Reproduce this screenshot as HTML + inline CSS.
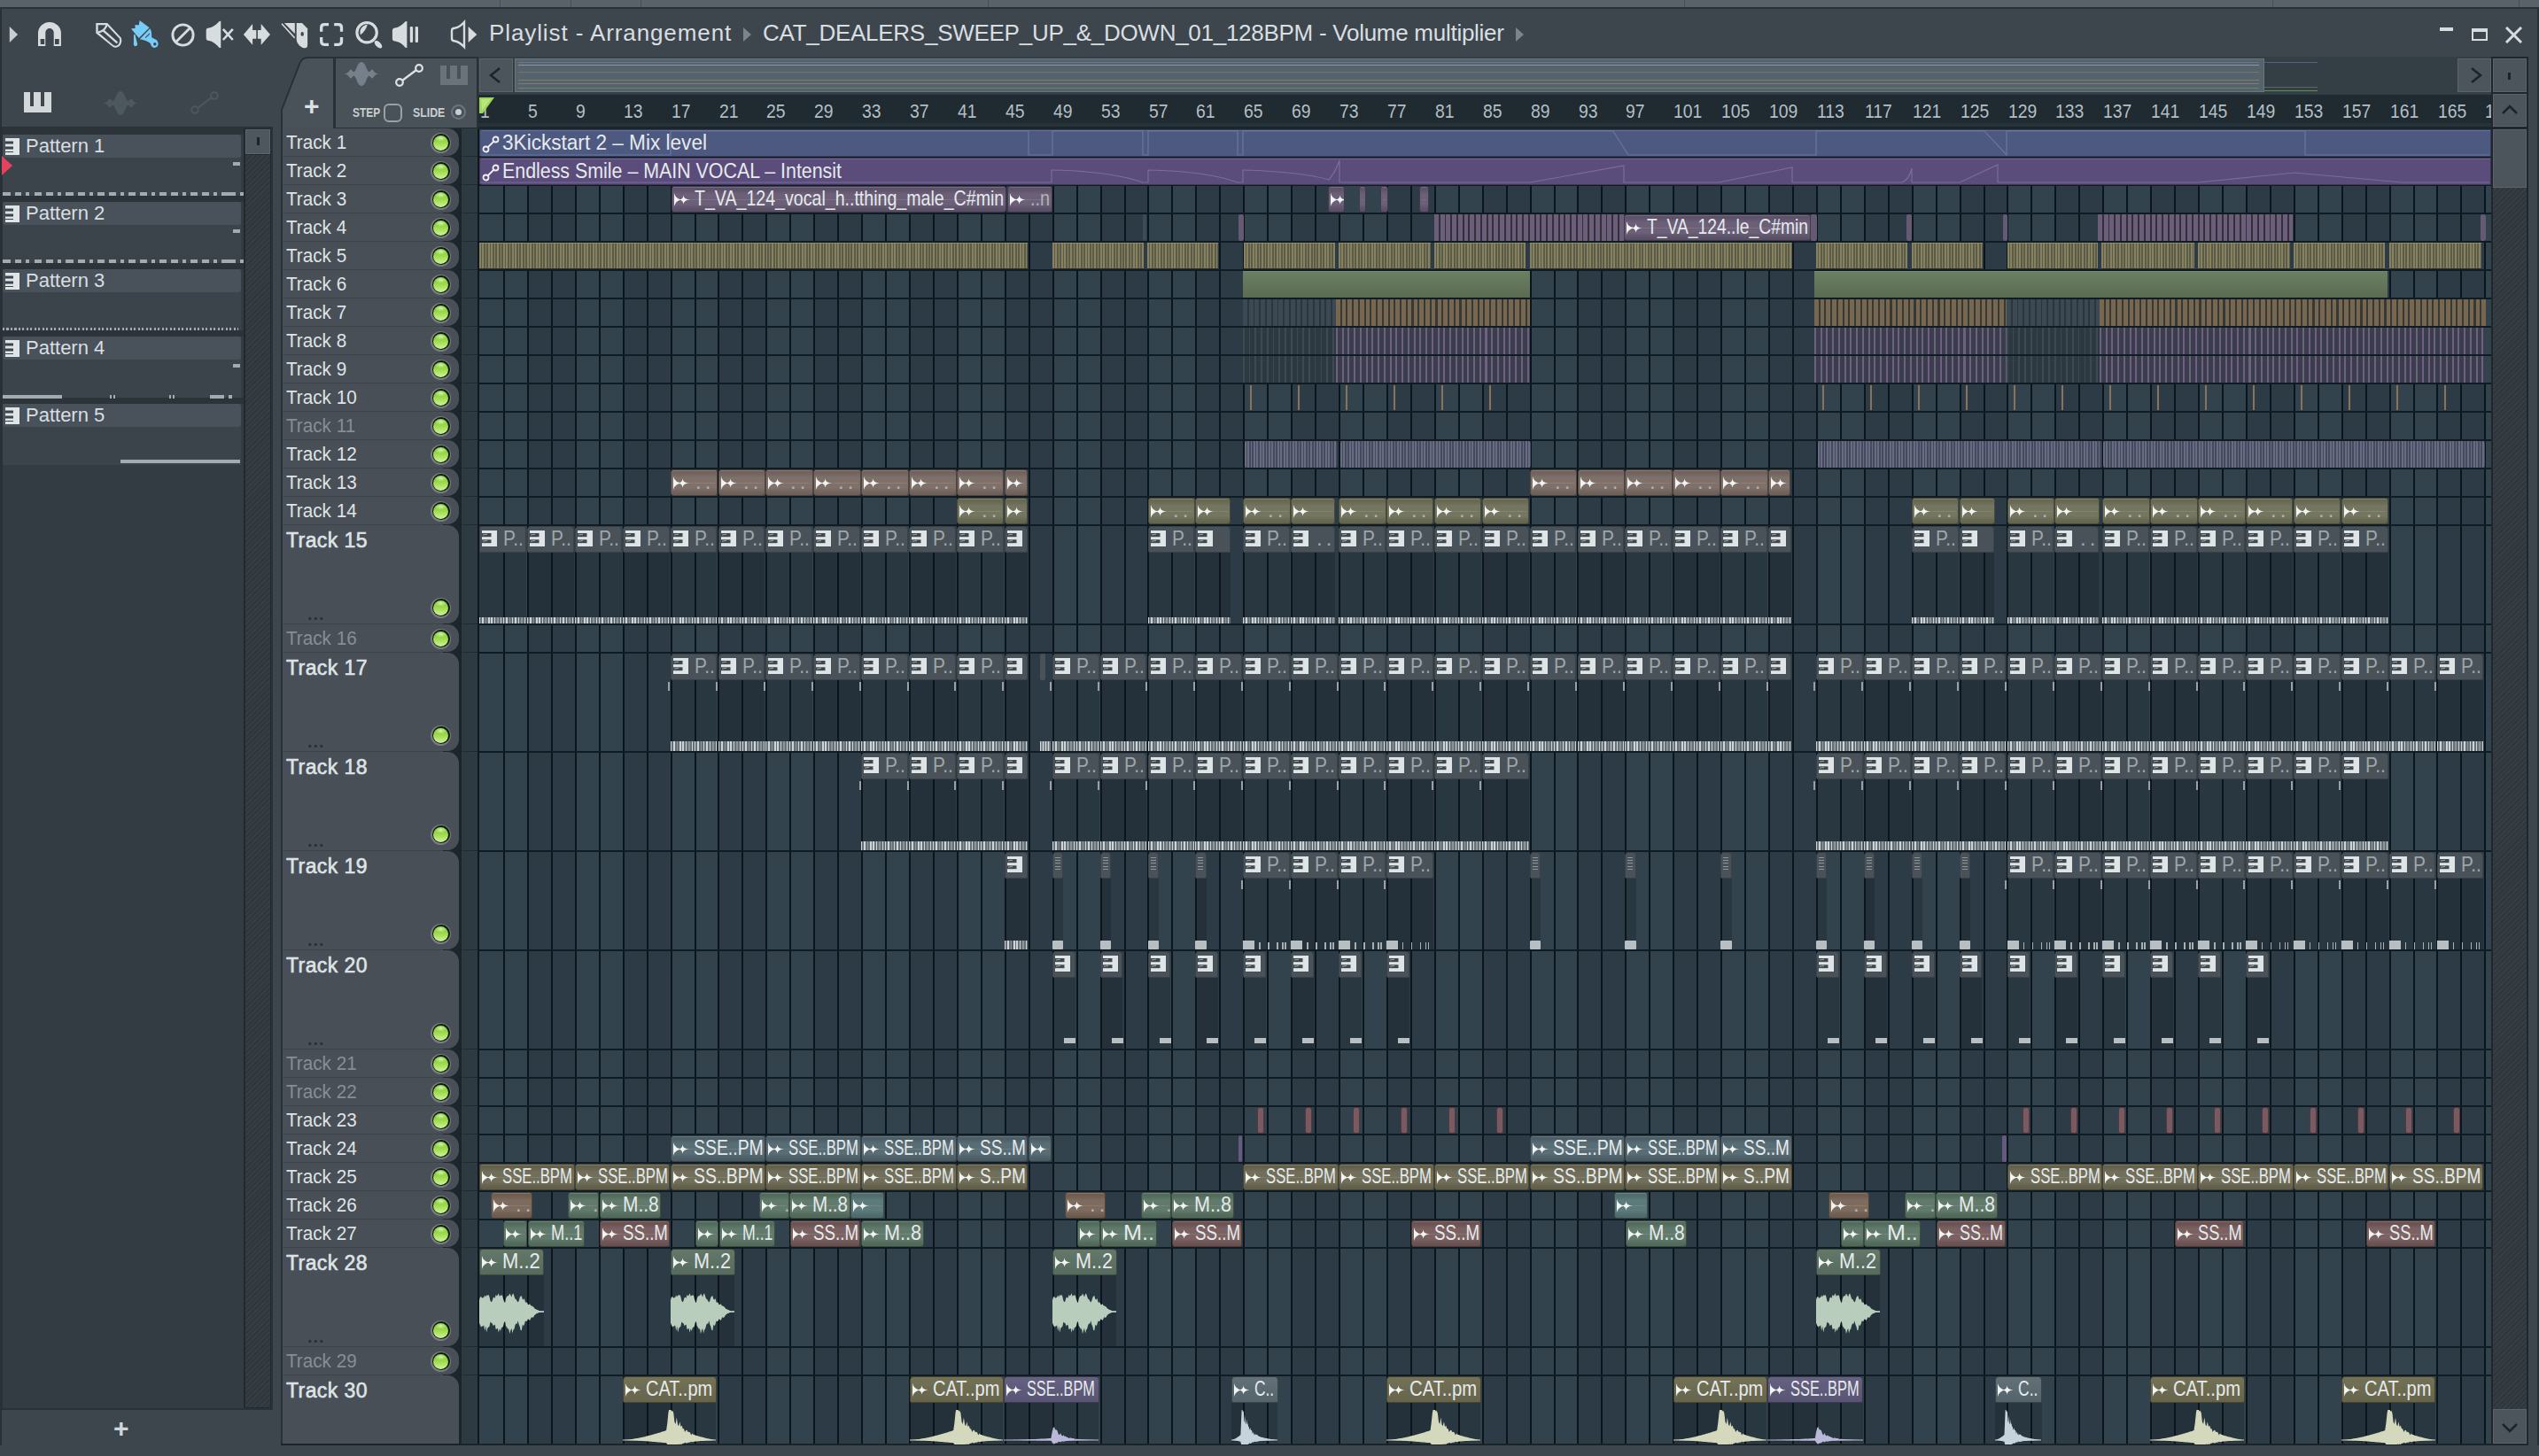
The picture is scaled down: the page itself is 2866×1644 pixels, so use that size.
<!DOCTYPE html><html><head><meta charset="utf-8"><style>
*{margin:0;padding:0;box-sizing:border-box}
html,body{width:2866px;height:1644px;overflow:hidden;background:#3e464d;font-family:"Liberation Sans",sans-serif}
div,span,svg{position:absolute}
.t{white-space:nowrap;color:#d8dde0;line-height:1}
.cl{border-radius:3px;overflow:hidden}
.lab{white-space:nowrap;color:#e6eaec;font-size:24px;line-height:1;transform-origin:0 0;transform:scaleX(0.70);letter-spacing:0.5px}
.lab i{font-style:normal;letter-spacing:1.5px}
</style></head><body><div style="left:0.0px;top:0.0px;width:2866.0px;height:8.0px;background:#59616a"></div>
<div style="left:564.0px;top:0.0px;width:1.0px;height:8.0px;background:#474e55"></div>
<div style="left:644.0px;top:0.0px;width:1.0px;height:8.0px;background:#474e55"></div>
<div style="left:723.0px;top:0.0px;width:1.0px;height:8.0px;background:#474e55"></div>
<div style="left:1115.0px;top:0.0px;width:1.0px;height:8.0px;background:#474e55"></div>
<div style="left:1901.0px;top:0.0px;width:1.0px;height:8.0px;background:#474e55"></div>
<div style="left:2565.0px;top:0.0px;width:1.0px;height:8.0px;background:#474e55"></div>
<div style="left:2843.0px;top:0.0px;width:1.0px;height:8.0px;background:#474e55"></div>
<div style="left:0.0px;top:8.0px;width:2866.0px;height:2.0px;background:#2b3237"></div>
<div style="left:0.0px;top:10.0px;width:2.0px;height:1634.0px;background:#2a3136"></div>
<div style="left:2864.0px;top:10.0px;width:2.0px;height:1634.0px;background:#2a3136"></div>
<svg style="left:0;top:0" width="560" height="60" viewBox="0 0 560 60"><path d="M10.8 29.9 L20.1 39 L10.8 48 Z" fill="#c9ced2"/><path d="M43 51.9 L43 36.5 A13 12.7 0 0 1 68.9 36.5 L68.9 51.9 L60.7 51.9 L60.7 36.7 A4.7 4.7 0 0 0 51.3 36.7 L51.3 51.9 Z" fill="#d7dcdf"/><path d="M45.5 43.9 H50.2 V49.9 H45.8 Z M62 43.9 H66.8 L66.6 49.9 H62 Z" fill="#3e464d"/><path d="M108.3 26 H121.2 L136.6 42.5 Q138.6 47.5 135 51.8 Q131 55.3 127 52.6 L108.3 37.6 Z" fill="#d7dcdf"/><path d="M110.7 28.2 H120.4 L134.8 43.4 Q136 47.6 133.3 50.4 Q130.5 52.8 127.6 50.7 L110.7 36.3 Z" fill="#3e464d"/><path d="M110.9 36.4 Q118 35.5 120.6 28.2" fill="none" stroke="#d7dcdf" stroke-width="2.2"/><path d="M116.2 34.2 L132.4 48.3" stroke="#d7dcdf" stroke-width="2.3"/><g transform="translate(148 23)" fill="#78cdf8"><path d="M0 9.5 L4.8 8.8 L4.2 5.3 L8.8 5.2 L9.6 0 L20.6 8.3 L8.8 20 Z"/><path d="M21.4 9.2 Q23.4 12 23.2 19.2 Q27 20.8 29.2 22.6 Q31.2 25.5 30.2 28.8 Q28.4 31.5 25 30.8 Q22.4 29.6 21.6 25.8 Q17.2 22.6 9.8 21.2 Z"/><path d="M3 16.2 L4.4 15.8 L7.2 27 Q6.8 29.2 4.6 29.2 Q3.2 28.8 2.9 27.2 Z"/><circle cx="26.8" cy="26.8" r="1.7" fill="#3e464d"/><path d="M16.2 19.6 L21 14.8" stroke="#3e464d" stroke-width="1.1"/></g><circle cx="206.5" cy="39.5" r="11.6" fill="none" stroke="#d7dcdf" stroke-width="2.9"/><path d="M198.5 47.5 L214.5 31.5" stroke="#d7dcdf" stroke-width="2.9"/><path d="M232.7 34.3 Q232.7 31.5 236 31.5 Q241.5 30.8 247.6 24 L249.3 23.8 V54.1 L247.6 54 Q241.5 47 236 46.1 Q232.7 46 232.7 43 Z" fill="#d7dcdf"/><path d="M251.8 32.8 L262.8 45 M262.8 32.8 L251.8 45" stroke="#d7dcdf" stroke-width="2.6"/><path d="M274.9 39 L285.1 27.1 V34 H289.3 V43.7 H285.1 V50.8 Z M305 39 L294.7 27.1 V34 H290.9 V43.7 H294.7 V50.8 Z" fill="#d7dcdf"/><path d="M318 26.8 L332.6 42.8" stroke="#d7dcdf" stroke-width="1.6"/><path d="M320.9 26 H332.8 V38.1 Z" fill="#d7dcdf"/><path d="M334.7 26 H341 L347.1 32.2 V51 Q347.1 54.2 344 54.2 Q341 54.2 338 51.5 Q334.7 48.5 334.7 45 Z" fill="#d7dcdf"/><ellipse cx="341.2" cy="38.4" rx="1.7" ry="2.4" fill="#3e464d"/><path d="M362.7 35.8 V31 Q362.7 27.6 366.2 27.6 H371 M377.2 27.6 H382 Q385.5 27.6 385.5 31 V35.8 M385.5 42 V46.8 Q385.5 50.3 382 50.3 H377.2 M371 50.3 H366.2 Q362.7 50.3 362.7 46.8 V42" fill="none" stroke="#d7dcdf" stroke-width="3.3"/><circle cx="414.1" cy="36.7" r="11.2" fill="none" stroke="#d7dcdf" stroke-width="3.2"/><path d="M406.8 39.6 Q405.2 33 410 29.5 Q412.6 28 414.9 27.4 Q413 34.5 406.8 39.6 Z" fill="#d7dcdf"/><ellipse cx="427" cy="50.2" rx="5.4" ry="2.8" transform="rotate(45 427 50.2)" fill="#d7dcdf"/><path d="M442.9 34.5 Q442.9 31.6 446 31.4 Q452 30.5 457.6 24.2 L459.4 24 V54 L457.6 53.8 Q452 47.2 446 46.6 Q442.9 46.4 442.9 43.5 Z" fill="#d7dcdf"/><rect x="462.8" y="30" width="3.3" height="18" rx="1.2" fill="#d7dcdf"/><rect x="468.7" y="30" width="3.3" height="18" rx="1.2" fill="#d7dcdf"/><path d="M510 34.6 Q510 32 513 31.8 Q518.5 31 524 25 V53 Q518.5 47 513 46.2 Q510 46 510 43.4 Z" fill="none" stroke="#d7dcdf" stroke-width="2.4"/><path d="M528.6 30 L538.3 39 L528.6 48 Z" fill="#d7dcdf"/></svg>
<span class="t" style="left:552px;top:24px;font-size:26px;letter-spacing:0.9px;color:#d9dee1">Playlist - Arrangement</span>
<svg style="left:839px;top:31px" width="10" height="16" viewBox="0 0 10 16"><path d="M0 0 L9 8 L0 16Z" fill="#7d858b"/></svg>
<span class="t" style="left:861px;top:24px;font-size:26px;letter-spacing:-0.27px;color:#d9dee1">CAT_DEALERS_SWEEP_UP_&amp;_DOWN_01_128BPM - Volume multiplier</span>
<svg style="left:1711px;top:31px" width="10" height="16" viewBox="0 0 10 16"><path d="M0 0 L9 8 L0 16Z" fill="#7d858b"/></svg>
<div style="left:2754.0px;top:31.0px;width:15.0px;height:4.0px;background:#d7dcdf"></div>
<div style="left:2790.0px;top:32.0px;width:18.0px;height:14.0px;border:2.5px solid #d7dcdf;border-top-width:4px"></div>
<svg style="left:2828px;top:30px" width="19" height="19" viewBox="0 0 19 19"><path d="M1 1 L18 18 M18 1 L1 18" stroke="#d7dcdf" stroke-width="3"/></svg>
<svg style="left:27px;top:104px" width="32" height="23" viewBox="0 0 32 23"><path d="M0 0 H31 V23 H0 Z" fill="#d2d7da"/><rect x="7" y="0" width="4" height="16" fill="#3e454c"/><rect x="19" y="0" width="4" height="16" fill="#3e454c"/></svg>
<svg style="left:116px;top:103px" width="41" height="27" viewBox="0 0 41 27"><path d="M0 13.5 Q4 13.5 6 10.5 Q8 6.5 10 10.5 Q12 13 14 8 Q16.5 0 20 0 Q23.5 0 26 8 Q28 13 30 10.5 Q32 6.5 34 10.5 Q36 13.5 40 13.5 Q36 13.5 34 16.5 Q32 20.5 30 16.5 Q28 14 26 19 Q23.5 27 20 27 Q16.5 27 14 19 Q12 14 10 16.5 Q8 20.5 6 16.5 Q4 13.5 0 13.5 Z" fill="#4d575e"/></svg>
<svg style="left:215px;top:103px" width="33" height="27" viewBox="0 0 33 27"><circle cx="5" cy="21" r="3.8" fill="none" stroke="#4d575e" stroke-width="2"/><circle cx="27" cy="5" r="3.8" fill="none" stroke="#4d575e" stroke-width="2"/><path d="M8 19 L24 7" stroke="#4d575e" stroke-width="2"/></svg>
<div style="left:2.0px;top:143.0px;width:306.0px;height:1449.0px;background:#2a3237"></div>
<div style="left:3.0px;top:145.0px;width:272.0px;height:1445.0px;background:#343c43"></div>
<div style="left:275.0px;top:145.0px;width:31.0px;height:1445.0px;background:#222a2f"></div>
<div style="left:277.0px;top:175.0px;width:28.0px;height:1414.0px;background:repeating-linear-gradient(135deg,#2f373d 0 2px,#363e44 2px 4px)"></div>
<div style="left:277.0px;top:146.0px;width:28.0px;height:28.0px;background:#4f575e;border:1px solid #5d656b"></div>
<div style="left:290.0px;top:155.0px;width:3.0px;height:9.0px;background:#1d2328"></div>
<div style="left:3.0px;top:145.0px;width:272.0px;height:7.0px;background:#2c343a"></div>
<div style="left:3.0px;top:152.0px;width:269.0px;height:26.0px;background:#49525a;border-radius:2px"></div>
<div style="left:3.0px;top:178.0px;width:269.0px;height:43.0px;background:#3b444b"></div>
<svg style="left:6px;top:156px" width="16" height="19" viewBox="0 0 16 19"><rect x="0" y="0" width="16" height="19" fill="#dfe4e6"/><rect x="0" y="3.5" width="9" height="3" fill="#3b444b"/><rect x="0" y="9.5" width="9" height="3" fill="#3b444b"/><rect x="0" y="15" width="9" height="1" fill="#3b444b"/></svg>
<span class="t" style="left:29px;top:154px;font-size:22px;color:#d9dee1">Pattern 1</span>
<div style="left:3.0px;top:221.0px;width:272.0px;height:7.0px;background:#2c343a"></div>
<div style="left:3.0px;top:228.0px;width:269.0px;height:26.0px;background:#49525a;border-radius:2px"></div>
<div style="left:3.0px;top:254.0px;width:269.0px;height:43.0px;background:#3b444b"></div>
<svg style="left:6px;top:232px" width="16" height="19" viewBox="0 0 16 19"><rect x="0" y="0" width="16" height="19" fill="#dfe4e6"/><rect x="0" y="3.5" width="9" height="3" fill="#3b444b"/><rect x="0" y="9.5" width="9" height="3" fill="#3b444b"/><rect x="0" y="15" width="9" height="1" fill="#3b444b"/></svg>
<span class="t" style="left:29px;top:230px;font-size:22px;color:#d9dee1">Pattern 2</span>
<div style="left:3.0px;top:297.0px;width:272.0px;height:7.0px;background:#2c343a"></div>
<div style="left:3.0px;top:304.0px;width:269.0px;height:26.0px;background:#49525a;border-radius:2px"></div>
<div style="left:3.0px;top:330.0px;width:269.0px;height:43.0px;background:#3b444b"></div>
<svg style="left:6px;top:308px" width="16" height="19" viewBox="0 0 16 19"><rect x="0" y="0" width="16" height="19" fill="#dfe4e6"/><rect x="0" y="3.5" width="9" height="3" fill="#3b444b"/><rect x="0" y="9.5" width="9" height="3" fill="#3b444b"/><rect x="0" y="15" width="9" height="1" fill="#3b444b"/></svg>
<span class="t" style="left:29px;top:306px;font-size:22px;color:#d9dee1">Pattern 3</span>
<div style="left:3.0px;top:373.0px;width:272.0px;height:7.0px;background:#2c343a"></div>
<div style="left:3.0px;top:380.0px;width:269.0px;height:26.0px;background:#49525a;border-radius:2px"></div>
<div style="left:3.0px;top:406.0px;width:269.0px;height:43.0px;background:#3b444b"></div>
<svg style="left:6px;top:384px" width="16" height="19" viewBox="0 0 16 19"><rect x="0" y="0" width="16" height="19" fill="#dfe4e6"/><rect x="0" y="3.5" width="9" height="3" fill="#3b444b"/><rect x="0" y="9.5" width="9" height="3" fill="#3b444b"/><rect x="0" y="15" width="9" height="1" fill="#3b444b"/></svg>
<span class="t" style="left:29px;top:382px;font-size:22px;color:#d9dee1">Pattern 4</span>
<div style="left:3.0px;top:449.0px;width:272.0px;height:7.0px;background:#2c343a"></div>
<div style="left:3.0px;top:456.0px;width:269.0px;height:26.0px;background:#49525a;border-radius:2px"></div>
<div style="left:3.0px;top:482.0px;width:269.0px;height:43.0px;background:#3b444b"></div>
<svg style="left:6px;top:460px" width="16" height="19" viewBox="0 0 16 19"><rect x="0" y="0" width="16" height="19" fill="#dfe4e6"/><rect x="0" y="3.5" width="9" height="3" fill="#3b444b"/><rect x="0" y="9.5" width="9" height="3" fill="#3b444b"/><rect x="0" y="15" width="9" height="1" fill="#3b444b"/></svg>
<span class="t" style="left:29px;top:458px;font-size:22px;color:#d9dee1">Pattern 5</span>
<div style="left:3.0px;top:217.0px;width:9.0px;height:4.0px;background:#a4abb0"></div>
<div style="left:17.0px;top:217.0px;width:7.0px;height:4.0px;background:#a4abb0"></div>
<div style="left:29.0px;top:217.0px;width:4.0px;height:4.0px;background:#a4abb0"></div>
<div style="left:39.0px;top:217.0px;width:8.0px;height:4.0px;background:#a4abb0"></div>
<div style="left:52.0px;top:217.0px;width:8.0px;height:4.0px;background:#a4abb0"></div>
<div style="left:65.0px;top:217.0px;width:4.0px;height:4.0px;background:#a4abb0"></div>
<div style="left:74.0px;top:217.0px;width:9.0px;height:4.0px;background:#a4abb0"></div>
<div style="left:88.0px;top:217.0px;width:8.0px;height:4.0px;background:#a4abb0"></div>
<div style="left:101.0px;top:217.0px;width:4.0px;height:4.0px;background:#a4abb0"></div>
<div style="left:110.0px;top:217.0px;width:8.0px;height:4.0px;background:#a4abb0"></div>
<div style="left:123.0px;top:217.0px;width:8.0px;height:4.0px;background:#a4abb0"></div>
<div style="left:136.0px;top:217.0px;width:4.0px;height:4.0px;background:#a4abb0"></div>
<div style="left:145.0px;top:217.0px;width:8.0px;height:4.0px;background:#a4abb0"></div>
<div style="left:158.0px;top:217.0px;width:8.0px;height:4.0px;background:#a4abb0"></div>
<div style="left:171.0px;top:217.0px;width:4.0px;height:4.0px;background:#a4abb0"></div>
<div style="left:180.0px;top:217.0px;width:8.0px;height:4.0px;background:#a4abb0"></div>
<div style="left:193.0px;top:217.0px;width:8.0px;height:4.0px;background:#a4abb0"></div>
<div style="left:206.0px;top:217.0px;width:4.0px;height:4.0px;background:#a4abb0"></div>
<div style="left:215.0px;top:217.0px;width:8.0px;height:4.0px;background:#a4abb0"></div>
<div style="left:228.0px;top:217.0px;width:8.0px;height:4.0px;background:#a4abb0"></div>
<div style="left:241.0px;top:217.0px;width:4.0px;height:4.0px;background:#a4abb0"></div>
<div style="left:250.0px;top:217.0px;width:16.0px;height:4.0px;background:#a4abb0"></div>
<div style="left:271.0px;top:217.0px;width:4.0px;height:4.0px;background:#a4abb0"></div>
<div style="left:3.0px;top:293.0px;width:9.0px;height:4.0px;background:#a4abb0"></div>
<div style="left:17.0px;top:293.0px;width:7.0px;height:4.0px;background:#a4abb0"></div>
<div style="left:29.0px;top:293.0px;width:4.0px;height:4.0px;background:#a4abb0"></div>
<div style="left:39.0px;top:293.0px;width:8.0px;height:4.0px;background:#a4abb0"></div>
<div style="left:52.0px;top:293.0px;width:8.0px;height:4.0px;background:#a4abb0"></div>
<div style="left:65.0px;top:293.0px;width:4.0px;height:4.0px;background:#a4abb0"></div>
<div style="left:74.0px;top:293.0px;width:9.0px;height:4.0px;background:#a4abb0"></div>
<div style="left:88.0px;top:293.0px;width:8.0px;height:4.0px;background:#a4abb0"></div>
<div style="left:101.0px;top:293.0px;width:4.0px;height:4.0px;background:#a4abb0"></div>
<div style="left:110.0px;top:293.0px;width:8.0px;height:4.0px;background:#a4abb0"></div>
<div style="left:123.0px;top:293.0px;width:8.0px;height:4.0px;background:#a4abb0"></div>
<div style="left:136.0px;top:293.0px;width:4.0px;height:4.0px;background:#a4abb0"></div>
<div style="left:145.0px;top:293.0px;width:8.0px;height:4.0px;background:#a4abb0"></div>
<div style="left:158.0px;top:293.0px;width:8.0px;height:4.0px;background:#a4abb0"></div>
<div style="left:171.0px;top:293.0px;width:4.0px;height:4.0px;background:#a4abb0"></div>
<div style="left:180.0px;top:293.0px;width:8.0px;height:4.0px;background:#a4abb0"></div>
<div style="left:193.0px;top:293.0px;width:8.0px;height:4.0px;background:#a4abb0"></div>
<div style="left:206.0px;top:293.0px;width:4.0px;height:4.0px;background:#a4abb0"></div>
<div style="left:215.0px;top:293.0px;width:8.0px;height:4.0px;background:#a4abb0"></div>
<div style="left:228.0px;top:293.0px;width:8.0px;height:4.0px;background:#a4abb0"></div>
<div style="left:241.0px;top:293.0px;width:4.0px;height:4.0px;background:#a4abb0"></div>
<div style="left:250.0px;top:293.0px;width:16.0px;height:4.0px;background:#a4abb0"></div>
<div style="left:271.0px;top:293.0px;width:4.0px;height:4.0px;background:#a4abb0"></div>
<div style="left:263.0px;top:183.0px;width:8.0px;height:4.0px;background:#a4abb0"></div>
<div style="left:263.0px;top:259.0px;width:8.0px;height:4.0px;background:#a4abb0"></div>
<div style="left:3.0px;top:370.0px;width:266.0px;height:3.0px;background:repeating-linear-gradient(90deg,#a4abb0 0 2px,transparent 2px 4.5px)"></div>
<div style="left:3.0px;top:446.0px;width:67.0px;height:4.0px;background:#a4abb0"></div>
<div style="left:124.0px;top:446.0px;width:2.0px;height:4.0px;background:#a4abb0"></div>
<div style="left:128.0px;top:446.0px;width:2.0px;height:4.0px;background:#a4abb0"></div>
<div style="left:191.0px;top:446.0px;width:2.0px;height:4.0px;background:#a4abb0"></div>
<div style="left:195.0px;top:446.0px;width:2.0px;height:4.0px;background:#a4abb0"></div>
<div style="left:237.0px;top:446.0px;width:16.0px;height:4.0px;background:#a4abb0"></div>
<div style="left:258.0px;top:446.0px;width:4.0px;height:4.0px;background:#a4abb0"></div>
<div style="left:263.0px;top:411.0px;width:8.0px;height:4.0px;background:#a4abb0"></div>
<div style="left:136.0px;top:519.0px;width:135.0px;height:4.0px;background:#a4abb0"></div>
<svg style="left:2px;top:176px" width="13" height="22" viewBox="0 0 13 22"><path d="M0 0 L12 11 L0 22Z" fill="#e4435f"/></svg>
<span class="t" style="left:128px;top:1598px;font-size:30px;font-weight:bold;color:#d0d5d8">+</span>
<svg style="left:317px;top:64px" width="223" height="82" viewBox="0 0 223 82"><path d="M1 82 V60 L22 6 Q25 1 31 1 H60 V82 Z" fill="#4a5259" stroke="#2a3136" stroke-width="2"/><rect x="61" y="1" width="161" height="80" fill="#4a5259" stroke="#2a3136" stroke-width="2"/></svg>
<span class="t" style="left:343px;top:105px;font-size:30px;font-weight:bold;color:#dde2e4">+</span>
<svg style="left:388px;top:70px" width="41" height="28" viewBox="0 0 41 28"><path d="M0 13.5 Q4 13.5 6 10.5 Q8 6.5 10 10.5 Q12 13 14 8 Q16.5 0 20 0 Q23.5 0 26 8 Q28 13 30 10.5 Q32 6.5 34 10.5 Q36 13.5 40 13.5 Q36 13.5 34 16.5 Q32 20.5 30 16.5 Q28 14 26 19 Q23.5 27 20 27 Q16.5 27 14 19 Q12 14 10 16.5 Q8 20.5 6 16.5 Q4 13.5 0 13.5 Z" fill="#76808a"/></svg>
<svg style="left:446px;top:72px" width="33" height="27" viewBox="0 0 33 27"><circle cx="5" cy="21" r="3.8" fill="none" stroke="#dfe3e6" stroke-width="2.2"/><circle cx="27" cy="5" r="3.8" fill="none" stroke="#dfe3e6" stroke-width="2.2"/><path d="M8 19 L24 7" stroke="#dfe3e6" stroke-width="2.2"/></svg>
<svg style="left:497px;top:74px" width="31" height="22" viewBox="0 0 31 22"><path d="M0 0 H31 V22 H0 Z" fill="#6a737a"/><rect x="7" y="0" width="4" height="15" fill="#4a5259"/><rect x="19" y="0" width="4" height="15" fill="#4a5259"/></svg>
<span class="t" style="left:398px;top:120px;font-size:14px;font-weight:bold;color:#c9ced2;transform:scaleX(0.85);transform-origin:0 0">STEP</span>
<div style="left:433.0px;top:117.0px;width:21.0px;height:21.0px;border:2px solid #9aa1a6;border-radius:6px"></div>
<span class="t" style="left:466px;top:120px;font-size:14px;font-weight:bold;color:#c9ced2;transform:scaleX(0.88);transform-origin:0 0">SLIDE</span>
<div style="left:509.0px;top:118.0px;width:17.0px;height:17.0px;border:2px solid #6d757b;border-radius:50%"></div>
<div style="left:514.0px;top:123.0px;width:7.0px;height:7.0px;background:#c9ced2;border-radius:50%"></div>
<div style="left:540.0px;top:64.0px;width:2272.0px;height:43.0px;background:#343e45"></div>
<div style="left:541.0px;top:66.0px;width:38.0px;height:38.0px;background:#4d555c;border:1px solid #5c646a"></div>
<svg style="left:552px;top:76px" width="14" height="18"><path d="M12 1 L2 9 L12 17" fill="none" stroke="#1d2328" stroke-width="2.5"/></svg>
<div style="left:581.0px;top:66.0px;width:1975.0px;height:38.0px;background:#56636b;border:1px solid #6a767d"></div>
<div style="left:585.0px;top:70.0px;width:1965.0px;height:1.0px;background:#6f78a8;opacity:0.8"></div>
<div style="left:585.0px;top:73.0px;width:1965.0px;height:1.0px;background:#9aa3a8;opacity:0.8"></div>
<div style="left:585.0px;top:81.0px;width:1965.0px;height:1.0px;background:#6f7a80;opacity:0.8"></div>
<div style="left:585.0px;top:90.0px;width:1965.0px;height:1.0px;background:#7b8a6a;opacity:0.8"></div>
<div style="left:585.0px;top:94.0px;width:1965.0px;height:1.0px;background:#8a7a90;opacity:0.8"></div>
<div style="left:585.0px;top:99.0px;width:1965.0px;height:1.0px;background:#6c8f68;opacity:0.8"></div>
<div style="left:2556.0px;top:70.0px;width:60.0px;height:1.0px;background:#5e5a8a"></div>
<div style="left:2556.0px;top:98.0px;width:60.0px;height:1.0px;background:#5a6a5a"></div>
<div style="left:2556.0px;top:102.0px;width:60.0px;height:1.0px;background:#5e9050"></div>
<div style="left:2774.0px;top:66.0px;width:38.0px;height:38.0px;background:#4d555c;border:1px solid #5c646a"></div>
<svg style="left:2788px;top:76px" width="14" height="18"><path d="M2 1 L12 9 L2 17" fill="none" stroke="#1d2328" stroke-width="2.5"/></svg>
<div style="left:540.0px;top:107.0px;width:2273.0px;height:38.0px;background:#1f2a31"></div>
<div style="left:540.0px;top:139.0px;width:2273.0px;height:5.0px;background:#27333a"></div>
<span class="t" style="left:542.1px;top:115px;font-size:22px;color:#b3bfc4;transform:scaleX(0.88);transform-origin:0 0">1</span>
<span class="t" style="left:595.9px;top:115px;font-size:22px;color:#b3bfc4;transform:scaleX(0.88);transform-origin:0 0">5</span>
<span class="t" style="left:649.8px;top:115px;font-size:22px;color:#b3bfc4;transform:scaleX(0.88);transform-origin:0 0">9</span>
<span class="t" style="left:703.7px;top:115px;font-size:22px;color:#b3bfc4;transform:scaleX(0.88);transform-origin:0 0">13</span>
<span class="t" style="left:757.6px;top:115px;font-size:22px;color:#b3bfc4;transform:scaleX(0.88);transform-origin:0 0">17</span>
<span class="t" style="left:811.5px;top:115px;font-size:22px;color:#b3bfc4;transform:scaleX(0.88);transform-origin:0 0">21</span>
<span class="t" style="left:865.4px;top:115px;font-size:22px;color:#b3bfc4;transform:scaleX(0.88);transform-origin:0 0">25</span>
<span class="t" style="left:919.3px;top:115px;font-size:22px;color:#b3bfc4;transform:scaleX(0.88);transform-origin:0 0">29</span>
<span class="t" style="left:973.2px;top:115px;font-size:22px;color:#b3bfc4;transform:scaleX(0.88);transform-origin:0 0">33</span>
<span class="t" style="left:1027.1px;top:115px;font-size:22px;color:#b3bfc4;transform:scaleX(0.88);transform-origin:0 0">37</span>
<span class="t" style="left:1080.9px;top:115px;font-size:22px;color:#b3bfc4;transform:scaleX(0.88);transform-origin:0 0">41</span>
<span class="t" style="left:1134.8px;top:115px;font-size:22px;color:#b3bfc4;transform:scaleX(0.88);transform-origin:0 0">45</span>
<span class="t" style="left:1188.7px;top:115px;font-size:22px;color:#b3bfc4;transform:scaleX(0.88);transform-origin:0 0">49</span>
<span class="t" style="left:1242.6px;top:115px;font-size:22px;color:#b3bfc4;transform:scaleX(0.88);transform-origin:0 0">53</span>
<span class="t" style="left:1296.5px;top:115px;font-size:22px;color:#b3bfc4;transform:scaleX(0.88);transform-origin:0 0">57</span>
<span class="t" style="left:1350.4px;top:115px;font-size:22px;color:#b3bfc4;transform:scaleX(0.88);transform-origin:0 0">61</span>
<span class="t" style="left:1404.3px;top:115px;font-size:22px;color:#b3bfc4;transform:scaleX(0.88);transform-origin:0 0">65</span>
<span class="t" style="left:1458.2px;top:115px;font-size:22px;color:#b3bfc4;transform:scaleX(0.88);transform-origin:0 0">69</span>
<span class="t" style="left:1512.0px;top:115px;font-size:22px;color:#b3bfc4;transform:scaleX(0.88);transform-origin:0 0">73</span>
<span class="t" style="left:1565.9px;top:115px;font-size:22px;color:#b3bfc4;transform:scaleX(0.88);transform-origin:0 0">77</span>
<span class="t" style="left:1619.8px;top:115px;font-size:22px;color:#b3bfc4;transform:scaleX(0.88);transform-origin:0 0">81</span>
<span class="t" style="left:1673.7px;top:115px;font-size:22px;color:#b3bfc4;transform:scaleX(0.88);transform-origin:0 0">85</span>
<span class="t" style="left:1727.6px;top:115px;font-size:22px;color:#b3bfc4;transform:scaleX(0.88);transform-origin:0 0">89</span>
<span class="t" style="left:1781.5px;top:115px;font-size:22px;color:#b3bfc4;transform:scaleX(0.88);transform-origin:0 0">93</span>
<span class="t" style="left:1835.4px;top:115px;font-size:22px;color:#b3bfc4;transform:scaleX(0.88);transform-origin:0 0">97</span>
<span class="t" style="left:1889.3px;top:115px;font-size:22px;color:#b3bfc4;transform:scaleX(0.88);transform-origin:0 0">101</span>
<span class="t" style="left:1943.1px;top:115px;font-size:22px;color:#b3bfc4;transform:scaleX(0.88);transform-origin:0 0">105</span>
<span class="t" style="left:1997.0px;top:115px;font-size:22px;color:#b3bfc4;transform:scaleX(0.88);transform-origin:0 0">109</span>
<span class="t" style="left:2050.9px;top:115px;font-size:22px;color:#b3bfc4;transform:scaleX(0.88);transform-origin:0 0">113</span>
<span class="t" style="left:2104.8px;top:115px;font-size:22px;color:#b3bfc4;transform:scaleX(0.88);transform-origin:0 0">117</span>
<span class="t" style="left:2158.7px;top:115px;font-size:22px;color:#b3bfc4;transform:scaleX(0.88);transform-origin:0 0">121</span>
<span class="t" style="left:2212.6px;top:115px;font-size:22px;color:#b3bfc4;transform:scaleX(0.88);transform-origin:0 0">125</span>
<span class="t" style="left:2266.5px;top:115px;font-size:22px;color:#b3bfc4;transform:scaleX(0.88);transform-origin:0 0">129</span>
<span class="t" style="left:2320.4px;top:115px;font-size:22px;color:#b3bfc4;transform:scaleX(0.88);transform-origin:0 0">133</span>
<span class="t" style="left:2374.3px;top:115px;font-size:22px;color:#b3bfc4;transform:scaleX(0.88);transform-origin:0 0">137</span>
<span class="t" style="left:2428.1px;top:115px;font-size:22px;color:#b3bfc4;transform:scaleX(0.88);transform-origin:0 0">141</span>
<span class="t" style="left:2482.0px;top:115px;font-size:22px;color:#b3bfc4;transform:scaleX(0.88);transform-origin:0 0">145</span>
<span class="t" style="left:2535.9px;top:115px;font-size:22px;color:#b3bfc4;transform:scaleX(0.88);transform-origin:0 0">149</span>
<span class="t" style="left:2589.8px;top:115px;font-size:22px;color:#b3bfc4;transform:scaleX(0.88);transform-origin:0 0">153</span>
<span class="t" style="left:2643.7px;top:115px;font-size:22px;color:#b3bfc4;transform:scaleX(0.88);transform-origin:0 0">157</span>
<span class="t" style="left:2697.6px;top:115px;font-size:22px;color:#b3bfc4;transform:scaleX(0.88);transform-origin:0 0">161</span>
<span class="t" style="left:2751.5px;top:115px;font-size:22px;color:#b3bfc4;transform:scaleX(0.88);transform-origin:0 0">165</span>
<span class="t" style="left:2805.4px;top:115px;font-size:22px;color:#b3bfc4;transform:scaleX(0.88);transform-origin:0 0">169</span>
<svg style="left:541px;top:110px" width="18" height="19" viewBox="0 0 18 19"><path d="M0 0 H17 L4 18 H0 Z" fill="#9fd45a"/><path d="M2 2 H13 L3 15Z" fill="#b8e67a"/></svg>
<div style="left:2812.0px;top:64.0px;width:42.0px;height:1568.0px;background:#1f272c"></div>
<div style="left:2814.0px;top:212.0px;width:38.0px;height:1418.0px;background:repeating-linear-gradient(135deg,#2f373d 0 2px,#363e44 2px 4px)"></div>
<div style="left:2814.0px;top:66.0px;width:38.0px;height:38.0px;background:#4d555c;border:1px solid #5c646a"></div>
<div style="left:2831.0px;top:82.0px;width:3.0px;height:8.0px;background:#1d2328"></div>
<div style="left:2814.0px;top:106.0px;width:38.0px;height:37.0px;background:#4d555c;border:1px solid #5c646a"></div>
<svg style="left:2824px;top:118px" width="18" height="12"><path d="M1 10 L9 2 L17 10" fill="none" stroke="#1d2328" stroke-width="2.5"/></svg>
<div style="left:2814.0px;top:146.0px;width:38.0px;height:66.0px;background:#4d555c;border:1px solid #5c646a"></div>
<div style="left:2814.0px;top:1591.0px;width:38.0px;height:39.0px;background:#4d555c;border:1px solid #5c646a"></div>
<svg style="left:2824px;top:1606px" width="18" height="12"><path d="M1 2 L9 10 L17 2" fill="none" stroke="#1d2328" stroke-width="2.5"/></svg>
<div style="left:317.0px;top:144.0px;width:2.0px;height:1488.0px;background:#2a3136"></div>
<div style="left:518.0px;top:145.0px;width:23.0px;height:1485.0px;background:#1b252c"></div>
<div style="left:521.0px;top:145.0px;width:18.0px;height:1485.0px;background:#2e3a42"></div>
<div style="left:539.0px;top:145.0px;width:2.0px;height:1485.0px;background:#0e181e"></div>
<div style="left:319.0px;top:145.0px;width:185.0px;height:1485.0px;background:#3c4349"></div>
<div style="left:500.0px;top:145.0px;width:18.0px;height:1485.0px;background:#1c262d"></div>
<div style="left:319.0px;top:145.0px;width:199.0px;height:31.0px;background:#484f57;border-radius:0 13px 13px 0"></div>
<div style="left:521.0px;top:144.0px;width:18.0px;height:1.0px;background:#1f2a31"></div>
<span class="t" style="left:323px;top:150px;font-size:22px;color:#dfe3e5;transform:scaleX(0.94);transform-origin:0 0">Track 1</span>
<div style="left:486px;top:149.5px;width:23px;height:23px;border-radius:50%;background:#767d82"></div>
<div style="left:487.5px;top:151px;width:20px;height:20px;border-radius:50%;background:#0e1b0b"></div>
<div style="left:489px;top:152.5px;width:17px;height:17px;border-radius:50%;background:radial-gradient(ellipse 40% 22% at 50% 18%,rgba(240,255,220,0.75),rgba(240,255,220,0) 100%),linear-gradient(#6fc520,#a5df55 55%,#d0f0a0)"></div>
<div style="left:319.0px;top:177.0px;width:199.0px;height:31.0px;background:#484f57;border-radius:0 13px 13px 0"></div>
<div style="left:521.0px;top:176.0px;width:18.0px;height:1.0px;background:#1f2a31"></div>
<span class="t" style="left:323px;top:182px;font-size:22px;color:#dfe3e5;transform:scaleX(0.94);transform-origin:0 0">Track 2</span>
<div style="left:486px;top:181.5px;width:23px;height:23px;border-radius:50%;background:#767d82"></div>
<div style="left:487.5px;top:183px;width:20px;height:20px;border-radius:50%;background:#0e1b0b"></div>
<div style="left:489px;top:184.5px;width:17px;height:17px;border-radius:50%;background:radial-gradient(ellipse 40% 22% at 50% 18%,rgba(240,255,220,0.75),rgba(240,255,220,0) 100%),linear-gradient(#6fc520,#a5df55 55%,#d0f0a0)"></div>
<div style="left:319.0px;top:209.0px;width:199.0px;height:31.0px;background:#484f57;border-radius:0 13px 13px 0"></div>
<div style="left:521.0px;top:208.0px;width:18.0px;height:1.0px;background:#1f2a31"></div>
<span class="t" style="left:323px;top:214px;font-size:22px;color:#dfe3e5;transform:scaleX(0.94);transform-origin:0 0">Track 3</span>
<div style="left:486px;top:213.5px;width:23px;height:23px;border-radius:50%;background:#767d82"></div>
<div style="left:487.5px;top:215px;width:20px;height:20px;border-radius:50%;background:#0e1b0b"></div>
<div style="left:489px;top:216.5px;width:17px;height:17px;border-radius:50%;background:radial-gradient(ellipse 40% 22% at 50% 18%,rgba(240,255,220,0.75),rgba(240,255,220,0) 100%),linear-gradient(#6fc520,#a5df55 55%,#d0f0a0)"></div>
<div style="left:319.0px;top:241.0px;width:199.0px;height:31.0px;background:#484f57;border-radius:0 13px 13px 0"></div>
<div style="left:521.0px;top:240.0px;width:18.0px;height:1.0px;background:#1f2a31"></div>
<span class="t" style="left:323px;top:246px;font-size:22px;color:#dfe3e5;transform:scaleX(0.94);transform-origin:0 0">Track 4</span>
<div style="left:486px;top:245.5px;width:23px;height:23px;border-radius:50%;background:#767d82"></div>
<div style="left:487.5px;top:247px;width:20px;height:20px;border-radius:50%;background:#0e1b0b"></div>
<div style="left:489px;top:248.5px;width:17px;height:17px;border-radius:50%;background:radial-gradient(ellipse 40% 22% at 50% 18%,rgba(240,255,220,0.75),rgba(240,255,220,0) 100%),linear-gradient(#6fc520,#a5df55 55%,#d0f0a0)"></div>
<div style="left:319.0px;top:273.0px;width:199.0px;height:31.0px;background:#484f57;border-radius:0 13px 13px 0"></div>
<div style="left:521.0px;top:272.0px;width:18.0px;height:1.0px;background:#1f2a31"></div>
<span class="t" style="left:323px;top:278px;font-size:22px;color:#dfe3e5;transform:scaleX(0.94);transform-origin:0 0">Track 5</span>
<div style="left:486px;top:277.5px;width:23px;height:23px;border-radius:50%;background:#767d82"></div>
<div style="left:487.5px;top:279px;width:20px;height:20px;border-radius:50%;background:#0e1b0b"></div>
<div style="left:489px;top:280.5px;width:17px;height:17px;border-radius:50%;background:radial-gradient(ellipse 40% 22% at 50% 18%,rgba(240,255,220,0.75),rgba(240,255,220,0) 100%),linear-gradient(#6fc520,#a5df55 55%,#d0f0a0)"></div>
<div style="left:319.0px;top:305.0px;width:199.0px;height:31.0px;background:#484f57;border-radius:0 13px 13px 0"></div>
<div style="left:521.0px;top:304.0px;width:18.0px;height:1.0px;background:#1f2a31"></div>
<span class="t" style="left:323px;top:310px;font-size:22px;color:#dfe3e5;transform:scaleX(0.94);transform-origin:0 0">Track 6</span>
<div style="left:486px;top:309.5px;width:23px;height:23px;border-radius:50%;background:#767d82"></div>
<div style="left:487.5px;top:311px;width:20px;height:20px;border-radius:50%;background:#0e1b0b"></div>
<div style="left:489px;top:312.5px;width:17px;height:17px;border-radius:50%;background:radial-gradient(ellipse 40% 22% at 50% 18%,rgba(240,255,220,0.75),rgba(240,255,220,0) 100%),linear-gradient(#6fc520,#a5df55 55%,#d0f0a0)"></div>
<div style="left:319.0px;top:337.0px;width:199.0px;height:31.0px;background:#484f57;border-radius:0 13px 13px 0"></div>
<div style="left:521.0px;top:336.0px;width:18.0px;height:1.0px;background:#1f2a31"></div>
<span class="t" style="left:323px;top:342px;font-size:22px;color:#dfe3e5;transform:scaleX(0.94);transform-origin:0 0">Track 7</span>
<div style="left:486px;top:341.5px;width:23px;height:23px;border-radius:50%;background:#767d82"></div>
<div style="left:487.5px;top:343px;width:20px;height:20px;border-radius:50%;background:#0e1b0b"></div>
<div style="left:489px;top:344.5px;width:17px;height:17px;border-radius:50%;background:radial-gradient(ellipse 40% 22% at 50% 18%,rgba(240,255,220,0.75),rgba(240,255,220,0) 100%),linear-gradient(#6fc520,#a5df55 55%,#d0f0a0)"></div>
<div style="left:319.0px;top:369.0px;width:199.0px;height:31.0px;background:#484f57;border-radius:0 13px 13px 0"></div>
<div style="left:521.0px;top:368.0px;width:18.0px;height:1.0px;background:#1f2a31"></div>
<span class="t" style="left:323px;top:374px;font-size:22px;color:#dfe3e5;transform:scaleX(0.94);transform-origin:0 0">Track 8</span>
<div style="left:486px;top:373.5px;width:23px;height:23px;border-radius:50%;background:#767d82"></div>
<div style="left:487.5px;top:375px;width:20px;height:20px;border-radius:50%;background:#0e1b0b"></div>
<div style="left:489px;top:376.5px;width:17px;height:17px;border-radius:50%;background:radial-gradient(ellipse 40% 22% at 50% 18%,rgba(240,255,220,0.75),rgba(240,255,220,0) 100%),linear-gradient(#6fc520,#a5df55 55%,#d0f0a0)"></div>
<div style="left:319.0px;top:401.0px;width:199.0px;height:31.0px;background:#484f57;border-radius:0 13px 13px 0"></div>
<div style="left:521.0px;top:400.0px;width:18.0px;height:1.0px;background:#1f2a31"></div>
<span class="t" style="left:323px;top:406px;font-size:22px;color:#dfe3e5;transform:scaleX(0.94);transform-origin:0 0">Track 9</span>
<div style="left:486px;top:405.5px;width:23px;height:23px;border-radius:50%;background:#767d82"></div>
<div style="left:487.5px;top:407px;width:20px;height:20px;border-radius:50%;background:#0e1b0b"></div>
<div style="left:489px;top:408.5px;width:17px;height:17px;border-radius:50%;background:radial-gradient(ellipse 40% 22% at 50% 18%,rgba(240,255,220,0.75),rgba(240,255,220,0) 100%),linear-gradient(#6fc520,#a5df55 55%,#d0f0a0)"></div>
<div style="left:319.0px;top:433.0px;width:199.0px;height:31.0px;background:#484f57;border-radius:0 13px 13px 0"></div>
<div style="left:521.0px;top:432.0px;width:18.0px;height:1.0px;background:#1f2a31"></div>
<span class="t" style="left:323px;top:438px;font-size:22px;color:#dfe3e5;transform:scaleX(0.94);transform-origin:0 0">Track 10</span>
<div style="left:486px;top:437.5px;width:23px;height:23px;border-radius:50%;background:#767d82"></div>
<div style="left:487.5px;top:439px;width:20px;height:20px;border-radius:50%;background:#0e1b0b"></div>
<div style="left:489px;top:440.5px;width:17px;height:17px;border-radius:50%;background:radial-gradient(ellipse 40% 22% at 50% 18%,rgba(240,255,220,0.75),rgba(240,255,220,0) 100%),linear-gradient(#6fc520,#a5df55 55%,#d0f0a0)"></div>
<div style="left:319.0px;top:465.0px;width:199.0px;height:31.0px;background:#484f57;border-radius:0 13px 13px 0"></div>
<div style="left:521.0px;top:464.0px;width:18.0px;height:1.0px;background:#1f2a31"></div>
<span class="t" style="left:323px;top:470px;font-size:22px;color:#878e93;transform:scaleX(0.94);transform-origin:0 0">Track 11</span>
<div style="left:486px;top:469.5px;width:23px;height:23px;border-radius:50%;background:#767d82"></div>
<div style="left:487.5px;top:471px;width:20px;height:20px;border-radius:50%;background:#0e1b0b"></div>
<div style="left:489px;top:472.5px;width:17px;height:17px;border-radius:50%;background:radial-gradient(ellipse 40% 22% at 50% 18%,rgba(240,255,220,0.75),rgba(240,255,220,0) 100%),linear-gradient(#6fc520,#a5df55 55%,#d0f0a0)"></div>
<div style="left:319.0px;top:497.0px;width:199.0px;height:31.0px;background:#484f57;border-radius:0 13px 13px 0"></div>
<div style="left:521.0px;top:496.0px;width:18.0px;height:1.0px;background:#1f2a31"></div>
<span class="t" style="left:323px;top:502px;font-size:22px;color:#dfe3e5;transform:scaleX(0.94);transform-origin:0 0">Track 12</span>
<div style="left:486px;top:501.5px;width:23px;height:23px;border-radius:50%;background:#767d82"></div>
<div style="left:487.5px;top:503px;width:20px;height:20px;border-radius:50%;background:#0e1b0b"></div>
<div style="left:489px;top:504.5px;width:17px;height:17px;border-radius:50%;background:radial-gradient(ellipse 40% 22% at 50% 18%,rgba(240,255,220,0.75),rgba(240,255,220,0) 100%),linear-gradient(#6fc520,#a5df55 55%,#d0f0a0)"></div>
<div style="left:319.0px;top:529.0px;width:199.0px;height:31.0px;background:#484f57;border-radius:0 13px 13px 0"></div>
<div style="left:521.0px;top:528.0px;width:18.0px;height:1.0px;background:#1f2a31"></div>
<span class="t" style="left:323px;top:534px;font-size:22px;color:#dfe3e5;transform:scaleX(0.94);transform-origin:0 0">Track 13</span>
<div style="left:486px;top:533.5px;width:23px;height:23px;border-radius:50%;background:#767d82"></div>
<div style="left:487.5px;top:535px;width:20px;height:20px;border-radius:50%;background:#0e1b0b"></div>
<div style="left:489px;top:536.5px;width:17px;height:17px;border-radius:50%;background:radial-gradient(ellipse 40% 22% at 50% 18%,rgba(240,255,220,0.75),rgba(240,255,220,0) 100%),linear-gradient(#6fc520,#a5df55 55%,#d0f0a0)"></div>
<div style="left:319.0px;top:561.0px;width:199.0px;height:31.0px;background:#484f57;border-radius:0 13px 13px 0"></div>
<div style="left:521.0px;top:560.0px;width:18.0px;height:1.0px;background:#1f2a31"></div>
<span class="t" style="left:323px;top:566px;font-size:22px;color:#dfe3e5;transform:scaleX(0.94);transform-origin:0 0">Track 14</span>
<div style="left:486px;top:565.5px;width:23px;height:23px;border-radius:50%;background:#767d82"></div>
<div style="left:487.5px;top:567px;width:20px;height:20px;border-radius:50%;background:#0e1b0b"></div>
<div style="left:489px;top:568.5px;width:17px;height:17px;border-radius:50%;background:radial-gradient(ellipse 40% 22% at 50% 18%,rgba(240,255,220,0.75),rgba(240,255,220,0) 100%),linear-gradient(#6fc520,#a5df55 55%,#d0f0a0)"></div>
<div style="left:319.0px;top:593.0px;width:199.0px;height:111.0px;background:#484f57;border-radius:0 13px 13px 0"></div>
<div style="left:521.0px;top:592.0px;width:18.0px;height:1.0px;background:#1f2a31"></div>
<span class="t" style="left:323px;top:599px;font-size:23px;color:#dfe3e5;-webkit-text-stroke:0.6px #dfe3e5;letter-spacing:0.4px">Track 15</span>
<div style="left:486px;top:674.5px;width:23px;height:23px;border-radius:50%;background:#767d82"></div>
<div style="left:487.5px;top:676px;width:20px;height:20px;border-radius:50%;background:#0e1b0b"></div>
<div style="left:489px;top:677.5px;width:17px;height:17px;border-radius:50%;background:radial-gradient(ellipse 40% 22% at 50% 18%,rgba(240,255,220,0.75),rgba(240,255,220,0) 100%),linear-gradient(#6fc520,#a5df55 55%,#d0f0a0)"></div>
<span class="t" style="left:347px;top:683px;font-size:20px;font-weight:bold;color:#2a3035;letter-spacing:1px">...</span>
<div style="left:319.0px;top:705.0px;width:199.0px;height:31.0px;background:#484f57;border-radius:0 13px 13px 0"></div>
<div style="left:521.0px;top:704.0px;width:18.0px;height:1.0px;background:#1f2a31"></div>
<span class="t" style="left:323px;top:710px;font-size:22px;color:#878e93;transform:scaleX(0.94);transform-origin:0 0">Track 16</span>
<div style="left:486px;top:709.5px;width:23px;height:23px;border-radius:50%;background:#767d82"></div>
<div style="left:487.5px;top:711px;width:20px;height:20px;border-radius:50%;background:#0e1b0b"></div>
<div style="left:489px;top:712.5px;width:17px;height:17px;border-radius:50%;background:radial-gradient(ellipse 40% 22% at 50% 18%,rgba(240,255,220,0.75),rgba(240,255,220,0) 100%),linear-gradient(#6fc520,#a5df55 55%,#d0f0a0)"></div>
<div style="left:319.0px;top:737.0px;width:199.0px;height:111.0px;background:#484f57;border-radius:0 13px 13px 0"></div>
<div style="left:521.0px;top:736.0px;width:18.0px;height:1.0px;background:#1f2a31"></div>
<span class="t" style="left:323px;top:743px;font-size:23px;color:#dfe3e5;-webkit-text-stroke:0.6px #dfe3e5;letter-spacing:0.4px">Track 17</span>
<div style="left:486px;top:818.5px;width:23px;height:23px;border-radius:50%;background:#767d82"></div>
<div style="left:487.5px;top:820px;width:20px;height:20px;border-radius:50%;background:#0e1b0b"></div>
<div style="left:489px;top:821.5px;width:17px;height:17px;border-radius:50%;background:radial-gradient(ellipse 40% 22% at 50% 18%,rgba(240,255,220,0.75),rgba(240,255,220,0) 100%),linear-gradient(#6fc520,#a5df55 55%,#d0f0a0)"></div>
<span class="t" style="left:347px;top:827px;font-size:20px;font-weight:bold;color:#2a3035;letter-spacing:1px">...</span>
<div style="left:319.0px;top:849.0px;width:199.0px;height:111.0px;background:#484f57;border-radius:0 13px 13px 0"></div>
<div style="left:521.0px;top:848.0px;width:18.0px;height:1.0px;background:#1f2a31"></div>
<span class="t" style="left:323px;top:855px;font-size:23px;color:#dfe3e5;-webkit-text-stroke:0.6px #dfe3e5;letter-spacing:0.4px">Track 18</span>
<div style="left:486px;top:930.5px;width:23px;height:23px;border-radius:50%;background:#767d82"></div>
<div style="left:487.5px;top:932px;width:20px;height:20px;border-radius:50%;background:#0e1b0b"></div>
<div style="left:489px;top:933.5px;width:17px;height:17px;border-radius:50%;background:radial-gradient(ellipse 40% 22% at 50% 18%,rgba(240,255,220,0.75),rgba(240,255,220,0) 100%),linear-gradient(#6fc520,#a5df55 55%,#d0f0a0)"></div>
<span class="t" style="left:347px;top:939px;font-size:20px;font-weight:bold;color:#2a3035;letter-spacing:1px">...</span>
<div style="left:319.0px;top:961.0px;width:199.0px;height:111.0px;background:#484f57;border-radius:0 13px 13px 0"></div>
<div style="left:521.0px;top:960.0px;width:18.0px;height:1.0px;background:#1f2a31"></div>
<span class="t" style="left:323px;top:967px;font-size:23px;color:#dfe3e5;-webkit-text-stroke:0.6px #dfe3e5;letter-spacing:0.4px">Track 19</span>
<div style="left:486px;top:1042.5px;width:23px;height:23px;border-radius:50%;background:#767d82"></div>
<div style="left:487.5px;top:1044px;width:20px;height:20px;border-radius:50%;background:#0e1b0b"></div>
<div style="left:489px;top:1045.5px;width:17px;height:17px;border-radius:50%;background:radial-gradient(ellipse 40% 22% at 50% 18%,rgba(240,255,220,0.75),rgba(240,255,220,0) 100%),linear-gradient(#6fc520,#a5df55 55%,#d0f0a0)"></div>
<span class="t" style="left:347px;top:1051px;font-size:20px;font-weight:bold;color:#2a3035;letter-spacing:1px">...</span>
<div style="left:319.0px;top:1073.0px;width:199.0px;height:111.0px;background:#484f57;border-radius:0 13px 13px 0"></div>
<div style="left:521.0px;top:1072.0px;width:18.0px;height:1.0px;background:#1f2a31"></div>
<span class="t" style="left:323px;top:1079px;font-size:23px;color:#dfe3e5;-webkit-text-stroke:0.6px #dfe3e5;letter-spacing:0.4px">Track 20</span>
<div style="left:486px;top:1154.5px;width:23px;height:23px;border-radius:50%;background:#767d82"></div>
<div style="left:487.5px;top:1156px;width:20px;height:20px;border-radius:50%;background:#0e1b0b"></div>
<div style="left:489px;top:1157.5px;width:17px;height:17px;border-radius:50%;background:radial-gradient(ellipse 40% 22% at 50% 18%,rgba(240,255,220,0.75),rgba(240,255,220,0) 100%),linear-gradient(#6fc520,#a5df55 55%,#d0f0a0)"></div>
<span class="t" style="left:347px;top:1163px;font-size:20px;font-weight:bold;color:#2a3035;letter-spacing:1px">...</span>
<div style="left:319.0px;top:1185.0px;width:199.0px;height:31.0px;background:#484f57;border-radius:0 13px 13px 0"></div>
<div style="left:521.0px;top:1184.0px;width:18.0px;height:1.0px;background:#1f2a31"></div>
<span class="t" style="left:323px;top:1190px;font-size:22px;color:#878e93;transform:scaleX(0.94);transform-origin:0 0">Track 21</span>
<div style="left:486px;top:1189.5px;width:23px;height:23px;border-radius:50%;background:#767d82"></div>
<div style="left:487.5px;top:1191px;width:20px;height:20px;border-radius:50%;background:#0e1b0b"></div>
<div style="left:489px;top:1192.5px;width:17px;height:17px;border-radius:50%;background:radial-gradient(ellipse 40% 22% at 50% 18%,rgba(240,255,220,0.75),rgba(240,255,220,0) 100%),linear-gradient(#6fc520,#a5df55 55%,#d0f0a0)"></div>
<div style="left:319.0px;top:1217.0px;width:199.0px;height:31.0px;background:#484f57;border-radius:0 13px 13px 0"></div>
<div style="left:521.0px;top:1216.0px;width:18.0px;height:1.0px;background:#1f2a31"></div>
<span class="t" style="left:323px;top:1222px;font-size:22px;color:#878e93;transform:scaleX(0.94);transform-origin:0 0">Track 22</span>
<div style="left:486px;top:1221.5px;width:23px;height:23px;border-radius:50%;background:#767d82"></div>
<div style="left:487.5px;top:1223px;width:20px;height:20px;border-radius:50%;background:#0e1b0b"></div>
<div style="left:489px;top:1224.5px;width:17px;height:17px;border-radius:50%;background:radial-gradient(ellipse 40% 22% at 50% 18%,rgba(240,255,220,0.75),rgba(240,255,220,0) 100%),linear-gradient(#6fc520,#a5df55 55%,#d0f0a0)"></div>
<div style="left:319.0px;top:1249.0px;width:199.0px;height:31.0px;background:#484f57;border-radius:0 13px 13px 0"></div>
<div style="left:521.0px;top:1248.0px;width:18.0px;height:1.0px;background:#1f2a31"></div>
<span class="t" style="left:323px;top:1254px;font-size:22px;color:#dfe3e5;transform:scaleX(0.94);transform-origin:0 0">Track 23</span>
<div style="left:486px;top:1253.5px;width:23px;height:23px;border-radius:50%;background:#767d82"></div>
<div style="left:487.5px;top:1255px;width:20px;height:20px;border-radius:50%;background:#0e1b0b"></div>
<div style="left:489px;top:1256.5px;width:17px;height:17px;border-radius:50%;background:radial-gradient(ellipse 40% 22% at 50% 18%,rgba(240,255,220,0.75),rgba(240,255,220,0) 100%),linear-gradient(#6fc520,#a5df55 55%,#d0f0a0)"></div>
<div style="left:319.0px;top:1281.0px;width:199.0px;height:31.0px;background:#484f57;border-radius:0 13px 13px 0"></div>
<div style="left:521.0px;top:1280.0px;width:18.0px;height:1.0px;background:#1f2a31"></div>
<span class="t" style="left:323px;top:1286px;font-size:22px;color:#dfe3e5;transform:scaleX(0.94);transform-origin:0 0">Track 24</span>
<div style="left:486px;top:1285.5px;width:23px;height:23px;border-radius:50%;background:#767d82"></div>
<div style="left:487.5px;top:1287px;width:20px;height:20px;border-radius:50%;background:#0e1b0b"></div>
<div style="left:489px;top:1288.5px;width:17px;height:17px;border-radius:50%;background:radial-gradient(ellipse 40% 22% at 50% 18%,rgba(240,255,220,0.75),rgba(240,255,220,0) 100%),linear-gradient(#6fc520,#a5df55 55%,#d0f0a0)"></div>
<div style="left:319.0px;top:1313.0px;width:199.0px;height:31.0px;background:#484f57;border-radius:0 13px 13px 0"></div>
<div style="left:521.0px;top:1312.0px;width:18.0px;height:1.0px;background:#1f2a31"></div>
<span class="t" style="left:323px;top:1318px;font-size:22px;color:#dfe3e5;transform:scaleX(0.94);transform-origin:0 0">Track 25</span>
<div style="left:486px;top:1317.5px;width:23px;height:23px;border-radius:50%;background:#767d82"></div>
<div style="left:487.5px;top:1319px;width:20px;height:20px;border-radius:50%;background:#0e1b0b"></div>
<div style="left:489px;top:1320.5px;width:17px;height:17px;border-radius:50%;background:radial-gradient(ellipse 40% 22% at 50% 18%,rgba(240,255,220,0.75),rgba(240,255,220,0) 100%),linear-gradient(#6fc520,#a5df55 55%,#d0f0a0)"></div>
<div style="left:319.0px;top:1345.0px;width:199.0px;height:31.0px;background:#484f57;border-radius:0 13px 13px 0"></div>
<div style="left:521.0px;top:1344.0px;width:18.0px;height:1.0px;background:#1f2a31"></div>
<span class="t" style="left:323px;top:1350px;font-size:22px;color:#dfe3e5;transform:scaleX(0.94);transform-origin:0 0">Track 26</span>
<div style="left:486px;top:1349.5px;width:23px;height:23px;border-radius:50%;background:#767d82"></div>
<div style="left:487.5px;top:1351px;width:20px;height:20px;border-radius:50%;background:#0e1b0b"></div>
<div style="left:489px;top:1352.5px;width:17px;height:17px;border-radius:50%;background:radial-gradient(ellipse 40% 22% at 50% 18%,rgba(240,255,220,0.75),rgba(240,255,220,0) 100%),linear-gradient(#6fc520,#a5df55 55%,#d0f0a0)"></div>
<div style="left:319.0px;top:1377.0px;width:199.0px;height:31.0px;background:#484f57;border-radius:0 13px 13px 0"></div>
<div style="left:521.0px;top:1376.0px;width:18.0px;height:1.0px;background:#1f2a31"></div>
<span class="t" style="left:323px;top:1382px;font-size:22px;color:#dfe3e5;transform:scaleX(0.94);transform-origin:0 0">Track 27</span>
<div style="left:486px;top:1381.5px;width:23px;height:23px;border-radius:50%;background:#767d82"></div>
<div style="left:487.5px;top:1383px;width:20px;height:20px;border-radius:50%;background:#0e1b0b"></div>
<div style="left:489px;top:1384.5px;width:17px;height:17px;border-radius:50%;background:radial-gradient(ellipse 40% 22% at 50% 18%,rgba(240,255,220,0.75),rgba(240,255,220,0) 100%),linear-gradient(#6fc520,#a5df55 55%,#d0f0a0)"></div>
<div style="left:319.0px;top:1409.0px;width:199.0px;height:111.0px;background:#484f57;border-radius:0 13px 13px 0"></div>
<div style="left:521.0px;top:1408.0px;width:18.0px;height:1.0px;background:#1f2a31"></div>
<span class="t" style="left:323px;top:1415px;font-size:23px;color:#dfe3e5;-webkit-text-stroke:0.6px #dfe3e5;letter-spacing:0.4px">Track 28</span>
<div style="left:486px;top:1490.5px;width:23px;height:23px;border-radius:50%;background:#767d82"></div>
<div style="left:487.5px;top:1492px;width:20px;height:20px;border-radius:50%;background:#0e1b0b"></div>
<div style="left:489px;top:1493.5px;width:17px;height:17px;border-radius:50%;background:radial-gradient(ellipse 40% 22% at 50% 18%,rgba(240,255,220,0.75),rgba(240,255,220,0) 100%),linear-gradient(#6fc520,#a5df55 55%,#d0f0a0)"></div>
<span class="t" style="left:347px;top:1499px;font-size:20px;font-weight:bold;color:#2a3035;letter-spacing:1px">...</span>
<div style="left:319.0px;top:1521.0px;width:199.0px;height:31.0px;background:#484f57;border-radius:0 13px 13px 0"></div>
<div style="left:521.0px;top:1520.0px;width:18.0px;height:1.0px;background:#1f2a31"></div>
<span class="t" style="left:323px;top:1526px;font-size:22px;color:#878e93;transform:scaleX(0.94);transform-origin:0 0">Track 29</span>
<div style="left:486px;top:1525.5px;width:23px;height:23px;border-radius:50%;background:#767d82"></div>
<div style="left:487.5px;top:1527px;width:20px;height:20px;border-radius:50%;background:#0e1b0b"></div>
<div style="left:489px;top:1528.5px;width:17px;height:17px;border-radius:50%;background:radial-gradient(ellipse 40% 22% at 50% 18%,rgba(240,255,220,0.75),rgba(240,255,220,0) 100%),linear-gradient(#6fc520,#a5df55 55%,#d0f0a0)"></div>
<div style="left:319.0px;top:1553.0px;width:199.0px;height:77.0px;background:#484f57;border-radius:0 13px 0 0"></div>
<div style="left:521.0px;top:1552.0px;width:18.0px;height:1.0px;background:#1f2a31"></div>
<span class="t" style="left:323px;top:1559px;font-size:23px;color:#dfe3e5;-webkit-text-stroke:0.6px #dfe3e5;letter-spacing:0.4px">Track 30</span>
<div style="left:541.0px;top:145.0px;width:2271.0px;height:1485.0px;background:#33434d"></div>
<div style="left:594.9px;top:145.0px;width:53.9px;height:1485.0px;background:#2c3b45"></div>
<div style="left:702.7px;top:145.0px;width:53.9px;height:1485.0px;background:#2c3b45"></div>
<div style="left:810.5px;top:145.0px;width:53.9px;height:1485.0px;background:#2c3b45"></div>
<div style="left:918.3px;top:145.0px;width:53.9px;height:1485.0px;background:#2c3b45"></div>
<div style="left:1026.1px;top:145.0px;width:53.9px;height:1485.0px;background:#2c3b45"></div>
<div style="left:1133.8px;top:145.0px;width:53.9px;height:1485.0px;background:#2c3b45"></div>
<div style="left:1241.6px;top:145.0px;width:53.9px;height:1485.0px;background:#2c3b45"></div>
<div style="left:1349.4px;top:145.0px;width:53.9px;height:1485.0px;background:#2c3b45"></div>
<div style="left:1457.2px;top:145.0px;width:53.9px;height:1485.0px;background:#2c3b45"></div>
<div style="left:1564.9px;top:145.0px;width:53.9px;height:1485.0px;background:#2c3b45"></div>
<div style="left:1672.7px;top:145.0px;width:53.9px;height:1485.0px;background:#2c3b45"></div>
<div style="left:1780.5px;top:145.0px;width:53.9px;height:1485.0px;background:#2c3b45"></div>
<div style="left:1888.3px;top:145.0px;width:53.9px;height:1485.0px;background:#2c3b45"></div>
<div style="left:1996.0px;top:145.0px;width:53.9px;height:1485.0px;background:#2c3b45"></div>
<div style="left:2103.8px;top:145.0px;width:53.9px;height:1485.0px;background:#2c3b45"></div>
<div style="left:2211.6px;top:145.0px;width:53.9px;height:1485.0px;background:#2c3b45"></div>
<div style="left:2319.4px;top:145.0px;width:53.9px;height:1485.0px;background:#2c3b45"></div>
<div style="left:2427.1px;top:145.0px;width:53.9px;height:1485.0px;background:#2c3b45"></div>
<div style="left:2534.9px;top:145.0px;width:53.9px;height:1485.0px;background:#2c3b45"></div>
<div style="left:2642.7px;top:145.0px;width:53.9px;height:1485.0px;background:#2c3b45"></div>
<div style="left:2750.5px;top:145.0px;width:53.9px;height:1485.0px;background:#2c3b45"></div>
<div style="left:568.0px;top:145.0px;width:2.0px;height:1485.0px;background:#0b161c"></div>
<div style="left:595.0px;top:145.0px;width:2.0px;height:1485.0px;background:#0b161c"></div>
<div style="left:622.0px;top:145.0px;width:2.0px;height:1485.0px;background:#0b161c"></div>
<div style="left:649.0px;top:145.0px;width:2.0px;height:1485.0px;background:#0b161c"></div>
<div style="left:676.0px;top:145.0px;width:2.0px;height:1485.0px;background:#0b161c"></div>
<div style="left:703.0px;top:145.0px;width:2.0px;height:1485.0px;background:#0b161c"></div>
<div style="left:730.0px;top:145.0px;width:2.0px;height:1485.0px;background:#0b161c"></div>
<div style="left:757.0px;top:145.0px;width:2.0px;height:1485.0px;background:#0b161c"></div>
<div style="left:784.0px;top:145.0px;width:2.0px;height:1485.0px;background:#0b161c"></div>
<div style="left:810.0px;top:145.0px;width:2.0px;height:1485.0px;background:#0b161c"></div>
<div style="left:837.0px;top:145.0px;width:2.0px;height:1485.0px;background:#0b161c"></div>
<div style="left:864.0px;top:145.0px;width:2.0px;height:1485.0px;background:#0b161c"></div>
<div style="left:891.0px;top:145.0px;width:2.0px;height:1485.0px;background:#0b161c"></div>
<div style="left:918.0px;top:145.0px;width:2.0px;height:1485.0px;background:#0b161c"></div>
<div style="left:945.0px;top:145.0px;width:2.0px;height:1485.0px;background:#0b161c"></div>
<div style="left:972.0px;top:145.0px;width:2.0px;height:1485.0px;background:#0b161c"></div>
<div style="left:999.0px;top:145.0px;width:2.0px;height:1485.0px;background:#0b161c"></div>
<div style="left:1026.0px;top:145.0px;width:2.0px;height:1485.0px;background:#0b161c"></div>
<div style="left:1053.0px;top:145.0px;width:2.0px;height:1485.0px;background:#0b161c"></div>
<div style="left:1080.0px;top:145.0px;width:2.0px;height:1485.0px;background:#0b161c"></div>
<div style="left:1107.0px;top:145.0px;width:2.0px;height:1485.0px;background:#0b161c"></div>
<div style="left:1134.0px;top:145.0px;width:2.0px;height:1485.0px;background:#0b161c"></div>
<div style="left:1161.0px;top:145.0px;width:2.0px;height:1485.0px;background:#0b161c"></div>
<div style="left:1188.0px;top:145.0px;width:2.0px;height:1485.0px;background:#0b161c"></div>
<div style="left:1215.0px;top:145.0px;width:2.0px;height:1485.0px;background:#0b161c"></div>
<div style="left:1242.0px;top:145.0px;width:2.0px;height:1485.0px;background:#0b161c"></div>
<div style="left:1269.0px;top:145.0px;width:2.0px;height:1485.0px;background:#0b161c"></div>
<div style="left:1295.0px;top:145.0px;width:2.0px;height:1485.0px;background:#0b161c"></div>
<div style="left:1322.0px;top:145.0px;width:2.0px;height:1485.0px;background:#0b161c"></div>
<div style="left:1349.0px;top:145.0px;width:2.0px;height:1485.0px;background:#0b161c"></div>
<div style="left:1376.0px;top:145.0px;width:2.0px;height:1485.0px;background:#0b161c"></div>
<div style="left:1403.0px;top:145.0px;width:2.0px;height:1485.0px;background:#0b161c"></div>
<div style="left:1430.0px;top:145.0px;width:2.0px;height:1485.0px;background:#0b161c"></div>
<div style="left:1457.0px;top:145.0px;width:2.0px;height:1485.0px;background:#0b161c"></div>
<div style="left:1484.0px;top:145.0px;width:2.0px;height:1485.0px;background:#0b161c"></div>
<div style="left:1511.0px;top:145.0px;width:2.0px;height:1485.0px;background:#0b161c"></div>
<div style="left:1538.0px;top:145.0px;width:2.0px;height:1485.0px;background:#0b161c"></div>
<div style="left:1565.0px;top:145.0px;width:2.0px;height:1485.0px;background:#0b161c"></div>
<div style="left:1592.0px;top:145.0px;width:2.0px;height:1485.0px;background:#0b161c"></div>
<div style="left:1619.0px;top:145.0px;width:2.0px;height:1485.0px;background:#0b161c"></div>
<div style="left:1646.0px;top:145.0px;width:2.0px;height:1485.0px;background:#0b161c"></div>
<div style="left:1673.0px;top:145.0px;width:2.0px;height:1485.0px;background:#0b161c"></div>
<div style="left:1700.0px;top:145.0px;width:2.0px;height:1485.0px;background:#0b161c"></div>
<div style="left:1727.0px;top:145.0px;width:2.0px;height:1485.0px;background:#0b161c"></div>
<div style="left:1754.0px;top:145.0px;width:2.0px;height:1485.0px;background:#0b161c"></div>
<div style="left:1780.0px;top:145.0px;width:2.0px;height:1485.0px;background:#0b161c"></div>
<div style="left:1807.0px;top:145.0px;width:2.0px;height:1485.0px;background:#0b161c"></div>
<div style="left:1834.0px;top:145.0px;width:2.0px;height:1485.0px;background:#0b161c"></div>
<div style="left:1861.0px;top:145.0px;width:2.0px;height:1485.0px;background:#0b161c"></div>
<div style="left:1888.0px;top:145.0px;width:2.0px;height:1485.0px;background:#0b161c"></div>
<div style="left:1915.0px;top:145.0px;width:2.0px;height:1485.0px;background:#0b161c"></div>
<div style="left:1942.0px;top:145.0px;width:2.0px;height:1485.0px;background:#0b161c"></div>
<div style="left:1969.0px;top:145.0px;width:2.0px;height:1485.0px;background:#0b161c"></div>
<div style="left:1996.0px;top:145.0px;width:2.0px;height:1485.0px;background:#0b161c"></div>
<div style="left:2023.0px;top:145.0px;width:2.0px;height:1485.0px;background:#0b161c"></div>
<div style="left:2050.0px;top:145.0px;width:2.0px;height:1485.0px;background:#0b161c"></div>
<div style="left:2077.0px;top:145.0px;width:2.0px;height:1485.0px;background:#0b161c"></div>
<div style="left:2104.0px;top:145.0px;width:2.0px;height:1485.0px;background:#0b161c"></div>
<div style="left:2131.0px;top:145.0px;width:2.0px;height:1485.0px;background:#0b161c"></div>
<div style="left:2158.0px;top:145.0px;width:2.0px;height:1485.0px;background:#0b161c"></div>
<div style="left:2185.0px;top:145.0px;width:2.0px;height:1485.0px;background:#0b161c"></div>
<div style="left:2212.0px;top:145.0px;width:2.0px;height:1485.0px;background:#0b161c"></div>
<div style="left:2239.0px;top:145.0px;width:2.0px;height:1485.0px;background:#0b161c"></div>
<div style="left:2265.0px;top:145.0px;width:2.0px;height:1485.0px;background:#0b161c"></div>
<div style="left:2292.0px;top:145.0px;width:2.0px;height:1485.0px;background:#0b161c"></div>
<div style="left:2319.0px;top:145.0px;width:2.0px;height:1485.0px;background:#0b161c"></div>
<div style="left:2346.0px;top:145.0px;width:2.0px;height:1485.0px;background:#0b161c"></div>
<div style="left:2373.0px;top:145.0px;width:2.0px;height:1485.0px;background:#0b161c"></div>
<div style="left:2400.0px;top:145.0px;width:2.0px;height:1485.0px;background:#0b161c"></div>
<div style="left:2427.0px;top:145.0px;width:2.0px;height:1485.0px;background:#0b161c"></div>
<div style="left:2454.0px;top:145.0px;width:2.0px;height:1485.0px;background:#0b161c"></div>
<div style="left:2481.0px;top:145.0px;width:2.0px;height:1485.0px;background:#0b161c"></div>
<div style="left:2508.0px;top:145.0px;width:2.0px;height:1485.0px;background:#0b161c"></div>
<div style="left:2535.0px;top:145.0px;width:2.0px;height:1485.0px;background:#0b161c"></div>
<div style="left:2562.0px;top:145.0px;width:2.0px;height:1485.0px;background:#0b161c"></div>
<div style="left:2589.0px;top:145.0px;width:2.0px;height:1485.0px;background:#0b161c"></div>
<div style="left:2616.0px;top:145.0px;width:2.0px;height:1485.0px;background:#0b161c"></div>
<div style="left:2643.0px;top:145.0px;width:2.0px;height:1485.0px;background:#0b161c"></div>
<div style="left:2670.0px;top:145.0px;width:2.0px;height:1485.0px;background:#0b161c"></div>
<div style="left:2697.0px;top:145.0px;width:2.0px;height:1485.0px;background:#0b161c"></div>
<div style="left:2724.0px;top:145.0px;width:2.0px;height:1485.0px;background:#0b161c"></div>
<div style="left:2750.0px;top:145.0px;width:2.0px;height:1485.0px;background:#0b161c"></div>
<div style="left:2777.0px;top:145.0px;width:2.0px;height:1485.0px;background:#0b161c"></div>
<div style="left:2804.0px;top:145.0px;width:2.0px;height:1485.0px;background:#0b161c"></div>
<div style="left:541.0px;top:176.0px;width:2271.0px;height:2.0px;background:#101c23"></div>
<div style="left:541.0px;top:208.0px;width:2271.0px;height:2.0px;background:#101c23"></div>
<div style="left:541.0px;top:240.0px;width:2271.0px;height:2.0px;background:#101c23"></div>
<div style="left:541.0px;top:272.0px;width:2271.0px;height:2.0px;background:#101c23"></div>
<div style="left:541.0px;top:304.0px;width:2271.0px;height:2.0px;background:#101c23"></div>
<div style="left:541.0px;top:336.0px;width:2271.0px;height:2.0px;background:#101c23"></div>
<div style="left:541.0px;top:368.0px;width:2271.0px;height:2.0px;background:#101c23"></div>
<div style="left:541.0px;top:400.0px;width:2271.0px;height:2.0px;background:#101c23"></div>
<div style="left:541.0px;top:432.0px;width:2271.0px;height:2.0px;background:#101c23"></div>
<div style="left:541.0px;top:464.0px;width:2271.0px;height:2.0px;background:#101c23"></div>
<div style="left:541.0px;top:496.0px;width:2271.0px;height:2.0px;background:#101c23"></div>
<div style="left:541.0px;top:528.0px;width:2271.0px;height:2.0px;background:#101c23"></div>
<div style="left:541.0px;top:560.0px;width:2271.0px;height:2.0px;background:#101c23"></div>
<div style="left:541.0px;top:592.0px;width:2271.0px;height:2.0px;background:#101c23"></div>
<div style="left:541.0px;top:704.0px;width:2271.0px;height:2.0px;background:#101c23"></div>
<div style="left:541.0px;top:736.0px;width:2271.0px;height:2.0px;background:#101c23"></div>
<div style="left:541.0px;top:848.0px;width:2271.0px;height:2.0px;background:#101c23"></div>
<div style="left:541.0px;top:960.0px;width:2271.0px;height:2.0px;background:#101c23"></div>
<div style="left:541.0px;top:1072.0px;width:2271.0px;height:2.0px;background:#101c23"></div>
<div style="left:541.0px;top:1184.0px;width:2271.0px;height:2.0px;background:#101c23"></div>
<div style="left:541.0px;top:1216.0px;width:2271.0px;height:2.0px;background:#101c23"></div>
<div style="left:541.0px;top:1248.0px;width:2271.0px;height:2.0px;background:#101c23"></div>
<div style="left:541.0px;top:1280.0px;width:2271.0px;height:2.0px;background:#101c23"></div>
<div style="left:541.0px;top:1312.0px;width:2271.0px;height:2.0px;background:#101c23"></div>
<div style="left:541.0px;top:1344.0px;width:2271.0px;height:2.0px;background:#101c23"></div>
<div style="left:541.0px;top:1376.0px;width:2271.0px;height:2.0px;background:#101c23"></div>
<div style="left:541.0px;top:1408.0px;width:2271.0px;height:2.0px;background:#101c23"></div>
<div style="left:541.0px;top:1520.0px;width:2271.0px;height:2.0px;background:#101c23"></div>
<div style="left:541.0px;top:1552.0px;width:2271.0px;height:2.0px;background:#101c23"></div>
<div style="left:317.0px;top:1630.0px;width:2495.0px;height:2.0px;background:#1a2328"></div>
<div style="left:0.0px;top:1632.0px;width:2866.0px;height:12.0px;background:#3e464d"></div>
<div style="left:540.0px;top:143.0px;width:2273.0px;height:3.0px;background:#1b262c"></div>
<div class="cl" style="left:541px;top:146px;width:2271px;height:31px;border-radius:3px 0 0 3px;background:#4d5981;border:1px solid #353e5a;box-shadow:inset 0 1px 0 #677193"><svg style="left:2px;top:6px" width="20" height="20" viewBox="0 0 20 20"><circle cx="4.5" cy="15.5" r="3" fill="none" stroke="#eef0f2" stroke-width="1.8"/><circle cx="15.5" cy="4.5" r="3" fill="none" stroke="#eef0f2" stroke-width="1.8"/><path d="M6.5 13.5 L13.5 6.5" stroke="#eef0f2" stroke-width="1.8"/></svg><svg style="left:25px;top:0px;overflow:visible" width="231.0" height="30"><text x="0" y="22" font-family="Liberation Sans" font-size="23" fill="#e6eaec" textLength="231.0" lengthAdjust="spacingAndGlyphs">3Kickstart 2 – Mix level</text></svg></div>
<div class="cl" style="left:541px;top:178px;width:2271px;height:31px;border-radius:3px 0 0 3px;background:#5a4c7b;border:1px solid #3e3556;box-shadow:inset 0 1px 0 #72668e"><svg style="left:2px;top:6px" width="20" height="20" viewBox="0 0 20 20"><circle cx="4.5" cy="15.5" r="3" fill="none" stroke="#eef0f2" stroke-width="1.8"/><circle cx="15.5" cy="4.5" r="3" fill="none" stroke="#eef0f2" stroke-width="1.8"/><path d="M6.5 13.5 L13.5 6.5" stroke="#eef0f2" stroke-width="1.8"/></svg><svg style="left:25px;top:0px;overflow:visible" width="383.0" height="30"><text x="0" y="22" font-family="Liberation Sans" font-size="23" fill="#e6eaec" textLength="383.0" lengthAdjust="spacingAndGlyphs">Endless Smile – MAIN VOCAL – Intensit</text></svg></div>
<svg style="left:541px;top:145px" width="2271" height="64" viewBox="0 0 2271 64" fill="none" stroke-width="1.2"><path d="M1 30 H216 V3 H620 V30 H647 V3 H749 V30 H755 V3 H856 V30 H862 V3 H1280 L1297 30 H1509 V3 H1699 L1724 30 V3 H2061 V30 H2269" stroke="#7c88b0" opacity="0.6"/><path d="M1 61 H646 V47 Q710 48 749 61 H755 V47 Q820 48 856 61 H862 V47 Q930 49 959 58 Q966 50 971 36 V61 H1186 L1292 42 V61 H1399 L1482 44 V61 H1606 Q1614 58 1617 45 V61 H1671 L1714 41 V61 H1939 L2049 50 L2171 61 H2269" stroke="#9182b8" opacity="0.6"/></svg>
<div class="cl" style="left:757.8px;top:210px;width:377.9px;height:30px;background:linear-gradient(#5a5167 0,#5e546c 14%,#6b6078 30%,#6b6078 70%,#5e546c 86%,#584f65 100%);border:1px solid #413a4a;box-shadow:inset 0 1px 0 #746a81"><div style="left:2px;right:2px;top:14px;height:1px;background:#837b8f;opacity:0.6"></div><svg style="left:2px;top:7px" width="18" height="15" viewBox="0 0 18 15"><path d="M0 0 Q1.5 6.5 9 7.5 Q1.5 8.5 0 15 Z" fill="#f0f4f2"/><path d="M10.5 2.5 Q11 7 17.5 7.5 Q11 8 10.5 12.5 Q10 8 5.5 7.5 Q10 7 10.5 2.5Z" fill="#f0f4f2"/></svg><svg style="left:25px;top:0px;overflow:visible" width="349.2" height="30"><text x="0" y="21" font-family="Liberation Sans" font-size="24" fill="#e6eaec" textLength="349.2" lengthAdjust="spacingAndGlyphs">T_VA_124_vocal_h..tthing_male_C#min</text></svg></div>
<div class="cl" style="left:1137.0px;top:210px;width:50.7px;height:30px;background:linear-gradient(#5a5167 0,#5e546c 14%,#6b6078 30%,#6b6078 70%,#5e546c 86%,#584f65 100%);border:1px solid #413a4a;box-shadow:inset 0 1px 0 #746a81"><div style="left:2px;right:2px;top:14px;height:1px;background:#837b8f;opacity:0.6"></div><svg style="left:2px;top:7px" width="18" height="15" viewBox="0 0 18 15"><path d="M0 0 Q1.5 6.5 9 7.5 Q1.5 8.5 0 15 Z" fill="#f0f4f2"/><path d="M10.5 2.5 Q11 7 17.5 7.5 Q11 8 10.5 12.5 Q10 8 5.5 7.5 Q10 7 10.5 2.5Z" fill="#f0f4f2"/></svg><svg style="left:25px;top:0px;overflow:visible" width="22.0" height="30"><text x="0" y="21" font-family="Liberation Sans" font-size="24" fill="#aeb3b5" textLength="22.0" lengthAdjust="spacingAndGlyphs">..n</text></svg></div>
<div class="cl" style="left:1498.7px;top:210px;width:19.0px;height:30px;background:linear-gradient(#5a5167 0,#5e546c 14%,#6b6078 30%,#6b6078 70%,#5e546c 86%,#584f65 100%);border:1px solid #413a4a;box-shadow:inset 0 1px 0 #746a81"><div style="left:2px;right:2px;top:14px;height:1px;background:#837b8f;opacity:0.6"></div><svg style="left:2px;top:7px" width="18" height="15" viewBox="0 0 18 15"><path d="M0 0 Q1.5 6.5 9 7.5 Q1.5 8.5 0 15 Z" fill="#f0f4f2"/><path d="M10.5 2.5 Q11 7 17.5 7.5 Q11 8 10.5 12.5 Q10 8 5.5 7.5 Q10 7 10.5 2.5Z" fill="#f0f4f2"/></svg></div>
<div class="cl" style="left:1533.8px;top:210px;width:8.4px;height:30px;background:linear-gradient(#5a5167 0,#5e546c 14%,#6b6078 30%,#6b6078 70%,#5e546c 86%,#584f65 100%);border:1px solid #413a4a;box-shadow:inset 0 1px 0 #746a81"><div style="left:2px;right:2px;top:14px;height:1px;background:#837b8f;opacity:0.6"></div></div>
<div class="cl" style="left:1558.0px;top:210px;width:8.7px;height:30px;background:linear-gradient(#5a5167 0,#5e546c 14%,#6b6078 30%,#6b6078 70%,#5e546c 86%,#584f65 100%);border:1px solid #413a4a;box-shadow:inset 0 1px 0 #746a81"><div style="left:2px;right:2px;top:14px;height:1px;background:#837b8f;opacity:0.6"></div></div>
<div class="cl" style="left:1602.0px;top:210px;width:10.7px;height:30px;background:linear-gradient(#5a5167 0,#5e546c 14%,#6b6078 30%,#6b6078 70%,#5e546c 86%,#584f65 100%);border:1px solid #413a4a;box-shadow:inset 0 1px 0 #746a81"><div style="left:2px;right:2px;top:14px;height:1px;background:#837b8f;opacity:0.6"></div></div>
<div style="left:1289.8px;top:242px;width:4.2px;height:30px;background:#3e4a55;border-radius:2px"></div>
<div style="left:1397.6px;top:242px;width:6.9px;height:30px;background:#655a73;border-radius:2px"></div>
<div style="left:1619.0px;top:242px;width:214.0px;height:30px;background:repeating-linear-gradient(90deg,#6b5e79 0 4.8px,#332f3d 4.8px 6.74px)"></div>
<div class="cl" style="left:1833.0px;top:242px;width:210.7px;height:30px;background:linear-gradient(#5a5167 0,#5e546c 14%,#6b6078 30%,#6b6078 70%,#5e546c 86%,#584f65 100%);border:1px solid #413a4a;box-shadow:inset 0 1px 0 #746a81"><div style="left:2px;right:2px;top:14px;height:1px;background:#837b8f;opacity:0.6"></div><svg style="left:2px;top:7px" width="18" height="15" viewBox="0 0 18 15"><path d="M0 0 Q1.5 6.5 9 7.5 Q1.5 8.5 0 15 Z" fill="#f0f4f2"/><path d="M10.5 2.5 Q11 7 17.5 7.5 Q11 8 10.5 12.5 Q10 8 5.5 7.5 Q10 7 10.5 2.5Z" fill="#f0f4f2"/></svg><svg style="left:25px;top:0px;overflow:visible" width="182.0" height="30"><text x="0" y="21" font-family="Liberation Sans" font-size="24" fill="#e6eaec" textLength="182.0" lengthAdjust="spacingAndGlyphs">T_VA_124..le_C#min</text></svg></div>
<div style="left:2044.0px;top:242px;width:7.0px;height:30px;background:#655a73;border-radius:2px"></div>
<div style="left:2152.0px;top:242px;width:6.0px;height:30px;background:#655a73;border-radius:2px"></div>
<div style="left:2260.6px;top:242px;width:5.9px;height:30px;background:#655a73;border-radius:2px"></div>
<div style="left:2368.0px;top:242px;width:220.0px;height:30px;background:repeating-linear-gradient(90deg,#6b5e79 0 4.8px,#332f3d 4.8px 6.74px)"></div>
<div style="left:2799.6px;top:242px;width:6.4px;height:30px;background:#655a73;border-radius:2px"></div>
<div style="left:541.0px;top:274px;width:619.0px;height:30px;background:repeating-linear-gradient(90deg,#86825f 0 1.6px,#5b5b48 1.6px 3.37px);border-top:1px solid #8c8a6a;border-bottom:1px solid #2a2e28"></div>
<div style="left:1188.0px;top:274px;width:103.0px;height:30px;background:repeating-linear-gradient(90deg,#86825f 0 1.6px,#5b5b48 1.6px 3.37px);border-top:1px solid #8c8a6a;border-bottom:1px solid #2a2e28"></div>
<div style="left:1295.0px;top:274px;width:80.0px;height:30px;background:repeating-linear-gradient(90deg,#86825f 0 1.6px,#5b5b48 1.6px 3.37px);border-top:1px solid #8c8a6a;border-bottom:1px solid #2a2e28"></div>
<div style="left:1403.6px;top:274px;width:103.4px;height:30px;background:repeating-linear-gradient(90deg,#86825f 0 1.6px,#5b5b48 1.6px 3.37px);border-top:1px solid #8c8a6a;border-bottom:1px solid #2a2e28"></div>
<div style="left:1511.0px;top:274px;width:103.6px;height:30px;background:repeating-linear-gradient(90deg,#86825f 0 1.6px,#5b5b48 1.6px 3.37px);border-top:1px solid #8c8a6a;border-bottom:1px solid #2a2e28"></div>
<div style="left:1619.0px;top:274px;width:103.0px;height:30px;background:repeating-linear-gradient(90deg,#86825f 0 1.6px,#5b5b48 1.6px 3.37px);border-top:1px solid #8c8a6a;border-bottom:1px solid #2a2e28"></div>
<div style="left:1726.5px;top:274px;width:296.0px;height:30px;background:repeating-linear-gradient(90deg,#86825f 0 1.6px,#5b5b48 1.6px 3.37px);border-top:1px solid #8c8a6a;border-bottom:1px solid #2a2e28"></div>
<div style="left:2050.0px;top:274px;width:103.0px;height:30px;background:repeating-linear-gradient(90deg,#86825f 0 1.6px,#5b5b48 1.6px 3.37px);border-top:1px solid #8c8a6a;border-bottom:1px solid #2a2e28"></div>
<div style="left:2158.0px;top:274px;width:80.0px;height:30px;background:repeating-linear-gradient(90deg,#86825f 0 1.6px,#5b5b48 1.6px 3.37px);border-top:1px solid #8c8a6a;border-bottom:1px solid #2a2e28"></div>
<div style="left:2265.8px;top:274px;width:102.2px;height:30px;background:repeating-linear-gradient(90deg,#86825f 0 1.6px,#5b5b48 1.6px 3.37px);border-top:1px solid #8c8a6a;border-bottom:1px solid #2a2e28"></div>
<div style="left:2372.0px;top:274px;width:104.6px;height:30px;background:repeating-linear-gradient(90deg,#86825f 0 1.6px,#5b5b48 1.6px 3.37px);border-top:1px solid #8c8a6a;border-bottom:1px solid #2a2e28"></div>
<div style="left:2481.0px;top:274px;width:103.7px;height:30px;background:repeating-linear-gradient(90deg,#86825f 0 1.6px,#5b5b48 1.6px 3.37px);border-top:1px solid #8c8a6a;border-bottom:1px solid #2a2e28"></div>
<div style="left:2589.0px;top:274px;width:103.0px;height:30px;background:repeating-linear-gradient(90deg,#86825f 0 1.6px,#5b5b48 1.6px 3.37px);border-top:1px solid #8c8a6a;border-bottom:1px solid #2a2e28"></div>
<div style="left:2697.0px;top:274px;width:104.0px;height:30px;background:repeating-linear-gradient(90deg,#86825f 0 1.6px,#5b5b48 1.6px 3.37px);border-top:1px solid #8c8a6a;border-bottom:1px solid #2a2e28"></div>
<div style="left:1403.0px;top:306px;width:324.4px;height:30px;background:linear-gradient(#6a7f62,#5b6b51);border-top:1px solid #768a6d"></div>
<div style="left:2048.0px;top:306px;width:647.0px;height:30px;background:linear-gradient(#6a7f62,#5b6b51);border-top:1px solid #768a6d"></div>
<div style="left:1403.0px;top:338px;width:105.0px;height:30px;background:repeating-linear-gradient(90deg,#3c4952 0 4.8px,#2a363e 4.8px 6.74px)"></div>
<div style="left:1508.0px;top:338px;width:219.0px;height:30px;background:repeating-linear-gradient(90deg,#776750 0 4.6px,#373934 4.6px 6.74px)"></div>
<div style="left:2048.0px;top:338px;width:217.0px;height:30px;background:repeating-linear-gradient(90deg,#776750 0 4.6px,#373934 4.6px 6.74px)"></div>
<div style="left:2265.0px;top:338px;width:105.0px;height:30px;background:repeating-linear-gradient(90deg,#3c4952 0 4.8px,#2a363e 4.8px 6.74px)"></div>
<div style="left:2370.0px;top:338px;width:436.0px;height:30px;background:repeating-linear-gradient(90deg,#776750 0 4.6px,#373934 4.6px 6.74px)"></div>
<div style="left:1403.0px;top:370px;width:105.0px;height:30px;background:repeating-linear-gradient(90deg,#3d4a53 0 1.6px,#2c3941 1.6px 6.74px)"></div>
<div style="left:1508.0px;top:370px;width:219.0px;height:30px;background:repeating-linear-gradient(90deg,#6e6080 0 2px,#3a3d4c 2px 6.74px)"></div>
<div style="left:2048.0px;top:370px;width:217.0px;height:30px;background:repeating-linear-gradient(90deg,#6e6080 0 2px,#3a3d4c 2px 6.74px)"></div>
<div style="left:2265.0px;top:370px;width:105.0px;height:30px;background:repeating-linear-gradient(90deg,#3d4a53 0 1.6px,#2c3941 1.6px 6.74px)"></div>
<div style="left:2370.0px;top:370px;width:436.0px;height:30px;background:repeating-linear-gradient(90deg,#6e6080 0 2px,#3a3d4c 2px 6.74px)"></div>
<div style="left:1403.0px;top:402px;width:105.0px;height:30px;background:repeating-linear-gradient(90deg,#3d4a53 0 1.6px,#2c3941 1.6px 6.74px)"></div>
<div style="left:1508.0px;top:402px;width:219.0px;height:30px;background:repeating-linear-gradient(90deg,#6e6080 0 2px,#3a3d4c 2px 6.74px)"></div>
<div style="left:2048.0px;top:402px;width:217.0px;height:30px;background:repeating-linear-gradient(90deg,#6e6080 0 2px,#3a3d4c 2px 6.74px)"></div>
<div style="left:2265.0px;top:402px;width:105.0px;height:30px;background:repeating-linear-gradient(90deg,#3d4a53 0 1.6px,#2c3941 1.6px 6.74px)"></div>
<div style="left:2370.0px;top:402px;width:436.0px;height:30px;background:repeating-linear-gradient(90deg,#6e6080 0 2px,#3a3d4c 2px 6.74px)"></div>
<div style="left:1411.0px;top:435px;width:2.0px;height:28px;background:#8a7358"></div>
<div style="left:1465.0px;top:435px;width:2.0px;height:28px;background:#8a7358"></div>
<div style="left:1519.0px;top:435px;width:2.0px;height:28px;background:#8a7358"></div>
<div style="left:1573.0px;top:435px;width:2.0px;height:28px;background:#8a7358"></div>
<div style="left:1627.0px;top:435px;width:2.0px;height:28px;background:#8a7358"></div>
<div style="left:1681.0px;top:435px;width:2.0px;height:28px;background:#8a7358"></div>
<div style="left:2057.0px;top:435px;width:2.0px;height:28px;background:#8a7358"></div>
<div style="left:2111.0px;top:435px;width:2.0px;height:28px;background:#8a7358"></div>
<div style="left:2165.0px;top:435px;width:2.0px;height:28px;background:#8a7358"></div>
<div style="left:2219.0px;top:435px;width:2.0px;height:28px;background:#8a7358"></div>
<div style="left:2273.0px;top:435px;width:2.0px;height:28px;background:#8a7358"></div>
<div style="left:2327.0px;top:435px;width:2.0px;height:28px;background:#8a7358"></div>
<div style="left:2381.0px;top:435px;width:2.0px;height:28px;background:#8a7358"></div>
<div style="left:2435.0px;top:435px;width:2.0px;height:28px;background:#8a7358"></div>
<div style="left:2489.0px;top:435px;width:2.0px;height:28px;background:#8a7358"></div>
<div style="left:2543.0px;top:435px;width:2.0px;height:28px;background:#8a7358"></div>
<div style="left:2597.0px;top:435px;width:2.0px;height:28px;background:#8a7358"></div>
<div style="left:2651.0px;top:435px;width:2.0px;height:28px;background:#8a7358"></div>
<div style="left:2705.0px;top:435px;width:2.0px;height:28px;background:#8a7358"></div>
<div style="left:2759.0px;top:435px;width:2.0px;height:28px;background:#8a7358"></div>
<div style="left:1404.5px;top:498px;width:104.5px;height:30px;background:repeating-linear-gradient(90deg,#676c84 0 1.7px,#464b5c 1.7px 3.37px);border-radius:2px"></div>
<div style="left:1513.0px;top:498px;width:214.7px;height:30px;background:repeating-linear-gradient(90deg,#676c84 0 1.7px,#464b5c 1.7px 3.37px);border-radius:2px"></div>
<div style="left:2051.5px;top:498px;width:320.5px;height:30px;background:repeating-linear-gradient(90deg,#676c84 0 1.7px,#464b5c 1.7px 3.37px);border-radius:2px"></div>
<div style="left:2374.0px;top:498px;width:431.4px;height:30px;background:repeating-linear-gradient(90deg,#676c84 0 1.7px,#464b5c 1.7px 3.37px);border-radius:2px"></div>
<div class="cl" style="left:756.6px;top:530px;width:53.6px;height:30px;background:linear-gradient(#6d605a 0,#72645e 14%,#7f706a 30%,#7f706a 70%,#72645e 86%,#6b5e58 100%);border:1px solid #4f4541;box-shadow:inset 0 1px 0 #877973"><div style="left:2px;right:2px;top:14px;height:1px;background:#948883;opacity:0.6"></div><svg style="left:2px;top:7px" width="18" height="15" viewBox="0 0 18 15"><path d="M0 0 Q1.5 6.5 9 7.5 Q1.5 8.5 0 15 Z" fill="#f0f4f2"/><path d="M10.5 2.5 Q11 7 17.5 7.5 Q11 8 10.5 12.5 Q10 8 5.5 7.5 Q10 7 10.5 2.5Z" fill="#f0f4f2"/></svg><svg style="left:27px;top:0px;overflow:visible" width="30" height="30"><text x="0" y="21" font-family="Liberation Sans" font-size="24" fill="#aeb3b5" letter-spacing="4">..</text></svg></div>
<div class="cl" style="left:810.5px;top:530px;width:53.6px;height:30px;background:linear-gradient(#6d605a 0,#72645e 14%,#7f706a 30%,#7f706a 70%,#72645e 86%,#6b5e58 100%);border:1px solid #4f4541;box-shadow:inset 0 1px 0 #877973"><div style="left:2px;right:2px;top:14px;height:1px;background:#948883;opacity:0.6"></div><svg style="left:2px;top:7px" width="18" height="15" viewBox="0 0 18 15"><path d="M0 0 Q1.5 6.5 9 7.5 Q1.5 8.5 0 15 Z" fill="#f0f4f2"/><path d="M10.5 2.5 Q11 7 17.5 7.5 Q11 8 10.5 12.5 Q10 8 5.5 7.5 Q10 7 10.5 2.5Z" fill="#f0f4f2"/></svg><svg style="left:27px;top:0px;overflow:visible" width="30" height="30"><text x="0" y="21" font-family="Liberation Sans" font-size="24" fill="#aeb3b5" letter-spacing="4">..</text></svg></div>
<div class="cl" style="left:864.4px;top:530px;width:53.6px;height:30px;background:linear-gradient(#6d605a 0,#72645e 14%,#7f706a 30%,#7f706a 70%,#72645e 86%,#6b5e58 100%);border:1px solid #4f4541;box-shadow:inset 0 1px 0 #877973"><div style="left:2px;right:2px;top:14px;height:1px;background:#948883;opacity:0.6"></div><svg style="left:2px;top:7px" width="18" height="15" viewBox="0 0 18 15"><path d="M0 0 Q1.5 6.5 9 7.5 Q1.5 8.5 0 15 Z" fill="#f0f4f2"/><path d="M10.5 2.5 Q11 7 17.5 7.5 Q11 8 10.5 12.5 Q10 8 5.5 7.5 Q10 7 10.5 2.5Z" fill="#f0f4f2"/></svg><svg style="left:27px;top:0px;overflow:visible" width="30" height="30"><text x="0" y="21" font-family="Liberation Sans" font-size="24" fill="#aeb3b5" letter-spacing="4">..</text></svg></div>
<div class="cl" style="left:918.3px;top:530px;width:53.6px;height:30px;background:linear-gradient(#6d605a 0,#72645e 14%,#7f706a 30%,#7f706a 70%,#72645e 86%,#6b5e58 100%);border:1px solid #4f4541;box-shadow:inset 0 1px 0 #877973"><div style="left:2px;right:2px;top:14px;height:1px;background:#948883;opacity:0.6"></div><svg style="left:2px;top:7px" width="18" height="15" viewBox="0 0 18 15"><path d="M0 0 Q1.5 6.5 9 7.5 Q1.5 8.5 0 15 Z" fill="#f0f4f2"/><path d="M10.5 2.5 Q11 7 17.5 7.5 Q11 8 10.5 12.5 Q10 8 5.5 7.5 Q10 7 10.5 2.5Z" fill="#f0f4f2"/></svg><svg style="left:27px;top:0px;overflow:visible" width="30" height="30"><text x="0" y="21" font-family="Liberation Sans" font-size="24" fill="#aeb3b5" letter-spacing="4">..</text></svg></div>
<div class="cl" style="left:972.2px;top:530px;width:53.6px;height:30px;background:linear-gradient(#6d605a 0,#72645e 14%,#7f706a 30%,#7f706a 70%,#72645e 86%,#6b5e58 100%);border:1px solid #4f4541;box-shadow:inset 0 1px 0 #877973"><div style="left:2px;right:2px;top:14px;height:1px;background:#948883;opacity:0.6"></div><svg style="left:2px;top:7px" width="18" height="15" viewBox="0 0 18 15"><path d="M0 0 Q1.5 6.5 9 7.5 Q1.5 8.5 0 15 Z" fill="#f0f4f2"/><path d="M10.5 2.5 Q11 7 17.5 7.5 Q11 8 10.5 12.5 Q10 8 5.5 7.5 Q10 7 10.5 2.5Z" fill="#f0f4f2"/></svg><svg style="left:27px;top:0px;overflow:visible" width="30" height="30"><text x="0" y="21" font-family="Liberation Sans" font-size="24" fill="#aeb3b5" letter-spacing="4">..</text></svg></div>
<div class="cl" style="left:1026.1px;top:530px;width:53.6px;height:30px;background:linear-gradient(#6d605a 0,#72645e 14%,#7f706a 30%,#7f706a 70%,#72645e 86%,#6b5e58 100%);border:1px solid #4f4541;box-shadow:inset 0 1px 0 #877973"><div style="left:2px;right:2px;top:14px;height:1px;background:#948883;opacity:0.6"></div><svg style="left:2px;top:7px" width="18" height="15" viewBox="0 0 18 15"><path d="M0 0 Q1.5 6.5 9 7.5 Q1.5 8.5 0 15 Z" fill="#f0f4f2"/><path d="M10.5 2.5 Q11 7 17.5 7.5 Q11 8 10.5 12.5 Q10 8 5.5 7.5 Q10 7 10.5 2.5Z" fill="#f0f4f2"/></svg><svg style="left:27px;top:0px;overflow:visible" width="30" height="30"><text x="0" y="21" font-family="Liberation Sans" font-size="24" fill="#aeb3b5" letter-spacing="4">..</text></svg></div>
<div class="cl" style="left:1079.9px;top:530px;width:53.6px;height:30px;background:linear-gradient(#6d605a 0,#72645e 14%,#7f706a 30%,#7f706a 70%,#72645e 86%,#6b5e58 100%);border:1px solid #4f4541;box-shadow:inset 0 1px 0 #877973"><div style="left:2px;right:2px;top:14px;height:1px;background:#948883;opacity:0.6"></div><svg style="left:2px;top:7px" width="18" height="15" viewBox="0 0 18 15"><path d="M0 0 Q1.5 6.5 9 7.5 Q1.5 8.5 0 15 Z" fill="#f0f4f2"/><path d="M10.5 2.5 Q11 7 17.5 7.5 Q11 8 10.5 12.5 Q10 8 5.5 7.5 Q10 7 10.5 2.5Z" fill="#f0f4f2"/></svg><svg style="left:27px;top:0px;overflow:visible" width="30" height="30"><text x="0" y="21" font-family="Liberation Sans" font-size="24" fill="#aeb3b5" letter-spacing="4">..</text></svg></div>
<div class="cl" style="left:1133.8px;top:530px;width:26.6px;height:30px;background:linear-gradient(#6d605a 0,#72645e 14%,#7f706a 30%,#7f706a 70%,#72645e 86%,#6b5e58 100%);border:1px solid #4f4541;box-shadow:inset 0 1px 0 #877973"><div style="left:2px;right:2px;top:14px;height:1px;background:#948883;opacity:0.6"></div><svg style="left:2px;top:7px" width="18" height="15" viewBox="0 0 18 15"><path d="M0 0 Q1.5 6.5 9 7.5 Q1.5 8.5 0 15 Z" fill="#f0f4f2"/><path d="M10.5 2.5 Q11 7 17.5 7.5 Q11 8 10.5 12.5 Q10 8 5.5 7.5 Q10 7 10.5 2.5Z" fill="#f0f4f2"/></svg></div>
<div class="cl" style="left:1726.6px;top:530px;width:53.6px;height:30px;background:linear-gradient(#6d605a 0,#72645e 14%,#7f706a 30%,#7f706a 70%,#72645e 86%,#6b5e58 100%);border:1px solid #4f4541;box-shadow:inset 0 1px 0 #877973"><div style="left:2px;right:2px;top:14px;height:1px;background:#948883;opacity:0.6"></div><svg style="left:2px;top:7px" width="18" height="15" viewBox="0 0 18 15"><path d="M0 0 Q1.5 6.5 9 7.5 Q1.5 8.5 0 15 Z" fill="#f0f4f2"/><path d="M10.5 2.5 Q11 7 17.5 7.5 Q11 8 10.5 12.5 Q10 8 5.5 7.5 Q10 7 10.5 2.5Z" fill="#f0f4f2"/></svg><svg style="left:27px;top:0px;overflow:visible" width="30" height="30"><text x="0" y="21" font-family="Liberation Sans" font-size="24" fill="#aeb3b5" letter-spacing="4">..</text></svg></div>
<div class="cl" style="left:1780.5px;top:530px;width:53.6px;height:30px;background:linear-gradient(#6d605a 0,#72645e 14%,#7f706a 30%,#7f706a 70%,#72645e 86%,#6b5e58 100%);border:1px solid #4f4541;box-shadow:inset 0 1px 0 #877973"><div style="left:2px;right:2px;top:14px;height:1px;background:#948883;opacity:0.6"></div><svg style="left:2px;top:7px" width="18" height="15" viewBox="0 0 18 15"><path d="M0 0 Q1.5 6.5 9 7.5 Q1.5 8.5 0 15 Z" fill="#f0f4f2"/><path d="M10.5 2.5 Q11 7 17.5 7.5 Q11 8 10.5 12.5 Q10 8 5.5 7.5 Q10 7 10.5 2.5Z" fill="#f0f4f2"/></svg><svg style="left:27px;top:0px;overflow:visible" width="30" height="30"><text x="0" y="21" font-family="Liberation Sans" font-size="24" fill="#aeb3b5" letter-spacing="4">..</text></svg></div>
<div class="cl" style="left:1834.4px;top:530px;width:53.6px;height:30px;background:linear-gradient(#6d605a 0,#72645e 14%,#7f706a 30%,#7f706a 70%,#72645e 86%,#6b5e58 100%);border:1px solid #4f4541;box-shadow:inset 0 1px 0 #877973"><div style="left:2px;right:2px;top:14px;height:1px;background:#948883;opacity:0.6"></div><svg style="left:2px;top:7px" width="18" height="15" viewBox="0 0 18 15"><path d="M0 0 Q1.5 6.5 9 7.5 Q1.5 8.5 0 15 Z" fill="#f0f4f2"/><path d="M10.5 2.5 Q11 7 17.5 7.5 Q11 8 10.5 12.5 Q10 8 5.5 7.5 Q10 7 10.5 2.5Z" fill="#f0f4f2"/></svg><svg style="left:27px;top:0px;overflow:visible" width="30" height="30"><text x="0" y="21" font-family="Liberation Sans" font-size="24" fill="#aeb3b5" letter-spacing="4">..</text></svg></div>
<div class="cl" style="left:1888.3px;top:530px;width:53.6px;height:30px;background:linear-gradient(#6d605a 0,#72645e 14%,#7f706a 30%,#7f706a 70%,#72645e 86%,#6b5e58 100%);border:1px solid #4f4541;box-shadow:inset 0 1px 0 #877973"><div style="left:2px;right:2px;top:14px;height:1px;background:#948883;opacity:0.6"></div><svg style="left:2px;top:7px" width="18" height="15" viewBox="0 0 18 15"><path d="M0 0 Q1.5 6.5 9 7.5 Q1.5 8.5 0 15 Z" fill="#f0f4f2"/><path d="M10.5 2.5 Q11 7 17.5 7.5 Q11 8 10.5 12.5 Q10 8 5.5 7.5 Q10 7 10.5 2.5Z" fill="#f0f4f2"/></svg><svg style="left:27px;top:0px;overflow:visible" width="30" height="30"><text x="0" y="21" font-family="Liberation Sans" font-size="24" fill="#aeb3b5" letter-spacing="4">..</text></svg></div>
<div class="cl" style="left:1942.1px;top:530px;width:53.6px;height:30px;background:linear-gradient(#6d605a 0,#72645e 14%,#7f706a 30%,#7f706a 70%,#72645e 86%,#6b5e58 100%);border:1px solid #4f4541;box-shadow:inset 0 1px 0 #877973"><div style="left:2px;right:2px;top:14px;height:1px;background:#948883;opacity:0.6"></div><svg style="left:2px;top:7px" width="18" height="15" viewBox="0 0 18 15"><path d="M0 0 Q1.5 6.5 9 7.5 Q1.5 8.5 0 15 Z" fill="#f0f4f2"/><path d="M10.5 2.5 Q11 7 17.5 7.5 Q11 8 10.5 12.5 Q10 8 5.5 7.5 Q10 7 10.5 2.5Z" fill="#f0f4f2"/></svg><svg style="left:27px;top:0px;overflow:visible" width="30" height="30"><text x="0" y="21" font-family="Liberation Sans" font-size="24" fill="#aeb3b5" letter-spacing="4">..</text></svg></div>
<div class="cl" style="left:1996.0px;top:530px;width:24.6px;height:30px;background:linear-gradient(#6d605a 0,#72645e 14%,#7f706a 30%,#7f706a 70%,#72645e 86%,#6b5e58 100%);border:1px solid #4f4541;box-shadow:inset 0 1px 0 #877973"><div style="left:2px;right:2px;top:14px;height:1px;background:#948883;opacity:0.6"></div><svg style="left:2px;top:7px" width="18" height="15" viewBox="0 0 18 15"><path d="M0 0 Q1.5 6.5 9 7.5 Q1.5 8.5 0 15 Z" fill="#f0f4f2"/><path d="M10.5 2.5 Q11 7 17.5 7.5 Q11 8 10.5 12.5 Q10 8 5.5 7.5 Q10 7 10.5 2.5Z" fill="#f0f4f2"/></svg></div>
<div class="cl" style="left:1079.9px;top:562px;width:53.6px;height:30px;background:linear-gradient(#636550 0,#686a53 14%,#74765f 30%,#74765f 70%,#686a53 86%,#61634e 100%);border:1px solid #484939;box-shadow:inset 0 1px 0 #7d7f69"><div style="left:2px;right:2px;top:14px;height:1px;background:#8b8d7a;opacity:0.6"></div><svg style="left:2px;top:7px" width="18" height="15" viewBox="0 0 18 15"><path d="M0 0 Q1.5 6.5 9 7.5 Q1.5 8.5 0 15 Z" fill="#f0f4f2"/><path d="M10.5 2.5 Q11 7 17.5 7.5 Q11 8 10.5 12.5 Q10 8 5.5 7.5 Q10 7 10.5 2.5Z" fill="#f0f4f2"/></svg><svg style="left:27px;top:0px;overflow:visible" width="30" height="30"><text x="0" y="21" font-family="Liberation Sans" font-size="24" fill="#aeb3b5" letter-spacing="4">..</text></svg></div>
<div class="cl" style="left:1133.8px;top:562px;width:26.6px;height:30px;background:linear-gradient(#636550 0,#686a53 14%,#74765f 30%,#74765f 70%,#686a53 86%,#61634e 100%);border:1px solid #484939;box-shadow:inset 0 1px 0 #7d7f69"><div style="left:2px;right:2px;top:14px;height:1px;background:#8b8d7a;opacity:0.6"></div><svg style="left:2px;top:7px" width="18" height="15" viewBox="0 0 18 15"><path d="M0 0 Q1.5 6.5 9 7.5 Q1.5 8.5 0 15 Z" fill="#f0f4f2"/><path d="M10.5 2.5 Q11 7 17.5 7.5 Q11 8 10.5 12.5 Q10 8 5.5 7.5 Q10 7 10.5 2.5Z" fill="#f0f4f2"/></svg></div>
<div class="cl" style="left:1295.5px;top:562px;width:53.6px;height:30px;background:linear-gradient(#636550 0,#686a53 14%,#74765f 30%,#74765f 70%,#686a53 86%,#61634e 100%);border:1px solid #484939;box-shadow:inset 0 1px 0 #7d7f69"><div style="left:2px;right:2px;top:14px;height:1px;background:#8b8d7a;opacity:0.6"></div><svg style="left:2px;top:7px" width="18" height="15" viewBox="0 0 18 15"><path d="M0 0 Q1.5 6.5 9 7.5 Q1.5 8.5 0 15 Z" fill="#f0f4f2"/><path d="M10.5 2.5 Q11 7 17.5 7.5 Q11 8 10.5 12.5 Q10 8 5.5 7.5 Q10 7 10.5 2.5Z" fill="#f0f4f2"/></svg><svg style="left:27px;top:0px;overflow:visible" width="30" height="30"><text x="0" y="21" font-family="Liberation Sans" font-size="24" fill="#aeb3b5" letter-spacing="4">..</text></svg></div>
<div class="cl" style="left:1349.4px;top:562px;width:40.1px;height:30px;background:linear-gradient(#636550 0,#686a53 14%,#74765f 30%,#74765f 70%,#686a53 86%,#61634e 100%);border:1px solid #484939;box-shadow:inset 0 1px 0 #7d7f69"><div style="left:2px;right:2px;top:14px;height:1px;background:#8b8d7a;opacity:0.6"></div><svg style="left:2px;top:7px" width="18" height="15" viewBox="0 0 18 15"><path d="M0 0 Q1.5 6.5 9 7.5 Q1.5 8.5 0 15 Z" fill="#f0f4f2"/><path d="M10.5 2.5 Q11 7 17.5 7.5 Q11 8 10.5 12.5 Q10 8 5.5 7.5 Q10 7 10.5 2.5Z" fill="#f0f4f2"/></svg></div>
<div class="cl" style="left:1403.3px;top:562px;width:53.6px;height:30px;background:linear-gradient(#636550 0,#686a53 14%,#74765f 30%,#74765f 70%,#686a53 86%,#61634e 100%);border:1px solid #484939;box-shadow:inset 0 1px 0 #7d7f69"><div style="left:2px;right:2px;top:14px;height:1px;background:#8b8d7a;opacity:0.6"></div><svg style="left:2px;top:7px" width="18" height="15" viewBox="0 0 18 15"><path d="M0 0 Q1.5 6.5 9 7.5 Q1.5 8.5 0 15 Z" fill="#f0f4f2"/><path d="M10.5 2.5 Q11 7 17.5 7.5 Q11 8 10.5 12.5 Q10 8 5.5 7.5 Q10 7 10.5 2.5Z" fill="#f0f4f2"/></svg><svg style="left:27px;top:0px;overflow:visible" width="30" height="30"><text x="0" y="21" font-family="Liberation Sans" font-size="24" fill="#aeb3b5" letter-spacing="4">..</text></svg></div>
<div class="cl" style="left:1457.2px;top:562px;width:50.2px;height:30px;background:linear-gradient(#636550 0,#686a53 14%,#74765f 30%,#74765f 70%,#686a53 86%,#61634e 100%);border:1px solid #484939;box-shadow:inset 0 1px 0 #7d7f69"><div style="left:2px;right:2px;top:14px;height:1px;background:#8b8d7a;opacity:0.6"></div><svg style="left:2px;top:7px" width="18" height="15" viewBox="0 0 18 15"><path d="M0 0 Q1.5 6.5 9 7.5 Q1.5 8.5 0 15 Z" fill="#f0f4f2"/><path d="M10.5 2.5 Q11 7 17.5 7.5 Q11 8 10.5 12.5 Q10 8 5.5 7.5 Q10 7 10.5 2.5Z" fill="#f0f4f2"/></svg></div>
<div class="cl" style="left:1511.0px;top:562px;width:53.6px;height:30px;background:linear-gradient(#636550 0,#686a53 14%,#74765f 30%,#74765f 70%,#686a53 86%,#61634e 100%);border:1px solid #484939;box-shadow:inset 0 1px 0 #7d7f69"><div style="left:2px;right:2px;top:14px;height:1px;background:#8b8d7a;opacity:0.6"></div><svg style="left:2px;top:7px" width="18" height="15" viewBox="0 0 18 15"><path d="M0 0 Q1.5 6.5 9 7.5 Q1.5 8.5 0 15 Z" fill="#f0f4f2"/><path d="M10.5 2.5 Q11 7 17.5 7.5 Q11 8 10.5 12.5 Q10 8 5.5 7.5 Q10 7 10.5 2.5Z" fill="#f0f4f2"/></svg><svg style="left:27px;top:0px;overflow:visible" width="30" height="30"><text x="0" y="21" font-family="Liberation Sans" font-size="24" fill="#aeb3b5" letter-spacing="4">..</text></svg></div>
<div class="cl" style="left:1564.9px;top:562px;width:53.6px;height:30px;background:linear-gradient(#636550 0,#686a53 14%,#74765f 30%,#74765f 70%,#686a53 86%,#61634e 100%);border:1px solid #484939;box-shadow:inset 0 1px 0 #7d7f69"><div style="left:2px;right:2px;top:14px;height:1px;background:#8b8d7a;opacity:0.6"></div><svg style="left:2px;top:7px" width="18" height="15" viewBox="0 0 18 15"><path d="M0 0 Q1.5 6.5 9 7.5 Q1.5 8.5 0 15 Z" fill="#f0f4f2"/><path d="M10.5 2.5 Q11 7 17.5 7.5 Q11 8 10.5 12.5 Q10 8 5.5 7.5 Q10 7 10.5 2.5Z" fill="#f0f4f2"/></svg><svg style="left:27px;top:0px;overflow:visible" width="30" height="30"><text x="0" y="21" font-family="Liberation Sans" font-size="24" fill="#aeb3b5" letter-spacing="4">..</text></svg></div>
<div class="cl" style="left:1618.8px;top:562px;width:53.6px;height:30px;background:linear-gradient(#636550 0,#686a53 14%,#74765f 30%,#74765f 70%,#686a53 86%,#61634e 100%);border:1px solid #484939;box-shadow:inset 0 1px 0 #7d7f69"><div style="left:2px;right:2px;top:14px;height:1px;background:#8b8d7a;opacity:0.6"></div><svg style="left:2px;top:7px" width="18" height="15" viewBox="0 0 18 15"><path d="M0 0 Q1.5 6.5 9 7.5 Q1.5 8.5 0 15 Z" fill="#f0f4f2"/><path d="M10.5 2.5 Q11 7 17.5 7.5 Q11 8 10.5 12.5 Q10 8 5.5 7.5 Q10 7 10.5 2.5Z" fill="#f0f4f2"/></svg><svg style="left:27px;top:0px;overflow:visible" width="30" height="30"><text x="0" y="21" font-family="Liberation Sans" font-size="24" fill="#aeb3b5" letter-spacing="4">..</text></svg></div>
<div class="cl" style="left:1672.7px;top:562px;width:53.6px;height:30px;background:linear-gradient(#636550 0,#686a53 14%,#74765f 30%,#74765f 70%,#686a53 86%,#61634e 100%);border:1px solid #484939;box-shadow:inset 0 1px 0 #7d7f69"><div style="left:2px;right:2px;top:14px;height:1px;background:#8b8d7a;opacity:0.6"></div><svg style="left:2px;top:7px" width="18" height="15" viewBox="0 0 18 15"><path d="M0 0 Q1.5 6.5 9 7.5 Q1.5 8.5 0 15 Z" fill="#f0f4f2"/><path d="M10.5 2.5 Q11 7 17.5 7.5 Q11 8 10.5 12.5 Q10 8 5.5 7.5 Q10 7 10.5 2.5Z" fill="#f0f4f2"/></svg><svg style="left:27px;top:0px;overflow:visible" width="30" height="30"><text x="0" y="21" font-family="Liberation Sans" font-size="24" fill="#aeb3b5" letter-spacing="4">..</text></svg></div>
<div class="cl" style="left:2157.7px;top:562px;width:53.6px;height:30px;background:linear-gradient(#636550 0,#686a53 14%,#74765f 30%,#74765f 70%,#686a53 86%,#61634e 100%);border:1px solid #484939;box-shadow:inset 0 1px 0 #7d7f69"><div style="left:2px;right:2px;top:14px;height:1px;background:#8b8d7a;opacity:0.6"></div><svg style="left:2px;top:7px" width="18" height="15" viewBox="0 0 18 15"><path d="M0 0 Q1.5 6.5 9 7.5 Q1.5 8.5 0 15 Z" fill="#f0f4f2"/><path d="M10.5 2.5 Q11 7 17.5 7.5 Q11 8 10.5 12.5 Q10 8 5.5 7.5 Q10 7 10.5 2.5Z" fill="#f0f4f2"/></svg><svg style="left:27px;top:0px;overflow:visible" width="30" height="30"><text x="0" y="21" font-family="Liberation Sans" font-size="24" fill="#aeb3b5" letter-spacing="4">..</text></svg></div>
<div class="cl" style="left:2211.6px;top:562px;width:40.1px;height:30px;background:linear-gradient(#636550 0,#686a53 14%,#74765f 30%,#74765f 70%,#686a53 86%,#61634e 100%);border:1px solid #484939;box-shadow:inset 0 1px 0 #7d7f69"><div style="left:2px;right:2px;top:14px;height:1px;background:#8b8d7a;opacity:0.6"></div><svg style="left:2px;top:7px" width="18" height="15" viewBox="0 0 18 15"><path d="M0 0 Q1.5 6.5 9 7.5 Q1.5 8.5 0 15 Z" fill="#f0f4f2"/><path d="M10.5 2.5 Q11 7 17.5 7.5 Q11 8 10.5 12.5 Q10 8 5.5 7.5 Q10 7 10.5 2.5Z" fill="#f0f4f2"/></svg></div>
<div class="cl" style="left:2265.5px;top:562px;width:53.6px;height:30px;background:linear-gradient(#636550 0,#686a53 14%,#74765f 30%,#74765f 70%,#686a53 86%,#61634e 100%);border:1px solid #484939;box-shadow:inset 0 1px 0 #7d7f69"><div style="left:2px;right:2px;top:14px;height:1px;background:#8b8d7a;opacity:0.6"></div><svg style="left:2px;top:7px" width="18" height="15" viewBox="0 0 18 15"><path d="M0 0 Q1.5 6.5 9 7.5 Q1.5 8.5 0 15 Z" fill="#f0f4f2"/><path d="M10.5 2.5 Q11 7 17.5 7.5 Q11 8 10.5 12.5 Q10 8 5.5 7.5 Q10 7 10.5 2.5Z" fill="#f0f4f2"/></svg><svg style="left:27px;top:0px;overflow:visible" width="30" height="30"><text x="0" y="21" font-family="Liberation Sans" font-size="24" fill="#aeb3b5" letter-spacing="4">..</text></svg></div>
<div class="cl" style="left:2319.4px;top:562px;width:50.2px;height:30px;background:linear-gradient(#636550 0,#686a53 14%,#74765f 30%,#74765f 70%,#686a53 86%,#61634e 100%);border:1px solid #484939;box-shadow:inset 0 1px 0 #7d7f69"><div style="left:2px;right:2px;top:14px;height:1px;background:#8b8d7a;opacity:0.6"></div><svg style="left:2px;top:7px" width="18" height="15" viewBox="0 0 18 15"><path d="M0 0 Q1.5 6.5 9 7.5 Q1.5 8.5 0 15 Z" fill="#f0f4f2"/><path d="M10.5 2.5 Q11 7 17.5 7.5 Q11 8 10.5 12.5 Q10 8 5.5 7.5 Q10 7 10.5 2.5Z" fill="#f0f4f2"/></svg></div>
<div class="cl" style="left:2373.3px;top:562px;width:53.6px;height:30px;background:linear-gradient(#636550 0,#686a53 14%,#74765f 30%,#74765f 70%,#686a53 86%,#61634e 100%);border:1px solid #484939;box-shadow:inset 0 1px 0 #7d7f69"><div style="left:2px;right:2px;top:14px;height:1px;background:#8b8d7a;opacity:0.6"></div><svg style="left:2px;top:7px" width="18" height="15" viewBox="0 0 18 15"><path d="M0 0 Q1.5 6.5 9 7.5 Q1.5 8.5 0 15 Z" fill="#f0f4f2"/><path d="M10.5 2.5 Q11 7 17.5 7.5 Q11 8 10.5 12.5 Q10 8 5.5 7.5 Q10 7 10.5 2.5Z" fill="#f0f4f2"/></svg><svg style="left:27px;top:0px;overflow:visible" width="30" height="30"><text x="0" y="21" font-family="Liberation Sans" font-size="24" fill="#aeb3b5" letter-spacing="4">..</text></svg></div>
<div class="cl" style="left:2427.1px;top:562px;width:53.6px;height:30px;background:linear-gradient(#636550 0,#686a53 14%,#74765f 30%,#74765f 70%,#686a53 86%,#61634e 100%);border:1px solid #484939;box-shadow:inset 0 1px 0 #7d7f69"><div style="left:2px;right:2px;top:14px;height:1px;background:#8b8d7a;opacity:0.6"></div><svg style="left:2px;top:7px" width="18" height="15" viewBox="0 0 18 15"><path d="M0 0 Q1.5 6.5 9 7.5 Q1.5 8.5 0 15 Z" fill="#f0f4f2"/><path d="M10.5 2.5 Q11 7 17.5 7.5 Q11 8 10.5 12.5 Q10 8 5.5 7.5 Q10 7 10.5 2.5Z" fill="#f0f4f2"/></svg><svg style="left:27px;top:0px;overflow:visible" width="30" height="30"><text x="0" y="21" font-family="Liberation Sans" font-size="24" fill="#aeb3b5" letter-spacing="4">..</text></svg></div>
<div class="cl" style="left:2481.0px;top:562px;width:53.6px;height:30px;background:linear-gradient(#636550 0,#686a53 14%,#74765f 30%,#74765f 70%,#686a53 86%,#61634e 100%);border:1px solid #484939;box-shadow:inset 0 1px 0 #7d7f69"><div style="left:2px;right:2px;top:14px;height:1px;background:#8b8d7a;opacity:0.6"></div><svg style="left:2px;top:7px" width="18" height="15" viewBox="0 0 18 15"><path d="M0 0 Q1.5 6.5 9 7.5 Q1.5 8.5 0 15 Z" fill="#f0f4f2"/><path d="M10.5 2.5 Q11 7 17.5 7.5 Q11 8 10.5 12.5 Q10 8 5.5 7.5 Q10 7 10.5 2.5Z" fill="#f0f4f2"/></svg><svg style="left:27px;top:0px;overflow:visible" width="30" height="30"><text x="0" y="21" font-family="Liberation Sans" font-size="24" fill="#aeb3b5" letter-spacing="4">..</text></svg></div>
<div class="cl" style="left:2534.9px;top:562px;width:53.6px;height:30px;background:linear-gradient(#636550 0,#686a53 14%,#74765f 30%,#74765f 70%,#686a53 86%,#61634e 100%);border:1px solid #484939;box-shadow:inset 0 1px 0 #7d7f69"><div style="left:2px;right:2px;top:14px;height:1px;background:#8b8d7a;opacity:0.6"></div><svg style="left:2px;top:7px" width="18" height="15" viewBox="0 0 18 15"><path d="M0 0 Q1.5 6.5 9 7.5 Q1.5 8.5 0 15 Z" fill="#f0f4f2"/><path d="M10.5 2.5 Q11 7 17.5 7.5 Q11 8 10.5 12.5 Q10 8 5.5 7.5 Q10 7 10.5 2.5Z" fill="#f0f4f2"/></svg><svg style="left:27px;top:0px;overflow:visible" width="30" height="30"><text x="0" y="21" font-family="Liberation Sans" font-size="24" fill="#aeb3b5" letter-spacing="4">..</text></svg></div>
<div class="cl" style="left:2588.8px;top:562px;width:53.6px;height:30px;background:linear-gradient(#636550 0,#686a53 14%,#74765f 30%,#74765f 70%,#686a53 86%,#61634e 100%);border:1px solid #484939;box-shadow:inset 0 1px 0 #7d7f69"><div style="left:2px;right:2px;top:14px;height:1px;background:#8b8d7a;opacity:0.6"></div><svg style="left:2px;top:7px" width="18" height="15" viewBox="0 0 18 15"><path d="M0 0 Q1.5 6.5 9 7.5 Q1.5 8.5 0 15 Z" fill="#f0f4f2"/><path d="M10.5 2.5 Q11 7 17.5 7.5 Q11 8 10.5 12.5 Q10 8 5.5 7.5 Q10 7 10.5 2.5Z" fill="#f0f4f2"/></svg><svg style="left:27px;top:0px;overflow:visible" width="30" height="30"><text x="0" y="21" font-family="Liberation Sans" font-size="24" fill="#aeb3b5" letter-spacing="4">..</text></svg></div>
<div class="cl" style="left:2642.7px;top:562px;width:53.6px;height:30px;background:linear-gradient(#636550 0,#686a53 14%,#74765f 30%,#74765f 70%,#686a53 86%,#61634e 100%);border:1px solid #484939;box-shadow:inset 0 1px 0 #7d7f69"><div style="left:2px;right:2px;top:14px;height:1px;background:#8b8d7a;opacity:0.6"></div><svg style="left:2px;top:7px" width="18" height="15" viewBox="0 0 18 15"><path d="M0 0 Q1.5 6.5 9 7.5 Q1.5 8.5 0 15 Z" fill="#f0f4f2"/><path d="M10.5 2.5 Q11 7 17.5 7.5 Q11 8 10.5 12.5 Q10 8 5.5 7.5 Q10 7 10.5 2.5Z" fill="#f0f4f2"/></svg><svg style="left:27px;top:0px;overflow:visible" width="30" height="30"><text x="0" y="21" font-family="Liberation Sans" font-size="24" fill="#aeb3b5" letter-spacing="4">..</text></svg></div>
<div style="left:541.1px;top:624px;width:52.9px;height:80px;background:rgba(12,20,25,0.24)"></div>
<div class="cl" style="left:541.1px;top:594px;width:52.9px;height:30px;background:#4a5259;border:1px solid #3a4248;border-radius:4px 4px 2px 2px"><svg style="left:2px;top:4px" width="17" height="18" viewBox="0 0 17 18"><rect x="0" y="0" width="17" height="18" fill="#dfe4e6"/><rect x="0" y="3" width="10.5" height="4.2" fill="#3f484f"/><rect x="0" y="10.3" width="10.5" height="3.9" fill="#3f484f"/><path d="M1 5 L6 4.2 M1 12.2 L6 11.4" stroke="#b9bcb0" stroke-width="0.8"/></svg><svg style="left:26px;top:0px;overflow:visible" width="22.9" height="30"><text x="0" y="21" font-family="Liberation Sans" font-size="24" fill="#9ea6aa" textLength="22.9" lengthAdjust="spacingAndGlyphs">P..</text></svg></div>
<div style="left:541.1px;top:697px;width:52.9px;height:7px;background:repeating-linear-gradient(90deg,transparent 0 6.74px,rgba(20,30,35,0.35) 6.74px 8.5px,transparent 8.5px 13.48px),repeating-linear-gradient(90deg,#cdd3d6 0 1.4px,#647076 1.4px 3.37px)"></div>
<div style="left:594.9px;top:624px;width:52.9px;height:80px;background:rgba(12,20,25,0.24)"></div>
<div class="cl" style="left:594.9px;top:594px;width:52.9px;height:30px;background:#4a5259;border:1px solid #3a4248;border-radius:4px 4px 2px 2px"><svg style="left:2px;top:4px" width="17" height="18" viewBox="0 0 17 18"><rect x="0" y="0" width="17" height="18" fill="#dfe4e6"/><rect x="0" y="3" width="10.5" height="4.2" fill="#3f484f"/><rect x="0" y="10.3" width="10.5" height="3.9" fill="#3f484f"/><path d="M1 5 L6 4.2 M1 12.2 L6 11.4" stroke="#b9bcb0" stroke-width="0.8"/></svg><svg style="left:26px;top:0px;overflow:visible" width="22.9" height="30"><text x="0" y="21" font-family="Liberation Sans" font-size="24" fill="#9ea6aa" textLength="22.9" lengthAdjust="spacingAndGlyphs">P..</text></svg></div>
<div style="left:594.9px;top:697px;width:52.9px;height:7px;background:repeating-linear-gradient(90deg,transparent 0 6.74px,rgba(20,30,35,0.35) 6.74px 8.5px,transparent 8.5px 13.48px),repeating-linear-gradient(90deg,#cdd3d6 0 1.4px,#647076 1.4px 3.37px)"></div>
<div style="left:648.8px;top:624px;width:52.9px;height:80px;background:rgba(12,20,25,0.24)"></div>
<div class="cl" style="left:648.8px;top:594px;width:52.9px;height:30px;background:#4a5259;border:1px solid #3a4248;border-radius:4px 4px 2px 2px"><svg style="left:2px;top:4px" width="17" height="18" viewBox="0 0 17 18"><rect x="0" y="0" width="17" height="18" fill="#dfe4e6"/><rect x="0" y="3" width="10.5" height="4.2" fill="#3f484f"/><rect x="0" y="10.3" width="10.5" height="3.9" fill="#3f484f"/><path d="M1 5 L6 4.2 M1 12.2 L6 11.4" stroke="#b9bcb0" stroke-width="0.8"/></svg><svg style="left:26px;top:0px;overflow:visible" width="22.9" height="30"><text x="0" y="21" font-family="Liberation Sans" font-size="24" fill="#9ea6aa" textLength="22.9" lengthAdjust="spacingAndGlyphs">P..</text></svg></div>
<div style="left:648.8px;top:697px;width:52.9px;height:7px;background:repeating-linear-gradient(90deg,transparent 0 6.74px,rgba(20,30,35,0.35) 6.74px 8.5px,transparent 8.5px 13.48px),repeating-linear-gradient(90deg,#cdd3d6 0 1.4px,#647076 1.4px 3.37px)"></div>
<div style="left:702.7px;top:624px;width:52.9px;height:80px;background:rgba(12,20,25,0.24)"></div>
<div class="cl" style="left:702.7px;top:594px;width:52.9px;height:30px;background:#4a5259;border:1px solid #3a4248;border-radius:4px 4px 2px 2px"><svg style="left:2px;top:4px" width="17" height="18" viewBox="0 0 17 18"><rect x="0" y="0" width="17" height="18" fill="#dfe4e6"/><rect x="0" y="3" width="10.5" height="4.2" fill="#3f484f"/><rect x="0" y="10.3" width="10.5" height="3.9" fill="#3f484f"/><path d="M1 5 L6 4.2 M1 12.2 L6 11.4" stroke="#b9bcb0" stroke-width="0.8"/></svg><svg style="left:26px;top:0px;overflow:visible" width="22.9" height="30"><text x="0" y="21" font-family="Liberation Sans" font-size="24" fill="#9ea6aa" textLength="22.9" lengthAdjust="spacingAndGlyphs">P..</text></svg></div>
<div style="left:702.7px;top:697px;width:52.9px;height:7px;background:repeating-linear-gradient(90deg,transparent 0 6.74px,rgba(20,30,35,0.35) 6.74px 8.5px,transparent 8.5px 13.48px),repeating-linear-gradient(90deg,#cdd3d6 0 1.4px,#647076 1.4px 3.37px)"></div>
<div style="left:756.6px;top:624px;width:52.9px;height:80px;background:rgba(12,20,25,0.24)"></div>
<div class="cl" style="left:756.6px;top:594px;width:52.9px;height:30px;background:#4a5259;border:1px solid #3a4248;border-radius:4px 4px 2px 2px"><svg style="left:2px;top:4px" width="17" height="18" viewBox="0 0 17 18"><rect x="0" y="0" width="17" height="18" fill="#dfe4e6"/><rect x="0" y="3" width="10.5" height="4.2" fill="#3f484f"/><rect x="0" y="10.3" width="10.5" height="3.9" fill="#3f484f"/><path d="M1 5 L6 4.2 M1 12.2 L6 11.4" stroke="#b9bcb0" stroke-width="0.8"/></svg><svg style="left:26px;top:0px;overflow:visible" width="22.9" height="30"><text x="0" y="21" font-family="Liberation Sans" font-size="24" fill="#9ea6aa" textLength="22.9" lengthAdjust="spacingAndGlyphs">P..</text></svg></div>
<div style="left:756.6px;top:697px;width:52.9px;height:7px;background:repeating-linear-gradient(90deg,transparent 0 6.74px,rgba(20,30,35,0.35) 6.74px 8.5px,transparent 8.5px 13.48px),repeating-linear-gradient(90deg,#cdd3d6 0 1.4px,#647076 1.4px 3.37px)"></div>
<div style="left:810.5px;top:624px;width:52.9px;height:80px;background:rgba(12,20,25,0.24)"></div>
<div class="cl" style="left:810.5px;top:594px;width:52.9px;height:30px;background:#4a5259;border:1px solid #3a4248;border-radius:4px 4px 2px 2px"><svg style="left:2px;top:4px" width="17" height="18" viewBox="0 0 17 18"><rect x="0" y="0" width="17" height="18" fill="#dfe4e6"/><rect x="0" y="3" width="10.5" height="4.2" fill="#3f484f"/><rect x="0" y="10.3" width="10.5" height="3.9" fill="#3f484f"/><path d="M1 5 L6 4.2 M1 12.2 L6 11.4" stroke="#b9bcb0" stroke-width="0.8"/></svg><svg style="left:26px;top:0px;overflow:visible" width="22.9" height="30"><text x="0" y="21" font-family="Liberation Sans" font-size="24" fill="#9ea6aa" textLength="22.9" lengthAdjust="spacingAndGlyphs">P..</text></svg></div>
<div style="left:810.5px;top:697px;width:52.9px;height:7px;background:repeating-linear-gradient(90deg,transparent 0 6.74px,rgba(20,30,35,0.35) 6.74px 8.5px,transparent 8.5px 13.48px),repeating-linear-gradient(90deg,#cdd3d6 0 1.4px,#647076 1.4px 3.37px)"></div>
<div style="left:864.4px;top:624px;width:52.9px;height:80px;background:rgba(12,20,25,0.24)"></div>
<div class="cl" style="left:864.4px;top:594px;width:52.9px;height:30px;background:#4a5259;border:1px solid #3a4248;border-radius:4px 4px 2px 2px"><svg style="left:2px;top:4px" width="17" height="18" viewBox="0 0 17 18"><rect x="0" y="0" width="17" height="18" fill="#dfe4e6"/><rect x="0" y="3" width="10.5" height="4.2" fill="#3f484f"/><rect x="0" y="10.3" width="10.5" height="3.9" fill="#3f484f"/><path d="M1 5 L6 4.2 M1 12.2 L6 11.4" stroke="#b9bcb0" stroke-width="0.8"/></svg><svg style="left:26px;top:0px;overflow:visible" width="22.9" height="30"><text x="0" y="21" font-family="Liberation Sans" font-size="24" fill="#9ea6aa" textLength="22.9" lengthAdjust="spacingAndGlyphs">P..</text></svg></div>
<div style="left:864.4px;top:697px;width:52.9px;height:7px;background:repeating-linear-gradient(90deg,transparent 0 6.74px,rgba(20,30,35,0.35) 6.74px 8.5px,transparent 8.5px 13.48px),repeating-linear-gradient(90deg,#cdd3d6 0 1.4px,#647076 1.4px 3.37px)"></div>
<div style="left:918.3px;top:624px;width:52.9px;height:80px;background:rgba(12,20,25,0.24)"></div>
<div class="cl" style="left:918.3px;top:594px;width:52.9px;height:30px;background:#4a5259;border:1px solid #3a4248;border-radius:4px 4px 2px 2px"><svg style="left:2px;top:4px" width="17" height="18" viewBox="0 0 17 18"><rect x="0" y="0" width="17" height="18" fill="#dfe4e6"/><rect x="0" y="3" width="10.5" height="4.2" fill="#3f484f"/><rect x="0" y="10.3" width="10.5" height="3.9" fill="#3f484f"/><path d="M1 5 L6 4.2 M1 12.2 L6 11.4" stroke="#b9bcb0" stroke-width="0.8"/></svg><svg style="left:26px;top:0px;overflow:visible" width="22.9" height="30"><text x="0" y="21" font-family="Liberation Sans" font-size="24" fill="#9ea6aa" textLength="22.9" lengthAdjust="spacingAndGlyphs">P..</text></svg></div>
<div style="left:918.3px;top:697px;width:52.9px;height:7px;background:repeating-linear-gradient(90deg,transparent 0 6.74px,rgba(20,30,35,0.35) 6.74px 8.5px,transparent 8.5px 13.48px),repeating-linear-gradient(90deg,#cdd3d6 0 1.4px,#647076 1.4px 3.37px)"></div>
<div style="left:972.2px;top:624px;width:52.9px;height:80px;background:rgba(12,20,25,0.24)"></div>
<div class="cl" style="left:972.2px;top:594px;width:52.9px;height:30px;background:#4a5259;border:1px solid #3a4248;border-radius:4px 4px 2px 2px"><svg style="left:2px;top:4px" width="17" height="18" viewBox="0 0 17 18"><rect x="0" y="0" width="17" height="18" fill="#dfe4e6"/><rect x="0" y="3" width="10.5" height="4.2" fill="#3f484f"/><rect x="0" y="10.3" width="10.5" height="3.9" fill="#3f484f"/><path d="M1 5 L6 4.2 M1 12.2 L6 11.4" stroke="#b9bcb0" stroke-width="0.8"/></svg><svg style="left:26px;top:0px;overflow:visible" width="22.9" height="30"><text x="0" y="21" font-family="Liberation Sans" font-size="24" fill="#9ea6aa" textLength="22.9" lengthAdjust="spacingAndGlyphs">P..</text></svg></div>
<div style="left:972.2px;top:697px;width:52.9px;height:7px;background:repeating-linear-gradient(90deg,transparent 0 6.74px,rgba(20,30,35,0.35) 6.74px 8.5px,transparent 8.5px 13.48px),repeating-linear-gradient(90deg,#cdd3d6 0 1.4px,#647076 1.4px 3.37px)"></div>
<div style="left:1026.1px;top:624px;width:52.9px;height:80px;background:rgba(12,20,25,0.24)"></div>
<div class="cl" style="left:1026.1px;top:594px;width:52.9px;height:30px;background:#4a5259;border:1px solid #3a4248;border-radius:4px 4px 2px 2px"><svg style="left:2px;top:4px" width="17" height="18" viewBox="0 0 17 18"><rect x="0" y="0" width="17" height="18" fill="#dfe4e6"/><rect x="0" y="3" width="10.5" height="4.2" fill="#3f484f"/><rect x="0" y="10.3" width="10.5" height="3.9" fill="#3f484f"/><path d="M1 5 L6 4.2 M1 12.2 L6 11.4" stroke="#b9bcb0" stroke-width="0.8"/></svg><svg style="left:26px;top:0px;overflow:visible" width="22.9" height="30"><text x="0" y="21" font-family="Liberation Sans" font-size="24" fill="#9ea6aa" textLength="22.9" lengthAdjust="spacingAndGlyphs">P..</text></svg></div>
<div style="left:1026.1px;top:697px;width:52.9px;height:7px;background:repeating-linear-gradient(90deg,transparent 0 6.74px,rgba(20,30,35,0.35) 6.74px 8.5px,transparent 8.5px 13.48px),repeating-linear-gradient(90deg,#cdd3d6 0 1.4px,#647076 1.4px 3.37px)"></div>
<div style="left:1079.9px;top:624px;width:52.9px;height:80px;background:rgba(12,20,25,0.24)"></div>
<div class="cl" style="left:1079.9px;top:594px;width:52.9px;height:30px;background:#4a5259;border:1px solid #3a4248;border-radius:4px 4px 2px 2px"><svg style="left:2px;top:4px" width="17" height="18" viewBox="0 0 17 18"><rect x="0" y="0" width="17" height="18" fill="#dfe4e6"/><rect x="0" y="3" width="10.5" height="4.2" fill="#3f484f"/><rect x="0" y="10.3" width="10.5" height="3.9" fill="#3f484f"/><path d="M1 5 L6 4.2 M1 12.2 L6 11.4" stroke="#b9bcb0" stroke-width="0.8"/></svg><svg style="left:26px;top:0px;overflow:visible" width="22.9" height="30"><text x="0" y="21" font-family="Liberation Sans" font-size="24" fill="#9ea6aa" textLength="22.9" lengthAdjust="spacingAndGlyphs">P..</text></svg></div>
<div style="left:1079.9px;top:697px;width:52.9px;height:7px;background:repeating-linear-gradient(90deg,transparent 0 6.74px,rgba(20,30,35,0.35) 6.74px 8.5px,transparent 8.5px 13.48px),repeating-linear-gradient(90deg,#cdd3d6 0 1.4px,#647076 1.4px 3.37px)"></div>
<div style="left:1133.8px;top:624px;width:25.9px;height:80px;background:rgba(12,20,25,0.24)"></div>
<div class="cl" style="left:1133.8px;top:594px;width:25.9px;height:30px;background:#4a5259;border:1px solid #3a4248;border-radius:4px 4px 2px 2px"><svg style="left:2px;top:4px" width="17" height="18" viewBox="0 0 17 18"><rect x="0" y="0" width="17" height="18" fill="#dfe4e6"/><rect x="0" y="3" width="10.5" height="4.2" fill="#3f484f"/><rect x="0" y="10.3" width="10.5" height="3.9" fill="#3f484f"/><path d="M1 5 L6 4.2 M1 12.2 L6 11.4" stroke="#b9bcb0" stroke-width="0.8"/></svg></div>
<div style="left:1133.8px;top:697px;width:25.9px;height:7px;background:repeating-linear-gradient(90deg,transparent 0 6.74px,rgba(20,30,35,0.35) 6.74px 8.5px,transparent 8.5px 13.48px),repeating-linear-gradient(90deg,#cdd3d6 0 1.4px,#647076 1.4px 3.37px)"></div>
<div style="left:1295.5px;top:624px;width:52.9px;height:80px;background:rgba(12,20,25,0.24)"></div>
<div class="cl" style="left:1295.5px;top:594px;width:52.9px;height:30px;background:#4a5259;border:1px solid #3a4248;border-radius:4px 4px 2px 2px"><svg style="left:2px;top:4px" width="17" height="18" viewBox="0 0 17 18"><rect x="0" y="0" width="17" height="18" fill="#dfe4e6"/><rect x="0" y="3" width="10.5" height="4.2" fill="#3f484f"/><rect x="0" y="10.3" width="10.5" height="3.9" fill="#3f484f"/><path d="M1 5 L6 4.2 M1 12.2 L6 11.4" stroke="#b9bcb0" stroke-width="0.8"/></svg><svg style="left:26px;top:0px;overflow:visible" width="22.9" height="30"><text x="0" y="21" font-family="Liberation Sans" font-size="24" fill="#9ea6aa" textLength="22.9" lengthAdjust="spacingAndGlyphs">P..</text></svg></div>
<div style="left:1295.5px;top:697px;width:52.9px;height:7px;background:repeating-linear-gradient(90deg,transparent 0 6.74px,rgba(20,30,35,0.35) 6.74px 8.5px,transparent 8.5px 13.48px),repeating-linear-gradient(90deg,#cdd3d6 0 1.4px,#647076 1.4px 3.37px)"></div>
<div style="left:1349.4px;top:624px;width:39.4px;height:80px;background:rgba(12,20,25,0.24)"></div>
<div class="cl" style="left:1349.4px;top:594px;width:39.4px;height:30px;background:#4a5259;border:1px solid #3a4248;border-radius:4px 4px 2px 2px"><svg style="left:2px;top:4px" width="17" height="18" viewBox="0 0 17 18"><rect x="0" y="0" width="17" height="18" fill="#dfe4e6"/><rect x="0" y="3" width="10.5" height="4.2" fill="#3f484f"/><rect x="0" y="10.3" width="10.5" height="3.9" fill="#3f484f"/><path d="M1 5 L6 4.2 M1 12.2 L6 11.4" stroke="#b9bcb0" stroke-width="0.8"/></svg></div>
<div style="left:1349.4px;top:697px;width:39.4px;height:7px;background:repeating-linear-gradient(90deg,transparent 0 6.74px,rgba(20,30,35,0.35) 6.74px 8.5px,transparent 8.5px 13.48px),repeating-linear-gradient(90deg,#cdd3d6 0 1.4px,#647076 1.4px 3.37px)"></div>
<div style="left:1403.3px;top:624px;width:52.9px;height:80px;background:rgba(12,20,25,0.24)"></div>
<div class="cl" style="left:1403.3px;top:594px;width:52.9px;height:30px;background:#4a5259;border:1px solid #3a4248;border-radius:4px 4px 2px 2px"><svg style="left:2px;top:4px" width="17" height="18" viewBox="0 0 17 18"><rect x="0" y="0" width="17" height="18" fill="#dfe4e6"/><rect x="0" y="3" width="10.5" height="4.2" fill="#3f484f"/><rect x="0" y="10.3" width="10.5" height="3.9" fill="#3f484f"/><path d="M1 5 L6 4.2 M1 12.2 L6 11.4" stroke="#b9bcb0" stroke-width="0.8"/></svg><svg style="left:26px;top:0px;overflow:visible" width="22.9" height="30"><text x="0" y="21" font-family="Liberation Sans" font-size="24" fill="#9ea6aa" textLength="22.9" lengthAdjust="spacingAndGlyphs">P..</text></svg></div>
<div style="left:1403.3px;top:697px;width:52.9px;height:7px;background:repeating-linear-gradient(90deg,transparent 0 6.74px,rgba(20,30,35,0.35) 6.74px 8.5px,transparent 8.5px 13.48px),repeating-linear-gradient(90deg,#cdd3d6 0 1.4px,#647076 1.4px 3.37px)"></div>
<div style="left:1457.2px;top:624px;width:49.5px;height:80px;background:rgba(12,20,25,0.24)"></div>
<div class="cl" style="left:1457.2px;top:594px;width:49.5px;height:30px;background:#4a5259;border:1px solid #3a4248;border-radius:4px 4px 2px 2px"><svg style="left:2px;top:4px" width="17" height="18" viewBox="0 0 17 18"><rect x="0" y="0" width="17" height="18" fill="#dfe4e6"/><rect x="0" y="3" width="10.5" height="4.2" fill="#3f484f"/><rect x="0" y="10.3" width="10.5" height="3.9" fill="#3f484f"/><path d="M1 5 L6 4.2 M1 12.2 L6 11.4" stroke="#b9bcb0" stroke-width="0.8"/></svg><svg style="left:28px;top:0px;overflow:visible" width="30" height="30"><text x="0" y="21" font-family="Liberation Sans" font-size="24" fill="#9ea6aa" letter-spacing="4">..</text></svg></div>
<div style="left:1457.2px;top:697px;width:49.5px;height:7px;background:repeating-linear-gradient(90deg,transparent 0 6.74px,rgba(20,30,35,0.35) 6.74px 8.5px,transparent 8.5px 13.48px),repeating-linear-gradient(90deg,#cdd3d6 0 1.4px,#647076 1.4px 3.37px)"></div>
<div style="left:1511.0px;top:624px;width:52.9px;height:80px;background:rgba(12,20,25,0.24)"></div>
<div class="cl" style="left:1511.0px;top:594px;width:52.9px;height:30px;background:#4a5259;border:1px solid #3a4248;border-radius:4px 4px 2px 2px"><svg style="left:2px;top:4px" width="17" height="18" viewBox="0 0 17 18"><rect x="0" y="0" width="17" height="18" fill="#dfe4e6"/><rect x="0" y="3" width="10.5" height="4.2" fill="#3f484f"/><rect x="0" y="10.3" width="10.5" height="3.9" fill="#3f484f"/><path d="M1 5 L6 4.2 M1 12.2 L6 11.4" stroke="#b9bcb0" stroke-width="0.8"/></svg><svg style="left:26px;top:0px;overflow:visible" width="22.9" height="30"><text x="0" y="21" font-family="Liberation Sans" font-size="24" fill="#9ea6aa" textLength="22.9" lengthAdjust="spacingAndGlyphs">P..</text></svg></div>
<div style="left:1511.0px;top:697px;width:52.9px;height:7px;background:repeating-linear-gradient(90deg,transparent 0 6.74px,rgba(20,30,35,0.35) 6.74px 8.5px,transparent 8.5px 13.48px),repeating-linear-gradient(90deg,#cdd3d6 0 1.4px,#647076 1.4px 3.37px)"></div>
<div style="left:1564.9px;top:624px;width:52.9px;height:80px;background:rgba(12,20,25,0.24)"></div>
<div class="cl" style="left:1564.9px;top:594px;width:52.9px;height:30px;background:#4a5259;border:1px solid #3a4248;border-radius:4px 4px 2px 2px"><svg style="left:2px;top:4px" width="17" height="18" viewBox="0 0 17 18"><rect x="0" y="0" width="17" height="18" fill="#dfe4e6"/><rect x="0" y="3" width="10.5" height="4.2" fill="#3f484f"/><rect x="0" y="10.3" width="10.5" height="3.9" fill="#3f484f"/><path d="M1 5 L6 4.2 M1 12.2 L6 11.4" stroke="#b9bcb0" stroke-width="0.8"/></svg><svg style="left:26px;top:0px;overflow:visible" width="22.9" height="30"><text x="0" y="21" font-family="Liberation Sans" font-size="24" fill="#9ea6aa" textLength="22.9" lengthAdjust="spacingAndGlyphs">P..</text></svg></div>
<div style="left:1564.9px;top:697px;width:52.9px;height:7px;background:repeating-linear-gradient(90deg,transparent 0 6.74px,rgba(20,30,35,0.35) 6.74px 8.5px,transparent 8.5px 13.48px),repeating-linear-gradient(90deg,#cdd3d6 0 1.4px,#647076 1.4px 3.37px)"></div>
<div style="left:1618.8px;top:624px;width:52.9px;height:80px;background:rgba(12,20,25,0.24)"></div>
<div class="cl" style="left:1618.8px;top:594px;width:52.9px;height:30px;background:#4a5259;border:1px solid #3a4248;border-radius:4px 4px 2px 2px"><svg style="left:2px;top:4px" width="17" height="18" viewBox="0 0 17 18"><rect x="0" y="0" width="17" height="18" fill="#dfe4e6"/><rect x="0" y="3" width="10.5" height="4.2" fill="#3f484f"/><rect x="0" y="10.3" width="10.5" height="3.9" fill="#3f484f"/><path d="M1 5 L6 4.2 M1 12.2 L6 11.4" stroke="#b9bcb0" stroke-width="0.8"/></svg><svg style="left:26px;top:0px;overflow:visible" width="22.9" height="30"><text x="0" y="21" font-family="Liberation Sans" font-size="24" fill="#9ea6aa" textLength="22.9" lengthAdjust="spacingAndGlyphs">P..</text></svg></div>
<div style="left:1618.8px;top:697px;width:52.9px;height:7px;background:repeating-linear-gradient(90deg,transparent 0 6.74px,rgba(20,30,35,0.35) 6.74px 8.5px,transparent 8.5px 13.48px),repeating-linear-gradient(90deg,#cdd3d6 0 1.4px,#647076 1.4px 3.37px)"></div>
<div style="left:1672.7px;top:624px;width:52.9px;height:80px;background:rgba(12,20,25,0.24)"></div>
<div class="cl" style="left:1672.7px;top:594px;width:52.9px;height:30px;background:#4a5259;border:1px solid #3a4248;border-radius:4px 4px 2px 2px"><svg style="left:2px;top:4px" width="17" height="18" viewBox="0 0 17 18"><rect x="0" y="0" width="17" height="18" fill="#dfe4e6"/><rect x="0" y="3" width="10.5" height="4.2" fill="#3f484f"/><rect x="0" y="10.3" width="10.5" height="3.9" fill="#3f484f"/><path d="M1 5 L6 4.2 M1 12.2 L6 11.4" stroke="#b9bcb0" stroke-width="0.8"/></svg><svg style="left:26px;top:0px;overflow:visible" width="22.9" height="30"><text x="0" y="21" font-family="Liberation Sans" font-size="24" fill="#9ea6aa" textLength="22.9" lengthAdjust="spacingAndGlyphs">P..</text></svg></div>
<div style="left:1672.7px;top:697px;width:52.9px;height:7px;background:repeating-linear-gradient(90deg,transparent 0 6.74px,rgba(20,30,35,0.35) 6.74px 8.5px,transparent 8.5px 13.48px),repeating-linear-gradient(90deg,#cdd3d6 0 1.4px,#647076 1.4px 3.37px)"></div>
<div style="left:1726.6px;top:624px;width:52.9px;height:80px;background:rgba(12,20,25,0.24)"></div>
<div class="cl" style="left:1726.6px;top:594px;width:52.9px;height:30px;background:#4a5259;border:1px solid #3a4248;border-radius:4px 4px 2px 2px"><svg style="left:2px;top:4px" width="17" height="18" viewBox="0 0 17 18"><rect x="0" y="0" width="17" height="18" fill="#dfe4e6"/><rect x="0" y="3" width="10.5" height="4.2" fill="#3f484f"/><rect x="0" y="10.3" width="10.5" height="3.9" fill="#3f484f"/><path d="M1 5 L6 4.2 M1 12.2 L6 11.4" stroke="#b9bcb0" stroke-width="0.8"/></svg><svg style="left:26px;top:0px;overflow:visible" width="22.9" height="30"><text x="0" y="21" font-family="Liberation Sans" font-size="24" fill="#9ea6aa" textLength="22.9" lengthAdjust="spacingAndGlyphs">P..</text></svg></div>
<div style="left:1726.6px;top:697px;width:52.9px;height:7px;background:repeating-linear-gradient(90deg,transparent 0 6.74px,rgba(20,30,35,0.35) 6.74px 8.5px,transparent 8.5px 13.48px),repeating-linear-gradient(90deg,#cdd3d6 0 1.4px,#647076 1.4px 3.37px)"></div>
<div style="left:1780.5px;top:624px;width:52.9px;height:80px;background:rgba(12,20,25,0.24)"></div>
<div class="cl" style="left:1780.5px;top:594px;width:52.9px;height:30px;background:#4a5259;border:1px solid #3a4248;border-radius:4px 4px 2px 2px"><svg style="left:2px;top:4px" width="17" height="18" viewBox="0 0 17 18"><rect x="0" y="0" width="17" height="18" fill="#dfe4e6"/><rect x="0" y="3" width="10.5" height="4.2" fill="#3f484f"/><rect x="0" y="10.3" width="10.5" height="3.9" fill="#3f484f"/><path d="M1 5 L6 4.2 M1 12.2 L6 11.4" stroke="#b9bcb0" stroke-width="0.8"/></svg><svg style="left:26px;top:0px;overflow:visible" width="22.9" height="30"><text x="0" y="21" font-family="Liberation Sans" font-size="24" fill="#9ea6aa" textLength="22.9" lengthAdjust="spacingAndGlyphs">P..</text></svg></div>
<div style="left:1780.5px;top:697px;width:52.9px;height:7px;background:repeating-linear-gradient(90deg,transparent 0 6.74px,rgba(20,30,35,0.35) 6.74px 8.5px,transparent 8.5px 13.48px),repeating-linear-gradient(90deg,#cdd3d6 0 1.4px,#647076 1.4px 3.37px)"></div>
<div style="left:1834.4px;top:624px;width:52.9px;height:80px;background:rgba(12,20,25,0.24)"></div>
<div class="cl" style="left:1834.4px;top:594px;width:52.9px;height:30px;background:#4a5259;border:1px solid #3a4248;border-radius:4px 4px 2px 2px"><svg style="left:2px;top:4px" width="17" height="18" viewBox="0 0 17 18"><rect x="0" y="0" width="17" height="18" fill="#dfe4e6"/><rect x="0" y="3" width="10.5" height="4.2" fill="#3f484f"/><rect x="0" y="10.3" width="10.5" height="3.9" fill="#3f484f"/><path d="M1 5 L6 4.2 M1 12.2 L6 11.4" stroke="#b9bcb0" stroke-width="0.8"/></svg><svg style="left:26px;top:0px;overflow:visible" width="22.9" height="30"><text x="0" y="21" font-family="Liberation Sans" font-size="24" fill="#9ea6aa" textLength="22.9" lengthAdjust="spacingAndGlyphs">P..</text></svg></div>
<div style="left:1834.4px;top:697px;width:52.9px;height:7px;background:repeating-linear-gradient(90deg,transparent 0 6.74px,rgba(20,30,35,0.35) 6.74px 8.5px,transparent 8.5px 13.48px),repeating-linear-gradient(90deg,#cdd3d6 0 1.4px,#647076 1.4px 3.37px)"></div>
<div style="left:1888.3px;top:624px;width:52.9px;height:80px;background:rgba(12,20,25,0.24)"></div>
<div class="cl" style="left:1888.3px;top:594px;width:52.9px;height:30px;background:#4a5259;border:1px solid #3a4248;border-radius:4px 4px 2px 2px"><svg style="left:2px;top:4px" width="17" height="18" viewBox="0 0 17 18"><rect x="0" y="0" width="17" height="18" fill="#dfe4e6"/><rect x="0" y="3" width="10.5" height="4.2" fill="#3f484f"/><rect x="0" y="10.3" width="10.5" height="3.9" fill="#3f484f"/><path d="M1 5 L6 4.2 M1 12.2 L6 11.4" stroke="#b9bcb0" stroke-width="0.8"/></svg><svg style="left:26px;top:0px;overflow:visible" width="22.9" height="30"><text x="0" y="21" font-family="Liberation Sans" font-size="24" fill="#9ea6aa" textLength="22.9" lengthAdjust="spacingAndGlyphs">P..</text></svg></div>
<div style="left:1888.3px;top:697px;width:52.9px;height:7px;background:repeating-linear-gradient(90deg,transparent 0 6.74px,rgba(20,30,35,0.35) 6.74px 8.5px,transparent 8.5px 13.48px),repeating-linear-gradient(90deg,#cdd3d6 0 1.4px,#647076 1.4px 3.37px)"></div>
<div style="left:1942.1px;top:624px;width:52.9px;height:80px;background:rgba(12,20,25,0.24)"></div>
<div class="cl" style="left:1942.1px;top:594px;width:52.9px;height:30px;background:#4a5259;border:1px solid #3a4248;border-radius:4px 4px 2px 2px"><svg style="left:2px;top:4px" width="17" height="18" viewBox="0 0 17 18"><rect x="0" y="0" width="17" height="18" fill="#dfe4e6"/><rect x="0" y="3" width="10.5" height="4.2" fill="#3f484f"/><rect x="0" y="10.3" width="10.5" height="3.9" fill="#3f484f"/><path d="M1 5 L6 4.2 M1 12.2 L6 11.4" stroke="#b9bcb0" stroke-width="0.8"/></svg><svg style="left:26px;top:0px;overflow:visible" width="22.9" height="30"><text x="0" y="21" font-family="Liberation Sans" font-size="24" fill="#9ea6aa" textLength="22.9" lengthAdjust="spacingAndGlyphs">P..</text></svg></div>
<div style="left:1942.1px;top:697px;width:52.9px;height:7px;background:repeating-linear-gradient(90deg,transparent 0 6.74px,rgba(20,30,35,0.35) 6.74px 8.5px,transparent 8.5px 13.48px),repeating-linear-gradient(90deg,#cdd3d6 0 1.4px,#647076 1.4px 3.37px)"></div>
<div style="left:1996.0px;top:624px;width:25.9px;height:80px;background:rgba(12,20,25,0.24)"></div>
<div class="cl" style="left:1996.0px;top:594px;width:25.9px;height:30px;background:#4a5259;border:1px solid #3a4248;border-radius:4px 4px 2px 2px"><svg style="left:2px;top:4px" width="17" height="18" viewBox="0 0 17 18"><rect x="0" y="0" width="17" height="18" fill="#dfe4e6"/><rect x="0" y="3" width="10.5" height="4.2" fill="#3f484f"/><rect x="0" y="10.3" width="10.5" height="3.9" fill="#3f484f"/><path d="M1 5 L6 4.2 M1 12.2 L6 11.4" stroke="#b9bcb0" stroke-width="0.8"/></svg></div>
<div style="left:1996.0px;top:697px;width:25.9px;height:7px;background:repeating-linear-gradient(90deg,transparent 0 6.74px,rgba(20,30,35,0.35) 6.74px 8.5px,transparent 8.5px 13.48px),repeating-linear-gradient(90deg,#cdd3d6 0 1.4px,#647076 1.4px 3.37px)"></div>
<div style="left:2157.7px;top:624px;width:52.9px;height:80px;background:rgba(12,20,25,0.24)"></div>
<div class="cl" style="left:2157.7px;top:594px;width:52.9px;height:30px;background:#4a5259;border:1px solid #3a4248;border-radius:4px 4px 2px 2px"><svg style="left:2px;top:4px" width="17" height="18" viewBox="0 0 17 18"><rect x="0" y="0" width="17" height="18" fill="#dfe4e6"/><rect x="0" y="3" width="10.5" height="4.2" fill="#3f484f"/><rect x="0" y="10.3" width="10.5" height="3.9" fill="#3f484f"/><path d="M1 5 L6 4.2 M1 12.2 L6 11.4" stroke="#b9bcb0" stroke-width="0.8"/></svg><svg style="left:26px;top:0px;overflow:visible" width="22.9" height="30"><text x="0" y="21" font-family="Liberation Sans" font-size="24" fill="#9ea6aa" textLength="22.9" lengthAdjust="spacingAndGlyphs">P..</text></svg></div>
<div style="left:2157.7px;top:697px;width:52.9px;height:7px;background:repeating-linear-gradient(90deg,transparent 0 6.74px,rgba(20,30,35,0.35) 6.74px 8.5px,transparent 8.5px 13.48px),repeating-linear-gradient(90deg,#cdd3d6 0 1.4px,#647076 1.4px 3.37px)"></div>
<div style="left:2211.6px;top:624px;width:39.4px;height:80px;background:rgba(12,20,25,0.24)"></div>
<div class="cl" style="left:2211.6px;top:594px;width:39.4px;height:30px;background:#4a5259;border:1px solid #3a4248;border-radius:4px 4px 2px 2px"><svg style="left:2px;top:4px" width="17" height="18" viewBox="0 0 17 18"><rect x="0" y="0" width="17" height="18" fill="#dfe4e6"/><rect x="0" y="3" width="10.5" height="4.2" fill="#3f484f"/><rect x="0" y="10.3" width="10.5" height="3.9" fill="#3f484f"/><path d="M1 5 L6 4.2 M1 12.2 L6 11.4" stroke="#b9bcb0" stroke-width="0.8"/></svg></div>
<div style="left:2211.6px;top:697px;width:39.4px;height:7px;background:repeating-linear-gradient(90deg,transparent 0 6.74px,rgba(20,30,35,0.35) 6.74px 8.5px,transparent 8.5px 13.48px),repeating-linear-gradient(90deg,#cdd3d6 0 1.4px,#647076 1.4px 3.37px)"></div>
<div style="left:2265.5px;top:624px;width:52.9px;height:80px;background:rgba(12,20,25,0.24)"></div>
<div class="cl" style="left:2265.5px;top:594px;width:52.9px;height:30px;background:#4a5259;border:1px solid #3a4248;border-radius:4px 4px 2px 2px"><svg style="left:2px;top:4px" width="17" height="18" viewBox="0 0 17 18"><rect x="0" y="0" width="17" height="18" fill="#dfe4e6"/><rect x="0" y="3" width="10.5" height="4.2" fill="#3f484f"/><rect x="0" y="10.3" width="10.5" height="3.9" fill="#3f484f"/><path d="M1 5 L6 4.2 M1 12.2 L6 11.4" stroke="#b9bcb0" stroke-width="0.8"/></svg><svg style="left:26px;top:0px;overflow:visible" width="22.9" height="30"><text x="0" y="21" font-family="Liberation Sans" font-size="24" fill="#9ea6aa" textLength="22.9" lengthAdjust="spacingAndGlyphs">P..</text></svg></div>
<div style="left:2265.5px;top:697px;width:52.9px;height:7px;background:repeating-linear-gradient(90deg,transparent 0 6.74px,rgba(20,30,35,0.35) 6.74px 8.5px,transparent 8.5px 13.48px),repeating-linear-gradient(90deg,#cdd3d6 0 1.4px,#647076 1.4px 3.37px)"></div>
<div style="left:2319.4px;top:624px;width:49.5px;height:80px;background:rgba(12,20,25,0.24)"></div>
<div class="cl" style="left:2319.4px;top:594px;width:49.5px;height:30px;background:#4a5259;border:1px solid #3a4248;border-radius:4px 4px 2px 2px"><svg style="left:2px;top:4px" width="17" height="18" viewBox="0 0 17 18"><rect x="0" y="0" width="17" height="18" fill="#dfe4e6"/><rect x="0" y="3" width="10.5" height="4.2" fill="#3f484f"/><rect x="0" y="10.3" width="10.5" height="3.9" fill="#3f484f"/><path d="M1 5 L6 4.2 M1 12.2 L6 11.4" stroke="#b9bcb0" stroke-width="0.8"/></svg><svg style="left:28px;top:0px;overflow:visible" width="30" height="30"><text x="0" y="21" font-family="Liberation Sans" font-size="24" fill="#9ea6aa" letter-spacing="4">..</text></svg></div>
<div style="left:2319.4px;top:697px;width:49.5px;height:7px;background:repeating-linear-gradient(90deg,transparent 0 6.74px,rgba(20,30,35,0.35) 6.74px 8.5px,transparent 8.5px 13.48px),repeating-linear-gradient(90deg,#cdd3d6 0 1.4px,#647076 1.4px 3.37px)"></div>
<div style="left:2373.3px;top:624px;width:52.9px;height:80px;background:rgba(12,20,25,0.24)"></div>
<div class="cl" style="left:2373.3px;top:594px;width:52.9px;height:30px;background:#4a5259;border:1px solid #3a4248;border-radius:4px 4px 2px 2px"><svg style="left:2px;top:4px" width="17" height="18" viewBox="0 0 17 18"><rect x="0" y="0" width="17" height="18" fill="#dfe4e6"/><rect x="0" y="3" width="10.5" height="4.2" fill="#3f484f"/><rect x="0" y="10.3" width="10.5" height="3.9" fill="#3f484f"/><path d="M1 5 L6 4.2 M1 12.2 L6 11.4" stroke="#b9bcb0" stroke-width="0.8"/></svg><svg style="left:26px;top:0px;overflow:visible" width="22.9" height="30"><text x="0" y="21" font-family="Liberation Sans" font-size="24" fill="#9ea6aa" textLength="22.9" lengthAdjust="spacingAndGlyphs">P..</text></svg></div>
<div style="left:2373.3px;top:697px;width:52.9px;height:7px;background:repeating-linear-gradient(90deg,transparent 0 6.74px,rgba(20,30,35,0.35) 6.74px 8.5px,transparent 8.5px 13.48px),repeating-linear-gradient(90deg,#cdd3d6 0 1.4px,#647076 1.4px 3.37px)"></div>
<div style="left:2427.1px;top:624px;width:52.9px;height:80px;background:rgba(12,20,25,0.24)"></div>
<div class="cl" style="left:2427.1px;top:594px;width:52.9px;height:30px;background:#4a5259;border:1px solid #3a4248;border-radius:4px 4px 2px 2px"><svg style="left:2px;top:4px" width="17" height="18" viewBox="0 0 17 18"><rect x="0" y="0" width="17" height="18" fill="#dfe4e6"/><rect x="0" y="3" width="10.5" height="4.2" fill="#3f484f"/><rect x="0" y="10.3" width="10.5" height="3.9" fill="#3f484f"/><path d="M1 5 L6 4.2 M1 12.2 L6 11.4" stroke="#b9bcb0" stroke-width="0.8"/></svg><svg style="left:26px;top:0px;overflow:visible" width="22.9" height="30"><text x="0" y="21" font-family="Liberation Sans" font-size="24" fill="#9ea6aa" textLength="22.9" lengthAdjust="spacingAndGlyphs">P..</text></svg></div>
<div style="left:2427.1px;top:697px;width:52.9px;height:7px;background:repeating-linear-gradient(90deg,transparent 0 6.74px,rgba(20,30,35,0.35) 6.74px 8.5px,transparent 8.5px 13.48px),repeating-linear-gradient(90deg,#cdd3d6 0 1.4px,#647076 1.4px 3.37px)"></div>
<div style="left:2481.0px;top:624px;width:52.9px;height:80px;background:rgba(12,20,25,0.24)"></div>
<div class="cl" style="left:2481.0px;top:594px;width:52.9px;height:30px;background:#4a5259;border:1px solid #3a4248;border-radius:4px 4px 2px 2px"><svg style="left:2px;top:4px" width="17" height="18" viewBox="0 0 17 18"><rect x="0" y="0" width="17" height="18" fill="#dfe4e6"/><rect x="0" y="3" width="10.5" height="4.2" fill="#3f484f"/><rect x="0" y="10.3" width="10.5" height="3.9" fill="#3f484f"/><path d="M1 5 L6 4.2 M1 12.2 L6 11.4" stroke="#b9bcb0" stroke-width="0.8"/></svg><svg style="left:26px;top:0px;overflow:visible" width="22.9" height="30"><text x="0" y="21" font-family="Liberation Sans" font-size="24" fill="#9ea6aa" textLength="22.9" lengthAdjust="spacingAndGlyphs">P..</text></svg></div>
<div style="left:2481.0px;top:697px;width:52.9px;height:7px;background:repeating-linear-gradient(90deg,transparent 0 6.74px,rgba(20,30,35,0.35) 6.74px 8.5px,transparent 8.5px 13.48px),repeating-linear-gradient(90deg,#cdd3d6 0 1.4px,#647076 1.4px 3.37px)"></div>
<div style="left:2534.9px;top:624px;width:52.9px;height:80px;background:rgba(12,20,25,0.24)"></div>
<div class="cl" style="left:2534.9px;top:594px;width:52.9px;height:30px;background:#4a5259;border:1px solid #3a4248;border-radius:4px 4px 2px 2px"><svg style="left:2px;top:4px" width="17" height="18" viewBox="0 0 17 18"><rect x="0" y="0" width="17" height="18" fill="#dfe4e6"/><rect x="0" y="3" width="10.5" height="4.2" fill="#3f484f"/><rect x="0" y="10.3" width="10.5" height="3.9" fill="#3f484f"/><path d="M1 5 L6 4.2 M1 12.2 L6 11.4" stroke="#b9bcb0" stroke-width="0.8"/></svg><svg style="left:26px;top:0px;overflow:visible" width="22.9" height="30"><text x="0" y="21" font-family="Liberation Sans" font-size="24" fill="#9ea6aa" textLength="22.9" lengthAdjust="spacingAndGlyphs">P..</text></svg></div>
<div style="left:2534.9px;top:697px;width:52.9px;height:7px;background:repeating-linear-gradient(90deg,transparent 0 6.74px,rgba(20,30,35,0.35) 6.74px 8.5px,transparent 8.5px 13.48px),repeating-linear-gradient(90deg,#cdd3d6 0 1.4px,#647076 1.4px 3.37px)"></div>
<div style="left:2588.8px;top:624px;width:52.9px;height:80px;background:rgba(12,20,25,0.24)"></div>
<div class="cl" style="left:2588.8px;top:594px;width:52.9px;height:30px;background:#4a5259;border:1px solid #3a4248;border-radius:4px 4px 2px 2px"><svg style="left:2px;top:4px" width="17" height="18" viewBox="0 0 17 18"><rect x="0" y="0" width="17" height="18" fill="#dfe4e6"/><rect x="0" y="3" width="10.5" height="4.2" fill="#3f484f"/><rect x="0" y="10.3" width="10.5" height="3.9" fill="#3f484f"/><path d="M1 5 L6 4.2 M1 12.2 L6 11.4" stroke="#b9bcb0" stroke-width="0.8"/></svg><svg style="left:26px;top:0px;overflow:visible" width="22.9" height="30"><text x="0" y="21" font-family="Liberation Sans" font-size="24" fill="#9ea6aa" textLength="22.9" lengthAdjust="spacingAndGlyphs">P..</text></svg></div>
<div style="left:2588.8px;top:697px;width:52.9px;height:7px;background:repeating-linear-gradient(90deg,transparent 0 6.74px,rgba(20,30,35,0.35) 6.74px 8.5px,transparent 8.5px 13.48px),repeating-linear-gradient(90deg,#cdd3d6 0 1.4px,#647076 1.4px 3.37px)"></div>
<div style="left:2642.7px;top:624px;width:52.9px;height:80px;background:rgba(12,20,25,0.24)"></div>
<div class="cl" style="left:2642.7px;top:594px;width:52.9px;height:30px;background:#4a5259;border:1px solid #3a4248;border-radius:4px 4px 2px 2px"><svg style="left:2px;top:4px" width="17" height="18" viewBox="0 0 17 18"><rect x="0" y="0" width="17" height="18" fill="#dfe4e6"/><rect x="0" y="3" width="10.5" height="4.2" fill="#3f484f"/><rect x="0" y="10.3" width="10.5" height="3.9" fill="#3f484f"/><path d="M1 5 L6 4.2 M1 12.2 L6 11.4" stroke="#b9bcb0" stroke-width="0.8"/></svg><svg style="left:26px;top:0px;overflow:visible" width="22.9" height="30"><text x="0" y="21" font-family="Liberation Sans" font-size="24" fill="#9ea6aa" textLength="22.9" lengthAdjust="spacingAndGlyphs">P..</text></svg></div>
<div style="left:2642.7px;top:697px;width:52.9px;height:7px;background:repeating-linear-gradient(90deg,transparent 0 6.74px,rgba(20,30,35,0.35) 6.74px 8.5px,transparent 8.5px 13.48px),repeating-linear-gradient(90deg,#cdd3d6 0 1.4px,#647076 1.4px 3.37px)"></div>
<div style="left:756.6px;top:768px;width:52.9px;height:80px;background:rgba(12,20,25,0.24)"></div>
<div class="cl" style="left:756.6px;top:738px;width:52.9px;height:30px;background:#4a5259;border:1px solid #3a4248;border-radius:4px 4px 2px 2px"><svg style="left:2px;top:4px" width="17" height="18" viewBox="0 0 17 18"><rect x="0" y="0" width="17" height="18" fill="#dfe4e6"/><rect x="0" y="3" width="10.5" height="4.2" fill="#3f484f"/><rect x="0" y="10.3" width="10.5" height="3.9" fill="#3f484f"/><path d="M1 5 L6 4.2 M1 12.2 L6 11.4" stroke="#b9bcb0" stroke-width="0.8"/></svg><svg style="left:26px;top:0px;overflow:visible" width="22.9" height="30"><text x="0" y="21" font-family="Liberation Sans" font-size="24" fill="#9ea6aa" textLength="22.9" lengthAdjust="spacingAndGlyphs">P..</text></svg></div>
<div style="left:756.6px;top:837px;width:52.9px;height:11px;background:repeating-linear-gradient(90deg,transparent 0 6.74px,rgba(20,30,35,0.35) 6.74px 8.5px,transparent 8.5px 13.48px),repeating-linear-gradient(90deg,#cdd3d6 0 1.4px,#647076 1.4px 3.37px)"></div>
<div style="left:754.1px;top:770px;width:2px;height:10px;background:#9aa1a6"></div>
<div style="left:810.5px;top:768px;width:52.9px;height:80px;background:rgba(12,20,25,0.24)"></div>
<div class="cl" style="left:810.5px;top:738px;width:52.9px;height:30px;background:#4a5259;border:1px solid #3a4248;border-radius:4px 4px 2px 2px"><svg style="left:2px;top:4px" width="17" height="18" viewBox="0 0 17 18"><rect x="0" y="0" width="17" height="18" fill="#dfe4e6"/><rect x="0" y="3" width="10.5" height="4.2" fill="#3f484f"/><rect x="0" y="10.3" width="10.5" height="3.9" fill="#3f484f"/><path d="M1 5 L6 4.2 M1 12.2 L6 11.4" stroke="#b9bcb0" stroke-width="0.8"/></svg><svg style="left:26px;top:0px;overflow:visible" width="22.9" height="30"><text x="0" y="21" font-family="Liberation Sans" font-size="24" fill="#9ea6aa" textLength="22.9" lengthAdjust="spacingAndGlyphs">P..</text></svg></div>
<div style="left:810.5px;top:837px;width:52.9px;height:11px;background:repeating-linear-gradient(90deg,transparent 0 6.74px,rgba(20,30,35,0.35) 6.74px 8.5px,transparent 8.5px 13.48px),repeating-linear-gradient(90deg,#cdd3d6 0 1.4px,#647076 1.4px 3.37px)"></div>
<div style="left:808.0px;top:770px;width:2px;height:10px;background:#9aa1a6"></div>
<div style="left:864.4px;top:768px;width:52.9px;height:80px;background:rgba(12,20,25,0.24)"></div>
<div class="cl" style="left:864.4px;top:738px;width:52.9px;height:30px;background:#4a5259;border:1px solid #3a4248;border-radius:4px 4px 2px 2px"><svg style="left:2px;top:4px" width="17" height="18" viewBox="0 0 17 18"><rect x="0" y="0" width="17" height="18" fill="#dfe4e6"/><rect x="0" y="3" width="10.5" height="4.2" fill="#3f484f"/><rect x="0" y="10.3" width="10.5" height="3.9" fill="#3f484f"/><path d="M1 5 L6 4.2 M1 12.2 L6 11.4" stroke="#b9bcb0" stroke-width="0.8"/></svg><svg style="left:26px;top:0px;overflow:visible" width="22.9" height="30"><text x="0" y="21" font-family="Liberation Sans" font-size="24" fill="#9ea6aa" textLength="22.9" lengthAdjust="spacingAndGlyphs">P..</text></svg></div>
<div style="left:864.4px;top:837px;width:52.9px;height:11px;background:repeating-linear-gradient(90deg,transparent 0 6.74px,rgba(20,30,35,0.35) 6.74px 8.5px,transparent 8.5px 13.48px),repeating-linear-gradient(90deg,#cdd3d6 0 1.4px,#647076 1.4px 3.37px)"></div>
<div style="left:861.9px;top:770px;width:2px;height:10px;background:#9aa1a6"></div>
<div style="left:918.3px;top:768px;width:52.9px;height:80px;background:rgba(12,20,25,0.24)"></div>
<div class="cl" style="left:918.3px;top:738px;width:52.9px;height:30px;background:#4a5259;border:1px solid #3a4248;border-radius:4px 4px 2px 2px"><svg style="left:2px;top:4px" width="17" height="18" viewBox="0 0 17 18"><rect x="0" y="0" width="17" height="18" fill="#dfe4e6"/><rect x="0" y="3" width="10.5" height="4.2" fill="#3f484f"/><rect x="0" y="10.3" width="10.5" height="3.9" fill="#3f484f"/><path d="M1 5 L6 4.2 M1 12.2 L6 11.4" stroke="#b9bcb0" stroke-width="0.8"/></svg><svg style="left:26px;top:0px;overflow:visible" width="22.9" height="30"><text x="0" y="21" font-family="Liberation Sans" font-size="24" fill="#9ea6aa" textLength="22.9" lengthAdjust="spacingAndGlyphs">P..</text></svg></div>
<div style="left:918.3px;top:837px;width:52.9px;height:11px;background:repeating-linear-gradient(90deg,transparent 0 6.74px,rgba(20,30,35,0.35) 6.74px 8.5px,transparent 8.5px 13.48px),repeating-linear-gradient(90deg,#cdd3d6 0 1.4px,#647076 1.4px 3.37px)"></div>
<div style="left:915.8px;top:770px;width:2px;height:10px;background:#9aa1a6"></div>
<div style="left:972.2px;top:768px;width:52.9px;height:80px;background:rgba(12,20,25,0.24)"></div>
<div class="cl" style="left:972.2px;top:738px;width:52.9px;height:30px;background:#4a5259;border:1px solid #3a4248;border-radius:4px 4px 2px 2px"><svg style="left:2px;top:4px" width="17" height="18" viewBox="0 0 17 18"><rect x="0" y="0" width="17" height="18" fill="#dfe4e6"/><rect x="0" y="3" width="10.5" height="4.2" fill="#3f484f"/><rect x="0" y="10.3" width="10.5" height="3.9" fill="#3f484f"/><path d="M1 5 L6 4.2 M1 12.2 L6 11.4" stroke="#b9bcb0" stroke-width="0.8"/></svg><svg style="left:26px;top:0px;overflow:visible" width="22.9" height="30"><text x="0" y="21" font-family="Liberation Sans" font-size="24" fill="#9ea6aa" textLength="22.9" lengthAdjust="spacingAndGlyphs">P..</text></svg></div>
<div style="left:972.2px;top:837px;width:52.9px;height:11px;background:repeating-linear-gradient(90deg,transparent 0 6.74px,rgba(20,30,35,0.35) 6.74px 8.5px,transparent 8.5px 13.48px),repeating-linear-gradient(90deg,#cdd3d6 0 1.4px,#647076 1.4px 3.37px)"></div>
<div style="left:969.7px;top:770px;width:2px;height:10px;background:#9aa1a6"></div>
<div style="left:1026.1px;top:768px;width:52.9px;height:80px;background:rgba(12,20,25,0.24)"></div>
<div class="cl" style="left:1026.1px;top:738px;width:52.9px;height:30px;background:#4a5259;border:1px solid #3a4248;border-radius:4px 4px 2px 2px"><svg style="left:2px;top:4px" width="17" height="18" viewBox="0 0 17 18"><rect x="0" y="0" width="17" height="18" fill="#dfe4e6"/><rect x="0" y="3" width="10.5" height="4.2" fill="#3f484f"/><rect x="0" y="10.3" width="10.5" height="3.9" fill="#3f484f"/><path d="M1 5 L6 4.2 M1 12.2 L6 11.4" stroke="#b9bcb0" stroke-width="0.8"/></svg><svg style="left:26px;top:0px;overflow:visible" width="22.9" height="30"><text x="0" y="21" font-family="Liberation Sans" font-size="24" fill="#9ea6aa" textLength="22.9" lengthAdjust="spacingAndGlyphs">P..</text></svg></div>
<div style="left:1026.1px;top:837px;width:52.9px;height:11px;background:repeating-linear-gradient(90deg,transparent 0 6.74px,rgba(20,30,35,0.35) 6.74px 8.5px,transparent 8.5px 13.48px),repeating-linear-gradient(90deg,#cdd3d6 0 1.4px,#647076 1.4px 3.37px)"></div>
<div style="left:1023.6px;top:770px;width:2px;height:10px;background:#9aa1a6"></div>
<div style="left:1079.9px;top:768px;width:52.9px;height:80px;background:rgba(12,20,25,0.24)"></div>
<div class="cl" style="left:1079.9px;top:738px;width:52.9px;height:30px;background:#4a5259;border:1px solid #3a4248;border-radius:4px 4px 2px 2px"><svg style="left:2px;top:4px" width="17" height="18" viewBox="0 0 17 18"><rect x="0" y="0" width="17" height="18" fill="#dfe4e6"/><rect x="0" y="3" width="10.5" height="4.2" fill="#3f484f"/><rect x="0" y="10.3" width="10.5" height="3.9" fill="#3f484f"/><path d="M1 5 L6 4.2 M1 12.2 L6 11.4" stroke="#b9bcb0" stroke-width="0.8"/></svg><svg style="left:26px;top:0px;overflow:visible" width="22.9" height="30"><text x="0" y="21" font-family="Liberation Sans" font-size="24" fill="#9ea6aa" textLength="22.9" lengthAdjust="spacingAndGlyphs">P..</text></svg></div>
<div style="left:1079.9px;top:837px;width:52.9px;height:11px;background:repeating-linear-gradient(90deg,transparent 0 6.74px,rgba(20,30,35,0.35) 6.74px 8.5px,transparent 8.5px 13.48px),repeating-linear-gradient(90deg,#cdd3d6 0 1.4px,#647076 1.4px 3.37px)"></div>
<div style="left:1077.4px;top:770px;width:2px;height:10px;background:#9aa1a6"></div>
<div style="left:1133.8px;top:768px;width:25.9px;height:80px;background:rgba(12,20,25,0.24)"></div>
<div class="cl" style="left:1133.8px;top:738px;width:25.9px;height:30px;background:#4a5259;border:1px solid #3a4248;border-radius:4px 4px 2px 2px"><svg style="left:2px;top:4px" width="17" height="18" viewBox="0 0 17 18"><rect x="0" y="0" width="17" height="18" fill="#dfe4e6"/><rect x="0" y="3" width="10.5" height="4.2" fill="#3f484f"/><rect x="0" y="10.3" width="10.5" height="3.9" fill="#3f484f"/><path d="M1 5 L6 4.2 M1 12.2 L6 11.4" stroke="#b9bcb0" stroke-width="0.8"/></svg></div>
<div style="left:1133.8px;top:837px;width:25.9px;height:11px;background:repeating-linear-gradient(90deg,transparent 0 6.74px,rgba(20,30,35,0.35) 6.74px 8.5px,transparent 8.5px 13.48px),repeating-linear-gradient(90deg,#cdd3d6 0 1.4px,#647076 1.4px 3.37px)"></div>
<div style="left:1131.3px;top:770px;width:2px;height:10px;background:#9aa1a6"></div>
<div style="left:1187.7px;top:768px;width:52.9px;height:80px;background:rgba(12,20,25,0.24)"></div>
<div class="cl" style="left:1187.7px;top:738px;width:52.9px;height:30px;background:#4a5259;border:1px solid #3a4248;border-radius:4px 4px 2px 2px"><svg style="left:2px;top:4px" width="17" height="18" viewBox="0 0 17 18"><rect x="0" y="0" width="17" height="18" fill="#dfe4e6"/><rect x="0" y="3" width="10.5" height="4.2" fill="#3f484f"/><rect x="0" y="10.3" width="10.5" height="3.9" fill="#3f484f"/><path d="M1 5 L6 4.2 M1 12.2 L6 11.4" stroke="#b9bcb0" stroke-width="0.8"/></svg><svg style="left:26px;top:0px;overflow:visible" width="22.9" height="30"><text x="0" y="21" font-family="Liberation Sans" font-size="24" fill="#9ea6aa" textLength="22.9" lengthAdjust="spacingAndGlyphs">P..</text></svg></div>
<div style="left:1187.7px;top:837px;width:52.9px;height:11px;background:repeating-linear-gradient(90deg,transparent 0 6.74px,rgba(20,30,35,0.35) 6.74px 8.5px,transparent 8.5px 13.48px),repeating-linear-gradient(90deg,#cdd3d6 0 1.4px,#647076 1.4px 3.37px)"></div>
<div style="left:1185.2px;top:770px;width:2px;height:10px;background:#9aa1a6"></div>
<div style="left:1241.6px;top:768px;width:52.9px;height:80px;background:rgba(12,20,25,0.24)"></div>
<div class="cl" style="left:1241.6px;top:738px;width:52.9px;height:30px;background:#4a5259;border:1px solid #3a4248;border-radius:4px 4px 2px 2px"><svg style="left:2px;top:4px" width="17" height="18" viewBox="0 0 17 18"><rect x="0" y="0" width="17" height="18" fill="#dfe4e6"/><rect x="0" y="3" width="10.5" height="4.2" fill="#3f484f"/><rect x="0" y="10.3" width="10.5" height="3.9" fill="#3f484f"/><path d="M1 5 L6 4.2 M1 12.2 L6 11.4" stroke="#b9bcb0" stroke-width="0.8"/></svg><svg style="left:26px;top:0px;overflow:visible" width="22.9" height="30"><text x="0" y="21" font-family="Liberation Sans" font-size="24" fill="#9ea6aa" textLength="22.9" lengthAdjust="spacingAndGlyphs">P..</text></svg></div>
<div style="left:1241.6px;top:837px;width:52.9px;height:11px;background:repeating-linear-gradient(90deg,transparent 0 6.74px,rgba(20,30,35,0.35) 6.74px 8.5px,transparent 8.5px 13.48px),repeating-linear-gradient(90deg,#cdd3d6 0 1.4px,#647076 1.4px 3.37px)"></div>
<div style="left:1239.1px;top:770px;width:2px;height:10px;background:#9aa1a6"></div>
<div style="left:1295.5px;top:768px;width:52.9px;height:80px;background:rgba(12,20,25,0.24)"></div>
<div class="cl" style="left:1295.5px;top:738px;width:52.9px;height:30px;background:#4a5259;border:1px solid #3a4248;border-radius:4px 4px 2px 2px"><svg style="left:2px;top:4px" width="17" height="18" viewBox="0 0 17 18"><rect x="0" y="0" width="17" height="18" fill="#dfe4e6"/><rect x="0" y="3" width="10.5" height="4.2" fill="#3f484f"/><rect x="0" y="10.3" width="10.5" height="3.9" fill="#3f484f"/><path d="M1 5 L6 4.2 M1 12.2 L6 11.4" stroke="#b9bcb0" stroke-width="0.8"/></svg><svg style="left:26px;top:0px;overflow:visible" width="22.9" height="30"><text x="0" y="21" font-family="Liberation Sans" font-size="24" fill="#9ea6aa" textLength="22.9" lengthAdjust="spacingAndGlyphs">P..</text></svg></div>
<div style="left:1295.5px;top:837px;width:52.9px;height:11px;background:repeating-linear-gradient(90deg,transparent 0 6.74px,rgba(20,30,35,0.35) 6.74px 8.5px,transparent 8.5px 13.48px),repeating-linear-gradient(90deg,#cdd3d6 0 1.4px,#647076 1.4px 3.37px)"></div>
<div style="left:1293.0px;top:770px;width:2px;height:10px;background:#9aa1a6"></div>
<div style="left:1349.4px;top:768px;width:52.9px;height:80px;background:rgba(12,20,25,0.24)"></div>
<div class="cl" style="left:1349.4px;top:738px;width:52.9px;height:30px;background:#4a5259;border:1px solid #3a4248;border-radius:4px 4px 2px 2px"><svg style="left:2px;top:4px" width="17" height="18" viewBox="0 0 17 18"><rect x="0" y="0" width="17" height="18" fill="#dfe4e6"/><rect x="0" y="3" width="10.5" height="4.2" fill="#3f484f"/><rect x="0" y="10.3" width="10.5" height="3.9" fill="#3f484f"/><path d="M1 5 L6 4.2 M1 12.2 L6 11.4" stroke="#b9bcb0" stroke-width="0.8"/></svg><svg style="left:26px;top:0px;overflow:visible" width="22.9" height="30"><text x="0" y="21" font-family="Liberation Sans" font-size="24" fill="#9ea6aa" textLength="22.9" lengthAdjust="spacingAndGlyphs">P..</text></svg></div>
<div style="left:1349.4px;top:837px;width:52.9px;height:11px;background:repeating-linear-gradient(90deg,transparent 0 6.74px,rgba(20,30,35,0.35) 6.74px 8.5px,transparent 8.5px 13.48px),repeating-linear-gradient(90deg,#cdd3d6 0 1.4px,#647076 1.4px 3.37px)"></div>
<div style="left:1346.9px;top:770px;width:2px;height:10px;background:#9aa1a6"></div>
<div style="left:1403.3px;top:768px;width:52.9px;height:80px;background:rgba(12,20,25,0.24)"></div>
<div class="cl" style="left:1403.3px;top:738px;width:52.9px;height:30px;background:#4a5259;border:1px solid #3a4248;border-radius:4px 4px 2px 2px"><svg style="left:2px;top:4px" width="17" height="18" viewBox="0 0 17 18"><rect x="0" y="0" width="17" height="18" fill="#dfe4e6"/><rect x="0" y="3" width="10.5" height="4.2" fill="#3f484f"/><rect x="0" y="10.3" width="10.5" height="3.9" fill="#3f484f"/><path d="M1 5 L6 4.2 M1 12.2 L6 11.4" stroke="#b9bcb0" stroke-width="0.8"/></svg><svg style="left:26px;top:0px;overflow:visible" width="22.9" height="30"><text x="0" y="21" font-family="Liberation Sans" font-size="24" fill="#9ea6aa" textLength="22.9" lengthAdjust="spacingAndGlyphs">P..</text></svg></div>
<div style="left:1403.3px;top:837px;width:52.9px;height:11px;background:repeating-linear-gradient(90deg,transparent 0 6.74px,rgba(20,30,35,0.35) 6.74px 8.5px,transparent 8.5px 13.48px),repeating-linear-gradient(90deg,#cdd3d6 0 1.4px,#647076 1.4px 3.37px)"></div>
<div style="left:1400.8px;top:770px;width:2px;height:10px;background:#9aa1a6"></div>
<div style="left:1457.2px;top:768px;width:52.9px;height:80px;background:rgba(12,20,25,0.24)"></div>
<div class="cl" style="left:1457.2px;top:738px;width:52.9px;height:30px;background:#4a5259;border:1px solid #3a4248;border-radius:4px 4px 2px 2px"><svg style="left:2px;top:4px" width="17" height="18" viewBox="0 0 17 18"><rect x="0" y="0" width="17" height="18" fill="#dfe4e6"/><rect x="0" y="3" width="10.5" height="4.2" fill="#3f484f"/><rect x="0" y="10.3" width="10.5" height="3.9" fill="#3f484f"/><path d="M1 5 L6 4.2 M1 12.2 L6 11.4" stroke="#b9bcb0" stroke-width="0.8"/></svg><svg style="left:26px;top:0px;overflow:visible" width="22.9" height="30"><text x="0" y="21" font-family="Liberation Sans" font-size="24" fill="#9ea6aa" textLength="22.9" lengthAdjust="spacingAndGlyphs">P..</text></svg></div>
<div style="left:1457.2px;top:837px;width:52.9px;height:11px;background:repeating-linear-gradient(90deg,transparent 0 6.74px,rgba(20,30,35,0.35) 6.74px 8.5px,transparent 8.5px 13.48px),repeating-linear-gradient(90deg,#cdd3d6 0 1.4px,#647076 1.4px 3.37px)"></div>
<div style="left:1454.7px;top:770px;width:2px;height:10px;background:#9aa1a6"></div>
<div style="left:1511.0px;top:768px;width:52.9px;height:80px;background:rgba(12,20,25,0.24)"></div>
<div class="cl" style="left:1511.0px;top:738px;width:52.9px;height:30px;background:#4a5259;border:1px solid #3a4248;border-radius:4px 4px 2px 2px"><svg style="left:2px;top:4px" width="17" height="18" viewBox="0 0 17 18"><rect x="0" y="0" width="17" height="18" fill="#dfe4e6"/><rect x="0" y="3" width="10.5" height="4.2" fill="#3f484f"/><rect x="0" y="10.3" width="10.5" height="3.9" fill="#3f484f"/><path d="M1 5 L6 4.2 M1 12.2 L6 11.4" stroke="#b9bcb0" stroke-width="0.8"/></svg><svg style="left:26px;top:0px;overflow:visible" width="22.9" height="30"><text x="0" y="21" font-family="Liberation Sans" font-size="24" fill="#9ea6aa" textLength="22.9" lengthAdjust="spacingAndGlyphs">P..</text></svg></div>
<div style="left:1511.0px;top:837px;width:52.9px;height:11px;background:repeating-linear-gradient(90deg,transparent 0 6.74px,rgba(20,30,35,0.35) 6.74px 8.5px,transparent 8.5px 13.48px),repeating-linear-gradient(90deg,#cdd3d6 0 1.4px,#647076 1.4px 3.37px)"></div>
<div style="left:1508.5px;top:770px;width:2px;height:10px;background:#9aa1a6"></div>
<div style="left:1564.9px;top:768px;width:52.9px;height:80px;background:rgba(12,20,25,0.24)"></div>
<div class="cl" style="left:1564.9px;top:738px;width:52.9px;height:30px;background:#4a5259;border:1px solid #3a4248;border-radius:4px 4px 2px 2px"><svg style="left:2px;top:4px" width="17" height="18" viewBox="0 0 17 18"><rect x="0" y="0" width="17" height="18" fill="#dfe4e6"/><rect x="0" y="3" width="10.5" height="4.2" fill="#3f484f"/><rect x="0" y="10.3" width="10.5" height="3.9" fill="#3f484f"/><path d="M1 5 L6 4.2 M1 12.2 L6 11.4" stroke="#b9bcb0" stroke-width="0.8"/></svg><svg style="left:26px;top:0px;overflow:visible" width="22.9" height="30"><text x="0" y="21" font-family="Liberation Sans" font-size="24" fill="#9ea6aa" textLength="22.9" lengthAdjust="spacingAndGlyphs">P..</text></svg></div>
<div style="left:1564.9px;top:837px;width:52.9px;height:11px;background:repeating-linear-gradient(90deg,transparent 0 6.74px,rgba(20,30,35,0.35) 6.74px 8.5px,transparent 8.5px 13.48px),repeating-linear-gradient(90deg,#cdd3d6 0 1.4px,#647076 1.4px 3.37px)"></div>
<div style="left:1562.4px;top:770px;width:2px;height:10px;background:#9aa1a6"></div>
<div style="left:1618.8px;top:768px;width:52.9px;height:80px;background:rgba(12,20,25,0.24)"></div>
<div class="cl" style="left:1618.8px;top:738px;width:52.9px;height:30px;background:#4a5259;border:1px solid #3a4248;border-radius:4px 4px 2px 2px"><svg style="left:2px;top:4px" width="17" height="18" viewBox="0 0 17 18"><rect x="0" y="0" width="17" height="18" fill="#dfe4e6"/><rect x="0" y="3" width="10.5" height="4.2" fill="#3f484f"/><rect x="0" y="10.3" width="10.5" height="3.9" fill="#3f484f"/><path d="M1 5 L6 4.2 M1 12.2 L6 11.4" stroke="#b9bcb0" stroke-width="0.8"/></svg><svg style="left:26px;top:0px;overflow:visible" width="22.9" height="30"><text x="0" y="21" font-family="Liberation Sans" font-size="24" fill="#9ea6aa" textLength="22.9" lengthAdjust="spacingAndGlyphs">P..</text></svg></div>
<div style="left:1618.8px;top:837px;width:52.9px;height:11px;background:repeating-linear-gradient(90deg,transparent 0 6.74px,rgba(20,30,35,0.35) 6.74px 8.5px,transparent 8.5px 13.48px),repeating-linear-gradient(90deg,#cdd3d6 0 1.4px,#647076 1.4px 3.37px)"></div>
<div style="left:1616.3px;top:770px;width:2px;height:10px;background:#9aa1a6"></div>
<div style="left:1672.7px;top:768px;width:52.9px;height:80px;background:rgba(12,20,25,0.24)"></div>
<div class="cl" style="left:1672.7px;top:738px;width:52.9px;height:30px;background:#4a5259;border:1px solid #3a4248;border-radius:4px 4px 2px 2px"><svg style="left:2px;top:4px" width="17" height="18" viewBox="0 0 17 18"><rect x="0" y="0" width="17" height="18" fill="#dfe4e6"/><rect x="0" y="3" width="10.5" height="4.2" fill="#3f484f"/><rect x="0" y="10.3" width="10.5" height="3.9" fill="#3f484f"/><path d="M1 5 L6 4.2 M1 12.2 L6 11.4" stroke="#b9bcb0" stroke-width="0.8"/></svg><svg style="left:26px;top:0px;overflow:visible" width="22.9" height="30"><text x="0" y="21" font-family="Liberation Sans" font-size="24" fill="#9ea6aa" textLength="22.9" lengthAdjust="spacingAndGlyphs">P..</text></svg></div>
<div style="left:1672.7px;top:837px;width:52.9px;height:11px;background:repeating-linear-gradient(90deg,transparent 0 6.74px,rgba(20,30,35,0.35) 6.74px 8.5px,transparent 8.5px 13.48px),repeating-linear-gradient(90deg,#cdd3d6 0 1.4px,#647076 1.4px 3.37px)"></div>
<div style="left:1670.2px;top:770px;width:2px;height:10px;background:#9aa1a6"></div>
<div style="left:1726.6px;top:768px;width:52.9px;height:80px;background:rgba(12,20,25,0.24)"></div>
<div class="cl" style="left:1726.6px;top:738px;width:52.9px;height:30px;background:#4a5259;border:1px solid #3a4248;border-radius:4px 4px 2px 2px"><svg style="left:2px;top:4px" width="17" height="18" viewBox="0 0 17 18"><rect x="0" y="0" width="17" height="18" fill="#dfe4e6"/><rect x="0" y="3" width="10.5" height="4.2" fill="#3f484f"/><rect x="0" y="10.3" width="10.5" height="3.9" fill="#3f484f"/><path d="M1 5 L6 4.2 M1 12.2 L6 11.4" stroke="#b9bcb0" stroke-width="0.8"/></svg><svg style="left:26px;top:0px;overflow:visible" width="22.9" height="30"><text x="0" y="21" font-family="Liberation Sans" font-size="24" fill="#9ea6aa" textLength="22.9" lengthAdjust="spacingAndGlyphs">P..</text></svg></div>
<div style="left:1726.6px;top:837px;width:52.9px;height:11px;background:repeating-linear-gradient(90deg,transparent 0 6.74px,rgba(20,30,35,0.35) 6.74px 8.5px,transparent 8.5px 13.48px),repeating-linear-gradient(90deg,#cdd3d6 0 1.4px,#647076 1.4px 3.37px)"></div>
<div style="left:1724.1px;top:770px;width:2px;height:10px;background:#9aa1a6"></div>
<div style="left:1780.5px;top:768px;width:52.9px;height:80px;background:rgba(12,20,25,0.24)"></div>
<div class="cl" style="left:1780.5px;top:738px;width:52.9px;height:30px;background:#4a5259;border:1px solid #3a4248;border-radius:4px 4px 2px 2px"><svg style="left:2px;top:4px" width="17" height="18" viewBox="0 0 17 18"><rect x="0" y="0" width="17" height="18" fill="#dfe4e6"/><rect x="0" y="3" width="10.5" height="4.2" fill="#3f484f"/><rect x="0" y="10.3" width="10.5" height="3.9" fill="#3f484f"/><path d="M1 5 L6 4.2 M1 12.2 L6 11.4" stroke="#b9bcb0" stroke-width="0.8"/></svg><svg style="left:26px;top:0px;overflow:visible" width="22.9" height="30"><text x="0" y="21" font-family="Liberation Sans" font-size="24" fill="#9ea6aa" textLength="22.9" lengthAdjust="spacingAndGlyphs">P..</text></svg></div>
<div style="left:1780.5px;top:837px;width:52.9px;height:11px;background:repeating-linear-gradient(90deg,transparent 0 6.74px,rgba(20,30,35,0.35) 6.74px 8.5px,transparent 8.5px 13.48px),repeating-linear-gradient(90deg,#cdd3d6 0 1.4px,#647076 1.4px 3.37px)"></div>
<div style="left:1778.0px;top:770px;width:2px;height:10px;background:#9aa1a6"></div>
<div style="left:1834.4px;top:768px;width:52.9px;height:80px;background:rgba(12,20,25,0.24)"></div>
<div class="cl" style="left:1834.4px;top:738px;width:52.9px;height:30px;background:#4a5259;border:1px solid #3a4248;border-radius:4px 4px 2px 2px"><svg style="left:2px;top:4px" width="17" height="18" viewBox="0 0 17 18"><rect x="0" y="0" width="17" height="18" fill="#dfe4e6"/><rect x="0" y="3" width="10.5" height="4.2" fill="#3f484f"/><rect x="0" y="10.3" width="10.5" height="3.9" fill="#3f484f"/><path d="M1 5 L6 4.2 M1 12.2 L6 11.4" stroke="#b9bcb0" stroke-width="0.8"/></svg><svg style="left:26px;top:0px;overflow:visible" width="22.9" height="30"><text x="0" y="21" font-family="Liberation Sans" font-size="24" fill="#9ea6aa" textLength="22.9" lengthAdjust="spacingAndGlyphs">P..</text></svg></div>
<div style="left:1834.4px;top:837px;width:52.9px;height:11px;background:repeating-linear-gradient(90deg,transparent 0 6.74px,rgba(20,30,35,0.35) 6.74px 8.5px,transparent 8.5px 13.48px),repeating-linear-gradient(90deg,#cdd3d6 0 1.4px,#647076 1.4px 3.37px)"></div>
<div style="left:1831.9px;top:770px;width:2px;height:10px;background:#9aa1a6"></div>
<div style="left:1888.3px;top:768px;width:52.9px;height:80px;background:rgba(12,20,25,0.24)"></div>
<div class="cl" style="left:1888.3px;top:738px;width:52.9px;height:30px;background:#4a5259;border:1px solid #3a4248;border-radius:4px 4px 2px 2px"><svg style="left:2px;top:4px" width="17" height="18" viewBox="0 0 17 18"><rect x="0" y="0" width="17" height="18" fill="#dfe4e6"/><rect x="0" y="3" width="10.5" height="4.2" fill="#3f484f"/><rect x="0" y="10.3" width="10.5" height="3.9" fill="#3f484f"/><path d="M1 5 L6 4.2 M1 12.2 L6 11.4" stroke="#b9bcb0" stroke-width="0.8"/></svg><svg style="left:26px;top:0px;overflow:visible" width="22.9" height="30"><text x="0" y="21" font-family="Liberation Sans" font-size="24" fill="#9ea6aa" textLength="22.9" lengthAdjust="spacingAndGlyphs">P..</text></svg></div>
<div style="left:1888.3px;top:837px;width:52.9px;height:11px;background:repeating-linear-gradient(90deg,transparent 0 6.74px,rgba(20,30,35,0.35) 6.74px 8.5px,transparent 8.5px 13.48px),repeating-linear-gradient(90deg,#cdd3d6 0 1.4px,#647076 1.4px 3.37px)"></div>
<div style="left:1885.8px;top:770px;width:2px;height:10px;background:#9aa1a6"></div>
<div style="left:1942.1px;top:768px;width:52.9px;height:80px;background:rgba(12,20,25,0.24)"></div>
<div class="cl" style="left:1942.1px;top:738px;width:52.9px;height:30px;background:#4a5259;border:1px solid #3a4248;border-radius:4px 4px 2px 2px"><svg style="left:2px;top:4px" width="17" height="18" viewBox="0 0 17 18"><rect x="0" y="0" width="17" height="18" fill="#dfe4e6"/><rect x="0" y="3" width="10.5" height="4.2" fill="#3f484f"/><rect x="0" y="10.3" width="10.5" height="3.9" fill="#3f484f"/><path d="M1 5 L6 4.2 M1 12.2 L6 11.4" stroke="#b9bcb0" stroke-width="0.8"/></svg><svg style="left:26px;top:0px;overflow:visible" width="22.9" height="30"><text x="0" y="21" font-family="Liberation Sans" font-size="24" fill="#9ea6aa" textLength="22.9" lengthAdjust="spacingAndGlyphs">P..</text></svg></div>
<div style="left:1942.1px;top:837px;width:52.9px;height:11px;background:repeating-linear-gradient(90deg,transparent 0 6.74px,rgba(20,30,35,0.35) 6.74px 8.5px,transparent 8.5px 13.48px),repeating-linear-gradient(90deg,#cdd3d6 0 1.4px,#647076 1.4px 3.37px)"></div>
<div style="left:1939.6px;top:770px;width:2px;height:10px;background:#9aa1a6"></div>
<div style="left:1996.0px;top:768px;width:25.9px;height:80px;background:rgba(12,20,25,0.24)"></div>
<div class="cl" style="left:1996.0px;top:738px;width:25.9px;height:30px;background:#4a5259;border:1px solid #3a4248;border-radius:4px 4px 2px 2px"><svg style="left:2px;top:4px" width="17" height="18" viewBox="0 0 17 18"><rect x="0" y="0" width="17" height="18" fill="#dfe4e6"/><rect x="0" y="3" width="10.5" height="4.2" fill="#3f484f"/><rect x="0" y="10.3" width="10.5" height="3.9" fill="#3f484f"/><path d="M1 5 L6 4.2 M1 12.2 L6 11.4" stroke="#b9bcb0" stroke-width="0.8"/></svg></div>
<div style="left:1996.0px;top:837px;width:25.9px;height:11px;background:repeating-linear-gradient(90deg,transparent 0 6.74px,rgba(20,30,35,0.35) 6.74px 8.5px,transparent 8.5px 13.48px),repeating-linear-gradient(90deg,#cdd3d6 0 1.4px,#647076 1.4px 3.37px)"></div>
<div style="left:1993.5px;top:770px;width:2px;height:10px;background:#9aa1a6"></div>
<div style="left:2049.9px;top:768px;width:52.9px;height:80px;background:rgba(12,20,25,0.24)"></div>
<div class="cl" style="left:2049.9px;top:738px;width:52.9px;height:30px;background:#4a5259;border:1px solid #3a4248;border-radius:4px 4px 2px 2px"><svg style="left:2px;top:4px" width="17" height="18" viewBox="0 0 17 18"><rect x="0" y="0" width="17" height="18" fill="#dfe4e6"/><rect x="0" y="3" width="10.5" height="4.2" fill="#3f484f"/><rect x="0" y="10.3" width="10.5" height="3.9" fill="#3f484f"/><path d="M1 5 L6 4.2 M1 12.2 L6 11.4" stroke="#b9bcb0" stroke-width="0.8"/></svg><svg style="left:26px;top:0px;overflow:visible" width="22.9" height="30"><text x="0" y="21" font-family="Liberation Sans" font-size="24" fill="#9ea6aa" textLength="22.9" lengthAdjust="spacingAndGlyphs">P..</text></svg></div>
<div style="left:2049.9px;top:837px;width:52.9px;height:11px;background:repeating-linear-gradient(90deg,transparent 0 6.74px,rgba(20,30,35,0.35) 6.74px 8.5px,transparent 8.5px 13.48px),repeating-linear-gradient(90deg,#cdd3d6 0 1.4px,#647076 1.4px 3.37px)"></div>
<div style="left:2047.4px;top:770px;width:2px;height:10px;background:#9aa1a6"></div>
<div style="left:2103.8px;top:768px;width:52.9px;height:80px;background:rgba(12,20,25,0.24)"></div>
<div class="cl" style="left:2103.8px;top:738px;width:52.9px;height:30px;background:#4a5259;border:1px solid #3a4248;border-radius:4px 4px 2px 2px"><svg style="left:2px;top:4px" width="17" height="18" viewBox="0 0 17 18"><rect x="0" y="0" width="17" height="18" fill="#dfe4e6"/><rect x="0" y="3" width="10.5" height="4.2" fill="#3f484f"/><rect x="0" y="10.3" width="10.5" height="3.9" fill="#3f484f"/><path d="M1 5 L6 4.2 M1 12.2 L6 11.4" stroke="#b9bcb0" stroke-width="0.8"/></svg><svg style="left:26px;top:0px;overflow:visible" width="22.9" height="30"><text x="0" y="21" font-family="Liberation Sans" font-size="24" fill="#9ea6aa" textLength="22.9" lengthAdjust="spacingAndGlyphs">P..</text></svg></div>
<div style="left:2103.8px;top:837px;width:52.9px;height:11px;background:repeating-linear-gradient(90deg,transparent 0 6.74px,rgba(20,30,35,0.35) 6.74px 8.5px,transparent 8.5px 13.48px),repeating-linear-gradient(90deg,#cdd3d6 0 1.4px,#647076 1.4px 3.37px)"></div>
<div style="left:2101.3px;top:770px;width:2px;height:10px;background:#9aa1a6"></div>
<div style="left:2157.7px;top:768px;width:52.9px;height:80px;background:rgba(12,20,25,0.24)"></div>
<div class="cl" style="left:2157.7px;top:738px;width:52.9px;height:30px;background:#4a5259;border:1px solid #3a4248;border-radius:4px 4px 2px 2px"><svg style="left:2px;top:4px" width="17" height="18" viewBox="0 0 17 18"><rect x="0" y="0" width="17" height="18" fill="#dfe4e6"/><rect x="0" y="3" width="10.5" height="4.2" fill="#3f484f"/><rect x="0" y="10.3" width="10.5" height="3.9" fill="#3f484f"/><path d="M1 5 L6 4.2 M1 12.2 L6 11.4" stroke="#b9bcb0" stroke-width="0.8"/></svg><svg style="left:26px;top:0px;overflow:visible" width="22.9" height="30"><text x="0" y="21" font-family="Liberation Sans" font-size="24" fill="#9ea6aa" textLength="22.9" lengthAdjust="spacingAndGlyphs">P..</text></svg></div>
<div style="left:2157.7px;top:837px;width:52.9px;height:11px;background:repeating-linear-gradient(90deg,transparent 0 6.74px,rgba(20,30,35,0.35) 6.74px 8.5px,transparent 8.5px 13.48px),repeating-linear-gradient(90deg,#cdd3d6 0 1.4px,#647076 1.4px 3.37px)"></div>
<div style="left:2155.2px;top:770px;width:2px;height:10px;background:#9aa1a6"></div>
<div style="left:2211.6px;top:768px;width:52.9px;height:80px;background:rgba(12,20,25,0.24)"></div>
<div class="cl" style="left:2211.6px;top:738px;width:52.9px;height:30px;background:#4a5259;border:1px solid #3a4248;border-radius:4px 4px 2px 2px"><svg style="left:2px;top:4px" width="17" height="18" viewBox="0 0 17 18"><rect x="0" y="0" width="17" height="18" fill="#dfe4e6"/><rect x="0" y="3" width="10.5" height="4.2" fill="#3f484f"/><rect x="0" y="10.3" width="10.5" height="3.9" fill="#3f484f"/><path d="M1 5 L6 4.2 M1 12.2 L6 11.4" stroke="#b9bcb0" stroke-width="0.8"/></svg><svg style="left:26px;top:0px;overflow:visible" width="22.9" height="30"><text x="0" y="21" font-family="Liberation Sans" font-size="24" fill="#9ea6aa" textLength="22.9" lengthAdjust="spacingAndGlyphs">P..</text></svg></div>
<div style="left:2211.6px;top:837px;width:52.9px;height:11px;background:repeating-linear-gradient(90deg,transparent 0 6.74px,rgba(20,30,35,0.35) 6.74px 8.5px,transparent 8.5px 13.48px),repeating-linear-gradient(90deg,#cdd3d6 0 1.4px,#647076 1.4px 3.37px)"></div>
<div style="left:2209.1px;top:770px;width:2px;height:10px;background:#9aa1a6"></div>
<div style="left:2265.5px;top:768px;width:52.9px;height:80px;background:rgba(12,20,25,0.24)"></div>
<div class="cl" style="left:2265.5px;top:738px;width:52.9px;height:30px;background:#4a5259;border:1px solid #3a4248;border-radius:4px 4px 2px 2px"><svg style="left:2px;top:4px" width="17" height="18" viewBox="0 0 17 18"><rect x="0" y="0" width="17" height="18" fill="#dfe4e6"/><rect x="0" y="3" width="10.5" height="4.2" fill="#3f484f"/><rect x="0" y="10.3" width="10.5" height="3.9" fill="#3f484f"/><path d="M1 5 L6 4.2 M1 12.2 L6 11.4" stroke="#b9bcb0" stroke-width="0.8"/></svg><svg style="left:26px;top:0px;overflow:visible" width="22.9" height="30"><text x="0" y="21" font-family="Liberation Sans" font-size="24" fill="#9ea6aa" textLength="22.9" lengthAdjust="spacingAndGlyphs">P..</text></svg></div>
<div style="left:2265.5px;top:837px;width:52.9px;height:11px;background:repeating-linear-gradient(90deg,transparent 0 6.74px,rgba(20,30,35,0.35) 6.74px 8.5px,transparent 8.5px 13.48px),repeating-linear-gradient(90deg,#cdd3d6 0 1.4px,#647076 1.4px 3.37px)"></div>
<div style="left:2263.0px;top:770px;width:2px;height:10px;background:#9aa1a6"></div>
<div style="left:2319.4px;top:768px;width:52.9px;height:80px;background:rgba(12,20,25,0.24)"></div>
<div class="cl" style="left:2319.4px;top:738px;width:52.9px;height:30px;background:#4a5259;border:1px solid #3a4248;border-radius:4px 4px 2px 2px"><svg style="left:2px;top:4px" width="17" height="18" viewBox="0 0 17 18"><rect x="0" y="0" width="17" height="18" fill="#dfe4e6"/><rect x="0" y="3" width="10.5" height="4.2" fill="#3f484f"/><rect x="0" y="10.3" width="10.5" height="3.9" fill="#3f484f"/><path d="M1 5 L6 4.2 M1 12.2 L6 11.4" stroke="#b9bcb0" stroke-width="0.8"/></svg><svg style="left:26px;top:0px;overflow:visible" width="22.9" height="30"><text x="0" y="21" font-family="Liberation Sans" font-size="24" fill="#9ea6aa" textLength="22.9" lengthAdjust="spacingAndGlyphs">P..</text></svg></div>
<div style="left:2319.4px;top:837px;width:52.9px;height:11px;background:repeating-linear-gradient(90deg,transparent 0 6.74px,rgba(20,30,35,0.35) 6.74px 8.5px,transparent 8.5px 13.48px),repeating-linear-gradient(90deg,#cdd3d6 0 1.4px,#647076 1.4px 3.37px)"></div>
<div style="left:2316.9px;top:770px;width:2px;height:10px;background:#9aa1a6"></div>
<div style="left:2373.3px;top:768px;width:52.9px;height:80px;background:rgba(12,20,25,0.24)"></div>
<div class="cl" style="left:2373.3px;top:738px;width:52.9px;height:30px;background:#4a5259;border:1px solid #3a4248;border-radius:4px 4px 2px 2px"><svg style="left:2px;top:4px" width="17" height="18" viewBox="0 0 17 18"><rect x="0" y="0" width="17" height="18" fill="#dfe4e6"/><rect x="0" y="3" width="10.5" height="4.2" fill="#3f484f"/><rect x="0" y="10.3" width="10.5" height="3.9" fill="#3f484f"/><path d="M1 5 L6 4.2 M1 12.2 L6 11.4" stroke="#b9bcb0" stroke-width="0.8"/></svg><svg style="left:26px;top:0px;overflow:visible" width="22.9" height="30"><text x="0" y="21" font-family="Liberation Sans" font-size="24" fill="#9ea6aa" textLength="22.9" lengthAdjust="spacingAndGlyphs">P..</text></svg></div>
<div style="left:2373.3px;top:837px;width:52.9px;height:11px;background:repeating-linear-gradient(90deg,transparent 0 6.74px,rgba(20,30,35,0.35) 6.74px 8.5px,transparent 8.5px 13.48px),repeating-linear-gradient(90deg,#cdd3d6 0 1.4px,#647076 1.4px 3.37px)"></div>
<div style="left:2370.8px;top:770px;width:2px;height:10px;background:#9aa1a6"></div>
<div style="left:2427.1px;top:768px;width:52.9px;height:80px;background:rgba(12,20,25,0.24)"></div>
<div class="cl" style="left:2427.1px;top:738px;width:52.9px;height:30px;background:#4a5259;border:1px solid #3a4248;border-radius:4px 4px 2px 2px"><svg style="left:2px;top:4px" width="17" height="18" viewBox="0 0 17 18"><rect x="0" y="0" width="17" height="18" fill="#dfe4e6"/><rect x="0" y="3" width="10.5" height="4.2" fill="#3f484f"/><rect x="0" y="10.3" width="10.5" height="3.9" fill="#3f484f"/><path d="M1 5 L6 4.2 M1 12.2 L6 11.4" stroke="#b9bcb0" stroke-width="0.8"/></svg><svg style="left:26px;top:0px;overflow:visible" width="22.9" height="30"><text x="0" y="21" font-family="Liberation Sans" font-size="24" fill="#9ea6aa" textLength="22.9" lengthAdjust="spacingAndGlyphs">P..</text></svg></div>
<div style="left:2427.1px;top:837px;width:52.9px;height:11px;background:repeating-linear-gradient(90deg,transparent 0 6.74px,rgba(20,30,35,0.35) 6.74px 8.5px,transparent 8.5px 13.48px),repeating-linear-gradient(90deg,#cdd3d6 0 1.4px,#647076 1.4px 3.37px)"></div>
<div style="left:2424.6px;top:770px;width:2px;height:10px;background:#9aa1a6"></div>
<div style="left:2481.0px;top:768px;width:52.9px;height:80px;background:rgba(12,20,25,0.24)"></div>
<div class="cl" style="left:2481.0px;top:738px;width:52.9px;height:30px;background:#4a5259;border:1px solid #3a4248;border-radius:4px 4px 2px 2px"><svg style="left:2px;top:4px" width="17" height="18" viewBox="0 0 17 18"><rect x="0" y="0" width="17" height="18" fill="#dfe4e6"/><rect x="0" y="3" width="10.5" height="4.2" fill="#3f484f"/><rect x="0" y="10.3" width="10.5" height="3.9" fill="#3f484f"/><path d="M1 5 L6 4.2 M1 12.2 L6 11.4" stroke="#b9bcb0" stroke-width="0.8"/></svg><svg style="left:26px;top:0px;overflow:visible" width="22.9" height="30"><text x="0" y="21" font-family="Liberation Sans" font-size="24" fill="#9ea6aa" textLength="22.9" lengthAdjust="spacingAndGlyphs">P..</text></svg></div>
<div style="left:2481.0px;top:837px;width:52.9px;height:11px;background:repeating-linear-gradient(90deg,transparent 0 6.74px,rgba(20,30,35,0.35) 6.74px 8.5px,transparent 8.5px 13.48px),repeating-linear-gradient(90deg,#cdd3d6 0 1.4px,#647076 1.4px 3.37px)"></div>
<div style="left:2478.5px;top:770px;width:2px;height:10px;background:#9aa1a6"></div>
<div style="left:2534.9px;top:768px;width:52.9px;height:80px;background:rgba(12,20,25,0.24)"></div>
<div class="cl" style="left:2534.9px;top:738px;width:52.9px;height:30px;background:#4a5259;border:1px solid #3a4248;border-radius:4px 4px 2px 2px"><svg style="left:2px;top:4px" width="17" height="18" viewBox="0 0 17 18"><rect x="0" y="0" width="17" height="18" fill="#dfe4e6"/><rect x="0" y="3" width="10.5" height="4.2" fill="#3f484f"/><rect x="0" y="10.3" width="10.5" height="3.9" fill="#3f484f"/><path d="M1 5 L6 4.2 M1 12.2 L6 11.4" stroke="#b9bcb0" stroke-width="0.8"/></svg><svg style="left:26px;top:0px;overflow:visible" width="22.9" height="30"><text x="0" y="21" font-family="Liberation Sans" font-size="24" fill="#9ea6aa" textLength="22.9" lengthAdjust="spacingAndGlyphs">P..</text></svg></div>
<div style="left:2534.9px;top:837px;width:52.9px;height:11px;background:repeating-linear-gradient(90deg,transparent 0 6.74px,rgba(20,30,35,0.35) 6.74px 8.5px,transparent 8.5px 13.48px),repeating-linear-gradient(90deg,#cdd3d6 0 1.4px,#647076 1.4px 3.37px)"></div>
<div style="left:2532.4px;top:770px;width:2px;height:10px;background:#9aa1a6"></div>
<div style="left:2588.8px;top:768px;width:52.9px;height:80px;background:rgba(12,20,25,0.24)"></div>
<div class="cl" style="left:2588.8px;top:738px;width:52.9px;height:30px;background:#4a5259;border:1px solid #3a4248;border-radius:4px 4px 2px 2px"><svg style="left:2px;top:4px" width="17" height="18" viewBox="0 0 17 18"><rect x="0" y="0" width="17" height="18" fill="#dfe4e6"/><rect x="0" y="3" width="10.5" height="4.2" fill="#3f484f"/><rect x="0" y="10.3" width="10.5" height="3.9" fill="#3f484f"/><path d="M1 5 L6 4.2 M1 12.2 L6 11.4" stroke="#b9bcb0" stroke-width="0.8"/></svg><svg style="left:26px;top:0px;overflow:visible" width="22.9" height="30"><text x="0" y="21" font-family="Liberation Sans" font-size="24" fill="#9ea6aa" textLength="22.9" lengthAdjust="spacingAndGlyphs">P..</text></svg></div>
<div style="left:2588.8px;top:837px;width:52.9px;height:11px;background:repeating-linear-gradient(90deg,transparent 0 6.74px,rgba(20,30,35,0.35) 6.74px 8.5px,transparent 8.5px 13.48px),repeating-linear-gradient(90deg,#cdd3d6 0 1.4px,#647076 1.4px 3.37px)"></div>
<div style="left:2586.3px;top:770px;width:2px;height:10px;background:#9aa1a6"></div>
<div style="left:2642.7px;top:768px;width:52.9px;height:80px;background:rgba(12,20,25,0.24)"></div>
<div class="cl" style="left:2642.7px;top:738px;width:52.9px;height:30px;background:#4a5259;border:1px solid #3a4248;border-radius:4px 4px 2px 2px"><svg style="left:2px;top:4px" width="17" height="18" viewBox="0 0 17 18"><rect x="0" y="0" width="17" height="18" fill="#dfe4e6"/><rect x="0" y="3" width="10.5" height="4.2" fill="#3f484f"/><rect x="0" y="10.3" width="10.5" height="3.9" fill="#3f484f"/><path d="M1 5 L6 4.2 M1 12.2 L6 11.4" stroke="#b9bcb0" stroke-width="0.8"/></svg><svg style="left:26px;top:0px;overflow:visible" width="22.9" height="30"><text x="0" y="21" font-family="Liberation Sans" font-size="24" fill="#9ea6aa" textLength="22.9" lengthAdjust="spacingAndGlyphs">P..</text></svg></div>
<div style="left:2642.7px;top:837px;width:52.9px;height:11px;background:repeating-linear-gradient(90deg,transparent 0 6.74px,rgba(20,30,35,0.35) 6.74px 8.5px,transparent 8.5px 13.48px),repeating-linear-gradient(90deg,#cdd3d6 0 1.4px,#647076 1.4px 3.37px)"></div>
<div style="left:2640.2px;top:770px;width:2px;height:10px;background:#9aa1a6"></div>
<div style="left:2696.6px;top:768px;width:52.9px;height:80px;background:rgba(12,20,25,0.24)"></div>
<div class="cl" style="left:2696.6px;top:738px;width:52.9px;height:30px;background:#4a5259;border:1px solid #3a4248;border-radius:4px 4px 2px 2px"><svg style="left:2px;top:4px" width="17" height="18" viewBox="0 0 17 18"><rect x="0" y="0" width="17" height="18" fill="#dfe4e6"/><rect x="0" y="3" width="10.5" height="4.2" fill="#3f484f"/><rect x="0" y="10.3" width="10.5" height="3.9" fill="#3f484f"/><path d="M1 5 L6 4.2 M1 12.2 L6 11.4" stroke="#b9bcb0" stroke-width="0.8"/></svg><svg style="left:26px;top:0px;overflow:visible" width="22.9" height="30"><text x="0" y="21" font-family="Liberation Sans" font-size="24" fill="#9ea6aa" textLength="22.9" lengthAdjust="spacingAndGlyphs">P..</text></svg></div>
<div style="left:2696.6px;top:837px;width:52.9px;height:11px;background:repeating-linear-gradient(90deg,transparent 0 6.74px,rgba(20,30,35,0.35) 6.74px 8.5px,transparent 8.5px 13.48px),repeating-linear-gradient(90deg,#cdd3d6 0 1.4px,#647076 1.4px 3.37px)"></div>
<div style="left:2694.1px;top:770px;width:2px;height:10px;background:#9aa1a6"></div>
<div style="left:2750.5px;top:768px;width:52.9px;height:80px;background:rgba(12,20,25,0.24)"></div>
<div class="cl" style="left:2750.5px;top:738px;width:52.9px;height:30px;background:#4a5259;border:1px solid #3a4248;border-radius:4px 4px 2px 2px"><svg style="left:2px;top:4px" width="17" height="18" viewBox="0 0 17 18"><rect x="0" y="0" width="17" height="18" fill="#dfe4e6"/><rect x="0" y="3" width="10.5" height="4.2" fill="#3f484f"/><rect x="0" y="10.3" width="10.5" height="3.9" fill="#3f484f"/><path d="M1 5 L6 4.2 M1 12.2 L6 11.4" stroke="#b9bcb0" stroke-width="0.8"/></svg><svg style="left:26px;top:0px;overflow:visible" width="22.9" height="30"><text x="0" y="21" font-family="Liberation Sans" font-size="24" fill="#9ea6aa" textLength="22.9" lengthAdjust="spacingAndGlyphs">P..</text></svg></div>
<div style="left:2750.5px;top:837px;width:52.9px;height:11px;background:repeating-linear-gradient(90deg,transparent 0 6.74px,rgba(20,30,35,0.35) 6.74px 8.5px,transparent 8.5px 13.48px),repeating-linear-gradient(90deg,#cdd3d6 0 1.4px,#647076 1.4px 3.37px)"></div>
<div style="left:2748.0px;top:770px;width:2px;height:10px;background:#9aa1a6"></div>
<div style="left:1174.0px;top:738px;width:6.0px;height:30px;background:#4a5259;border-radius:2px"></div>
<div style="left:1174.0px;top:837px;width:12.0px;height:11px;background:repeating-linear-gradient(90deg,#d5dadd 0 1.2px,#7d878d 1.2px 3px)"></div>
<div style="left:972.2px;top:880px;width:52.9px;height:80px;background:rgba(12,20,25,0.24)"></div>
<div class="cl" style="left:972.2px;top:850px;width:52.9px;height:30px;background:#4a5259;border:1px solid #3a4248;border-radius:4px 4px 2px 2px"><svg style="left:2px;top:4px" width="17" height="18" viewBox="0 0 17 18"><rect x="0" y="0" width="17" height="18" fill="#dfe4e6"/><rect x="0" y="3" width="10.5" height="4.2" fill="#3f484f"/><rect x="0" y="10.3" width="10.5" height="3.9" fill="#3f484f"/><path d="M1 5 L6 4.2 M1 12.2 L6 11.4" stroke="#b9bcb0" stroke-width="0.8"/></svg><svg style="left:26px;top:0px;overflow:visible" width="22.9" height="30"><text x="0" y="21" font-family="Liberation Sans" font-size="24" fill="#9ea6aa" textLength="22.9" lengthAdjust="spacingAndGlyphs">P..</text></svg></div>
<div style="left:972.2px;top:950px;width:52.9px;height:10px;background:repeating-linear-gradient(90deg,transparent 0 6.74px,rgba(20,30,35,0.35) 6.74px 8.5px,transparent 8.5px 13.48px),repeating-linear-gradient(90deg,#cdd3d6 0 1.4px,#647076 1.4px 3.37px)"></div>
<div style="left:969.7px;top:882px;width:2px;height:10px;background:#9aa1a6"></div>
<div style="left:1026.1px;top:880px;width:52.9px;height:80px;background:rgba(12,20,25,0.24)"></div>
<div class="cl" style="left:1026.1px;top:850px;width:52.9px;height:30px;background:#4a5259;border:1px solid #3a4248;border-radius:4px 4px 2px 2px"><svg style="left:2px;top:4px" width="17" height="18" viewBox="0 0 17 18"><rect x="0" y="0" width="17" height="18" fill="#dfe4e6"/><rect x="0" y="3" width="10.5" height="4.2" fill="#3f484f"/><rect x="0" y="10.3" width="10.5" height="3.9" fill="#3f484f"/><path d="M1 5 L6 4.2 M1 12.2 L6 11.4" stroke="#b9bcb0" stroke-width="0.8"/></svg><svg style="left:26px;top:0px;overflow:visible" width="22.9" height="30"><text x="0" y="21" font-family="Liberation Sans" font-size="24" fill="#9ea6aa" textLength="22.9" lengthAdjust="spacingAndGlyphs">P..</text></svg></div>
<div style="left:1026.1px;top:950px;width:52.9px;height:10px;background:repeating-linear-gradient(90deg,transparent 0 6.74px,rgba(20,30,35,0.35) 6.74px 8.5px,transparent 8.5px 13.48px),repeating-linear-gradient(90deg,#cdd3d6 0 1.4px,#647076 1.4px 3.37px)"></div>
<div style="left:1023.6px;top:882px;width:2px;height:10px;background:#9aa1a6"></div>
<div style="left:1079.9px;top:880px;width:52.9px;height:80px;background:rgba(12,20,25,0.24)"></div>
<div class="cl" style="left:1079.9px;top:850px;width:52.9px;height:30px;background:#4a5259;border:1px solid #3a4248;border-radius:4px 4px 2px 2px"><svg style="left:2px;top:4px" width="17" height="18" viewBox="0 0 17 18"><rect x="0" y="0" width="17" height="18" fill="#dfe4e6"/><rect x="0" y="3" width="10.5" height="4.2" fill="#3f484f"/><rect x="0" y="10.3" width="10.5" height="3.9" fill="#3f484f"/><path d="M1 5 L6 4.2 M1 12.2 L6 11.4" stroke="#b9bcb0" stroke-width="0.8"/></svg><svg style="left:26px;top:0px;overflow:visible" width="22.9" height="30"><text x="0" y="21" font-family="Liberation Sans" font-size="24" fill="#9ea6aa" textLength="22.9" lengthAdjust="spacingAndGlyphs">P..</text></svg></div>
<div style="left:1079.9px;top:950px;width:52.9px;height:10px;background:repeating-linear-gradient(90deg,transparent 0 6.74px,rgba(20,30,35,0.35) 6.74px 8.5px,transparent 8.5px 13.48px),repeating-linear-gradient(90deg,#cdd3d6 0 1.4px,#647076 1.4px 3.37px)"></div>
<div style="left:1077.4px;top:882px;width:2px;height:10px;background:#9aa1a6"></div>
<div style="left:1133.8px;top:880px;width:25.9px;height:80px;background:rgba(12,20,25,0.24)"></div>
<div class="cl" style="left:1133.8px;top:850px;width:25.9px;height:30px;background:#4a5259;border:1px solid #3a4248;border-radius:4px 4px 2px 2px"><svg style="left:2px;top:4px" width="17" height="18" viewBox="0 0 17 18"><rect x="0" y="0" width="17" height="18" fill="#dfe4e6"/><rect x="0" y="3" width="10.5" height="4.2" fill="#3f484f"/><rect x="0" y="10.3" width="10.5" height="3.9" fill="#3f484f"/><path d="M1 5 L6 4.2 M1 12.2 L6 11.4" stroke="#b9bcb0" stroke-width="0.8"/></svg></div>
<div style="left:1133.8px;top:950px;width:25.9px;height:10px;background:repeating-linear-gradient(90deg,transparent 0 6.74px,rgba(20,30,35,0.35) 6.74px 8.5px,transparent 8.5px 13.48px),repeating-linear-gradient(90deg,#cdd3d6 0 1.4px,#647076 1.4px 3.37px)"></div>
<div style="left:1131.3px;top:882px;width:2px;height:10px;background:#9aa1a6"></div>
<div style="left:1187.7px;top:880px;width:52.9px;height:80px;background:rgba(12,20,25,0.24)"></div>
<div class="cl" style="left:1187.7px;top:850px;width:52.9px;height:30px;background:#4a5259;border:1px solid #3a4248;border-radius:4px 4px 2px 2px"><svg style="left:2px;top:4px" width="17" height="18" viewBox="0 0 17 18"><rect x="0" y="0" width="17" height="18" fill="#dfe4e6"/><rect x="0" y="3" width="10.5" height="4.2" fill="#3f484f"/><rect x="0" y="10.3" width="10.5" height="3.9" fill="#3f484f"/><path d="M1 5 L6 4.2 M1 12.2 L6 11.4" stroke="#b9bcb0" stroke-width="0.8"/></svg><svg style="left:26px;top:0px;overflow:visible" width="22.9" height="30"><text x="0" y="21" font-family="Liberation Sans" font-size="24" fill="#9ea6aa" textLength="22.9" lengthAdjust="spacingAndGlyphs">P..</text></svg></div>
<div style="left:1187.7px;top:950px;width:52.9px;height:10px;background:repeating-linear-gradient(90deg,transparent 0 6.74px,rgba(20,30,35,0.35) 6.74px 8.5px,transparent 8.5px 13.48px),repeating-linear-gradient(90deg,#cdd3d6 0 1.4px,#647076 1.4px 3.37px)"></div>
<div style="left:1185.2px;top:882px;width:2px;height:10px;background:#9aa1a6"></div>
<div style="left:1241.6px;top:880px;width:52.9px;height:80px;background:rgba(12,20,25,0.24)"></div>
<div class="cl" style="left:1241.6px;top:850px;width:52.9px;height:30px;background:#4a5259;border:1px solid #3a4248;border-radius:4px 4px 2px 2px"><svg style="left:2px;top:4px" width="17" height="18" viewBox="0 0 17 18"><rect x="0" y="0" width="17" height="18" fill="#dfe4e6"/><rect x="0" y="3" width="10.5" height="4.2" fill="#3f484f"/><rect x="0" y="10.3" width="10.5" height="3.9" fill="#3f484f"/><path d="M1 5 L6 4.2 M1 12.2 L6 11.4" stroke="#b9bcb0" stroke-width="0.8"/></svg><svg style="left:26px;top:0px;overflow:visible" width="22.9" height="30"><text x="0" y="21" font-family="Liberation Sans" font-size="24" fill="#9ea6aa" textLength="22.9" lengthAdjust="spacingAndGlyphs">P..</text></svg></div>
<div style="left:1241.6px;top:950px;width:52.9px;height:10px;background:repeating-linear-gradient(90deg,transparent 0 6.74px,rgba(20,30,35,0.35) 6.74px 8.5px,transparent 8.5px 13.48px),repeating-linear-gradient(90deg,#cdd3d6 0 1.4px,#647076 1.4px 3.37px)"></div>
<div style="left:1239.1px;top:882px;width:2px;height:10px;background:#9aa1a6"></div>
<div style="left:1295.5px;top:880px;width:52.9px;height:80px;background:rgba(12,20,25,0.24)"></div>
<div class="cl" style="left:1295.5px;top:850px;width:52.9px;height:30px;background:#4a5259;border:1px solid #3a4248;border-radius:4px 4px 2px 2px"><svg style="left:2px;top:4px" width="17" height="18" viewBox="0 0 17 18"><rect x="0" y="0" width="17" height="18" fill="#dfe4e6"/><rect x="0" y="3" width="10.5" height="4.2" fill="#3f484f"/><rect x="0" y="10.3" width="10.5" height="3.9" fill="#3f484f"/><path d="M1 5 L6 4.2 M1 12.2 L6 11.4" stroke="#b9bcb0" stroke-width="0.8"/></svg><svg style="left:26px;top:0px;overflow:visible" width="22.9" height="30"><text x="0" y="21" font-family="Liberation Sans" font-size="24" fill="#9ea6aa" textLength="22.9" lengthAdjust="spacingAndGlyphs">P..</text></svg></div>
<div style="left:1295.5px;top:950px;width:52.9px;height:10px;background:repeating-linear-gradient(90deg,transparent 0 6.74px,rgba(20,30,35,0.35) 6.74px 8.5px,transparent 8.5px 13.48px),repeating-linear-gradient(90deg,#cdd3d6 0 1.4px,#647076 1.4px 3.37px)"></div>
<div style="left:1293.0px;top:882px;width:2px;height:10px;background:#9aa1a6"></div>
<div style="left:1349.4px;top:880px;width:52.9px;height:80px;background:rgba(12,20,25,0.24)"></div>
<div class="cl" style="left:1349.4px;top:850px;width:52.9px;height:30px;background:#4a5259;border:1px solid #3a4248;border-radius:4px 4px 2px 2px"><svg style="left:2px;top:4px" width="17" height="18" viewBox="0 0 17 18"><rect x="0" y="0" width="17" height="18" fill="#dfe4e6"/><rect x="0" y="3" width="10.5" height="4.2" fill="#3f484f"/><rect x="0" y="10.3" width="10.5" height="3.9" fill="#3f484f"/><path d="M1 5 L6 4.2 M1 12.2 L6 11.4" stroke="#b9bcb0" stroke-width="0.8"/></svg><svg style="left:26px;top:0px;overflow:visible" width="22.9" height="30"><text x="0" y="21" font-family="Liberation Sans" font-size="24" fill="#9ea6aa" textLength="22.9" lengthAdjust="spacingAndGlyphs">P..</text></svg></div>
<div style="left:1349.4px;top:950px;width:52.9px;height:10px;background:repeating-linear-gradient(90deg,transparent 0 6.74px,rgba(20,30,35,0.35) 6.74px 8.5px,transparent 8.5px 13.48px),repeating-linear-gradient(90deg,#cdd3d6 0 1.4px,#647076 1.4px 3.37px)"></div>
<div style="left:1346.9px;top:882px;width:2px;height:10px;background:#9aa1a6"></div>
<div style="left:1403.3px;top:880px;width:52.9px;height:80px;background:rgba(12,20,25,0.24)"></div>
<div class="cl" style="left:1403.3px;top:850px;width:52.9px;height:30px;background:#4a5259;border:1px solid #3a4248;border-radius:4px 4px 2px 2px"><svg style="left:2px;top:4px" width="17" height="18" viewBox="0 0 17 18"><rect x="0" y="0" width="17" height="18" fill="#dfe4e6"/><rect x="0" y="3" width="10.5" height="4.2" fill="#3f484f"/><rect x="0" y="10.3" width="10.5" height="3.9" fill="#3f484f"/><path d="M1 5 L6 4.2 M1 12.2 L6 11.4" stroke="#b9bcb0" stroke-width="0.8"/></svg><svg style="left:26px;top:0px;overflow:visible" width="22.9" height="30"><text x="0" y="21" font-family="Liberation Sans" font-size="24" fill="#9ea6aa" textLength="22.9" lengthAdjust="spacingAndGlyphs">P..</text></svg></div>
<div style="left:1403.3px;top:950px;width:52.9px;height:10px;background:repeating-linear-gradient(90deg,transparent 0 6.74px,rgba(20,30,35,0.35) 6.74px 8.5px,transparent 8.5px 13.48px),repeating-linear-gradient(90deg,#cdd3d6 0 1.4px,#647076 1.4px 3.37px)"></div>
<div style="left:1400.8px;top:882px;width:2px;height:10px;background:#9aa1a6"></div>
<div style="left:1457.2px;top:880px;width:52.9px;height:80px;background:rgba(12,20,25,0.24)"></div>
<div class="cl" style="left:1457.2px;top:850px;width:52.9px;height:30px;background:#4a5259;border:1px solid #3a4248;border-radius:4px 4px 2px 2px"><svg style="left:2px;top:4px" width="17" height="18" viewBox="0 0 17 18"><rect x="0" y="0" width="17" height="18" fill="#dfe4e6"/><rect x="0" y="3" width="10.5" height="4.2" fill="#3f484f"/><rect x="0" y="10.3" width="10.5" height="3.9" fill="#3f484f"/><path d="M1 5 L6 4.2 M1 12.2 L6 11.4" stroke="#b9bcb0" stroke-width="0.8"/></svg><svg style="left:26px;top:0px;overflow:visible" width="22.9" height="30"><text x="0" y="21" font-family="Liberation Sans" font-size="24" fill="#9ea6aa" textLength="22.9" lengthAdjust="spacingAndGlyphs">P..</text></svg></div>
<div style="left:1457.2px;top:950px;width:52.9px;height:10px;background:repeating-linear-gradient(90deg,transparent 0 6.74px,rgba(20,30,35,0.35) 6.74px 8.5px,transparent 8.5px 13.48px),repeating-linear-gradient(90deg,#cdd3d6 0 1.4px,#647076 1.4px 3.37px)"></div>
<div style="left:1454.7px;top:882px;width:2px;height:10px;background:#9aa1a6"></div>
<div style="left:1511.0px;top:880px;width:52.9px;height:80px;background:rgba(12,20,25,0.24)"></div>
<div class="cl" style="left:1511.0px;top:850px;width:52.9px;height:30px;background:#4a5259;border:1px solid #3a4248;border-radius:4px 4px 2px 2px"><svg style="left:2px;top:4px" width="17" height="18" viewBox="0 0 17 18"><rect x="0" y="0" width="17" height="18" fill="#dfe4e6"/><rect x="0" y="3" width="10.5" height="4.2" fill="#3f484f"/><rect x="0" y="10.3" width="10.5" height="3.9" fill="#3f484f"/><path d="M1 5 L6 4.2 M1 12.2 L6 11.4" stroke="#b9bcb0" stroke-width="0.8"/></svg><svg style="left:26px;top:0px;overflow:visible" width="22.9" height="30"><text x="0" y="21" font-family="Liberation Sans" font-size="24" fill="#9ea6aa" textLength="22.9" lengthAdjust="spacingAndGlyphs">P..</text></svg></div>
<div style="left:1511.0px;top:950px;width:52.9px;height:10px;background:repeating-linear-gradient(90deg,transparent 0 6.74px,rgba(20,30,35,0.35) 6.74px 8.5px,transparent 8.5px 13.48px),repeating-linear-gradient(90deg,#cdd3d6 0 1.4px,#647076 1.4px 3.37px)"></div>
<div style="left:1508.5px;top:882px;width:2px;height:10px;background:#9aa1a6"></div>
<div style="left:1564.9px;top:880px;width:52.9px;height:80px;background:rgba(12,20,25,0.24)"></div>
<div class="cl" style="left:1564.9px;top:850px;width:52.9px;height:30px;background:#4a5259;border:1px solid #3a4248;border-radius:4px 4px 2px 2px"><svg style="left:2px;top:4px" width="17" height="18" viewBox="0 0 17 18"><rect x="0" y="0" width="17" height="18" fill="#dfe4e6"/><rect x="0" y="3" width="10.5" height="4.2" fill="#3f484f"/><rect x="0" y="10.3" width="10.5" height="3.9" fill="#3f484f"/><path d="M1 5 L6 4.2 M1 12.2 L6 11.4" stroke="#b9bcb0" stroke-width="0.8"/></svg><svg style="left:26px;top:0px;overflow:visible" width="22.9" height="30"><text x="0" y="21" font-family="Liberation Sans" font-size="24" fill="#9ea6aa" textLength="22.9" lengthAdjust="spacingAndGlyphs">P..</text></svg></div>
<div style="left:1564.9px;top:950px;width:52.9px;height:10px;background:repeating-linear-gradient(90deg,transparent 0 6.74px,rgba(20,30,35,0.35) 6.74px 8.5px,transparent 8.5px 13.48px),repeating-linear-gradient(90deg,#cdd3d6 0 1.4px,#647076 1.4px 3.37px)"></div>
<div style="left:1562.4px;top:882px;width:2px;height:10px;background:#9aa1a6"></div>
<div style="left:1618.8px;top:880px;width:52.9px;height:80px;background:rgba(12,20,25,0.24)"></div>
<div class="cl" style="left:1618.8px;top:850px;width:52.9px;height:30px;background:#4a5259;border:1px solid #3a4248;border-radius:4px 4px 2px 2px"><svg style="left:2px;top:4px" width="17" height="18" viewBox="0 0 17 18"><rect x="0" y="0" width="17" height="18" fill="#dfe4e6"/><rect x="0" y="3" width="10.5" height="4.2" fill="#3f484f"/><rect x="0" y="10.3" width="10.5" height="3.9" fill="#3f484f"/><path d="M1 5 L6 4.2 M1 12.2 L6 11.4" stroke="#b9bcb0" stroke-width="0.8"/></svg><svg style="left:26px;top:0px;overflow:visible" width="22.9" height="30"><text x="0" y="21" font-family="Liberation Sans" font-size="24" fill="#9ea6aa" textLength="22.9" lengthAdjust="spacingAndGlyphs">P..</text></svg></div>
<div style="left:1618.8px;top:950px;width:52.9px;height:10px;background:repeating-linear-gradient(90deg,transparent 0 6.74px,rgba(20,30,35,0.35) 6.74px 8.5px,transparent 8.5px 13.48px),repeating-linear-gradient(90deg,#cdd3d6 0 1.4px,#647076 1.4px 3.37px)"></div>
<div style="left:1616.3px;top:882px;width:2px;height:10px;background:#9aa1a6"></div>
<div style="left:1672.7px;top:880px;width:52.9px;height:80px;background:rgba(12,20,25,0.24)"></div>
<div class="cl" style="left:1672.7px;top:850px;width:52.9px;height:30px;background:#4a5259;border:1px solid #3a4248;border-radius:4px 4px 2px 2px"><svg style="left:2px;top:4px" width="17" height="18" viewBox="0 0 17 18"><rect x="0" y="0" width="17" height="18" fill="#dfe4e6"/><rect x="0" y="3" width="10.5" height="4.2" fill="#3f484f"/><rect x="0" y="10.3" width="10.5" height="3.9" fill="#3f484f"/><path d="M1 5 L6 4.2 M1 12.2 L6 11.4" stroke="#b9bcb0" stroke-width="0.8"/></svg><svg style="left:26px;top:0px;overflow:visible" width="22.9" height="30"><text x="0" y="21" font-family="Liberation Sans" font-size="24" fill="#9ea6aa" textLength="22.9" lengthAdjust="spacingAndGlyphs">P..</text></svg></div>
<div style="left:1672.7px;top:950px;width:52.9px;height:10px;background:repeating-linear-gradient(90deg,transparent 0 6.74px,rgba(20,30,35,0.35) 6.74px 8.5px,transparent 8.5px 13.48px),repeating-linear-gradient(90deg,#cdd3d6 0 1.4px,#647076 1.4px 3.37px)"></div>
<div style="left:1670.2px;top:882px;width:2px;height:10px;background:#9aa1a6"></div>
<div style="left:2049.9px;top:880px;width:52.9px;height:80px;background:rgba(12,20,25,0.24)"></div>
<div class="cl" style="left:2049.9px;top:850px;width:52.9px;height:30px;background:#4a5259;border:1px solid #3a4248;border-radius:4px 4px 2px 2px"><svg style="left:2px;top:4px" width="17" height="18" viewBox="0 0 17 18"><rect x="0" y="0" width="17" height="18" fill="#dfe4e6"/><rect x="0" y="3" width="10.5" height="4.2" fill="#3f484f"/><rect x="0" y="10.3" width="10.5" height="3.9" fill="#3f484f"/><path d="M1 5 L6 4.2 M1 12.2 L6 11.4" stroke="#b9bcb0" stroke-width="0.8"/></svg><svg style="left:26px;top:0px;overflow:visible" width="22.9" height="30"><text x="0" y="21" font-family="Liberation Sans" font-size="24" fill="#9ea6aa" textLength="22.9" lengthAdjust="spacingAndGlyphs">P..</text></svg></div>
<div style="left:2049.9px;top:950px;width:52.9px;height:10px;background:repeating-linear-gradient(90deg,transparent 0 6.74px,rgba(20,30,35,0.35) 6.74px 8.5px,transparent 8.5px 13.48px),repeating-linear-gradient(90deg,#cdd3d6 0 1.4px,#647076 1.4px 3.37px)"></div>
<div style="left:2047.4px;top:882px;width:2px;height:10px;background:#9aa1a6"></div>
<div style="left:2103.8px;top:880px;width:52.9px;height:80px;background:rgba(12,20,25,0.24)"></div>
<div class="cl" style="left:2103.8px;top:850px;width:52.9px;height:30px;background:#4a5259;border:1px solid #3a4248;border-radius:4px 4px 2px 2px"><svg style="left:2px;top:4px" width="17" height="18" viewBox="0 0 17 18"><rect x="0" y="0" width="17" height="18" fill="#dfe4e6"/><rect x="0" y="3" width="10.5" height="4.2" fill="#3f484f"/><rect x="0" y="10.3" width="10.5" height="3.9" fill="#3f484f"/><path d="M1 5 L6 4.2 M1 12.2 L6 11.4" stroke="#b9bcb0" stroke-width="0.8"/></svg><svg style="left:26px;top:0px;overflow:visible" width="22.9" height="30"><text x="0" y="21" font-family="Liberation Sans" font-size="24" fill="#9ea6aa" textLength="22.9" lengthAdjust="spacingAndGlyphs">P..</text></svg></div>
<div style="left:2103.8px;top:950px;width:52.9px;height:10px;background:repeating-linear-gradient(90deg,transparent 0 6.74px,rgba(20,30,35,0.35) 6.74px 8.5px,transparent 8.5px 13.48px),repeating-linear-gradient(90deg,#cdd3d6 0 1.4px,#647076 1.4px 3.37px)"></div>
<div style="left:2101.3px;top:882px;width:2px;height:10px;background:#9aa1a6"></div>
<div style="left:2157.7px;top:880px;width:52.9px;height:80px;background:rgba(12,20,25,0.24)"></div>
<div class="cl" style="left:2157.7px;top:850px;width:52.9px;height:30px;background:#4a5259;border:1px solid #3a4248;border-radius:4px 4px 2px 2px"><svg style="left:2px;top:4px" width="17" height="18" viewBox="0 0 17 18"><rect x="0" y="0" width="17" height="18" fill="#dfe4e6"/><rect x="0" y="3" width="10.5" height="4.2" fill="#3f484f"/><rect x="0" y="10.3" width="10.5" height="3.9" fill="#3f484f"/><path d="M1 5 L6 4.2 M1 12.2 L6 11.4" stroke="#b9bcb0" stroke-width="0.8"/></svg><svg style="left:26px;top:0px;overflow:visible" width="22.9" height="30"><text x="0" y="21" font-family="Liberation Sans" font-size="24" fill="#9ea6aa" textLength="22.9" lengthAdjust="spacingAndGlyphs">P..</text></svg></div>
<div style="left:2157.7px;top:950px;width:52.9px;height:10px;background:repeating-linear-gradient(90deg,transparent 0 6.74px,rgba(20,30,35,0.35) 6.74px 8.5px,transparent 8.5px 13.48px),repeating-linear-gradient(90deg,#cdd3d6 0 1.4px,#647076 1.4px 3.37px)"></div>
<div style="left:2155.2px;top:882px;width:2px;height:10px;background:#9aa1a6"></div>
<div style="left:2211.6px;top:880px;width:52.9px;height:80px;background:rgba(12,20,25,0.24)"></div>
<div class="cl" style="left:2211.6px;top:850px;width:52.9px;height:30px;background:#4a5259;border:1px solid #3a4248;border-radius:4px 4px 2px 2px"><svg style="left:2px;top:4px" width="17" height="18" viewBox="0 0 17 18"><rect x="0" y="0" width="17" height="18" fill="#dfe4e6"/><rect x="0" y="3" width="10.5" height="4.2" fill="#3f484f"/><rect x="0" y="10.3" width="10.5" height="3.9" fill="#3f484f"/><path d="M1 5 L6 4.2 M1 12.2 L6 11.4" stroke="#b9bcb0" stroke-width="0.8"/></svg><svg style="left:26px;top:0px;overflow:visible" width="22.9" height="30"><text x="0" y="21" font-family="Liberation Sans" font-size="24" fill="#9ea6aa" textLength="22.9" lengthAdjust="spacingAndGlyphs">P..</text></svg></div>
<div style="left:2211.6px;top:950px;width:52.9px;height:10px;background:repeating-linear-gradient(90deg,transparent 0 6.74px,rgba(20,30,35,0.35) 6.74px 8.5px,transparent 8.5px 13.48px),repeating-linear-gradient(90deg,#cdd3d6 0 1.4px,#647076 1.4px 3.37px)"></div>
<div style="left:2209.1px;top:882px;width:2px;height:10px;background:#9aa1a6"></div>
<div style="left:2265.5px;top:880px;width:52.9px;height:80px;background:rgba(12,20,25,0.24)"></div>
<div class="cl" style="left:2265.5px;top:850px;width:52.9px;height:30px;background:#4a5259;border:1px solid #3a4248;border-radius:4px 4px 2px 2px"><svg style="left:2px;top:4px" width="17" height="18" viewBox="0 0 17 18"><rect x="0" y="0" width="17" height="18" fill="#dfe4e6"/><rect x="0" y="3" width="10.5" height="4.2" fill="#3f484f"/><rect x="0" y="10.3" width="10.5" height="3.9" fill="#3f484f"/><path d="M1 5 L6 4.2 M1 12.2 L6 11.4" stroke="#b9bcb0" stroke-width="0.8"/></svg><svg style="left:26px;top:0px;overflow:visible" width="22.9" height="30"><text x="0" y="21" font-family="Liberation Sans" font-size="24" fill="#9ea6aa" textLength="22.9" lengthAdjust="spacingAndGlyphs">P..</text></svg></div>
<div style="left:2265.5px;top:950px;width:52.9px;height:10px;background:repeating-linear-gradient(90deg,transparent 0 6.74px,rgba(20,30,35,0.35) 6.74px 8.5px,transparent 8.5px 13.48px),repeating-linear-gradient(90deg,#cdd3d6 0 1.4px,#647076 1.4px 3.37px)"></div>
<div style="left:2263.0px;top:882px;width:2px;height:10px;background:#9aa1a6"></div>
<div style="left:2319.4px;top:880px;width:52.9px;height:80px;background:rgba(12,20,25,0.24)"></div>
<div class="cl" style="left:2319.4px;top:850px;width:52.9px;height:30px;background:#4a5259;border:1px solid #3a4248;border-radius:4px 4px 2px 2px"><svg style="left:2px;top:4px" width="17" height="18" viewBox="0 0 17 18"><rect x="0" y="0" width="17" height="18" fill="#dfe4e6"/><rect x="0" y="3" width="10.5" height="4.2" fill="#3f484f"/><rect x="0" y="10.3" width="10.5" height="3.9" fill="#3f484f"/><path d="M1 5 L6 4.2 M1 12.2 L6 11.4" stroke="#b9bcb0" stroke-width="0.8"/></svg><svg style="left:26px;top:0px;overflow:visible" width="22.9" height="30"><text x="0" y="21" font-family="Liberation Sans" font-size="24" fill="#9ea6aa" textLength="22.9" lengthAdjust="spacingAndGlyphs">P..</text></svg></div>
<div style="left:2319.4px;top:950px;width:52.9px;height:10px;background:repeating-linear-gradient(90deg,transparent 0 6.74px,rgba(20,30,35,0.35) 6.74px 8.5px,transparent 8.5px 13.48px),repeating-linear-gradient(90deg,#cdd3d6 0 1.4px,#647076 1.4px 3.37px)"></div>
<div style="left:2316.9px;top:882px;width:2px;height:10px;background:#9aa1a6"></div>
<div style="left:2373.3px;top:880px;width:52.9px;height:80px;background:rgba(12,20,25,0.24)"></div>
<div class="cl" style="left:2373.3px;top:850px;width:52.9px;height:30px;background:#4a5259;border:1px solid #3a4248;border-radius:4px 4px 2px 2px"><svg style="left:2px;top:4px" width="17" height="18" viewBox="0 0 17 18"><rect x="0" y="0" width="17" height="18" fill="#dfe4e6"/><rect x="0" y="3" width="10.5" height="4.2" fill="#3f484f"/><rect x="0" y="10.3" width="10.5" height="3.9" fill="#3f484f"/><path d="M1 5 L6 4.2 M1 12.2 L6 11.4" stroke="#b9bcb0" stroke-width="0.8"/></svg><svg style="left:26px;top:0px;overflow:visible" width="22.9" height="30"><text x="0" y="21" font-family="Liberation Sans" font-size="24" fill="#9ea6aa" textLength="22.9" lengthAdjust="spacingAndGlyphs">P..</text></svg></div>
<div style="left:2373.3px;top:950px;width:52.9px;height:10px;background:repeating-linear-gradient(90deg,transparent 0 6.74px,rgba(20,30,35,0.35) 6.74px 8.5px,transparent 8.5px 13.48px),repeating-linear-gradient(90deg,#cdd3d6 0 1.4px,#647076 1.4px 3.37px)"></div>
<div style="left:2370.8px;top:882px;width:2px;height:10px;background:#9aa1a6"></div>
<div style="left:2427.1px;top:880px;width:52.9px;height:80px;background:rgba(12,20,25,0.24)"></div>
<div class="cl" style="left:2427.1px;top:850px;width:52.9px;height:30px;background:#4a5259;border:1px solid #3a4248;border-radius:4px 4px 2px 2px"><svg style="left:2px;top:4px" width="17" height="18" viewBox="0 0 17 18"><rect x="0" y="0" width="17" height="18" fill="#dfe4e6"/><rect x="0" y="3" width="10.5" height="4.2" fill="#3f484f"/><rect x="0" y="10.3" width="10.5" height="3.9" fill="#3f484f"/><path d="M1 5 L6 4.2 M1 12.2 L6 11.4" stroke="#b9bcb0" stroke-width="0.8"/></svg><svg style="left:26px;top:0px;overflow:visible" width="22.9" height="30"><text x="0" y="21" font-family="Liberation Sans" font-size="24" fill="#9ea6aa" textLength="22.9" lengthAdjust="spacingAndGlyphs">P..</text></svg></div>
<div style="left:2427.1px;top:950px;width:52.9px;height:10px;background:repeating-linear-gradient(90deg,transparent 0 6.74px,rgba(20,30,35,0.35) 6.74px 8.5px,transparent 8.5px 13.48px),repeating-linear-gradient(90deg,#cdd3d6 0 1.4px,#647076 1.4px 3.37px)"></div>
<div style="left:2424.6px;top:882px;width:2px;height:10px;background:#9aa1a6"></div>
<div style="left:2481.0px;top:880px;width:52.9px;height:80px;background:rgba(12,20,25,0.24)"></div>
<div class="cl" style="left:2481.0px;top:850px;width:52.9px;height:30px;background:#4a5259;border:1px solid #3a4248;border-radius:4px 4px 2px 2px"><svg style="left:2px;top:4px" width="17" height="18" viewBox="0 0 17 18"><rect x="0" y="0" width="17" height="18" fill="#dfe4e6"/><rect x="0" y="3" width="10.5" height="4.2" fill="#3f484f"/><rect x="0" y="10.3" width="10.5" height="3.9" fill="#3f484f"/><path d="M1 5 L6 4.2 M1 12.2 L6 11.4" stroke="#b9bcb0" stroke-width="0.8"/></svg><svg style="left:26px;top:0px;overflow:visible" width="22.9" height="30"><text x="0" y="21" font-family="Liberation Sans" font-size="24" fill="#9ea6aa" textLength="22.9" lengthAdjust="spacingAndGlyphs">P..</text></svg></div>
<div style="left:2481.0px;top:950px;width:52.9px;height:10px;background:repeating-linear-gradient(90deg,transparent 0 6.74px,rgba(20,30,35,0.35) 6.74px 8.5px,transparent 8.5px 13.48px),repeating-linear-gradient(90deg,#cdd3d6 0 1.4px,#647076 1.4px 3.37px)"></div>
<div style="left:2478.5px;top:882px;width:2px;height:10px;background:#9aa1a6"></div>
<div style="left:2534.9px;top:880px;width:52.9px;height:80px;background:rgba(12,20,25,0.24)"></div>
<div class="cl" style="left:2534.9px;top:850px;width:52.9px;height:30px;background:#4a5259;border:1px solid #3a4248;border-radius:4px 4px 2px 2px"><svg style="left:2px;top:4px" width="17" height="18" viewBox="0 0 17 18"><rect x="0" y="0" width="17" height="18" fill="#dfe4e6"/><rect x="0" y="3" width="10.5" height="4.2" fill="#3f484f"/><rect x="0" y="10.3" width="10.5" height="3.9" fill="#3f484f"/><path d="M1 5 L6 4.2 M1 12.2 L6 11.4" stroke="#b9bcb0" stroke-width="0.8"/></svg><svg style="left:26px;top:0px;overflow:visible" width="22.9" height="30"><text x="0" y="21" font-family="Liberation Sans" font-size="24" fill="#9ea6aa" textLength="22.9" lengthAdjust="spacingAndGlyphs">P..</text></svg></div>
<div style="left:2534.9px;top:950px;width:52.9px;height:10px;background:repeating-linear-gradient(90deg,transparent 0 6.74px,rgba(20,30,35,0.35) 6.74px 8.5px,transparent 8.5px 13.48px),repeating-linear-gradient(90deg,#cdd3d6 0 1.4px,#647076 1.4px 3.37px)"></div>
<div style="left:2532.4px;top:882px;width:2px;height:10px;background:#9aa1a6"></div>
<div style="left:2588.8px;top:880px;width:52.9px;height:80px;background:rgba(12,20,25,0.24)"></div>
<div class="cl" style="left:2588.8px;top:850px;width:52.9px;height:30px;background:#4a5259;border:1px solid #3a4248;border-radius:4px 4px 2px 2px"><svg style="left:2px;top:4px" width="17" height="18" viewBox="0 0 17 18"><rect x="0" y="0" width="17" height="18" fill="#dfe4e6"/><rect x="0" y="3" width="10.5" height="4.2" fill="#3f484f"/><rect x="0" y="10.3" width="10.5" height="3.9" fill="#3f484f"/><path d="M1 5 L6 4.2 M1 12.2 L6 11.4" stroke="#b9bcb0" stroke-width="0.8"/></svg><svg style="left:26px;top:0px;overflow:visible" width="22.9" height="30"><text x="0" y="21" font-family="Liberation Sans" font-size="24" fill="#9ea6aa" textLength="22.9" lengthAdjust="spacingAndGlyphs">P..</text></svg></div>
<div style="left:2588.8px;top:950px;width:52.9px;height:10px;background:repeating-linear-gradient(90deg,transparent 0 6.74px,rgba(20,30,35,0.35) 6.74px 8.5px,transparent 8.5px 13.48px),repeating-linear-gradient(90deg,#cdd3d6 0 1.4px,#647076 1.4px 3.37px)"></div>
<div style="left:2586.3px;top:882px;width:2px;height:10px;background:#9aa1a6"></div>
<div style="left:2642.7px;top:880px;width:52.9px;height:80px;background:rgba(12,20,25,0.24)"></div>
<div class="cl" style="left:2642.7px;top:850px;width:52.9px;height:30px;background:#4a5259;border:1px solid #3a4248;border-radius:4px 4px 2px 2px"><svg style="left:2px;top:4px" width="17" height="18" viewBox="0 0 17 18"><rect x="0" y="0" width="17" height="18" fill="#dfe4e6"/><rect x="0" y="3" width="10.5" height="4.2" fill="#3f484f"/><rect x="0" y="10.3" width="10.5" height="3.9" fill="#3f484f"/><path d="M1 5 L6 4.2 M1 12.2 L6 11.4" stroke="#b9bcb0" stroke-width="0.8"/></svg><svg style="left:26px;top:0px;overflow:visible" width="22.9" height="30"><text x="0" y="21" font-family="Liberation Sans" font-size="24" fill="#9ea6aa" textLength="22.9" lengthAdjust="spacingAndGlyphs">P..</text></svg></div>
<div style="left:2642.7px;top:950px;width:52.9px;height:10px;background:repeating-linear-gradient(90deg,transparent 0 6.74px,rgba(20,30,35,0.35) 6.74px 8.5px,transparent 8.5px 13.48px),repeating-linear-gradient(90deg,#cdd3d6 0 1.4px,#647076 1.4px 3.37px)"></div>
<div style="left:2640.2px;top:882px;width:2px;height:10px;background:#9aa1a6"></div>
<div style="left:1133.8px;top:992px;width:25.9px;height:80px;background:rgba(12,20,25,0.24)"></div>
<div class="cl" style="left:1133.8px;top:962px;width:25.9px;height:30px;background:#4a5259;border:1px solid #3a4248;border-radius:4px 4px 2px 2px"><svg style="left:2px;top:4px" width="17" height="18" viewBox="0 0 17 18"><rect x="0" y="0" width="17" height="18" fill="#dfe4e6"/><rect x="0" y="3" width="10.5" height="4.2" fill="#3f484f"/><rect x="0" y="10.3" width="10.5" height="3.9" fill="#3f484f"/><path d="M1 5 L6 4.2 M1 12.2 L6 11.4" stroke="#b9bcb0" stroke-width="0.8"/></svg></div>
<div style="left:1133.8px;top:1062px;width:25.9px;height:10px;background:repeating-linear-gradient(90deg,transparent 0 6.74px,rgba(20,30,35,0.35) 6.74px 8.5px,transparent 8.5px 13.48px),repeating-linear-gradient(90deg,#cdd3d6 0 1.4px,#647076 1.4px 3.37px)"></div>
<div style="left:1187.7px;top:992px;width:12.5px;height:80px;background:rgba(12,20,25,0.24)"></div>
<div class="cl" style="left:1187.7px;top:962px;width:12.5px;height:30px;background:#4a5259;border:1px solid #3a4248;border-radius:4px 4px 2px 2px"><div style="left:2px;top:5px;width:6px;height:16px;background:repeating-linear-gradient(#8e969b 0 1px,transparent 1px 3.2px)"></div></div>
<div style="left:1187.7px;top:1062px;width:12.5px;height:10px;background:#b8bfc3;border-radius:1px"></div>
<div style="left:1241.6px;top:992px;width:12.5px;height:80px;background:rgba(12,20,25,0.24)"></div>
<div class="cl" style="left:1241.6px;top:962px;width:12.5px;height:30px;background:#4a5259;border:1px solid #3a4248;border-radius:4px 4px 2px 2px"><div style="left:2px;top:5px;width:6px;height:16px;background:repeating-linear-gradient(#8e969b 0 1px,transparent 1px 3.2px)"></div></div>
<div style="left:1241.6px;top:1062px;width:12.5px;height:10px;background:#b8bfc3;border-radius:1px"></div>
<div style="left:1295.5px;top:992px;width:12.5px;height:80px;background:rgba(12,20,25,0.24)"></div>
<div class="cl" style="left:1295.5px;top:962px;width:12.5px;height:30px;background:#4a5259;border:1px solid #3a4248;border-radius:4px 4px 2px 2px"><div style="left:2px;top:5px;width:6px;height:16px;background:repeating-linear-gradient(#8e969b 0 1px,transparent 1px 3.2px)"></div></div>
<div style="left:1295.5px;top:1062px;width:12.5px;height:10px;background:#b8bfc3;border-radius:1px"></div>
<div style="left:1349.4px;top:992px;width:12.5px;height:80px;background:rgba(12,20,25,0.24)"></div>
<div class="cl" style="left:1349.4px;top:962px;width:12.5px;height:30px;background:#4a5259;border:1px solid #3a4248;border-radius:4px 4px 2px 2px"><div style="left:2px;top:5px;width:6px;height:16px;background:repeating-linear-gradient(#8e969b 0 1px,transparent 1px 3.2px)"></div></div>
<div style="left:1349.4px;top:1062px;width:12.5px;height:10px;background:#b8bfc3;border-radius:1px"></div>
<div style="left:1726.6px;top:992px;width:12.5px;height:80px;background:rgba(12,20,25,0.24)"></div>
<div class="cl" style="left:1726.6px;top:962px;width:12.5px;height:30px;background:#4a5259;border:1px solid #3a4248;border-radius:4px 4px 2px 2px"><div style="left:2px;top:5px;width:6px;height:16px;background:repeating-linear-gradient(#8e969b 0 1px,transparent 1px 3.2px)"></div></div>
<div style="left:1726.6px;top:1062px;width:12.5px;height:10px;background:#b8bfc3;border-radius:1px"></div>
<div style="left:1834.4px;top:992px;width:12.5px;height:80px;background:rgba(12,20,25,0.24)"></div>
<div class="cl" style="left:1834.4px;top:962px;width:12.5px;height:30px;background:#4a5259;border:1px solid #3a4248;border-radius:4px 4px 2px 2px"><div style="left:2px;top:5px;width:6px;height:16px;background:repeating-linear-gradient(#8e969b 0 1px,transparent 1px 3.2px)"></div></div>
<div style="left:1834.4px;top:1062px;width:12.5px;height:10px;background:#b8bfc3;border-radius:1px"></div>
<div style="left:1942.1px;top:992px;width:12.5px;height:80px;background:rgba(12,20,25,0.24)"></div>
<div class="cl" style="left:1942.1px;top:962px;width:12.5px;height:30px;background:#4a5259;border:1px solid #3a4248;border-radius:4px 4px 2px 2px"><div style="left:2px;top:5px;width:6px;height:16px;background:repeating-linear-gradient(#8e969b 0 1px,transparent 1px 3.2px)"></div></div>
<div style="left:1942.1px;top:1062px;width:12.5px;height:10px;background:#b8bfc3;border-radius:1px"></div>
<div style="left:2049.9px;top:992px;width:12.5px;height:80px;background:rgba(12,20,25,0.24)"></div>
<div class="cl" style="left:2049.9px;top:962px;width:12.5px;height:30px;background:#4a5259;border:1px solid #3a4248;border-radius:4px 4px 2px 2px"><div style="left:2px;top:5px;width:6px;height:16px;background:repeating-linear-gradient(#8e969b 0 1px,transparent 1px 3.2px)"></div></div>
<div style="left:2049.9px;top:1062px;width:12.5px;height:10px;background:#b8bfc3;border-radius:1px"></div>
<div style="left:2103.8px;top:992px;width:12.5px;height:80px;background:rgba(12,20,25,0.24)"></div>
<div class="cl" style="left:2103.8px;top:962px;width:12.5px;height:30px;background:#4a5259;border:1px solid #3a4248;border-radius:4px 4px 2px 2px"><div style="left:2px;top:5px;width:6px;height:16px;background:repeating-linear-gradient(#8e969b 0 1px,transparent 1px 3.2px)"></div></div>
<div style="left:2103.8px;top:1062px;width:12.5px;height:10px;background:#b8bfc3;border-radius:1px"></div>
<div style="left:2157.7px;top:992px;width:12.5px;height:80px;background:rgba(12,20,25,0.24)"></div>
<div class="cl" style="left:2157.7px;top:962px;width:12.5px;height:30px;background:#4a5259;border:1px solid #3a4248;border-radius:4px 4px 2px 2px"><div style="left:2px;top:5px;width:6px;height:16px;background:repeating-linear-gradient(#8e969b 0 1px,transparent 1px 3.2px)"></div></div>
<div style="left:2157.7px;top:1062px;width:12.5px;height:10px;background:#b8bfc3;border-radius:1px"></div>
<div style="left:2211.6px;top:992px;width:12.5px;height:80px;background:rgba(12,20,25,0.24)"></div>
<div class="cl" style="left:2211.6px;top:962px;width:12.5px;height:30px;background:#4a5259;border:1px solid #3a4248;border-radius:4px 4px 2px 2px"><div style="left:2px;top:5px;width:6px;height:16px;background:repeating-linear-gradient(#8e969b 0 1px,transparent 1px 3.2px)"></div></div>
<div style="left:2211.6px;top:1062px;width:12.5px;height:10px;background:#b8bfc3;border-radius:1px"></div>
<div style="left:1403.3px;top:992px;width:52.9px;height:80px;background:rgba(12,20,25,0.24)"></div>
<div class="cl" style="left:1403.3px;top:962px;width:52.9px;height:30px;background:#4a5259;border:1px solid #3a4248;border-radius:4px 4px 2px 2px"><svg style="left:2px;top:4px" width="17" height="18" viewBox="0 0 17 18"><rect x="0" y="0" width="17" height="18" fill="#dfe4e6"/><rect x="0" y="3" width="10.5" height="4.2" fill="#3f484f"/><rect x="0" y="10.3" width="10.5" height="3.9" fill="#3f484f"/><path d="M1 5 L6 4.2 M1 12.2 L6 11.4" stroke="#b9bcb0" stroke-width="0.8"/></svg><svg style="left:26px;top:0px;overflow:visible" width="22.9" height="30"><text x="0" y="21" font-family="Liberation Sans" font-size="24" fill="#9ea6aa" textLength="22.9" lengthAdjust="spacingAndGlyphs">P..</text></svg></div>
<div style="left:1400.8px;top:994px;width:2px;height:10px;background:#9aa1a6"></div>
<div style="left:1403.3px;top:1062px;width:13px;height:10px;background:#b8bfc3"></div>
<div style="left:1421.3px;top:1064px;width:1.5px;height:8px;background:#a8afb3"></div>
<div style="left:1431.3px;top:1064px;width:1.5px;height:8px;background:#a8afb3"></div>
<div style="left:1441.3px;top:1064px;width:1.5px;height:8px;background:#a8afb3"></div>
<div style="left:1447.3px;top:1064px;width:1.5px;height:8px;background:#a8afb3"></div>
<div style="left:1450.3px;top:1064px;width:1.5px;height:8px;background:#a8afb3"></div>
<div style="left:1457.2px;top:992px;width:52.9px;height:80px;background:rgba(12,20,25,0.24)"></div>
<div class="cl" style="left:1457.2px;top:962px;width:52.9px;height:30px;background:#4a5259;border:1px solid #3a4248;border-radius:4px 4px 2px 2px"><svg style="left:2px;top:4px" width="17" height="18" viewBox="0 0 17 18"><rect x="0" y="0" width="17" height="18" fill="#dfe4e6"/><rect x="0" y="3" width="10.5" height="4.2" fill="#3f484f"/><rect x="0" y="10.3" width="10.5" height="3.9" fill="#3f484f"/><path d="M1 5 L6 4.2 M1 12.2 L6 11.4" stroke="#b9bcb0" stroke-width="0.8"/></svg><svg style="left:26px;top:0px;overflow:visible" width="22.9" height="30"><text x="0" y="21" font-family="Liberation Sans" font-size="24" fill="#9ea6aa" textLength="22.9" lengthAdjust="spacingAndGlyphs">P..</text></svg></div>
<div style="left:1454.7px;top:994px;width:2px;height:10px;background:#9aa1a6"></div>
<div style="left:1457.2px;top:1062px;width:13px;height:10px;background:#b8bfc3"></div>
<div style="left:1475.2px;top:1064px;width:1.5px;height:8px;background:#a8afb3"></div>
<div style="left:1485.2px;top:1064px;width:1.5px;height:8px;background:#a8afb3"></div>
<div style="left:1495.2px;top:1064px;width:1.5px;height:8px;background:#a8afb3"></div>
<div style="left:1501.2px;top:1064px;width:1.5px;height:8px;background:#a8afb3"></div>
<div style="left:1504.2px;top:1064px;width:1.5px;height:8px;background:#a8afb3"></div>
<div style="left:1511.0px;top:992px;width:52.9px;height:80px;background:rgba(12,20,25,0.24)"></div>
<div class="cl" style="left:1511.0px;top:962px;width:52.9px;height:30px;background:#4a5259;border:1px solid #3a4248;border-radius:4px 4px 2px 2px"><svg style="left:2px;top:4px" width="17" height="18" viewBox="0 0 17 18"><rect x="0" y="0" width="17" height="18" fill="#dfe4e6"/><rect x="0" y="3" width="10.5" height="4.2" fill="#3f484f"/><rect x="0" y="10.3" width="10.5" height="3.9" fill="#3f484f"/><path d="M1 5 L6 4.2 M1 12.2 L6 11.4" stroke="#b9bcb0" stroke-width="0.8"/></svg><svg style="left:26px;top:0px;overflow:visible" width="22.9" height="30"><text x="0" y="21" font-family="Liberation Sans" font-size="24" fill="#9ea6aa" textLength="22.9" lengthAdjust="spacingAndGlyphs">P..</text></svg></div>
<div style="left:1508.5px;top:994px;width:2px;height:10px;background:#9aa1a6"></div>
<div style="left:1511.0px;top:1062px;width:13px;height:10px;background:#b8bfc3"></div>
<div style="left:1529.0px;top:1064px;width:1.5px;height:8px;background:#a8afb3"></div>
<div style="left:1539.0px;top:1064px;width:1.5px;height:8px;background:#a8afb3"></div>
<div style="left:1549.0px;top:1064px;width:1.5px;height:8px;background:#a8afb3"></div>
<div style="left:1555.0px;top:1064px;width:1.5px;height:8px;background:#a8afb3"></div>
<div style="left:1558.0px;top:1064px;width:1.5px;height:8px;background:#a8afb3"></div>
<div style="left:1564.9px;top:992px;width:52.9px;height:80px;background:rgba(12,20,25,0.24)"></div>
<div class="cl" style="left:1564.9px;top:962px;width:52.9px;height:30px;background:#4a5259;border:1px solid #3a4248;border-radius:4px 4px 2px 2px"><svg style="left:2px;top:4px" width="17" height="18" viewBox="0 0 17 18"><rect x="0" y="0" width="17" height="18" fill="#dfe4e6"/><rect x="0" y="3" width="10.5" height="4.2" fill="#3f484f"/><rect x="0" y="10.3" width="10.5" height="3.9" fill="#3f484f"/><path d="M1 5 L6 4.2 M1 12.2 L6 11.4" stroke="#b9bcb0" stroke-width="0.8"/></svg><svg style="left:26px;top:0px;overflow:visible" width="22.9" height="30"><text x="0" y="21" font-family="Liberation Sans" font-size="24" fill="#9ea6aa" textLength="22.9" lengthAdjust="spacingAndGlyphs">P..</text></svg></div>
<div style="left:1562.4px;top:994px;width:2px;height:10px;background:#9aa1a6"></div>
<div style="left:1564.9px;top:1062px;width:13px;height:10px;background:#b8bfc3"></div>
<div style="left:1582.9px;top:1064px;width:1.5px;height:8px;background:#a8afb3"></div>
<div style="left:1592.9px;top:1064px;width:1.5px;height:8px;background:#a8afb3"></div>
<div style="left:1602.9px;top:1064px;width:1.5px;height:8px;background:#a8afb3"></div>
<div style="left:1608.9px;top:1064px;width:1.5px;height:8px;background:#a8afb3"></div>
<div style="left:1611.9px;top:1064px;width:1.5px;height:8px;background:#a8afb3"></div>
<div style="left:2265.5px;top:992px;width:52.9px;height:80px;background:rgba(12,20,25,0.24)"></div>
<div class="cl" style="left:2265.5px;top:962px;width:52.9px;height:30px;background:#4a5259;border:1px solid #3a4248;border-radius:4px 4px 2px 2px"><svg style="left:2px;top:4px" width="17" height="18" viewBox="0 0 17 18"><rect x="0" y="0" width="17" height="18" fill="#dfe4e6"/><rect x="0" y="3" width="10.5" height="4.2" fill="#3f484f"/><rect x="0" y="10.3" width="10.5" height="3.9" fill="#3f484f"/><path d="M1 5 L6 4.2 M1 12.2 L6 11.4" stroke="#b9bcb0" stroke-width="0.8"/></svg><svg style="left:26px;top:0px;overflow:visible" width="22.9" height="30"><text x="0" y="21" font-family="Liberation Sans" font-size="24" fill="#9ea6aa" textLength="22.9" lengthAdjust="spacingAndGlyphs">P..</text></svg></div>
<div style="left:2263.0px;top:994px;width:2px;height:10px;background:#9aa1a6"></div>
<div style="left:2265.5px;top:1062px;width:13px;height:10px;background:#b8bfc3"></div>
<div style="left:2283.5px;top:1064px;width:1.5px;height:8px;background:#a8afb3"></div>
<div style="left:2293.5px;top:1064px;width:1.5px;height:8px;background:#a8afb3"></div>
<div style="left:2303.5px;top:1064px;width:1.5px;height:8px;background:#a8afb3"></div>
<div style="left:2309.5px;top:1064px;width:1.5px;height:8px;background:#a8afb3"></div>
<div style="left:2312.5px;top:1064px;width:1.5px;height:8px;background:#a8afb3"></div>
<div style="left:2319.4px;top:992px;width:52.9px;height:80px;background:rgba(12,20,25,0.24)"></div>
<div class="cl" style="left:2319.4px;top:962px;width:52.9px;height:30px;background:#4a5259;border:1px solid #3a4248;border-radius:4px 4px 2px 2px"><svg style="left:2px;top:4px" width="17" height="18" viewBox="0 0 17 18"><rect x="0" y="0" width="17" height="18" fill="#dfe4e6"/><rect x="0" y="3" width="10.5" height="4.2" fill="#3f484f"/><rect x="0" y="10.3" width="10.5" height="3.9" fill="#3f484f"/><path d="M1 5 L6 4.2 M1 12.2 L6 11.4" stroke="#b9bcb0" stroke-width="0.8"/></svg><svg style="left:26px;top:0px;overflow:visible" width="22.9" height="30"><text x="0" y="21" font-family="Liberation Sans" font-size="24" fill="#9ea6aa" textLength="22.9" lengthAdjust="spacingAndGlyphs">P..</text></svg></div>
<div style="left:2316.9px;top:994px;width:2px;height:10px;background:#9aa1a6"></div>
<div style="left:2319.4px;top:1062px;width:13px;height:10px;background:#b8bfc3"></div>
<div style="left:2337.4px;top:1064px;width:1.5px;height:8px;background:#a8afb3"></div>
<div style="left:2347.4px;top:1064px;width:1.5px;height:8px;background:#a8afb3"></div>
<div style="left:2357.4px;top:1064px;width:1.5px;height:8px;background:#a8afb3"></div>
<div style="left:2363.4px;top:1064px;width:1.5px;height:8px;background:#a8afb3"></div>
<div style="left:2366.4px;top:1064px;width:1.5px;height:8px;background:#a8afb3"></div>
<div style="left:2373.3px;top:992px;width:52.9px;height:80px;background:rgba(12,20,25,0.24)"></div>
<div class="cl" style="left:2373.3px;top:962px;width:52.9px;height:30px;background:#4a5259;border:1px solid #3a4248;border-radius:4px 4px 2px 2px"><svg style="left:2px;top:4px" width="17" height="18" viewBox="0 0 17 18"><rect x="0" y="0" width="17" height="18" fill="#dfe4e6"/><rect x="0" y="3" width="10.5" height="4.2" fill="#3f484f"/><rect x="0" y="10.3" width="10.5" height="3.9" fill="#3f484f"/><path d="M1 5 L6 4.2 M1 12.2 L6 11.4" stroke="#b9bcb0" stroke-width="0.8"/></svg><svg style="left:26px;top:0px;overflow:visible" width="22.9" height="30"><text x="0" y="21" font-family="Liberation Sans" font-size="24" fill="#9ea6aa" textLength="22.9" lengthAdjust="spacingAndGlyphs">P..</text></svg></div>
<div style="left:2370.8px;top:994px;width:2px;height:10px;background:#9aa1a6"></div>
<div style="left:2373.3px;top:1062px;width:13px;height:10px;background:#b8bfc3"></div>
<div style="left:2391.3px;top:1064px;width:1.5px;height:8px;background:#a8afb3"></div>
<div style="left:2401.3px;top:1064px;width:1.5px;height:8px;background:#a8afb3"></div>
<div style="left:2411.3px;top:1064px;width:1.5px;height:8px;background:#a8afb3"></div>
<div style="left:2417.3px;top:1064px;width:1.5px;height:8px;background:#a8afb3"></div>
<div style="left:2420.3px;top:1064px;width:1.5px;height:8px;background:#a8afb3"></div>
<div style="left:2427.1px;top:992px;width:52.9px;height:80px;background:rgba(12,20,25,0.24)"></div>
<div class="cl" style="left:2427.1px;top:962px;width:52.9px;height:30px;background:#4a5259;border:1px solid #3a4248;border-radius:4px 4px 2px 2px"><svg style="left:2px;top:4px" width="17" height="18" viewBox="0 0 17 18"><rect x="0" y="0" width="17" height="18" fill="#dfe4e6"/><rect x="0" y="3" width="10.5" height="4.2" fill="#3f484f"/><rect x="0" y="10.3" width="10.5" height="3.9" fill="#3f484f"/><path d="M1 5 L6 4.2 M1 12.2 L6 11.4" stroke="#b9bcb0" stroke-width="0.8"/></svg><svg style="left:26px;top:0px;overflow:visible" width="22.9" height="30"><text x="0" y="21" font-family="Liberation Sans" font-size="24" fill="#9ea6aa" textLength="22.9" lengthAdjust="spacingAndGlyphs">P..</text></svg></div>
<div style="left:2424.6px;top:994px;width:2px;height:10px;background:#9aa1a6"></div>
<div style="left:2427.1px;top:1062px;width:13px;height:10px;background:#b8bfc3"></div>
<div style="left:2445.1px;top:1064px;width:1.5px;height:8px;background:#a8afb3"></div>
<div style="left:2455.1px;top:1064px;width:1.5px;height:8px;background:#a8afb3"></div>
<div style="left:2465.1px;top:1064px;width:1.5px;height:8px;background:#a8afb3"></div>
<div style="left:2471.1px;top:1064px;width:1.5px;height:8px;background:#a8afb3"></div>
<div style="left:2474.1px;top:1064px;width:1.5px;height:8px;background:#a8afb3"></div>
<div style="left:2481.0px;top:992px;width:52.9px;height:80px;background:rgba(12,20,25,0.24)"></div>
<div class="cl" style="left:2481.0px;top:962px;width:52.9px;height:30px;background:#4a5259;border:1px solid #3a4248;border-radius:4px 4px 2px 2px"><svg style="left:2px;top:4px" width="17" height="18" viewBox="0 0 17 18"><rect x="0" y="0" width="17" height="18" fill="#dfe4e6"/><rect x="0" y="3" width="10.5" height="4.2" fill="#3f484f"/><rect x="0" y="10.3" width="10.5" height="3.9" fill="#3f484f"/><path d="M1 5 L6 4.2 M1 12.2 L6 11.4" stroke="#b9bcb0" stroke-width="0.8"/></svg><svg style="left:26px;top:0px;overflow:visible" width="22.9" height="30"><text x="0" y="21" font-family="Liberation Sans" font-size="24" fill="#9ea6aa" textLength="22.9" lengthAdjust="spacingAndGlyphs">P..</text></svg></div>
<div style="left:2478.5px;top:994px;width:2px;height:10px;background:#9aa1a6"></div>
<div style="left:2481.0px;top:1062px;width:13px;height:10px;background:#b8bfc3"></div>
<div style="left:2499.0px;top:1064px;width:1.5px;height:8px;background:#a8afb3"></div>
<div style="left:2509.0px;top:1064px;width:1.5px;height:8px;background:#a8afb3"></div>
<div style="left:2519.0px;top:1064px;width:1.5px;height:8px;background:#a8afb3"></div>
<div style="left:2525.0px;top:1064px;width:1.5px;height:8px;background:#a8afb3"></div>
<div style="left:2528.0px;top:1064px;width:1.5px;height:8px;background:#a8afb3"></div>
<div style="left:2534.9px;top:992px;width:52.9px;height:80px;background:rgba(12,20,25,0.24)"></div>
<div class="cl" style="left:2534.9px;top:962px;width:52.9px;height:30px;background:#4a5259;border:1px solid #3a4248;border-radius:4px 4px 2px 2px"><svg style="left:2px;top:4px" width="17" height="18" viewBox="0 0 17 18"><rect x="0" y="0" width="17" height="18" fill="#dfe4e6"/><rect x="0" y="3" width="10.5" height="4.2" fill="#3f484f"/><rect x="0" y="10.3" width="10.5" height="3.9" fill="#3f484f"/><path d="M1 5 L6 4.2 M1 12.2 L6 11.4" stroke="#b9bcb0" stroke-width="0.8"/></svg><svg style="left:26px;top:0px;overflow:visible" width="22.9" height="30"><text x="0" y="21" font-family="Liberation Sans" font-size="24" fill="#9ea6aa" textLength="22.9" lengthAdjust="spacingAndGlyphs">P..</text></svg></div>
<div style="left:2532.4px;top:994px;width:2px;height:10px;background:#9aa1a6"></div>
<div style="left:2534.9px;top:1062px;width:13px;height:10px;background:#b8bfc3"></div>
<div style="left:2552.9px;top:1064px;width:1.5px;height:8px;background:#a8afb3"></div>
<div style="left:2562.9px;top:1064px;width:1.5px;height:8px;background:#a8afb3"></div>
<div style="left:2572.9px;top:1064px;width:1.5px;height:8px;background:#a8afb3"></div>
<div style="left:2578.9px;top:1064px;width:1.5px;height:8px;background:#a8afb3"></div>
<div style="left:2581.9px;top:1064px;width:1.5px;height:8px;background:#a8afb3"></div>
<div style="left:2588.8px;top:992px;width:52.9px;height:80px;background:rgba(12,20,25,0.24)"></div>
<div class="cl" style="left:2588.8px;top:962px;width:52.9px;height:30px;background:#4a5259;border:1px solid #3a4248;border-radius:4px 4px 2px 2px"><svg style="left:2px;top:4px" width="17" height="18" viewBox="0 0 17 18"><rect x="0" y="0" width="17" height="18" fill="#dfe4e6"/><rect x="0" y="3" width="10.5" height="4.2" fill="#3f484f"/><rect x="0" y="10.3" width="10.5" height="3.9" fill="#3f484f"/><path d="M1 5 L6 4.2 M1 12.2 L6 11.4" stroke="#b9bcb0" stroke-width="0.8"/></svg><svg style="left:26px;top:0px;overflow:visible" width="22.9" height="30"><text x="0" y="21" font-family="Liberation Sans" font-size="24" fill="#9ea6aa" textLength="22.9" lengthAdjust="spacingAndGlyphs">P..</text></svg></div>
<div style="left:2586.3px;top:994px;width:2px;height:10px;background:#9aa1a6"></div>
<div style="left:2588.8px;top:1062px;width:13px;height:10px;background:#b8bfc3"></div>
<div style="left:2606.8px;top:1064px;width:1.5px;height:8px;background:#a8afb3"></div>
<div style="left:2616.8px;top:1064px;width:1.5px;height:8px;background:#a8afb3"></div>
<div style="left:2626.8px;top:1064px;width:1.5px;height:8px;background:#a8afb3"></div>
<div style="left:2632.8px;top:1064px;width:1.5px;height:8px;background:#a8afb3"></div>
<div style="left:2635.8px;top:1064px;width:1.5px;height:8px;background:#a8afb3"></div>
<div style="left:2642.7px;top:992px;width:52.9px;height:80px;background:rgba(12,20,25,0.24)"></div>
<div class="cl" style="left:2642.7px;top:962px;width:52.9px;height:30px;background:#4a5259;border:1px solid #3a4248;border-radius:4px 4px 2px 2px"><svg style="left:2px;top:4px" width="17" height="18" viewBox="0 0 17 18"><rect x="0" y="0" width="17" height="18" fill="#dfe4e6"/><rect x="0" y="3" width="10.5" height="4.2" fill="#3f484f"/><rect x="0" y="10.3" width="10.5" height="3.9" fill="#3f484f"/><path d="M1 5 L6 4.2 M1 12.2 L6 11.4" stroke="#b9bcb0" stroke-width="0.8"/></svg><svg style="left:26px;top:0px;overflow:visible" width="22.9" height="30"><text x="0" y="21" font-family="Liberation Sans" font-size="24" fill="#9ea6aa" textLength="22.9" lengthAdjust="spacingAndGlyphs">P..</text></svg></div>
<div style="left:2640.2px;top:994px;width:2px;height:10px;background:#9aa1a6"></div>
<div style="left:2642.7px;top:1062px;width:13px;height:10px;background:#b8bfc3"></div>
<div style="left:2660.7px;top:1064px;width:1.5px;height:8px;background:#a8afb3"></div>
<div style="left:2670.7px;top:1064px;width:1.5px;height:8px;background:#a8afb3"></div>
<div style="left:2680.7px;top:1064px;width:1.5px;height:8px;background:#a8afb3"></div>
<div style="left:2686.7px;top:1064px;width:1.5px;height:8px;background:#a8afb3"></div>
<div style="left:2689.7px;top:1064px;width:1.5px;height:8px;background:#a8afb3"></div>
<div style="left:2696.6px;top:992px;width:52.9px;height:80px;background:rgba(12,20,25,0.24)"></div>
<div class="cl" style="left:2696.6px;top:962px;width:52.9px;height:30px;background:#4a5259;border:1px solid #3a4248;border-radius:4px 4px 2px 2px"><svg style="left:2px;top:4px" width="17" height="18" viewBox="0 0 17 18"><rect x="0" y="0" width="17" height="18" fill="#dfe4e6"/><rect x="0" y="3" width="10.5" height="4.2" fill="#3f484f"/><rect x="0" y="10.3" width="10.5" height="3.9" fill="#3f484f"/><path d="M1 5 L6 4.2 M1 12.2 L6 11.4" stroke="#b9bcb0" stroke-width="0.8"/></svg><svg style="left:26px;top:0px;overflow:visible" width="22.9" height="30"><text x="0" y="21" font-family="Liberation Sans" font-size="24" fill="#9ea6aa" textLength="22.9" lengthAdjust="spacingAndGlyphs">P..</text></svg></div>
<div style="left:2694.1px;top:994px;width:2px;height:10px;background:#9aa1a6"></div>
<div style="left:2696.6px;top:1062px;width:13px;height:10px;background:#b8bfc3"></div>
<div style="left:2714.6px;top:1064px;width:1.5px;height:8px;background:#a8afb3"></div>
<div style="left:2724.6px;top:1064px;width:1.5px;height:8px;background:#a8afb3"></div>
<div style="left:2734.6px;top:1064px;width:1.5px;height:8px;background:#a8afb3"></div>
<div style="left:2740.6px;top:1064px;width:1.5px;height:8px;background:#a8afb3"></div>
<div style="left:2743.6px;top:1064px;width:1.5px;height:8px;background:#a8afb3"></div>
<div style="left:2750.5px;top:992px;width:52.9px;height:80px;background:rgba(12,20,25,0.24)"></div>
<div class="cl" style="left:2750.5px;top:962px;width:52.9px;height:30px;background:#4a5259;border:1px solid #3a4248;border-radius:4px 4px 2px 2px"><svg style="left:2px;top:4px" width="17" height="18" viewBox="0 0 17 18"><rect x="0" y="0" width="17" height="18" fill="#dfe4e6"/><rect x="0" y="3" width="10.5" height="4.2" fill="#3f484f"/><rect x="0" y="10.3" width="10.5" height="3.9" fill="#3f484f"/><path d="M1 5 L6 4.2 M1 12.2 L6 11.4" stroke="#b9bcb0" stroke-width="0.8"/></svg><svg style="left:26px;top:0px;overflow:visible" width="22.9" height="30"><text x="0" y="21" font-family="Liberation Sans" font-size="24" fill="#9ea6aa" textLength="22.9" lengthAdjust="spacingAndGlyphs">P..</text></svg></div>
<div style="left:2748.0px;top:994px;width:2px;height:10px;background:#9aa1a6"></div>
<div style="left:2750.5px;top:1062px;width:13px;height:10px;background:#b8bfc3"></div>
<div style="left:2768.5px;top:1064px;width:1.5px;height:8px;background:#a8afb3"></div>
<div style="left:2778.5px;top:1064px;width:1.5px;height:8px;background:#a8afb3"></div>
<div style="left:2788.5px;top:1064px;width:1.5px;height:8px;background:#a8afb3"></div>
<div style="left:2794.5px;top:1064px;width:1.5px;height:8px;background:#a8afb3"></div>
<div style="left:2797.5px;top:1064px;width:1.5px;height:8px;background:#a8afb3"></div>
<div style="left:1187.7px;top:1104px;width:25.9px;height:80px;background:rgba(12,20,25,0.24)"></div>
<div class="cl" style="left:1187.7px;top:1074px;width:25.9px;height:30px;background:#4a5259;border:1px solid #3a4248;border-radius:4px 4px 2px 2px"><svg style="left:2px;top:4px" width="17" height="18" viewBox="0 0 17 18"><rect x="0" y="0" width="17" height="18" fill="#dfe4e6"/><rect x="0" y="3" width="10.5" height="4.2" fill="#3f484f"/><rect x="0" y="10.3" width="10.5" height="3.9" fill="#3f484f"/><path d="M1 5 L6 4.2 M1 12.2 L6 11.4" stroke="#b9bcb0" stroke-width="0.8"/></svg></div>
<div style="left:1200.7px;top:1172px;width:13px;height:6px;background:#b8bfc3"></div>
<div style="left:1241.6px;top:1104px;width:25.9px;height:80px;background:rgba(12,20,25,0.24)"></div>
<div class="cl" style="left:1241.6px;top:1074px;width:25.9px;height:30px;background:#4a5259;border:1px solid #3a4248;border-radius:4px 4px 2px 2px"><svg style="left:2px;top:4px" width="17" height="18" viewBox="0 0 17 18"><rect x="0" y="0" width="17" height="18" fill="#dfe4e6"/><rect x="0" y="3" width="10.5" height="4.2" fill="#3f484f"/><rect x="0" y="10.3" width="10.5" height="3.9" fill="#3f484f"/><path d="M1 5 L6 4.2 M1 12.2 L6 11.4" stroke="#b9bcb0" stroke-width="0.8"/></svg></div>
<div style="left:1254.6px;top:1172px;width:13px;height:6px;background:#b8bfc3"></div>
<div style="left:1295.5px;top:1104px;width:25.9px;height:80px;background:rgba(12,20,25,0.24)"></div>
<div class="cl" style="left:1295.5px;top:1074px;width:25.9px;height:30px;background:#4a5259;border:1px solid #3a4248;border-radius:4px 4px 2px 2px"><svg style="left:2px;top:4px" width="17" height="18" viewBox="0 0 17 18"><rect x="0" y="0" width="17" height="18" fill="#dfe4e6"/><rect x="0" y="3" width="10.5" height="4.2" fill="#3f484f"/><rect x="0" y="10.3" width="10.5" height="3.9" fill="#3f484f"/><path d="M1 5 L6 4.2 M1 12.2 L6 11.4" stroke="#b9bcb0" stroke-width="0.8"/></svg></div>
<div style="left:1308.5px;top:1172px;width:13px;height:6px;background:#b8bfc3"></div>
<div style="left:1349.4px;top:1104px;width:25.9px;height:80px;background:rgba(12,20,25,0.24)"></div>
<div class="cl" style="left:1349.4px;top:1074px;width:25.9px;height:30px;background:#4a5259;border:1px solid #3a4248;border-radius:4px 4px 2px 2px"><svg style="left:2px;top:4px" width="17" height="18" viewBox="0 0 17 18"><rect x="0" y="0" width="17" height="18" fill="#dfe4e6"/><rect x="0" y="3" width="10.5" height="4.2" fill="#3f484f"/><rect x="0" y="10.3" width="10.5" height="3.9" fill="#3f484f"/><path d="M1 5 L6 4.2 M1 12.2 L6 11.4" stroke="#b9bcb0" stroke-width="0.8"/></svg></div>
<div style="left:1362.4px;top:1172px;width:13px;height:6px;background:#b8bfc3"></div>
<div style="left:1403.3px;top:1104px;width:25.9px;height:80px;background:rgba(12,20,25,0.24)"></div>
<div class="cl" style="left:1403.3px;top:1074px;width:25.9px;height:30px;background:#4a5259;border:1px solid #3a4248;border-radius:4px 4px 2px 2px"><svg style="left:2px;top:4px" width="17" height="18" viewBox="0 0 17 18"><rect x="0" y="0" width="17" height="18" fill="#dfe4e6"/><rect x="0" y="3" width="10.5" height="4.2" fill="#3f484f"/><rect x="0" y="10.3" width="10.5" height="3.9" fill="#3f484f"/><path d="M1 5 L6 4.2 M1 12.2 L6 11.4" stroke="#b9bcb0" stroke-width="0.8"/></svg></div>
<div style="left:1416.3px;top:1172px;width:13px;height:6px;background:#b8bfc3"></div>
<div style="left:1457.2px;top:1104px;width:25.9px;height:80px;background:rgba(12,20,25,0.24)"></div>
<div class="cl" style="left:1457.2px;top:1074px;width:25.9px;height:30px;background:#4a5259;border:1px solid #3a4248;border-radius:4px 4px 2px 2px"><svg style="left:2px;top:4px" width="17" height="18" viewBox="0 0 17 18"><rect x="0" y="0" width="17" height="18" fill="#dfe4e6"/><rect x="0" y="3" width="10.5" height="4.2" fill="#3f484f"/><rect x="0" y="10.3" width="10.5" height="3.9" fill="#3f484f"/><path d="M1 5 L6 4.2 M1 12.2 L6 11.4" stroke="#b9bcb0" stroke-width="0.8"/></svg></div>
<div style="left:1470.2px;top:1172px;width:13px;height:6px;background:#b8bfc3"></div>
<div style="left:1511.0px;top:1104px;width:25.9px;height:80px;background:rgba(12,20,25,0.24)"></div>
<div class="cl" style="left:1511.0px;top:1074px;width:25.9px;height:30px;background:#4a5259;border:1px solid #3a4248;border-radius:4px 4px 2px 2px"><svg style="left:2px;top:4px" width="17" height="18" viewBox="0 0 17 18"><rect x="0" y="0" width="17" height="18" fill="#dfe4e6"/><rect x="0" y="3" width="10.5" height="4.2" fill="#3f484f"/><rect x="0" y="10.3" width="10.5" height="3.9" fill="#3f484f"/><path d="M1 5 L6 4.2 M1 12.2 L6 11.4" stroke="#b9bcb0" stroke-width="0.8"/></svg></div>
<div style="left:1524.0px;top:1172px;width:13px;height:6px;background:#b8bfc3"></div>
<div style="left:1564.9px;top:1104px;width:25.9px;height:80px;background:rgba(12,20,25,0.24)"></div>
<div class="cl" style="left:1564.9px;top:1074px;width:25.9px;height:30px;background:#4a5259;border:1px solid #3a4248;border-radius:4px 4px 2px 2px"><svg style="left:2px;top:4px" width="17" height="18" viewBox="0 0 17 18"><rect x="0" y="0" width="17" height="18" fill="#dfe4e6"/><rect x="0" y="3" width="10.5" height="4.2" fill="#3f484f"/><rect x="0" y="10.3" width="10.5" height="3.9" fill="#3f484f"/><path d="M1 5 L6 4.2 M1 12.2 L6 11.4" stroke="#b9bcb0" stroke-width="0.8"/></svg></div>
<div style="left:1577.9px;top:1172px;width:13px;height:6px;background:#b8bfc3"></div>
<div style="left:2049.9px;top:1104px;width:25.9px;height:80px;background:rgba(12,20,25,0.24)"></div>
<div class="cl" style="left:2049.9px;top:1074px;width:25.9px;height:30px;background:#4a5259;border:1px solid #3a4248;border-radius:4px 4px 2px 2px"><svg style="left:2px;top:4px" width="17" height="18" viewBox="0 0 17 18"><rect x="0" y="0" width="17" height="18" fill="#dfe4e6"/><rect x="0" y="3" width="10.5" height="4.2" fill="#3f484f"/><rect x="0" y="10.3" width="10.5" height="3.9" fill="#3f484f"/><path d="M1 5 L6 4.2 M1 12.2 L6 11.4" stroke="#b9bcb0" stroke-width="0.8"/></svg></div>
<div style="left:2062.9px;top:1172px;width:13px;height:6px;background:#b8bfc3"></div>
<div style="left:2103.8px;top:1104px;width:25.9px;height:80px;background:rgba(12,20,25,0.24)"></div>
<div class="cl" style="left:2103.8px;top:1074px;width:25.9px;height:30px;background:#4a5259;border:1px solid #3a4248;border-radius:4px 4px 2px 2px"><svg style="left:2px;top:4px" width="17" height="18" viewBox="0 0 17 18"><rect x="0" y="0" width="17" height="18" fill="#dfe4e6"/><rect x="0" y="3" width="10.5" height="4.2" fill="#3f484f"/><rect x="0" y="10.3" width="10.5" height="3.9" fill="#3f484f"/><path d="M1 5 L6 4.2 M1 12.2 L6 11.4" stroke="#b9bcb0" stroke-width="0.8"/></svg></div>
<div style="left:2116.8px;top:1172px;width:13px;height:6px;background:#b8bfc3"></div>
<div style="left:2157.7px;top:1104px;width:25.9px;height:80px;background:rgba(12,20,25,0.24)"></div>
<div class="cl" style="left:2157.7px;top:1074px;width:25.9px;height:30px;background:#4a5259;border:1px solid #3a4248;border-radius:4px 4px 2px 2px"><svg style="left:2px;top:4px" width="17" height="18" viewBox="0 0 17 18"><rect x="0" y="0" width="17" height="18" fill="#dfe4e6"/><rect x="0" y="3" width="10.5" height="4.2" fill="#3f484f"/><rect x="0" y="10.3" width="10.5" height="3.9" fill="#3f484f"/><path d="M1 5 L6 4.2 M1 12.2 L6 11.4" stroke="#b9bcb0" stroke-width="0.8"/></svg></div>
<div style="left:2170.7px;top:1172px;width:13px;height:6px;background:#b8bfc3"></div>
<div style="left:2211.6px;top:1104px;width:25.9px;height:80px;background:rgba(12,20,25,0.24)"></div>
<div class="cl" style="left:2211.6px;top:1074px;width:25.9px;height:30px;background:#4a5259;border:1px solid #3a4248;border-radius:4px 4px 2px 2px"><svg style="left:2px;top:4px" width="17" height="18" viewBox="0 0 17 18"><rect x="0" y="0" width="17" height="18" fill="#dfe4e6"/><rect x="0" y="3" width="10.5" height="4.2" fill="#3f484f"/><rect x="0" y="10.3" width="10.5" height="3.9" fill="#3f484f"/><path d="M1 5 L6 4.2 M1 12.2 L6 11.4" stroke="#b9bcb0" stroke-width="0.8"/></svg></div>
<div style="left:2224.6px;top:1172px;width:13px;height:6px;background:#b8bfc3"></div>
<div style="left:2265.5px;top:1104px;width:25.9px;height:80px;background:rgba(12,20,25,0.24)"></div>
<div class="cl" style="left:2265.5px;top:1074px;width:25.9px;height:30px;background:#4a5259;border:1px solid #3a4248;border-radius:4px 4px 2px 2px"><svg style="left:2px;top:4px" width="17" height="18" viewBox="0 0 17 18"><rect x="0" y="0" width="17" height="18" fill="#dfe4e6"/><rect x="0" y="3" width="10.5" height="4.2" fill="#3f484f"/><rect x="0" y="10.3" width="10.5" height="3.9" fill="#3f484f"/><path d="M1 5 L6 4.2 M1 12.2 L6 11.4" stroke="#b9bcb0" stroke-width="0.8"/></svg></div>
<div style="left:2278.5px;top:1172px;width:13px;height:6px;background:#b8bfc3"></div>
<div style="left:2319.4px;top:1104px;width:25.9px;height:80px;background:rgba(12,20,25,0.24)"></div>
<div class="cl" style="left:2319.4px;top:1074px;width:25.9px;height:30px;background:#4a5259;border:1px solid #3a4248;border-radius:4px 4px 2px 2px"><svg style="left:2px;top:4px" width="17" height="18" viewBox="0 0 17 18"><rect x="0" y="0" width="17" height="18" fill="#dfe4e6"/><rect x="0" y="3" width="10.5" height="4.2" fill="#3f484f"/><rect x="0" y="10.3" width="10.5" height="3.9" fill="#3f484f"/><path d="M1 5 L6 4.2 M1 12.2 L6 11.4" stroke="#b9bcb0" stroke-width="0.8"/></svg></div>
<div style="left:2332.4px;top:1172px;width:13px;height:6px;background:#b8bfc3"></div>
<div style="left:2373.3px;top:1104px;width:25.9px;height:80px;background:rgba(12,20,25,0.24)"></div>
<div class="cl" style="left:2373.3px;top:1074px;width:25.9px;height:30px;background:#4a5259;border:1px solid #3a4248;border-radius:4px 4px 2px 2px"><svg style="left:2px;top:4px" width="17" height="18" viewBox="0 0 17 18"><rect x="0" y="0" width="17" height="18" fill="#dfe4e6"/><rect x="0" y="3" width="10.5" height="4.2" fill="#3f484f"/><rect x="0" y="10.3" width="10.5" height="3.9" fill="#3f484f"/><path d="M1 5 L6 4.2 M1 12.2 L6 11.4" stroke="#b9bcb0" stroke-width="0.8"/></svg></div>
<div style="left:2386.3px;top:1172px;width:13px;height:6px;background:#b8bfc3"></div>
<div style="left:2427.1px;top:1104px;width:25.9px;height:80px;background:rgba(12,20,25,0.24)"></div>
<div class="cl" style="left:2427.1px;top:1074px;width:25.9px;height:30px;background:#4a5259;border:1px solid #3a4248;border-radius:4px 4px 2px 2px"><svg style="left:2px;top:4px" width="17" height="18" viewBox="0 0 17 18"><rect x="0" y="0" width="17" height="18" fill="#dfe4e6"/><rect x="0" y="3" width="10.5" height="4.2" fill="#3f484f"/><rect x="0" y="10.3" width="10.5" height="3.9" fill="#3f484f"/><path d="M1 5 L6 4.2 M1 12.2 L6 11.4" stroke="#b9bcb0" stroke-width="0.8"/></svg></div>
<div style="left:2440.1px;top:1172px;width:13px;height:6px;background:#b8bfc3"></div>
<div style="left:2481.0px;top:1104px;width:25.9px;height:80px;background:rgba(12,20,25,0.24)"></div>
<div class="cl" style="left:2481.0px;top:1074px;width:25.9px;height:30px;background:#4a5259;border:1px solid #3a4248;border-radius:4px 4px 2px 2px"><svg style="left:2px;top:4px" width="17" height="18" viewBox="0 0 17 18"><rect x="0" y="0" width="17" height="18" fill="#dfe4e6"/><rect x="0" y="3" width="10.5" height="4.2" fill="#3f484f"/><rect x="0" y="10.3" width="10.5" height="3.9" fill="#3f484f"/><path d="M1 5 L6 4.2 M1 12.2 L6 11.4" stroke="#b9bcb0" stroke-width="0.8"/></svg></div>
<div style="left:2494.0px;top:1172px;width:13px;height:6px;background:#b8bfc3"></div>
<div style="left:2534.9px;top:1104px;width:25.9px;height:80px;background:rgba(12,20,25,0.24)"></div>
<div class="cl" style="left:2534.9px;top:1074px;width:25.9px;height:30px;background:#4a5259;border:1px solid #3a4248;border-radius:4px 4px 2px 2px"><svg style="left:2px;top:4px" width="17" height="18" viewBox="0 0 17 18"><rect x="0" y="0" width="17" height="18" fill="#dfe4e6"/><rect x="0" y="3" width="10.5" height="4.2" fill="#3f484f"/><rect x="0" y="10.3" width="10.5" height="3.9" fill="#3f484f"/><path d="M1 5 L6 4.2 M1 12.2 L6 11.4" stroke="#b9bcb0" stroke-width="0.8"/></svg></div>
<div style="left:2547.9px;top:1172px;width:13px;height:6px;background:#b8bfc3"></div>
<div style="left:1419.4px;top:1250px;width:8.0px;height:30px;background:#7a5a60;border:1px solid #503a40;border-radius:3px"></div>
<div style="left:1473.4px;top:1250px;width:8.1px;height:30px;background:#7a5a60;border:1px solid #503a40;border-radius:3px"></div>
<div style="left:1527.3px;top:1250px;width:8.1px;height:30px;background:#7a5a60;border:1px solid #503a40;border-radius:3px"></div>
<div style="left:1581.3px;top:1250px;width:8.2px;height:30px;background:#7a5a60;border:1px solid #503a40;border-radius:3px"></div>
<div style="left:1635.2px;top:1250px;width:8.2px;height:30px;background:#7a5a60;border:1px solid #503a40;border-radius:3px"></div>
<div style="left:1689.2px;top:1250px;width:8.3px;height:30px;background:#7a5a60;border:1px solid #503a40;border-radius:3px"></div>
<div style="left:2282.8px;top:1250px;width:8.0px;height:30px;background:#7a5a60;border:1px solid #503a40;border-radius:3px"></div>
<div style="left:2336.8px;top:1250px;width:8.0px;height:30px;background:#7a5a60;border:1px solid #503a40;border-radius:3px"></div>
<div style="left:2390.8px;top:1250px;width:8.0px;height:30px;background:#7a5a60;border:1px solid #503a40;border-radius:3px"></div>
<div style="left:2444.8px;top:1250px;width:8.0px;height:30px;background:#7a5a60;border:1px solid #503a40;border-radius:3px"></div>
<div style="left:2498.8px;top:1250px;width:8.0px;height:30px;background:#7a5a60;border:1px solid #503a40;border-radius:3px"></div>
<div style="left:2552.8px;top:1250px;width:8.0px;height:30px;background:#7a5a60;border:1px solid #503a40;border-radius:3px"></div>
<div style="left:2606.8px;top:1250px;width:8.0px;height:30px;background:#7a5a60;border:1px solid #503a40;border-radius:3px"></div>
<div style="left:2660.8px;top:1250px;width:8.0px;height:30px;background:#7a5a60;border:1px solid #503a40;border-radius:3px"></div>
<div style="left:2714.8px;top:1250px;width:8.0px;height:30px;background:#7a5a60;border:1px solid #503a40;border-radius:3px"></div>
<div style="left:2768.8px;top:1250px;width:8.0px;height:30px;background:#7a5a60;border:1px solid #503a40;border-radius:3px"></div>
<div class="cl" style="left:756.6px;top:1282px;width:107.5px;height:30px;background:linear-gradient(#4a5c64 0,#4e6069 14%,#596d75 30%,#596d75 70%,#4e6069 86%,#495a62 100%);border:1px solid #354248;box-shadow:inset 0 1px 0 #64767e"><div style="left:2px;right:2px;top:14px;height:1px;background:#75858c;opacity:0.6"></div><svg style="left:2px;top:7px" width="18" height="15" viewBox="0 0 18 15"><path d="M0 0 Q1.5 6.5 9 7.5 Q1.5 8.5 0 15 Z" fill="#f0f4f2"/><path d="M10.5 2.5 Q11 7 17.5 7.5 Q11 8 10.5 12.5 Q10 8 5.5 7.5 Q10 7 10.5 2.5Z" fill="#f0f4f2"/></svg><svg style="left:25px;top:0px;overflow:visible" width="78.8" height="30"><text x="0" y="21" font-family="Liberation Sans" font-size="24" fill="#e6eaec" textLength="78.8" lengthAdjust="spacingAndGlyphs">SSE..PM</text></svg></div>
<div class="cl" style="left:864.4px;top:1282px;width:107.5px;height:30px;background:linear-gradient(#4a5c64 0,#4e6069 14%,#596d75 30%,#596d75 70%,#4e6069 86%,#495a62 100%);border:1px solid #354248;box-shadow:inset 0 1px 0 #64767e"><div style="left:2px;right:2px;top:14px;height:1px;background:#75858c;opacity:0.6"></div><svg style="left:2px;top:7px" width="18" height="15" viewBox="0 0 18 15"><path d="M0 0 Q1.5 6.5 9 7.5 Q1.5 8.5 0 15 Z" fill="#f0f4f2"/><path d="M10.5 2.5 Q11 7 17.5 7.5 Q11 8 10.5 12.5 Q10 8 5.5 7.5 Q10 7 10.5 2.5Z" fill="#f0f4f2"/></svg><svg style="left:25px;top:0px;overflow:visible" width="78.8" height="30"><text x="0" y="21" font-family="Liberation Sans" font-size="24" fill="#e6eaec" textLength="78.8" lengthAdjust="spacingAndGlyphs">SSE..BPM</text></svg></div>
<div class="cl" style="left:972.2px;top:1282px;width:107.5px;height:30px;background:linear-gradient(#4a5c64 0,#4e6069 14%,#596d75 30%,#596d75 70%,#4e6069 86%,#495a62 100%);border:1px solid #354248;box-shadow:inset 0 1px 0 #64767e"><div style="left:2px;right:2px;top:14px;height:1px;background:#75858c;opacity:0.6"></div><svg style="left:2px;top:7px" width="18" height="15" viewBox="0 0 18 15"><path d="M0 0 Q1.5 6.5 9 7.5 Q1.5 8.5 0 15 Z" fill="#f0f4f2"/><path d="M10.5 2.5 Q11 7 17.5 7.5 Q11 8 10.5 12.5 Q10 8 5.5 7.5 Q10 7 10.5 2.5Z" fill="#f0f4f2"/></svg><svg style="left:25px;top:0px;overflow:visible" width="78.8" height="30"><text x="0" y="21" font-family="Liberation Sans" font-size="24" fill="#e6eaec" textLength="78.8" lengthAdjust="spacingAndGlyphs">SSE..BPM</text></svg></div>
<div class="cl" style="left:1079.9px;top:1282px;width:80.5px;height:30px;background:linear-gradient(#4a5c64 0,#4e6069 14%,#596d75 30%,#596d75 70%,#4e6069 86%,#495a62 100%);border:1px solid #354248;box-shadow:inset 0 1px 0 #64767e"><div style="left:2px;right:2px;top:14px;height:1px;background:#75858c;opacity:0.6"></div><svg style="left:2px;top:7px" width="18" height="15" viewBox="0 0 18 15"><path d="M0 0 Q1.5 6.5 9 7.5 Q1.5 8.5 0 15 Z" fill="#f0f4f2"/><path d="M10.5 2.5 Q11 7 17.5 7.5 Q11 8 10.5 12.5 Q10 8 5.5 7.5 Q10 7 10.5 2.5Z" fill="#f0f4f2"/></svg><svg style="left:25px;top:0px;overflow:visible" width="51.8" height="30"><text x="0" y="21" font-family="Liberation Sans" font-size="24" fill="#e6eaec" textLength="51.8" lengthAdjust="spacingAndGlyphs">SS..M</text></svg></div>
<div class="cl" style="left:1160.8px;top:1282px;width:26.6px;height:30px;background:linear-gradient(#4a5c64 0,#4e6069 14%,#596d75 30%,#596d75 70%,#4e6069 86%,#495a62 100%);border:1px solid #354248;box-shadow:inset 0 1px 0 #64767e"><div style="left:2px;right:2px;top:14px;height:1px;background:#75858c;opacity:0.6"></div><svg style="left:2px;top:7px" width="18" height="15" viewBox="0 0 18 15"><path d="M0 0 Q1.5 6.5 9 7.5 Q1.5 8.5 0 15 Z" fill="#f0f4f2"/><path d="M10.5 2.5 Q11 7 17.5 7.5 Q11 8 10.5 12.5 Q10 8 5.5 7.5 Q10 7 10.5 2.5Z" fill="#f0f4f2"/></svg></div>
<div class="cl" style="left:1726.6px;top:1282px;width:107.5px;height:30px;background:linear-gradient(#4a5c64 0,#4e6069 14%,#596d75 30%,#596d75 70%,#4e6069 86%,#495a62 100%);border:1px solid #354248;box-shadow:inset 0 1px 0 #64767e"><div style="left:2px;right:2px;top:14px;height:1px;background:#75858c;opacity:0.6"></div><svg style="left:2px;top:7px" width="18" height="15" viewBox="0 0 18 15"><path d="M0 0 Q1.5 6.5 9 7.5 Q1.5 8.5 0 15 Z" fill="#f0f4f2"/><path d="M10.5 2.5 Q11 7 17.5 7.5 Q11 8 10.5 12.5 Q10 8 5.5 7.5 Q10 7 10.5 2.5Z" fill="#f0f4f2"/></svg><svg style="left:25px;top:0px;overflow:visible" width="78.8" height="30"><text x="0" y="21" font-family="Liberation Sans" font-size="24" fill="#e6eaec" textLength="78.8" lengthAdjust="spacingAndGlyphs">SSE..PM</text></svg></div>
<div class="cl" style="left:1834.4px;top:1282px;width:107.5px;height:30px;background:linear-gradient(#4a5c64 0,#4e6069 14%,#596d75 30%,#596d75 70%,#4e6069 86%,#495a62 100%);border:1px solid #354248;box-shadow:inset 0 1px 0 #64767e"><div style="left:2px;right:2px;top:14px;height:1px;background:#75858c;opacity:0.6"></div><svg style="left:2px;top:7px" width="18" height="15" viewBox="0 0 18 15"><path d="M0 0 Q1.5 6.5 9 7.5 Q1.5 8.5 0 15 Z" fill="#f0f4f2"/><path d="M10.5 2.5 Q11 7 17.5 7.5 Q11 8 10.5 12.5 Q10 8 5.5 7.5 Q10 7 10.5 2.5Z" fill="#f0f4f2"/></svg><svg style="left:25px;top:0px;overflow:visible" width="78.8" height="30"><text x="0" y="21" font-family="Liberation Sans" font-size="24" fill="#e6eaec" textLength="78.8" lengthAdjust="spacingAndGlyphs">SSE..BPM</text></svg></div>
<div class="cl" style="left:1942.1px;top:1282px;width:80.5px;height:30px;background:linear-gradient(#4a5c64 0,#4e6069 14%,#596d75 30%,#596d75 70%,#4e6069 86%,#495a62 100%);border:1px solid #354248;box-shadow:inset 0 1px 0 #64767e"><div style="left:2px;right:2px;top:14px;height:1px;background:#75858c;opacity:0.6"></div><svg style="left:2px;top:7px" width="18" height="15" viewBox="0 0 18 15"><path d="M0 0 Q1.5 6.5 9 7.5 Q1.5 8.5 0 15 Z" fill="#f0f4f2"/><path d="M10.5 2.5 Q11 7 17.5 7.5 Q11 8 10.5 12.5 Q10 8 5.5 7.5 Q10 7 10.5 2.5Z" fill="#f0f4f2"/></svg><svg style="left:25px;top:0px;overflow:visible" width="51.8" height="30"><text x="0" y="21" font-family="Liberation Sans" font-size="24" fill="#e6eaec" textLength="51.8" lengthAdjust="spacingAndGlyphs">SS..M</text></svg></div>
<div style="left:1397.8px;top:1282px;width:4.7px;height:30px;background:#675a80;border-radius:2px"></div>
<div style="left:2260.0px;top:1282px;width:5.0px;height:30px;background:#675a80;border-radius:2px"></div>
<div class="cl" style="left:541.1px;top:1314px;width:107.5px;height:30px;background:linear-gradient(#615f4a 0,#65634e 14%,#716f59 30%,#716f59 70%,#65634e 86%,#5f5d49 100%);border:1px solid #464435;box-shadow:inset 0 1px 0 #7a7864"><div style="left:2px;right:2px;top:14px;height:1px;background:#898775;opacity:0.6"></div><svg style="left:2px;top:7px" width="18" height="15" viewBox="0 0 18 15"><path d="M0 0 Q1.5 6.5 9 7.5 Q1.5 8.5 0 15 Z" fill="#f0f4f2"/><path d="M10.5 2.5 Q11 7 17.5 7.5 Q11 8 10.5 12.5 Q10 8 5.5 7.5 Q10 7 10.5 2.5Z" fill="#f0f4f2"/></svg><svg style="left:25px;top:0px;overflow:visible" width="78.8" height="30"><text x="0" y="21" font-family="Liberation Sans" font-size="24" fill="#e6eaec" textLength="78.8" lengthAdjust="spacingAndGlyphs">SSE..BPM</text></svg></div>
<div class="cl" style="left:648.8px;top:1314px;width:107.5px;height:30px;background:linear-gradient(#615f4a 0,#65634e 14%,#716f59 30%,#716f59 70%,#65634e 86%,#5f5d49 100%);border:1px solid #464435;box-shadow:inset 0 1px 0 #7a7864"><div style="left:2px;right:2px;top:14px;height:1px;background:#898775;opacity:0.6"></div><svg style="left:2px;top:7px" width="18" height="15" viewBox="0 0 18 15"><path d="M0 0 Q1.5 6.5 9 7.5 Q1.5 8.5 0 15 Z" fill="#f0f4f2"/><path d="M10.5 2.5 Q11 7 17.5 7.5 Q11 8 10.5 12.5 Q10 8 5.5 7.5 Q10 7 10.5 2.5Z" fill="#f0f4f2"/></svg><svg style="left:25px;top:0px;overflow:visible" width="78.8" height="30"><text x="0" y="21" font-family="Liberation Sans" font-size="24" fill="#e6eaec" textLength="78.8" lengthAdjust="spacingAndGlyphs">SSE..BPM</text></svg></div>
<div class="cl" style="left:756.6px;top:1314px;width:107.5px;height:30px;background:linear-gradient(#615f4a 0,#65634e 14%,#716f59 30%,#716f59 70%,#65634e 86%,#5f5d49 100%);border:1px solid #464435;box-shadow:inset 0 1px 0 #7a7864"><div style="left:2px;right:2px;top:14px;height:1px;background:#898775;opacity:0.6"></div><svg style="left:2px;top:7px" width="18" height="15" viewBox="0 0 18 15"><path d="M0 0 Q1.5 6.5 9 7.5 Q1.5 8.5 0 15 Z" fill="#f0f4f2"/><path d="M10.5 2.5 Q11 7 17.5 7.5 Q11 8 10.5 12.5 Q10 8 5.5 7.5 Q10 7 10.5 2.5Z" fill="#f0f4f2"/></svg><svg style="left:25px;top:0px;overflow:visible" width="78.8" height="30"><text x="0" y="21" font-family="Liberation Sans" font-size="24" fill="#e6eaec" textLength="78.8" lengthAdjust="spacingAndGlyphs">SS..BPM</text></svg></div>
<div class="cl" style="left:864.4px;top:1314px;width:107.5px;height:30px;background:linear-gradient(#615f4a 0,#65634e 14%,#716f59 30%,#716f59 70%,#65634e 86%,#5f5d49 100%);border:1px solid #464435;box-shadow:inset 0 1px 0 #7a7864"><div style="left:2px;right:2px;top:14px;height:1px;background:#898775;opacity:0.6"></div><svg style="left:2px;top:7px" width="18" height="15" viewBox="0 0 18 15"><path d="M0 0 Q1.5 6.5 9 7.5 Q1.5 8.5 0 15 Z" fill="#f0f4f2"/><path d="M10.5 2.5 Q11 7 17.5 7.5 Q11 8 10.5 12.5 Q10 8 5.5 7.5 Q10 7 10.5 2.5Z" fill="#f0f4f2"/></svg><svg style="left:25px;top:0px;overflow:visible" width="78.8" height="30"><text x="0" y="21" font-family="Liberation Sans" font-size="24" fill="#e6eaec" textLength="78.8" lengthAdjust="spacingAndGlyphs">SSE..BPM</text></svg></div>
<div class="cl" style="left:972.2px;top:1314px;width:107.5px;height:30px;background:linear-gradient(#615f4a 0,#65634e 14%,#716f59 30%,#716f59 70%,#65634e 86%,#5f5d49 100%);border:1px solid #464435;box-shadow:inset 0 1px 0 #7a7864"><div style="left:2px;right:2px;top:14px;height:1px;background:#898775;opacity:0.6"></div><svg style="left:2px;top:7px" width="18" height="15" viewBox="0 0 18 15"><path d="M0 0 Q1.5 6.5 9 7.5 Q1.5 8.5 0 15 Z" fill="#f0f4f2"/><path d="M10.5 2.5 Q11 7 17.5 7.5 Q11 8 10.5 12.5 Q10 8 5.5 7.5 Q10 7 10.5 2.5Z" fill="#f0f4f2"/></svg><svg style="left:25px;top:0px;overflow:visible" width="78.8" height="30"><text x="0" y="21" font-family="Liberation Sans" font-size="24" fill="#e6eaec" textLength="78.8" lengthAdjust="spacingAndGlyphs">SSE..BPM</text></svg></div>
<div class="cl" style="left:1079.9px;top:1314px;width:80.5px;height:30px;background:linear-gradient(#615f4a 0,#65634e 14%,#716f59 30%,#716f59 70%,#65634e 86%,#5f5d49 100%);border:1px solid #464435;box-shadow:inset 0 1px 0 #7a7864"><div style="left:2px;right:2px;top:14px;height:1px;background:#898775;opacity:0.6"></div><svg style="left:2px;top:7px" width="18" height="15" viewBox="0 0 18 15"><path d="M0 0 Q1.5 6.5 9 7.5 Q1.5 8.5 0 15 Z" fill="#f0f4f2"/><path d="M10.5 2.5 Q11 7 17.5 7.5 Q11 8 10.5 12.5 Q10 8 5.5 7.5 Q10 7 10.5 2.5Z" fill="#f0f4f2"/></svg><svg style="left:25px;top:0px;overflow:visible" width="51.8" height="30"><text x="0" y="21" font-family="Liberation Sans" font-size="24" fill="#e6eaec" textLength="51.8" lengthAdjust="spacingAndGlyphs">S..PM</text></svg></div>
<div class="cl" style="left:1403.3px;top:1314px;width:107.5px;height:30px;background:linear-gradient(#615f4a 0,#65634e 14%,#716f59 30%,#716f59 70%,#65634e 86%,#5f5d49 100%);border:1px solid #464435;box-shadow:inset 0 1px 0 #7a7864"><div style="left:2px;right:2px;top:14px;height:1px;background:#898775;opacity:0.6"></div><svg style="left:2px;top:7px" width="18" height="15" viewBox="0 0 18 15"><path d="M0 0 Q1.5 6.5 9 7.5 Q1.5 8.5 0 15 Z" fill="#f0f4f2"/><path d="M10.5 2.5 Q11 7 17.5 7.5 Q11 8 10.5 12.5 Q10 8 5.5 7.5 Q10 7 10.5 2.5Z" fill="#f0f4f2"/></svg><svg style="left:25px;top:0px;overflow:visible" width="78.8" height="30"><text x="0" y="21" font-family="Liberation Sans" font-size="24" fill="#e6eaec" textLength="78.8" lengthAdjust="spacingAndGlyphs">SSE..BPM</text></svg></div>
<div class="cl" style="left:1511.0px;top:1314px;width:107.5px;height:30px;background:linear-gradient(#615f4a 0,#65634e 14%,#716f59 30%,#716f59 70%,#65634e 86%,#5f5d49 100%);border:1px solid #464435;box-shadow:inset 0 1px 0 #7a7864"><div style="left:2px;right:2px;top:14px;height:1px;background:#898775;opacity:0.6"></div><svg style="left:2px;top:7px" width="18" height="15" viewBox="0 0 18 15"><path d="M0 0 Q1.5 6.5 9 7.5 Q1.5 8.5 0 15 Z" fill="#f0f4f2"/><path d="M10.5 2.5 Q11 7 17.5 7.5 Q11 8 10.5 12.5 Q10 8 5.5 7.5 Q10 7 10.5 2.5Z" fill="#f0f4f2"/></svg><svg style="left:25px;top:0px;overflow:visible" width="78.8" height="30"><text x="0" y="21" font-family="Liberation Sans" font-size="24" fill="#e6eaec" textLength="78.8" lengthAdjust="spacingAndGlyphs">SSE..BPM</text></svg></div>
<div class="cl" style="left:1618.8px;top:1314px;width:107.5px;height:30px;background:linear-gradient(#615f4a 0,#65634e 14%,#716f59 30%,#716f59 70%,#65634e 86%,#5f5d49 100%);border:1px solid #464435;box-shadow:inset 0 1px 0 #7a7864"><div style="left:2px;right:2px;top:14px;height:1px;background:#898775;opacity:0.6"></div><svg style="left:2px;top:7px" width="18" height="15" viewBox="0 0 18 15"><path d="M0 0 Q1.5 6.5 9 7.5 Q1.5 8.5 0 15 Z" fill="#f0f4f2"/><path d="M10.5 2.5 Q11 7 17.5 7.5 Q11 8 10.5 12.5 Q10 8 5.5 7.5 Q10 7 10.5 2.5Z" fill="#f0f4f2"/></svg><svg style="left:25px;top:0px;overflow:visible" width="78.8" height="30"><text x="0" y="21" font-family="Liberation Sans" font-size="24" fill="#e6eaec" textLength="78.8" lengthAdjust="spacingAndGlyphs">SSE..BPM</text></svg></div>
<div class="cl" style="left:1726.6px;top:1314px;width:107.5px;height:30px;background:linear-gradient(#615f4a 0,#65634e 14%,#716f59 30%,#716f59 70%,#65634e 86%,#5f5d49 100%);border:1px solid #464435;box-shadow:inset 0 1px 0 #7a7864"><div style="left:2px;right:2px;top:14px;height:1px;background:#898775;opacity:0.6"></div><svg style="left:2px;top:7px" width="18" height="15" viewBox="0 0 18 15"><path d="M0 0 Q1.5 6.5 9 7.5 Q1.5 8.5 0 15 Z" fill="#f0f4f2"/><path d="M10.5 2.5 Q11 7 17.5 7.5 Q11 8 10.5 12.5 Q10 8 5.5 7.5 Q10 7 10.5 2.5Z" fill="#f0f4f2"/></svg><svg style="left:25px;top:0px;overflow:visible" width="78.8" height="30"><text x="0" y="21" font-family="Liberation Sans" font-size="24" fill="#e6eaec" textLength="78.8" lengthAdjust="spacingAndGlyphs">SS..BPM</text></svg></div>
<div class="cl" style="left:1834.4px;top:1314px;width:107.5px;height:30px;background:linear-gradient(#615f4a 0,#65634e 14%,#716f59 30%,#716f59 70%,#65634e 86%,#5f5d49 100%);border:1px solid #464435;box-shadow:inset 0 1px 0 #7a7864"><div style="left:2px;right:2px;top:14px;height:1px;background:#898775;opacity:0.6"></div><svg style="left:2px;top:7px" width="18" height="15" viewBox="0 0 18 15"><path d="M0 0 Q1.5 6.5 9 7.5 Q1.5 8.5 0 15 Z" fill="#f0f4f2"/><path d="M10.5 2.5 Q11 7 17.5 7.5 Q11 8 10.5 12.5 Q10 8 5.5 7.5 Q10 7 10.5 2.5Z" fill="#f0f4f2"/></svg><svg style="left:25px;top:0px;overflow:visible" width="78.8" height="30"><text x="0" y="21" font-family="Liberation Sans" font-size="24" fill="#e6eaec" textLength="78.8" lengthAdjust="spacingAndGlyphs">SSE..BPM</text></svg></div>
<div class="cl" style="left:1942.1px;top:1314px;width:80.5px;height:30px;background:linear-gradient(#615f4a 0,#65634e 14%,#716f59 30%,#716f59 70%,#65634e 86%,#5f5d49 100%);border:1px solid #464435;box-shadow:inset 0 1px 0 #7a7864"><div style="left:2px;right:2px;top:14px;height:1px;background:#898775;opacity:0.6"></div><svg style="left:2px;top:7px" width="18" height="15" viewBox="0 0 18 15"><path d="M0 0 Q1.5 6.5 9 7.5 Q1.5 8.5 0 15 Z" fill="#f0f4f2"/><path d="M10.5 2.5 Q11 7 17.5 7.5 Q11 8 10.5 12.5 Q10 8 5.5 7.5 Q10 7 10.5 2.5Z" fill="#f0f4f2"/></svg><svg style="left:25px;top:0px;overflow:visible" width="51.8" height="30"><text x="0" y="21" font-family="Liberation Sans" font-size="24" fill="#e6eaec" textLength="51.8" lengthAdjust="spacingAndGlyphs">S..PM</text></svg></div>
<div class="cl" style="left:2265.5px;top:1314px;width:107.5px;height:30px;background:linear-gradient(#615f4a 0,#65634e 14%,#716f59 30%,#716f59 70%,#65634e 86%,#5f5d49 100%);border:1px solid #464435;box-shadow:inset 0 1px 0 #7a7864"><div style="left:2px;right:2px;top:14px;height:1px;background:#898775;opacity:0.6"></div><svg style="left:2px;top:7px" width="18" height="15" viewBox="0 0 18 15"><path d="M0 0 Q1.5 6.5 9 7.5 Q1.5 8.5 0 15 Z" fill="#f0f4f2"/><path d="M10.5 2.5 Q11 7 17.5 7.5 Q11 8 10.5 12.5 Q10 8 5.5 7.5 Q10 7 10.5 2.5Z" fill="#f0f4f2"/></svg><svg style="left:25px;top:0px;overflow:visible" width="78.8" height="30"><text x="0" y="21" font-family="Liberation Sans" font-size="24" fill="#e6eaec" textLength="78.8" lengthAdjust="spacingAndGlyphs">SSE..BPM</text></svg></div>
<div class="cl" style="left:2373.3px;top:1314px;width:107.5px;height:30px;background:linear-gradient(#615f4a 0,#65634e 14%,#716f59 30%,#716f59 70%,#65634e 86%,#5f5d49 100%);border:1px solid #464435;box-shadow:inset 0 1px 0 #7a7864"><div style="left:2px;right:2px;top:14px;height:1px;background:#898775;opacity:0.6"></div><svg style="left:2px;top:7px" width="18" height="15" viewBox="0 0 18 15"><path d="M0 0 Q1.5 6.5 9 7.5 Q1.5 8.5 0 15 Z" fill="#f0f4f2"/><path d="M10.5 2.5 Q11 7 17.5 7.5 Q11 8 10.5 12.5 Q10 8 5.5 7.5 Q10 7 10.5 2.5Z" fill="#f0f4f2"/></svg><svg style="left:25px;top:0px;overflow:visible" width="78.8" height="30"><text x="0" y="21" font-family="Liberation Sans" font-size="24" fill="#e6eaec" textLength="78.8" lengthAdjust="spacingAndGlyphs">SSE..BPM</text></svg></div>
<div class="cl" style="left:2481.0px;top:1314px;width:107.5px;height:30px;background:linear-gradient(#615f4a 0,#65634e 14%,#716f59 30%,#716f59 70%,#65634e 86%,#5f5d49 100%);border:1px solid #464435;box-shadow:inset 0 1px 0 #7a7864"><div style="left:2px;right:2px;top:14px;height:1px;background:#898775;opacity:0.6"></div><svg style="left:2px;top:7px" width="18" height="15" viewBox="0 0 18 15"><path d="M0 0 Q1.5 6.5 9 7.5 Q1.5 8.5 0 15 Z" fill="#f0f4f2"/><path d="M10.5 2.5 Q11 7 17.5 7.5 Q11 8 10.5 12.5 Q10 8 5.5 7.5 Q10 7 10.5 2.5Z" fill="#f0f4f2"/></svg><svg style="left:25px;top:0px;overflow:visible" width="78.8" height="30"><text x="0" y="21" font-family="Liberation Sans" font-size="24" fill="#e6eaec" textLength="78.8" lengthAdjust="spacingAndGlyphs">SSE..BPM</text></svg></div>
<div class="cl" style="left:2588.8px;top:1314px;width:107.5px;height:30px;background:linear-gradient(#615f4a 0,#65634e 14%,#716f59 30%,#716f59 70%,#65634e 86%,#5f5d49 100%);border:1px solid #464435;box-shadow:inset 0 1px 0 #7a7864"><div style="left:2px;right:2px;top:14px;height:1px;background:#898775;opacity:0.6"></div><svg style="left:2px;top:7px" width="18" height="15" viewBox="0 0 18 15"><path d="M0 0 Q1.5 6.5 9 7.5 Q1.5 8.5 0 15 Z" fill="#f0f4f2"/><path d="M10.5 2.5 Q11 7 17.5 7.5 Q11 8 10.5 12.5 Q10 8 5.5 7.5 Q10 7 10.5 2.5Z" fill="#f0f4f2"/></svg><svg style="left:25px;top:0px;overflow:visible" width="78.8" height="30"><text x="0" y="21" font-family="Liberation Sans" font-size="24" fill="#e6eaec" textLength="78.8" lengthAdjust="spacingAndGlyphs">SSE..BPM</text></svg></div>
<div class="cl" style="left:2696.6px;top:1314px;width:106.1px;height:30px;background:linear-gradient(#615f4a 0,#65634e 14%,#716f59 30%,#716f59 70%,#65634e 86%,#5f5d49 100%);border:1px solid #464435;box-shadow:inset 0 1px 0 #7a7864"><div style="left:2px;right:2px;top:14px;height:1px;background:#898775;opacity:0.6"></div><svg style="left:2px;top:7px" width="18" height="15" viewBox="0 0 18 15"><path d="M0 0 Q1.5 6.5 9 7.5 Q1.5 8.5 0 15 Z" fill="#f0f4f2"/><path d="M10.5 2.5 Q11 7 17.5 7.5 Q11 8 10.5 12.5 Q10 8 5.5 7.5 Q10 7 10.5 2.5Z" fill="#f0f4f2"/></svg><svg style="left:25px;top:0px;overflow:visible" width="77.4" height="30"><text x="0" y="21" font-family="Liberation Sans" font-size="24" fill="#e6eaec" textLength="77.4" lengthAdjust="spacingAndGlyphs">SS..BPM</text></svg></div>
<div class="cl" style="left:554.3px;top:1346px;width:46.4px;height:30px;background:linear-gradient(#6c5b4f 0,#705f52 14%,#7d6c5e 30%,#7d6c5e 70%,#705f52 86%,#69594d 100%);border:1px solid #4e4239;box-shadow:inset 0 1px 0 #857568"><div style="left:2px;right:2px;top:14px;height:1px;background:#938479;opacity:0.6"></div><svg style="left:2px;top:7px" width="18" height="15" viewBox="0 0 18 15"><path d="M0 0 Q1.5 6.5 9 7.5 Q1.5 8.5 0 15 Z" fill="#f0f4f2"/><path d="M10.5 2.5 Q11 7 17.5 7.5 Q11 8 10.5 12.5 Q10 8 5.5 7.5 Q10 7 10.5 2.5Z" fill="#f0f4f2"/></svg><svg style="left:27px;top:0px;overflow:visible" width="30" height="30"><text x="0" y="21" font-family="Liberation Sans" font-size="24" fill="#aeb3b5" letter-spacing="4">..</text></svg></div>
<div class="cl" style="left:640.6px;top:1346px;width:35.6px;height:30px;background:linear-gradient(#51695a 0,#556d5e 14%,#617a6b 30%,#617a6b 70%,#556d5e 86%,#506658 100%);border:1px solid #3b4c41;box-shadow:inset 0 1px 0 #6b8274"><div style="left:2px;right:2px;top:14px;height:1px;background:#7b9083;opacity:0.6"></div><svg style="left:2px;top:7px" width="18" height="15" viewBox="0 0 18 15"><path d="M0 0 Q1.5 6.5 9 7.5 Q1.5 8.5 0 15 Z" fill="#f0f4f2"/><path d="M10.5 2.5 Q11 7 17.5 7.5 Q11 8 10.5 12.5 Q10 8 5.5 7.5 Q10 7 10.5 2.5Z" fill="#f0f4f2"/></svg><svg style="left:27px;top:0px;overflow:visible" width="30" height="30"><text x="0" y="21" font-family="Liberation Sans" font-size="24" fill="#aeb3b5" letter-spacing="4">.</text></svg></div>
<div class="cl" style="left:676.5px;top:1346px;width:69.4px;height:30px;background:linear-gradient(#51695a 0,#556d5e 14%,#617a6b 30%,#617a6b 70%,#556d5e 86%,#506658 100%);border:1px solid #3b4c41;box-shadow:inset 0 1px 0 #6b8274"><div style="left:2px;right:2px;top:14px;height:1px;background:#7b9083;opacity:0.6"></div><svg style="left:2px;top:7px" width="18" height="15" viewBox="0 0 18 15"><path d="M0 0 Q1.5 6.5 9 7.5 Q1.5 8.5 0 15 Z" fill="#f0f4f2"/><path d="M10.5 2.5 Q11 7 17.5 7.5 Q11 8 10.5 12.5 Q10 8 5.5 7.5 Q10 7 10.5 2.5Z" fill="#f0f4f2"/></svg><svg style="left:25px;top:0px;overflow:visible" width="40.7" height="30"><text x="0" y="21" font-family="Liberation Sans" font-size="24" fill="#e6eaec" textLength="40.7" lengthAdjust="spacingAndGlyphs">M..8</text></svg></div>
<div class="cl" style="left:856.5px;top:1346px;width:34.2px;height:30px;background:linear-gradient(#51695a 0,#556d5e 14%,#617a6b 30%,#617a6b 70%,#556d5e 86%,#506658 100%);border:1px solid #3b4c41;box-shadow:inset 0 1px 0 #6b8274"><div style="left:2px;right:2px;top:14px;height:1px;background:#7b9083;opacity:0.6"></div><svg style="left:2px;top:7px" width="18" height="15" viewBox="0 0 18 15"><path d="M0 0 Q1.5 6.5 9 7.5 Q1.5 8.5 0 15 Z" fill="#f0f4f2"/><path d="M10.5 2.5 Q11 7 17.5 7.5 Q11 8 10.5 12.5 Q10 8 5.5 7.5 Q10 7 10.5 2.5Z" fill="#f0f4f2"/></svg><svg style="left:27px;top:0px;overflow:visible" width="30" height="30"><text x="0" y="21" font-family="Liberation Sans" font-size="24" fill="#aeb3b5" letter-spacing="4">.</text></svg></div>
<div class="cl" style="left:891.0px;top:1346px;width:68.7px;height:30px;background:linear-gradient(#51695a 0,#556d5e 14%,#617a6b 30%,#617a6b 70%,#556d5e 86%,#506658 100%);border:1px solid #3b4c41;box-shadow:inset 0 1px 0 #6b8274"><div style="left:2px;right:2px;top:14px;height:1px;background:#7b9083;opacity:0.6"></div><svg style="left:2px;top:7px" width="18" height="15" viewBox="0 0 18 15"><path d="M0 0 Q1.5 6.5 9 7.5 Q1.5 8.5 0 15 Z" fill="#f0f4f2"/><path d="M10.5 2.5 Q11 7 17.5 7.5 Q11 8 10.5 12.5 Q10 8 5.5 7.5 Q10 7 10.5 2.5Z" fill="#f0f4f2"/></svg><svg style="left:25px;top:0px;overflow:visible" width="40.0" height="30"><text x="0" y="21" font-family="Liberation Sans" font-size="24" fill="#e6eaec" textLength="40.0" lengthAdjust="spacingAndGlyphs">M..8</text></svg></div>
<div class="cl" style="left:960.0px;top:1346px;width:37.7px;height:30px;background:linear-gradient(#4f6a6a 0,#526e6e 14%,#5e7b7b 30%,#5e7b7b 70%,#526e6e 86%,#4d6767 100%);border:1px solid #394c4c;box-shadow:inset 0 1px 0 #688383"><div style="left:2px;right:2px;top:14px;height:1px;background:#799191;opacity:0.6"></div><svg style="left:2px;top:7px" width="18" height="15" viewBox="0 0 18 15"><path d="M0 0 Q1.5 6.5 9 7.5 Q1.5 8.5 0 15 Z" fill="#f0f4f2"/><path d="M10.5 2.5 Q11 7 17.5 7.5 Q11 8 10.5 12.5 Q10 8 5.5 7.5 Q10 7 10.5 2.5Z" fill="#f0f4f2"/></svg></div>
<div class="cl" style="left:1201.7px;top:1346px;width:46.4px;height:30px;background:linear-gradient(#6c5b4f 0,#705f52 14%,#7d6c5e 30%,#7d6c5e 70%,#705f52 86%,#69594d 100%);border:1px solid #4e4239;box-shadow:inset 0 1px 0 #857568"><div style="left:2px;right:2px;top:14px;height:1px;background:#938479;opacity:0.6"></div><svg style="left:2px;top:7px" width="18" height="15" viewBox="0 0 18 15"><path d="M0 0 Q1.5 6.5 9 7.5 Q1.5 8.5 0 15 Z" fill="#f0f4f2"/><path d="M10.5 2.5 Q11 7 17.5 7.5 Q11 8 10.5 12.5 Q10 8 5.5 7.5 Q10 7 10.5 2.5Z" fill="#f0f4f2"/></svg><svg style="left:27px;top:0px;overflow:visible" width="30" height="30"><text x="0" y="21" font-family="Liberation Sans" font-size="24" fill="#aeb3b5" letter-spacing="4">..</text></svg></div>
<div class="cl" style="left:1287.5px;top:1346px;width:34.2px;height:30px;background:linear-gradient(#51695a 0,#556d5e 14%,#617a6b 30%,#617a6b 70%,#556d5e 86%,#506658 100%);border:1px solid #3b4c41;box-shadow:inset 0 1px 0 #6b8274"><div style="left:2px;right:2px;top:14px;height:1px;background:#7b9083;opacity:0.6"></div><svg style="left:2px;top:7px" width="18" height="15" viewBox="0 0 18 15"><path d="M0 0 Q1.5 6.5 9 7.5 Q1.5 8.5 0 15 Z" fill="#f0f4f2"/><path d="M10.5 2.5 Q11 7 17.5 7.5 Q11 8 10.5 12.5 Q10 8 5.5 7.5 Q10 7 10.5 2.5Z" fill="#f0f4f2"/></svg><svg style="left:27px;top:0px;overflow:visible" width="30" height="30"><text x="0" y="21" font-family="Liberation Sans" font-size="24" fill="#aeb3b5" letter-spacing="4">.</text></svg></div>
<div class="cl" style="left:1322.0px;top:1346px;width:70.7px;height:30px;background:linear-gradient(#51695a 0,#556d5e 14%,#617a6b 30%,#617a6b 70%,#556d5e 86%,#506658 100%);border:1px solid #3b4c41;box-shadow:inset 0 1px 0 #6b8274"><div style="left:2px;right:2px;top:14px;height:1px;background:#7b9083;opacity:0.6"></div><svg style="left:2px;top:7px" width="18" height="15" viewBox="0 0 18 15"><path d="M0 0 Q1.5 6.5 9 7.5 Q1.5 8.5 0 15 Z" fill="#f0f4f2"/><path d="M10.5 2.5 Q11 7 17.5 7.5 Q11 8 10.5 12.5 Q10 8 5.5 7.5 Q10 7 10.5 2.5Z" fill="#f0f4f2"/></svg><svg style="left:25px;top:0px;overflow:visible" width="42.0" height="30"><text x="0" y="21" font-family="Liberation Sans" font-size="24" fill="#e6eaec" textLength="42.0" lengthAdjust="spacingAndGlyphs">M..8</text></svg></div>
<div class="cl" style="left:1822.0px;top:1346px;width:38.2px;height:30px;background:linear-gradient(#4f6a6a 0,#526e6e 14%,#5e7b7b 30%,#5e7b7b 70%,#526e6e 86%,#4d6767 100%);border:1px solid #394c4c;box-shadow:inset 0 1px 0 #688383"><div style="left:2px;right:2px;top:14px;height:1px;background:#799191;opacity:0.6"></div><svg style="left:2px;top:7px" width="18" height="15" viewBox="0 0 18 15"><path d="M0 0 Q1.5 6.5 9 7.5 Q1.5 8.5 0 15 Z" fill="#f0f4f2"/><path d="M10.5 2.5 Q11 7 17.5 7.5 Q11 8 10.5 12.5 Q10 8 5.5 7.5 Q10 7 10.5 2.5Z" fill="#f0f4f2"/></svg></div>
<div class="cl" style="left:2064.0px;top:1346px;width:45.7px;height:30px;background:linear-gradient(#6c5b4f 0,#705f52 14%,#7d6c5e 30%,#7d6c5e 70%,#705f52 86%,#69594d 100%);border:1px solid #4e4239;box-shadow:inset 0 1px 0 #857568"><div style="left:2px;right:2px;top:14px;height:1px;background:#938479;opacity:0.6"></div><svg style="left:2px;top:7px" width="18" height="15" viewBox="0 0 18 15"><path d="M0 0 Q1.5 6.5 9 7.5 Q1.5 8.5 0 15 Z" fill="#f0f4f2"/><path d="M10.5 2.5 Q11 7 17.5 7.5 Q11 8 10.5 12.5 Q10 8 5.5 7.5 Q10 7 10.5 2.5Z" fill="#f0f4f2"/></svg><svg style="left:27px;top:0px;overflow:visible" width="30" height="30"><text x="0" y="21" font-family="Liberation Sans" font-size="24" fill="#aeb3b5" letter-spacing="4">..</text></svg></div>
<div class="cl" style="left:2150.0px;top:1346px;width:34.7px;height:30px;background:linear-gradient(#51695a 0,#556d5e 14%,#617a6b 30%,#617a6b 70%,#556d5e 86%,#506658 100%);border:1px solid #3b4c41;box-shadow:inset 0 1px 0 #6b8274"><div style="left:2px;right:2px;top:14px;height:1px;background:#7b9083;opacity:0.6"></div><svg style="left:2px;top:7px" width="18" height="15" viewBox="0 0 18 15"><path d="M0 0 Q1.5 6.5 9 7.5 Q1.5 8.5 0 15 Z" fill="#f0f4f2"/><path d="M10.5 2.5 Q11 7 17.5 7.5 Q11 8 10.5 12.5 Q10 8 5.5 7.5 Q10 7 10.5 2.5Z" fill="#f0f4f2"/></svg><svg style="left:27px;top:0px;overflow:visible" width="30" height="30"><text x="0" y="21" font-family="Liberation Sans" font-size="24" fill="#aeb3b5" letter-spacing="4">.</text></svg></div>
<div class="cl" style="left:2185.0px;top:1346px;width:69.7px;height:30px;background:linear-gradient(#51695a 0,#556d5e 14%,#617a6b 30%,#617a6b 70%,#556d5e 86%,#506658 100%);border:1px solid #3b4c41;box-shadow:inset 0 1px 0 #6b8274"><div style="left:2px;right:2px;top:14px;height:1px;background:#7b9083;opacity:0.6"></div><svg style="left:2px;top:7px" width="18" height="15" viewBox="0 0 18 15"><path d="M0 0 Q1.5 6.5 9 7.5 Q1.5 8.5 0 15 Z" fill="#f0f4f2"/><path d="M10.5 2.5 Q11 7 17.5 7.5 Q11 8 10.5 12.5 Q10 8 5.5 7.5 Q10 7 10.5 2.5Z" fill="#f0f4f2"/></svg><svg style="left:25px;top:0px;overflow:visible" width="41.0" height="30"><text x="0" y="21" font-family="Liberation Sans" font-size="24" fill="#e6eaec" textLength="41.0" lengthAdjust="spacingAndGlyphs">M..8</text></svg></div>
<div class="cl" style="left:568.4px;top:1378px;width:26.9px;height:30px;background:linear-gradient(#51695a 0,#556d5e 14%,#617a6b 30%,#617a6b 70%,#556d5e 86%,#506658 100%);border:1px solid #3b4c41;box-shadow:inset 0 1px 0 #6b8274"><div style="left:2px;right:2px;top:14px;height:1px;background:#7b9083;opacity:0.6"></div><svg style="left:2px;top:7px" width="18" height="15" viewBox="0 0 18 15"><path d="M0 0 Q1.5 6.5 9 7.5 Q1.5 8.5 0 15 Z" fill="#f0f4f2"/><path d="M10.5 2.5 Q11 7 17.5 7.5 Q11 8 10.5 12.5 Q10 8 5.5 7.5 Q10 7 10.5 2.5Z" fill="#f0f4f2"/></svg></div>
<div class="cl" style="left:595.6px;top:1378px;width:64.1px;height:30px;background:linear-gradient(#51695a 0,#556d5e 14%,#617a6b 30%,#617a6b 70%,#556d5e 86%,#506658 100%);border:1px solid #3b4c41;box-shadow:inset 0 1px 0 #6b8274"><div style="left:2px;right:2px;top:14px;height:1px;background:#7b9083;opacity:0.6"></div><svg style="left:2px;top:7px" width="18" height="15" viewBox="0 0 18 15"><path d="M0 0 Q1.5 6.5 9 7.5 Q1.5 8.5 0 15 Z" fill="#f0f4f2"/><path d="M10.5 2.5 Q11 7 17.5 7.5 Q11 8 10.5 12.5 Q10 8 5.5 7.5 Q10 7 10.5 2.5Z" fill="#f0f4f2"/></svg><svg style="left:25px;top:0px;overflow:visible" width="35.4" height="30"><text x="0" y="21" font-family="Liberation Sans" font-size="24" fill="#e6eaec" textLength="35.4" lengthAdjust="spacingAndGlyphs">M..1</text></svg></div>
<div class="cl" style="left:676.5px;top:1378px;width:79.6px;height:30px;background:linear-gradient(#6a5151 0,#6e5555 14%,#7b6161 30%,#7b6161 70%,#6e5555 86%,#675050 100%);border:1px solid #4c3b3b;box-shadow:inset 0 1px 0 #836b6b"><div style="left:2px;right:2px;top:14px;height:1px;background:#917b7b;opacity:0.6"></div><svg style="left:2px;top:7px" width="18" height="15" viewBox="0 0 18 15"><path d="M0 0 Q1.5 6.5 9 7.5 Q1.5 8.5 0 15 Z" fill="#f0f4f2"/><path d="M10.5 2.5 Q11 7 17.5 7.5 Q11 8 10.5 12.5 Q10 8 5.5 7.5 Q10 7 10.5 2.5Z" fill="#f0f4f2"/></svg><svg style="left:25px;top:0px;overflow:visible" width="50.9" height="30"><text x="0" y="21" font-family="Liberation Sans" font-size="24" fill="#e6eaec" textLength="50.9" lengthAdjust="spacingAndGlyphs">SS..M</text></svg></div>
<div class="cl" style="left:784.6px;top:1378px;width:26.7px;height:30px;background:linear-gradient(#51695a 0,#556d5e 14%,#617a6b 30%,#617a6b 70%,#556d5e 86%,#506658 100%);border:1px solid #3b4c41;box-shadow:inset 0 1px 0 #6b8274"><div style="left:2px;right:2px;top:14px;height:1px;background:#7b9083;opacity:0.6"></div><svg style="left:2px;top:7px" width="18" height="15" viewBox="0 0 18 15"><path d="M0 0 Q1.5 6.5 9 7.5 Q1.5 8.5 0 15 Z" fill="#f0f4f2"/><path d="M10.5 2.5 Q11 7 17.5 7.5 Q11 8 10.5 12.5 Q10 8 5.5 7.5 Q10 7 10.5 2.5Z" fill="#f0f4f2"/></svg></div>
<div class="cl" style="left:811.6px;top:1378px;width:63.1px;height:30px;background:linear-gradient(#51695a 0,#556d5e 14%,#617a6b 30%,#617a6b 70%,#556d5e 86%,#506658 100%);border:1px solid #3b4c41;box-shadow:inset 0 1px 0 #6b8274"><div style="left:2px;right:2px;top:14px;height:1px;background:#7b9083;opacity:0.6"></div><svg style="left:2px;top:7px" width="18" height="15" viewBox="0 0 18 15"><path d="M0 0 Q1.5 6.5 9 7.5 Q1.5 8.5 0 15 Z" fill="#f0f4f2"/><path d="M10.5 2.5 Q11 7 17.5 7.5 Q11 8 10.5 12.5 Q10 8 5.5 7.5 Q10 7 10.5 2.5Z" fill="#f0f4f2"/></svg><svg style="left:25px;top:0px;overflow:visible" width="34.4" height="30"><text x="0" y="21" font-family="Liberation Sans" font-size="24" fill="#e6eaec" textLength="34.4" lengthAdjust="spacingAndGlyphs">M..1</text></svg></div>
<div class="cl" style="left:891.5px;top:1378px;width:79.7px;height:30px;background:linear-gradient(#6a5151 0,#6e5555 14%,#7b6161 30%,#7b6161 70%,#6e5555 86%,#675050 100%);border:1px solid #4c3b3b;box-shadow:inset 0 1px 0 #836b6b"><div style="left:2px;right:2px;top:14px;height:1px;background:#917b7b;opacity:0.6"></div><svg style="left:2px;top:7px" width="18" height="15" viewBox="0 0 18 15"><path d="M0 0 Q1.5 6.5 9 7.5 Q1.5 8.5 0 15 Z" fill="#f0f4f2"/><path d="M10.5 2.5 Q11 7 17.5 7.5 Q11 8 10.5 12.5 Q10 8 5.5 7.5 Q10 7 10.5 2.5Z" fill="#f0f4f2"/></svg><svg style="left:25px;top:0px;overflow:visible" width="51.0" height="30"><text x="0" y="21" font-family="Liberation Sans" font-size="24" fill="#e6eaec" textLength="51.0" lengthAdjust="spacingAndGlyphs">SS..M</text></svg></div>
<div class="cl" style="left:972.0px;top:1378px;width:70.7px;height:30px;background:linear-gradient(#51695a 0,#556d5e 14%,#617a6b 30%,#617a6b 70%,#556d5e 86%,#506658 100%);border:1px solid #3b4c41;box-shadow:inset 0 1px 0 #6b8274"><div style="left:2px;right:2px;top:14px;height:1px;background:#7b9083;opacity:0.6"></div><svg style="left:2px;top:7px" width="18" height="15" viewBox="0 0 18 15"><path d="M0 0 Q1.5 6.5 9 7.5 Q1.5 8.5 0 15 Z" fill="#f0f4f2"/><path d="M10.5 2.5 Q11 7 17.5 7.5 Q11 8 10.5 12.5 Q10 8 5.5 7.5 Q10 7 10.5 2.5Z" fill="#f0f4f2"/></svg><svg style="left:25px;top:0px;overflow:visible" width="42.0" height="30"><text x="0" y="21" font-family="Liberation Sans" font-size="24" fill="#e6eaec" textLength="42.0" lengthAdjust="spacingAndGlyphs">M..8</text></svg></div>
<div class="cl" style="left:1215.8px;top:1378px;width:25.9px;height:30px;background:linear-gradient(#51695a 0,#556d5e 14%,#617a6b 30%,#617a6b 70%,#556d5e 86%,#506658 100%);border:1px solid #3b4c41;box-shadow:inset 0 1px 0 #6b8274"><div style="left:2px;right:2px;top:14px;height:1px;background:#7b9083;opacity:0.6"></div><svg style="left:2px;top:7px" width="18" height="15" viewBox="0 0 18 15"><path d="M0 0 Q1.5 6.5 9 7.5 Q1.5 8.5 0 15 Z" fill="#f0f4f2"/><path d="M10.5 2.5 Q11 7 17.5 7.5 Q11 8 10.5 12.5 Q10 8 5.5 7.5 Q10 7 10.5 2.5Z" fill="#f0f4f2"/></svg></div>
<div class="cl" style="left:1242.0px;top:1378px;width:63.7px;height:30px;background:linear-gradient(#51695a 0,#556d5e 14%,#617a6b 30%,#617a6b 70%,#556d5e 86%,#506658 100%);border:1px solid #3b4c41;box-shadow:inset 0 1px 0 #6b8274"><div style="left:2px;right:2px;top:14px;height:1px;background:#7b9083;opacity:0.6"></div><svg style="left:2px;top:7px" width="18" height="15" viewBox="0 0 18 15"><path d="M0 0 Q1.5 6.5 9 7.5 Q1.5 8.5 0 15 Z" fill="#f0f4f2"/><path d="M10.5 2.5 Q11 7 17.5 7.5 Q11 8 10.5 12.5 Q10 8 5.5 7.5 Q10 7 10.5 2.5Z" fill="#f0f4f2"/></svg><svg style="left:25px;top:0px;overflow:visible" width="35.0" height="30"><text x="0" y="21" font-family="Liberation Sans" font-size="24" fill="#e6eaec" textLength="35.0" lengthAdjust="spacingAndGlyphs">M..</text></svg></div>
<div class="cl" style="left:1322.5px;top:1378px;width:79.7px;height:30px;background:linear-gradient(#6a5151 0,#6e5555 14%,#7b6161 30%,#7b6161 70%,#6e5555 86%,#675050 100%);border:1px solid #4c3b3b;box-shadow:inset 0 1px 0 #836b6b"><div style="left:2px;right:2px;top:14px;height:1px;background:#917b7b;opacity:0.6"></div><svg style="left:2px;top:7px" width="18" height="15" viewBox="0 0 18 15"><path d="M0 0 Q1.5 6.5 9 7.5 Q1.5 8.5 0 15 Z" fill="#f0f4f2"/><path d="M10.5 2.5 Q11 7 17.5 7.5 Q11 8 10.5 12.5 Q10 8 5.5 7.5 Q10 7 10.5 2.5Z" fill="#f0f4f2"/></svg><svg style="left:25px;top:0px;overflow:visible" width="51.0" height="30"><text x="0" y="21" font-family="Liberation Sans" font-size="24" fill="#e6eaec" textLength="51.0" lengthAdjust="spacingAndGlyphs">SS..M</text></svg></div>
<div class="cl" style="left:1592.7px;top:1378px;width:79.7px;height:30px;background:linear-gradient(#6a5151 0,#6e5555 14%,#7b6161 30%,#7b6161 70%,#6e5555 86%,#675050 100%);border:1px solid #4c3b3b;box-shadow:inset 0 1px 0 #836b6b"><div style="left:2px;right:2px;top:14px;height:1px;background:#917b7b;opacity:0.6"></div><svg style="left:2px;top:7px" width="18" height="15" viewBox="0 0 18 15"><path d="M0 0 Q1.5 6.5 9 7.5 Q1.5 8.5 0 15 Z" fill="#f0f4f2"/><path d="M10.5 2.5 Q11 7 17.5 7.5 Q11 8 10.5 12.5 Q10 8 5.5 7.5 Q10 7 10.5 2.5Z" fill="#f0f4f2"/></svg><svg style="left:25px;top:0px;overflow:visible" width="51.0" height="30"><text x="0" y="21" font-family="Liberation Sans" font-size="24" fill="#e6eaec" textLength="51.0" lengthAdjust="spacingAndGlyphs">SS..M</text></svg></div>
<div class="cl" style="left:1835.0px;top:1378px;width:69.4px;height:30px;background:linear-gradient(#51695a 0,#556d5e 14%,#617a6b 30%,#617a6b 70%,#556d5e 86%,#506658 100%);border:1px solid #3b4c41;box-shadow:inset 0 1px 0 #6b8274"><div style="left:2px;right:2px;top:14px;height:1px;background:#7b9083;opacity:0.6"></div><svg style="left:2px;top:7px" width="18" height="15" viewBox="0 0 18 15"><path d="M0 0 Q1.5 6.5 9 7.5 Q1.5 8.5 0 15 Z" fill="#f0f4f2"/><path d="M10.5 2.5 Q11 7 17.5 7.5 Q11 8 10.5 12.5 Q10 8 5.5 7.5 Q10 7 10.5 2.5Z" fill="#f0f4f2"/></svg><svg style="left:25px;top:0px;overflow:visible" width="40.7" height="30"><text x="0" y="21" font-family="Liberation Sans" font-size="24" fill="#e6eaec" textLength="40.7" lengthAdjust="spacingAndGlyphs">M..8</text></svg></div>
<div class="cl" style="left:2078.0px;top:1378px;width:25.7px;height:30px;background:linear-gradient(#51695a 0,#556d5e 14%,#617a6b 30%,#617a6b 70%,#556d5e 86%,#506658 100%);border:1px solid #3b4c41;box-shadow:inset 0 1px 0 #6b8274"><div style="left:2px;right:2px;top:14px;height:1px;background:#7b9083;opacity:0.6"></div><svg style="left:2px;top:7px" width="18" height="15" viewBox="0 0 18 15"><path d="M0 0 Q1.5 6.5 9 7.5 Q1.5 8.5 0 15 Z" fill="#f0f4f2"/><path d="M10.5 2.5 Q11 7 17.5 7.5 Q11 8 10.5 12.5 Q10 8 5.5 7.5 Q10 7 10.5 2.5Z" fill="#f0f4f2"/></svg></div>
<div class="cl" style="left:2104.0px;top:1378px;width:63.5px;height:30px;background:linear-gradient(#51695a 0,#556d5e 14%,#617a6b 30%,#617a6b 70%,#556d5e 86%,#506658 100%);border:1px solid #3b4c41;box-shadow:inset 0 1px 0 #6b8274"><div style="left:2px;right:2px;top:14px;height:1px;background:#7b9083;opacity:0.6"></div><svg style="left:2px;top:7px" width="18" height="15" viewBox="0 0 18 15"><path d="M0 0 Q1.5 6.5 9 7.5 Q1.5 8.5 0 15 Z" fill="#f0f4f2"/><path d="M10.5 2.5 Q11 7 17.5 7.5 Q11 8 10.5 12.5 Q10 8 5.5 7.5 Q10 7 10.5 2.5Z" fill="#f0f4f2"/></svg><svg style="left:25px;top:0px;overflow:visible" width="34.8" height="30"><text x="0" y="21" font-family="Liberation Sans" font-size="24" fill="#e6eaec" textLength="34.8" lengthAdjust="spacingAndGlyphs">M..</text></svg></div>
<div class="cl" style="left:2186.0px;top:1378px;width:77.7px;height:30px;background:linear-gradient(#6a5151 0,#6e5555 14%,#7b6161 30%,#7b6161 70%,#6e5555 86%,#675050 100%);border:1px solid #4c3b3b;box-shadow:inset 0 1px 0 #836b6b"><div style="left:2px;right:2px;top:14px;height:1px;background:#917b7b;opacity:0.6"></div><svg style="left:2px;top:7px" width="18" height="15" viewBox="0 0 18 15"><path d="M0 0 Q1.5 6.5 9 7.5 Q1.5 8.5 0 15 Z" fill="#f0f4f2"/><path d="M10.5 2.5 Q11 7 17.5 7.5 Q11 8 10.5 12.5 Q10 8 5.5 7.5 Q10 7 10.5 2.5Z" fill="#f0f4f2"/></svg><svg style="left:25px;top:0px;overflow:visible" width="49.0" height="30"><text x="0" y="21" font-family="Liberation Sans" font-size="24" fill="#e6eaec" textLength="49.0" lengthAdjust="spacingAndGlyphs">SS..M</text></svg></div>
<div class="cl" style="left:2455.0px;top:1378px;width:78.3px;height:30px;background:linear-gradient(#6a5151 0,#6e5555 14%,#7b6161 30%,#7b6161 70%,#6e5555 86%,#675050 100%);border:1px solid #4c3b3b;box-shadow:inset 0 1px 0 #836b6b"><div style="left:2px;right:2px;top:14px;height:1px;background:#917b7b;opacity:0.6"></div><svg style="left:2px;top:7px" width="18" height="15" viewBox="0 0 18 15"><path d="M0 0 Q1.5 6.5 9 7.5 Q1.5 8.5 0 15 Z" fill="#f0f4f2"/><path d="M10.5 2.5 Q11 7 17.5 7.5 Q11 8 10.5 12.5 Q10 8 5.5 7.5 Q10 7 10.5 2.5Z" fill="#f0f4f2"/></svg><svg style="left:25px;top:0px;overflow:visible" width="49.6" height="30"><text x="0" y="21" font-family="Liberation Sans" font-size="24" fill="#e6eaec" textLength="49.6" lengthAdjust="spacingAndGlyphs">SS..M</text></svg></div>
<div class="cl" style="left:2670.7px;top:1378px;width:78.5px;height:30px;background:linear-gradient(#6a5151 0,#6e5555 14%,#7b6161 30%,#7b6161 70%,#6e5555 86%,#675050 100%);border:1px solid #4c3b3b;box-shadow:inset 0 1px 0 #836b6b"><div style="left:2px;right:2px;top:14px;height:1px;background:#917b7b;opacity:0.6"></div><svg style="left:2px;top:7px" width="18" height="15" viewBox="0 0 18 15"><path d="M0 0 Q1.5 6.5 9 7.5 Q1.5 8.5 0 15 Z" fill="#f0f4f2"/><path d="M10.5 2.5 Q11 7 17.5 7.5 Q11 8 10.5 12.5 Q10 8 5.5 7.5 Q10 7 10.5 2.5Z" fill="#f0f4f2"/></svg><svg style="left:25px;top:0px;overflow:visible" width="49.8" height="30"><text x="0" y="21" font-family="Liberation Sans" font-size="24" fill="#e6eaec" textLength="49.8" lengthAdjust="spacingAndGlyphs">SS..M</text></svg></div>
<div style="left:541.0px;top:1440px;width:72.7px;height:80px;background:rgba(12,20,25,0.24)"></div>
<div class="cl" style="left:541.0px;top:1410px;width:73.4px;height:30px;background:linear-gradient(#637869,#566b5d);border:1px solid #3b493f;border-radius:4px 4px 2px 2px"><svg style="left:2px;top:7px" width="18" height="15" viewBox="0 0 18 15"><path d="M0 0 Q1.5 6.5 9 7.5 Q1.5 8.5 0 15 Z" fill="#f0f4f2"/><path d="M10.5 2.5 Q11 7 17.5 7.5 Q11 8 10.5 12.5 Q10 8 5.5 7.5 Q10 7 10.5 2.5Z" fill="#f0f4f2"/></svg><svg style="left:25px;top:0px;overflow:visible" width="42.7" height="30"><text x="0" y="21" font-family="Liberation Sans" font-size="24" fill="#e6eaec" textLength="42.7" lengthAdjust="spacingAndGlyphs">M..2</text></svg></div>
<svg style="left:541.0px;top:1456px" width="73" height="50" viewBox="0 -25 73 50"><path d="M0 0 L0.0 -13.3 L1.0 -16.4 L2.1 -17.1 L3.1 -15.3 L4.2 -15.8 L5.2 -16.3 L6.2 -18.5 L7.3 -16.6 L8.3 -19.1 L9.3 -18.1 L10.4 -19.2 L11.4 -17.1 L12.5 -12.2 L13.5 -10.7 L14.5 -11.7 L15.6 -15.4 L16.6 -16.5 L17.7 -14.9 L18.7 -19.2 L19.7 -17.6 L20.8 -18.7 L21.8 -20.7 L22.8 -17.2 L23.9 -18.3 L24.9 -18.5 L26.0 -18.6 L27.0 -14.4 L28.0 -11.5 L29.1 -9.8 L30.1 -14.9 L31.2 -17.3 L32.2 -17.7 L33.2 -18.1 L34.3 -20.4 L35.3 -18.7 L36.4 -16.4 L37.4 -19.8 L38.4 -20.4 L39.5 -17.2 L40.5 -14.3 L41.5 -14.0 L42.6 -12.1 L43.6 -10.5 L44.7 -12.2 L45.7 -15.9 L46.7 -17.5 L47.8 -17.7 L48.8 -14.0 L49.9 -13.4 L50.9 -14.9 L51.9 -10.8 L53.0 -10.2 L54.0 -10.5 L55.0 -7.8 L56.1 -8.1 L57.1 -8.7 L58.2 -6.8 L59.2 -6.4 L60.2 -6.0 L61.3 -5.2 L62.3 -3.8 L63.4 -2.9 L64.4 -2.4 L65.4 -2.0 L66.5 -1.7 L67.5 -1.1 L68.5 -0.8 L69.6 -0.5 L70.6 -0.6 L71.7 -0.5 L72.7 -0.5 L72.7 0.5 L71.7 0.5 L70.6 0.6 L69.6 0.6 L68.5 0.8 L67.5 1.1 L66.5 1.5 L65.4 1.9 L64.4 2.2 L63.4 3.3 L62.3 4.0 L61.3 6.1 L60.2 7.0 L59.2 5.9 L58.2 7.6 L57.1 9.9 L56.1 8.9 L55.0 8.2 L54.0 10.4 L53.0 10.9 L51.9 10.6 L50.9 14.2 L49.9 16.2 L48.8 14.6 L47.8 21.3 L46.7 21.1 L45.7 16.8 L44.7 14.6 L43.6 10.3 L42.6 14.1 L41.5 13.2 L40.5 15.2 L39.5 19.5 L38.4 20.4 L37.4 24.6 L36.4 18.7 L35.3 21.2 L34.3 25.1 L33.2 19.2 L32.2 19.7 L31.2 17.4 L30.1 16.4 L29.1 11.1 L28.0 12.3 L27.0 16.7 L26.0 17.5 L24.9 18.6 L23.9 22.0 L22.8 18.9 L21.8 23.7 L20.8 18.8 L19.7 19.4 L18.7 20.1 L17.7 14.5 L16.6 15.2 L15.6 15.9 L14.5 12.9 L13.5 12.7 L12.5 11.5 L11.4 17.1 L10.4 17.6 L9.3 18.8 L8.3 23.6 L7.3 16.2 L6.2 22.1 L5.2 15.2 L4.2 16.6 L3.1 16.5 L2.1 17.6 L1.0 15.2 L0.0 12.7Z" fill="#b9cdbc"/><path d="M44 0 H73" stroke="#b9cdbc" stroke-width="1.5"/></svg>
<div style="left:757.4px;top:1440px;width:72.1px;height:80px;background:rgba(12,20,25,0.24)"></div>
<div class="cl" style="left:757.4px;top:1410px;width:72.8px;height:30px;background:linear-gradient(#637869,#566b5d);border:1px solid #3b493f;border-radius:4px 4px 2px 2px"><svg style="left:2px;top:7px" width="18" height="15" viewBox="0 0 18 15"><path d="M0 0 Q1.5 6.5 9 7.5 Q1.5 8.5 0 15 Z" fill="#f0f4f2"/><path d="M10.5 2.5 Q11 7 17.5 7.5 Q11 8 10.5 12.5 Q10 8 5.5 7.5 Q10 7 10.5 2.5Z" fill="#f0f4f2"/></svg><svg style="left:25px;top:0px;overflow:visible" width="42.1" height="30"><text x="0" y="21" font-family="Liberation Sans" font-size="24" fill="#e6eaec" textLength="42.1" lengthAdjust="spacingAndGlyphs">M..2</text></svg></div>
<svg style="left:757.4px;top:1456px" width="72" height="50" viewBox="0 -25 72 50"><path d="M0 0 L0.0 -13.3 L1.0 -16.4 L2.1 -17.1 L3.1 -15.3 L4.1 -15.8 L5.2 -16.3 L6.2 -18.5 L7.2 -16.6 L8.2 -19.1 L9.3 -18.1 L10.3 -19.2 L11.3 -17.1 L12.4 -12.2 L13.4 -10.7 L14.4 -11.7 L15.5 -15.4 L16.5 -16.5 L17.5 -14.9 L18.5 -19.2 L19.6 -17.6 L20.6 -18.7 L21.6 -20.7 L22.7 -17.2 L23.7 -18.3 L24.7 -18.5 L25.8 -18.6 L26.8 -14.4 L27.8 -11.5 L28.8 -9.8 L29.9 -14.9 L30.9 -17.3 L31.9 -17.7 L33.0 -18.1 L34.0 -20.4 L35.0 -18.7 L36.1 -16.4 L37.1 -19.8 L38.1 -20.4 L39.1 -17.2 L40.2 -14.3 L41.2 -14.0 L42.2 -12.1 L43.3 -10.5 L44.3 -12.2 L45.3 -15.9 L46.4 -17.5 L47.4 -17.7 L48.4 -14.0 L49.4 -13.4 L50.5 -14.9 L51.5 -10.8 L52.5 -10.2 L53.6 -10.5 L54.6 -7.8 L55.6 -8.1 L56.7 -8.7 L57.7 -6.8 L58.7 -6.4 L59.7 -6.0 L60.8 -5.2 L61.8 -3.8 L62.8 -2.9 L63.9 -2.4 L64.9 -2.0 L65.9 -1.7 L67.0 -1.1 L68.0 -0.8 L69.0 -0.5 L70.0 -0.6 L71.1 -0.5 L72.1 -0.5 L72.1 0.5 L71.1 0.5 L70.0 0.6 L69.0 0.6 L68.0 0.8 L67.0 1.1 L65.9 1.5 L64.9 1.9 L63.9 2.2 L62.8 3.3 L61.8 4.0 L60.8 6.1 L59.7 7.0 L58.7 5.9 L57.7 7.6 L56.7 9.9 L55.6 8.9 L54.6 8.2 L53.6 10.4 L52.5 10.9 L51.5 10.6 L50.5 14.2 L49.4 16.2 L48.4 14.6 L47.4 21.3 L46.4 21.1 L45.3 16.8 L44.3 14.6 L43.3 10.3 L42.2 14.1 L41.2 13.2 L40.2 15.2 L39.1 19.5 L38.1 20.4 L37.1 24.6 L36.1 18.7 L35.0 21.2 L34.0 25.1 L33.0 19.2 L31.9 19.7 L30.9 17.4 L29.9 16.4 L28.8 11.1 L27.8 12.3 L26.8 16.7 L25.8 17.5 L24.7 18.6 L23.7 22.0 L22.7 18.9 L21.6 23.7 L20.6 18.8 L19.6 19.4 L18.5 20.1 L17.5 14.5 L16.5 15.2 L15.5 15.9 L14.4 12.9 L13.4 12.7 L12.4 11.5 L11.3 17.1 L10.3 17.6 L9.3 18.8 L8.2 23.6 L7.2 16.2 L6.2 22.1 L5.2 15.2 L4.1 16.6 L3.1 16.5 L2.1 17.6 L1.0 15.2 L0.0 12.7Z" fill="#b9cdbc"/><path d="M43 0 H72" stroke="#b9cdbc" stroke-width="1.5"/></svg>
<div style="left:1188.4px;top:1440px;width:72.1px;height:80px;background:rgba(12,20,25,0.24)"></div>
<div class="cl" style="left:1188.4px;top:1410px;width:72.8px;height:30px;background:linear-gradient(#637869,#566b5d);border:1px solid #3b493f;border-radius:4px 4px 2px 2px"><svg style="left:2px;top:7px" width="18" height="15" viewBox="0 0 18 15"><path d="M0 0 Q1.5 6.5 9 7.5 Q1.5 8.5 0 15 Z" fill="#f0f4f2"/><path d="M10.5 2.5 Q11 7 17.5 7.5 Q11 8 10.5 12.5 Q10 8 5.5 7.5 Q10 7 10.5 2.5Z" fill="#f0f4f2"/></svg><svg style="left:25px;top:0px;overflow:visible" width="42.1" height="30"><text x="0" y="21" font-family="Liberation Sans" font-size="24" fill="#e6eaec" textLength="42.1" lengthAdjust="spacingAndGlyphs">M..2</text></svg></div>
<svg style="left:1188.4px;top:1456px" width="72" height="50" viewBox="0 -25 72 50"><path d="M0 0 L0.0 -13.3 L1.0 -16.4 L2.1 -17.1 L3.1 -15.3 L4.1 -15.8 L5.1 -16.3 L6.2 -18.5 L7.2 -16.6 L8.2 -19.1 L9.3 -18.1 L10.3 -19.2 L11.3 -17.1 L12.4 -12.2 L13.4 -10.7 L14.4 -11.7 L15.4 -15.4 L16.5 -16.5 L17.5 -14.9 L18.5 -19.2 L19.6 -17.6 L20.6 -18.7 L21.6 -20.7 L22.7 -17.2 L23.7 -18.3 L24.7 -18.5 L25.7 -18.6 L26.8 -14.4 L27.8 -11.5 L28.8 -9.8 L29.9 -14.9 L30.9 -17.3 L31.9 -17.7 L33.0 -18.1 L34.0 -20.4 L35.0 -18.7 L36.0 -16.4 L37.1 -19.8 L38.1 -20.4 L39.1 -17.2 L40.2 -14.3 L41.2 -14.0 L42.2 -12.1 L43.3 -10.5 L44.3 -12.2 L45.3 -15.9 L46.3 -17.5 L47.4 -17.7 L48.4 -14.0 L49.4 -13.4 L50.5 -14.9 L51.5 -10.8 L52.5 -10.2 L53.6 -10.5 L54.6 -7.8 L55.6 -8.1 L56.6 -8.7 L57.7 -6.8 L58.7 -6.4 L59.7 -6.0 L60.8 -5.2 L61.8 -3.8 L62.8 -2.9 L63.9 -2.4 L64.9 -2.0 L65.9 -1.7 L66.9 -1.1 L68.0 -0.8 L69.0 -0.5 L70.0 -0.6 L71.1 -0.5 L72.1 -0.5 L72.1 0.5 L71.1 0.5 L70.0 0.6 L69.0 0.6 L68.0 0.8 L66.9 1.1 L65.9 1.5 L64.9 1.9 L63.9 2.2 L62.8 3.3 L61.8 4.0 L60.8 6.1 L59.7 7.0 L58.7 5.9 L57.7 7.6 L56.6 9.9 L55.6 8.9 L54.6 8.2 L53.6 10.4 L52.5 10.9 L51.5 10.6 L50.5 14.2 L49.4 16.2 L48.4 14.6 L47.4 21.3 L46.3 21.1 L45.3 16.8 L44.3 14.6 L43.3 10.3 L42.2 14.1 L41.2 13.2 L40.2 15.2 L39.1 19.5 L38.1 20.4 L37.1 24.6 L36.0 18.7 L35.0 21.2 L34.0 25.1 L33.0 19.2 L31.9 19.7 L30.9 17.4 L29.9 16.4 L28.8 11.1 L27.8 12.3 L26.8 16.7 L25.7 17.5 L24.7 18.6 L23.7 22.0 L22.7 18.9 L21.6 23.7 L20.6 18.8 L19.6 19.4 L18.5 20.1 L17.5 14.5 L16.5 15.2 L15.4 15.9 L14.4 12.9 L13.4 12.7 L12.4 11.5 L11.3 17.1 L10.3 17.6 L9.3 18.8 L8.2 23.6 L7.2 16.2 L6.2 22.1 L5.1 15.2 L4.1 16.6 L3.1 16.5 L2.1 17.6 L1.0 15.2 L0.0 12.7Z" fill="#b9cdbc"/><path d="M43 0 H72" stroke="#b9cdbc" stroke-width="1.5"/></svg>
<div style="left:2050.3px;top:1440px;width:72.2px;height:80px;background:rgba(12,20,25,0.24)"></div>
<div class="cl" style="left:2050.3px;top:1410px;width:72.9px;height:30px;background:linear-gradient(#637869,#566b5d);border:1px solid #3b493f;border-radius:4px 4px 2px 2px"><svg style="left:2px;top:7px" width="18" height="15" viewBox="0 0 18 15"><path d="M0 0 Q1.5 6.5 9 7.5 Q1.5 8.5 0 15 Z" fill="#f0f4f2"/><path d="M10.5 2.5 Q11 7 17.5 7.5 Q11 8 10.5 12.5 Q10 8 5.5 7.5 Q10 7 10.5 2.5Z" fill="#f0f4f2"/></svg><svg style="left:25px;top:0px;overflow:visible" width="42.2" height="30"><text x="0" y="21" font-family="Liberation Sans" font-size="24" fill="#e6eaec" textLength="42.2" lengthAdjust="spacingAndGlyphs">M..2</text></svg></div>
<svg style="left:2050.3px;top:1456px" width="72" height="50" viewBox="0 -25 72 50"><path d="M0 0 L0.0 -13.3 L1.0 -16.4 L2.1 -17.1 L3.1 -15.3 L4.1 -15.8 L5.2 -16.3 L6.2 -18.5 L7.2 -16.6 L8.3 -19.1 L9.3 -18.1 L10.3 -19.2 L11.3 -17.1 L12.4 -12.2 L13.4 -10.7 L14.4 -11.7 L15.5 -15.4 L16.5 -16.5 L17.5 -14.9 L18.6 -19.2 L19.6 -17.6 L20.6 -18.7 L21.7 -20.7 L22.7 -17.2 L23.7 -18.3 L24.8 -18.5 L25.8 -18.6 L26.8 -14.4 L27.8 -11.5 L28.9 -9.8 L29.9 -14.9 L30.9 -17.3 L32.0 -17.7 L33.0 -18.1 L34.0 -20.4 L35.1 -18.7 L36.1 -16.4 L37.1 -19.8 L38.2 -20.4 L39.2 -17.2 L40.2 -14.3 L41.3 -14.0 L42.3 -12.1 L43.3 -10.5 L44.4 -12.2 L45.4 -15.9 L46.4 -17.5 L47.4 -17.7 L48.5 -14.0 L49.5 -13.4 L50.5 -14.9 L51.6 -10.8 L52.6 -10.2 L53.6 -10.5 L54.7 -7.8 L55.7 -8.1 L56.7 -8.7 L57.8 -6.8 L58.8 -6.4 L59.8 -6.0 L60.9 -5.2 L61.9 -3.8 L62.9 -2.9 L63.9 -2.4 L65.0 -2.0 L66.0 -1.7 L67.0 -1.1 L68.1 -0.8 L69.1 -0.5 L70.1 -0.6 L71.2 -0.5 L72.2 -0.5 L72.2 0.5 L71.2 0.5 L70.1 0.6 L69.1 0.6 L68.1 0.8 L67.0 1.1 L66.0 1.5 L65.0 1.9 L63.9 2.2 L62.9 3.3 L61.9 4.0 L60.9 6.1 L59.8 7.0 L58.8 5.9 L57.8 7.6 L56.7 9.9 L55.7 8.9 L54.7 8.2 L53.6 10.4 L52.6 10.9 L51.6 10.6 L50.5 14.2 L49.5 16.2 L48.5 14.6 L47.4 21.3 L46.4 21.1 L45.4 16.8 L44.4 14.6 L43.3 10.3 L42.3 14.1 L41.3 13.2 L40.2 15.2 L39.2 19.5 L38.2 20.4 L37.1 24.6 L36.1 18.7 L35.1 21.2 L34.0 25.1 L33.0 19.2 L32.0 19.7 L30.9 17.4 L29.9 16.4 L28.9 11.1 L27.8 12.3 L26.8 16.7 L25.8 17.5 L24.8 18.6 L23.7 22.0 L22.7 18.9 L21.7 23.7 L20.6 18.8 L19.6 19.4 L18.6 20.1 L17.5 14.5 L16.5 15.2 L15.5 15.9 L14.4 12.9 L13.4 12.7 L12.4 11.5 L11.3 17.1 L10.3 17.6 L9.3 18.8 L8.3 23.6 L7.2 16.2 L6.2 22.1 L5.2 15.2 L4.1 16.6 L3.1 16.5 L2.1 17.6 L1.0 15.2 L0.0 12.7Z" fill="#b9cdbc"/><path d="M43 0 H72" stroke="#b9cdbc" stroke-width="1.5"/></svg>
<div style="left:703.2px;top:1584px;width:105.2px;height:45px;background:rgba(12,20,25,0.24)"></div>
<div class="cl" style="left:703.2px;top:1554px;width:105.9px;height:30px;background:linear-gradient(#737257,#66654b);border:1px solid #464533;border-radius:4px 4px 2px 2px"><svg style="left:2px;top:7px" width="18" height="15" viewBox="0 0 18 15"><path d="M0 0 Q1.5 6.5 9 7.5 Q1.5 8.5 0 15 Z" fill="#f0f4f2"/><path d="M10.5 2.5 Q11 7 17.5 7.5 Q11 8 10.5 12.5 Q10 8 5.5 7.5 Q10 7 10.5 2.5Z" fill="#f0f4f2"/></svg><svg style="left:25px;top:0px;overflow:visible" width="75.2" height="30"><text x="0" y="21" font-family="Liberation Sans" font-size="24" fill="#e6eaec" textLength="75.2" lengthAdjust="spacingAndGlyphs">CAT..pm</text></svg></div>
<svg style="left:703.2px;top:1592px" width="105" height="40" viewBox="0 -34 105 40"><path d="M0 0 L0.0 -0.0 L1.2 -0.0 L2.3 -0.1 L3.5 -0.2 L4.7 -0.3 L5.8 -0.4 L7.0 -0.6 L8.2 -0.7 L9.4 -0.9 L10.5 -1.1 L11.7 -1.3 L12.9 -1.5 L14.0 -1.7 L15.2 -1.9 L16.4 -2.1 L17.5 -2.3 L18.7 -2.6 L19.9 -2.8 L21.0 -3.1 L22.2 -3.3 L23.4 -3.6 L24.5 -3.8 L25.7 -4.1 L26.9 -4.4 L28.1 -4.7 L29.2 -5.0 L30.4 -5.3 L31.6 -5.6 L32.7 -5.9 L33.9 -6.2 L35.1 -6.6 L36.2 -6.9 L37.4 -7.2 L38.6 -7.6 L39.7 -7.9 L40.9 -8.3 L42.1 -8.6 L43.2 -9.0 L44.4 -9.4 L45.6 -9.7 L46.8 -10.1 L47.9 -10.5 L49.1 -10.9 L50.3 -19.2 L51.4 -30.8 L52.6 -36.8 L53.8 -39.3 L54.9 -32.6 L56.1 -33.3 L57.3 -30.5 L58.4 -20.5 L59.6 -18.0 L60.8 -25.4 L62.0 -17.4 L63.1 -15.7 L64.3 -20.7 L65.5 -15.0 L66.6 -16.4 L67.8 -12.8 L69.0 -12.8 L70.1 -9.1 L71.3 -11.0 L72.5 -11.3 L73.6 -9.0 L74.8 -9.3 L76.0 -8.4 L77.1 -5.6 L78.3 -7.6 L79.5 -6.3 L80.7 -5.9 L81.8 -5.5 L83.0 -5.1 L84.2 -4.8 L85.3 -4.4 L86.5 -4.1 L87.7 -3.8 L88.8 -3.5 L90.0 -3.2 L91.2 -2.9 L92.3 -2.6 L93.5 -2.3 L94.7 -2.0 L95.8 -1.8 L97.0 -1.5 L98.2 -1.2 L99.4 -1.0 L100.5 -0.8 L101.7 -0.5 L102.9 -0.3 L104.0 -0.1 L105.2 -0.0 L105.2 0.0 L104.0 0.0 L102.9 0.1 L101.7 0.2 L100.5 0.2 L99.4 0.3 L98.2 0.4 L97.0 0.4 L95.8 0.5 L94.7 0.6 L93.5 0.7 L92.3 0.8 L91.2 0.9 L90.0 0.9 L88.8 1.0 L87.7 1.1 L86.5 1.2 L85.3 1.3 L84.2 1.4 L83.0 1.5 L81.8 1.6 L80.7 1.8 L79.5 1.9 L78.3 2.3 L77.1 1.7 L76.0 2.5 L74.8 2.8 L73.6 2.7 L72.5 3.4 L71.3 3.3 L70.1 2.7 L69.0 3.8 L67.8 3.8 L66.6 4.9 L65.5 4.5 L64.3 5.0 L63.1 4.7 L62.0 5.0 L60.8 5.0 L59.6 5.0 L58.4 5.0 L57.3 5.0 L56.1 5.0 L54.9 5.0 L53.8 5.0 L52.6 5.0 L51.4 5.0 L50.3 5.0 L49.1 3.3 L47.9 3.1 L46.8 3.0 L45.6 2.9 L44.4 2.8 L43.2 2.7 L42.1 2.6 L40.9 2.5 L39.7 2.4 L38.6 2.3 L37.4 2.2 L36.2 2.1 L35.1 2.0 L33.9 1.9 L32.7 1.8 L31.6 1.7 L30.4 1.6 L29.2 1.5 L28.1 1.4 L26.9 1.3 L25.7 1.2 L24.5 1.2 L23.4 1.1 L22.2 1.0 L21.0 0.9 L19.9 0.8 L18.7 0.8 L17.5 0.7 L16.4 0.6 L15.2 0.6 L14.0 0.5 L12.9 0.4 L11.7 0.4 L10.5 0.3 L9.4 0.3 L8.2 0.2 L7.0 0.2 L5.8 0.1 L4.7 0.1 L3.5 0.1 L2.3 0.0 L1.2 0.0 L0.0 0.0Z" fill="#d4d8bc"/><path d="M0 0 H105" stroke="#d4d8bc" stroke-width="1.2"/></svg>
<div style="left:1026.8px;top:1584px;width:105.4px;height:45px;background:rgba(12,20,25,0.24)"></div>
<div class="cl" style="left:1026.8px;top:1554px;width:106.1px;height:30px;background:linear-gradient(#737257,#66654b);border:1px solid #464533;border-radius:4px 4px 2px 2px"><svg style="left:2px;top:7px" width="18" height="15" viewBox="0 0 18 15"><path d="M0 0 Q1.5 6.5 9 7.5 Q1.5 8.5 0 15 Z" fill="#f0f4f2"/><path d="M10.5 2.5 Q11 7 17.5 7.5 Q11 8 10.5 12.5 Q10 8 5.5 7.5 Q10 7 10.5 2.5Z" fill="#f0f4f2"/></svg><svg style="left:25px;top:0px;overflow:visible" width="75.4" height="30"><text x="0" y="21" font-family="Liberation Sans" font-size="24" fill="#e6eaec" textLength="75.4" lengthAdjust="spacingAndGlyphs">CAT..pm</text></svg></div>
<svg style="left:1026.8px;top:1592px" width="105" height="40" viewBox="0 -34 105 40"><path d="M0 0 L0.0 -0.0 L1.2 -0.0 L2.3 -0.1 L3.5 -0.2 L4.7 -0.3 L5.9 -0.4 L7.0 -0.6 L8.2 -0.7 L9.4 -0.9 L10.5 -1.1 L11.7 -1.3 L12.9 -1.5 L14.1 -1.7 L15.2 -1.9 L16.4 -2.1 L17.6 -2.3 L18.7 -2.6 L19.9 -2.8 L21.1 -3.1 L22.3 -3.3 L23.4 -3.6 L24.6 -3.8 L25.8 -4.1 L26.9 -4.4 L28.1 -4.7 L29.3 -5.0 L30.4 -5.3 L31.6 -5.6 L32.8 -5.9 L34.0 -6.2 L35.1 -6.6 L36.3 -6.9 L37.5 -7.2 L38.6 -7.6 L39.8 -7.9 L41.0 -8.3 L42.2 -8.6 L43.3 -9.0 L44.5 -9.4 L45.7 -9.7 L46.8 -10.1 L48.0 -10.5 L49.2 -10.9 L50.4 -19.2 L51.5 -30.8 L52.7 -36.8 L53.9 -39.3 L55.0 -32.6 L56.2 -33.3 L57.4 -30.5 L58.6 -20.5 L59.7 -18.0 L60.9 -25.4 L62.1 -17.4 L63.2 -15.7 L64.4 -20.7 L65.6 -15.0 L66.8 -16.4 L67.9 -12.8 L69.1 -12.8 L70.3 -9.1 L71.4 -11.0 L72.6 -11.3 L73.8 -9.0 L75.0 -9.3 L76.1 -8.4 L77.3 -5.6 L78.5 -7.6 L79.6 -6.3 L80.8 -5.9 L82.0 -5.5 L83.1 -5.1 L84.3 -4.8 L85.5 -4.4 L86.7 -4.1 L87.8 -3.8 L89.0 -3.5 L90.2 -3.2 L91.3 -2.9 L92.5 -2.6 L93.7 -2.3 L94.9 -2.0 L96.0 -1.8 L97.2 -1.5 L98.4 -1.2 L99.5 -1.0 L100.7 -0.8 L101.9 -0.5 L103.1 -0.3 L104.2 -0.1 L105.4 -0.0 L105.4 0.0 L104.2 0.0 L103.1 0.1 L101.9 0.2 L100.7 0.2 L99.5 0.3 L98.4 0.4 L97.2 0.4 L96.0 0.5 L94.9 0.6 L93.7 0.7 L92.5 0.8 L91.3 0.9 L90.2 0.9 L89.0 1.0 L87.8 1.1 L86.7 1.2 L85.5 1.3 L84.3 1.4 L83.1 1.5 L82.0 1.6 L80.8 1.8 L79.6 1.9 L78.5 2.3 L77.3 1.7 L76.1 2.5 L75.0 2.8 L73.8 2.7 L72.6 3.4 L71.4 3.3 L70.3 2.7 L69.1 3.8 L67.9 3.8 L66.8 4.9 L65.6 4.5 L64.4 5.0 L63.2 4.7 L62.1 5.0 L60.9 5.0 L59.7 5.0 L58.6 5.0 L57.4 5.0 L56.2 5.0 L55.0 5.0 L53.9 5.0 L52.7 5.0 L51.5 5.0 L50.4 5.0 L49.2 3.3 L48.0 3.1 L46.8 3.0 L45.7 2.9 L44.5 2.8 L43.3 2.7 L42.2 2.6 L41.0 2.5 L39.8 2.4 L38.6 2.3 L37.5 2.2 L36.3 2.1 L35.1 2.0 L34.0 1.9 L32.8 1.8 L31.6 1.7 L30.4 1.6 L29.3 1.5 L28.1 1.4 L26.9 1.3 L25.8 1.2 L24.6 1.2 L23.4 1.1 L22.3 1.0 L21.1 0.9 L19.9 0.8 L18.7 0.8 L17.6 0.7 L16.4 0.6 L15.2 0.6 L14.1 0.5 L12.9 0.4 L11.7 0.4 L10.5 0.3 L9.4 0.3 L8.2 0.2 L7.0 0.2 L5.9 0.1 L4.7 0.1 L3.5 0.1 L2.3 0.0 L1.2 0.0 L0.0 0.0Z" fill="#d4d8bc"/><path d="M0 0 H105" stroke="#d4d8bc" stroke-width="1.2"/></svg>
<div style="left:1133.2px;top:1584px;width:106.8px;height:45px;background:rgba(12,20,25,0.24)"></div>
<div class="cl" style="left:1133.2px;top:1554px;width:107.5px;height:30px;background:linear-gradient(#646280,#575573);border:1px solid #3b3a4f;border-radius:4px 4px 2px 2px"><svg style="left:2px;top:7px" width="18" height="15" viewBox="0 0 18 15"><path d="M0 0 Q1.5 6.5 9 7.5 Q1.5 8.5 0 15 Z" fill="#f0f4f2"/><path d="M10.5 2.5 Q11 7 17.5 7.5 Q11 8 10.5 12.5 Q10 8 5.5 7.5 Q10 7 10.5 2.5Z" fill="#f0f4f2"/></svg><svg style="left:25px;top:0px;overflow:visible" width="76.8" height="30"><text x="0" y="21" font-family="Liberation Sans" font-size="24" fill="#e6eaec" textLength="76.8" lengthAdjust="spacingAndGlyphs">SSE..BPM</text></svg></div>
<svg style="left:1133.2px;top:1592px" width="107" height="40" viewBox="0 -34 107 40"><path d="M0 0 L0.0 -0.0 L1.2 -0.0 L2.4 -0.0 L3.6 -0.0 L4.7 -0.1 L5.9 -0.1 L7.1 -0.1 L8.3 -0.1 L9.5 -0.1 L10.7 -0.2 L11.9 -0.2 L13.1 -0.2 L14.2 -0.3 L15.4 -0.3 L16.6 -0.3 L17.8 -0.4 L19.0 -0.4 L20.2 -0.5 L21.4 -0.5 L22.5 -0.5 L23.7 -0.6 L24.9 -0.6 L26.1 -0.7 L27.3 -0.7 L28.5 -0.8 L29.7 -0.8 L30.9 -0.9 L32.0 -0.9 L33.2 -1.0 L34.4 -1.0 L35.6 -1.1 L36.8 -1.1 L38.0 -1.2 L39.2 -1.3 L40.3 -1.3 L41.5 -1.4 L42.7 -1.4 L43.9 -1.5 L45.1 -1.6 L46.3 -1.6 L47.5 -1.7 L48.7 -1.7 L49.8 -1.8 L51.0 -1.9 L52.2 -1.9 L53.4 -2.0 L54.6 -8.7 L55.8 -14.1 L57.0 -14.7 L58.1 -11.8 L59.3 -11.8 L60.5 -10.5 L61.7 -6.8 L62.9 -5.8 L64.1 -7.9 L65.3 -5.3 L66.5 -4.6 L67.6 -5.8 L68.8 -4.1 L70.0 -4.3 L71.2 -3.2 L72.4 -3.1 L73.6 -2.1 L74.8 -2.5 L75.9 -2.5 L77.1 -1.9 L78.3 -1.9 L79.5 -1.7 L80.7 -1.1 L81.9 -1.3 L83.1 -1.2 L84.3 -1.1 L85.4 -1.0 L86.6 -0.9 L87.8 -0.8 L89.0 -0.8 L90.2 -0.7 L91.4 -0.6 L92.6 -0.6 L93.7 -0.5 L94.9 -0.5 L96.1 -0.4 L97.3 -0.3 L98.5 -0.3 L99.7 -0.2 L100.9 -0.2 L102.1 -0.1 L103.2 -0.1 L104.4 -0.1 L105.6 -0.0 L106.8 -0.0 L106.8 0.0 L105.6 0.0 L104.4 0.0 L103.2 0.0 L102.1 0.0 L100.9 0.1 L99.7 0.1 L98.5 0.1 L97.3 0.1 L96.1 0.1 L94.9 0.1 L93.7 0.2 L92.6 0.2 L91.4 0.2 L90.2 0.2 L89.0 0.2 L87.8 0.2 L86.6 0.3 L85.4 0.3 L84.3 0.3 L83.1 0.4 L81.9 0.4 L80.7 0.3 L79.5 0.5 L78.3 0.6 L77.1 0.6 L75.9 0.7 L74.8 0.7 L73.6 0.6 L72.4 0.9 L71.2 1.0 L70.0 1.3 L68.8 1.2 L67.6 1.7 L66.5 1.4 L65.3 1.6 L64.1 2.4 L62.9 1.7 L61.7 2.0 L60.5 3.1 L59.3 3.5 L58.1 3.6 L57.0 4.4 L55.8 4.2 L54.6 2.6 L53.4 0.6 L52.2 0.6 L51.0 0.6 L49.8 0.5 L48.7 0.5 L47.5 0.5 L46.3 0.5 L45.1 0.5 L43.9 0.4 L42.7 0.4 L41.5 0.4 L40.3 0.4 L39.2 0.4 L38.0 0.4 L36.8 0.3 L35.6 0.3 L34.4 0.3 L33.2 0.3 L32.0 0.3 L30.9 0.3 L29.7 0.2 L28.5 0.2 L27.3 0.2 L26.1 0.2 L24.9 0.2 L23.7 0.2 L22.5 0.2 L21.4 0.2 L20.2 0.1 L19.0 0.1 L17.8 0.1 L16.6 0.1 L15.4 0.1 L14.2 0.1 L13.1 0.1 L11.9 0.1 L10.7 0.1 L9.5 0.0 L8.3 0.0 L7.1 0.0 L5.9 0.0 L4.7 0.0 L3.6 0.0 L2.4 0.0 L1.2 0.0 L0.0 0.0Z" fill="#b9b8d8"/><path d="M0 0 H107" stroke="#b9b8d8" stroke-width="1.2"/></svg>
<div style="left:1390.3px;top:1584px;width:52.2px;height:45px;background:rgba(12,20,25,0.24)"></div>
<div class="cl" style="left:1390.3px;top:1554px;width:52.9px;height:30px;background:linear-gradient(#627177,#55646a);border:1px solid #3a4448;border-radius:4px 4px 2px 2px"><svg style="left:2px;top:7px" width="18" height="15" viewBox="0 0 18 15"><path d="M0 0 Q1.5 6.5 9 7.5 Q1.5 8.5 0 15 Z" fill="#f0f4f2"/><path d="M10.5 2.5 Q11 7 17.5 7.5 Q11 8 10.5 12.5 Q10 8 5.5 7.5 Q10 7 10.5 2.5Z" fill="#f0f4f2"/></svg><svg style="left:25px;top:0px;overflow:visible" width="22.2" height="30"><text x="0" y="21" font-family="Liberation Sans" font-size="24" fill="#e6eaec" textLength="22.2" lengthAdjust="spacingAndGlyphs">C..</text></svg></div>
<svg style="left:1390.3px;top:1592px" width="52" height="40" viewBox="0 -34 52 40"><path d="M0 0 L0.0 -0.0 L0.6 -0.1 L1.2 -0.2 L1.7 -0.4 L2.3 -0.6 L2.9 -0.9 L3.5 -1.2 L4.1 -1.5 L4.6 -1.8 L5.2 -2.1 L5.8 -2.5 L6.4 -2.9 L7.0 -3.3 L7.5 -3.7 L8.1 -4.1 L8.7 -4.6 L9.3 -5.0 L9.9 -5.5 L10.4 -6.0 L11.0 -20.4 L11.6 -34.1 L12.2 -37.3 L12.8 -31.7 L13.3 -33.2 L13.9 -31.2 L14.5 -21.4 L15.1 -19.2 L15.7 -27.5 L16.2 -19.3 L16.8 -17.7 L17.4 -23.6 L18.0 -17.3 L18.6 -19.1 L19.1 -15.1 L19.7 -15.2 L20.3 -10.9 L20.9 -13.2 L21.5 -13.6 L22.0 -10.9 L22.6 -11.2 L23.2 -10.2 L23.8 -6.9 L24.4 -9.3 L24.9 -8.1 L25.5 -6.5 L26.1 -5.2 L26.7 -7.6 L27.3 -5.9 L27.8 -6.3 L28.4 -6.4 L29.0 -5.6 L29.6 -5.8 L30.2 -4.3 L30.7 -5.0 L31.3 -4.0 L31.9 -3.9 L32.5 -3.7 L33.1 -3.5 L33.6 -3.3 L34.2 -3.2 L34.8 -3.0 L35.4 -2.9 L36.0 -2.7 L36.5 -2.6 L37.1 -2.5 L37.7 -2.3 L38.3 -2.2 L38.9 -2.1 L39.4 -2.0 L40.0 -1.9 L40.6 -1.7 L41.2 -1.6 L41.8 -1.5 L42.3 -1.4 L42.9 -1.3 L43.5 -1.2 L44.1 -1.1 L44.7 -1.0 L45.2 -0.9 L45.8 -0.8 L46.4 -0.8 L47.0 -0.7 L47.6 -0.6 L48.1 -0.5 L48.7 -0.4 L49.3 -0.3 L49.9 -0.3 L50.5 -0.2 L51.0 -0.1 L51.6 -0.0 L52.2 -0.0 L52.2 0.0 L51.6 0.0 L51.0 0.0 L50.5 0.1 L49.9 0.1 L49.3 0.1 L48.7 0.1 L48.1 0.1 L47.6 0.2 L47.0 0.2 L46.4 0.2 L45.8 0.3 L45.2 0.3 L44.7 0.3 L44.1 0.3 L43.5 0.4 L42.9 0.4 L42.3 0.4 L41.8 0.5 L41.2 0.5 L40.6 0.5 L40.0 0.6 L39.4 0.6 L38.9 0.6 L38.3 0.7 L37.7 0.7 L37.1 0.7 L36.5 0.8 L36.0 0.8 L35.4 0.9 L34.8 0.9 L34.2 0.9 L33.6 1.0 L33.1 1.0 L32.5 1.1 L31.9 1.2 L31.3 1.2 L30.7 1.5 L30.2 1.3 L29.6 1.7 L29.0 1.7 L28.4 1.9 L27.8 1.9 L27.3 1.8 L26.7 2.3 L26.1 1.6 L25.5 2.0 L24.9 2.4 L24.4 2.8 L23.8 2.1 L23.2 3.1 L22.6 3.4 L22.0 3.3 L21.5 4.1 L20.9 3.9 L20.3 3.3 L19.7 4.6 L19.1 4.5 L18.6 5.0 L18.0 5.0 L17.4 5.0 L16.8 5.0 L16.2 5.0 L15.7 5.0 L15.1 5.0 L14.5 5.0 L13.9 5.0 L13.3 5.0 L12.8 5.0 L12.2 5.0 L11.6 5.0 L11.0 5.0 L10.4 1.8 L9.9 1.7 L9.3 1.5 L8.7 1.4 L8.1 1.2 L7.5 1.1 L7.0 1.0 L6.4 0.9 L5.8 0.7 L5.2 0.6 L4.6 0.5 L4.1 0.4 L3.5 0.3 L2.9 0.3 L2.3 0.2 L1.7 0.1 L1.2 0.1 L0.6 0.0 L0.0 0.0Z" fill="#c5d3dc"/><path d="M0 0 H52" stroke="#c5d3dc" stroke-width="1.2"/></svg>
<div style="left:1565.0px;top:1584px;width:106.2px;height:45px;background:rgba(12,20,25,0.24)"></div>
<div class="cl" style="left:1565.0px;top:1554px;width:106.9px;height:30px;background:linear-gradient(#737257,#66654b);border:1px solid #464533;border-radius:4px 4px 2px 2px"><svg style="left:2px;top:7px" width="18" height="15" viewBox="0 0 18 15"><path d="M0 0 Q1.5 6.5 9 7.5 Q1.5 8.5 0 15 Z" fill="#f0f4f2"/><path d="M10.5 2.5 Q11 7 17.5 7.5 Q11 8 10.5 12.5 Q10 8 5.5 7.5 Q10 7 10.5 2.5Z" fill="#f0f4f2"/></svg><svg style="left:25px;top:0px;overflow:visible" width="76.2" height="30"><text x="0" y="21" font-family="Liberation Sans" font-size="24" fill="#e6eaec" textLength="76.2" lengthAdjust="spacingAndGlyphs">CAT..pm</text></svg></div>
<svg style="left:1565.0px;top:1592px" width="106" height="40" viewBox="0 -34 106 40"><path d="M0 0 L0.0 -0.0 L1.2 -0.0 L2.4 -0.1 L3.5 -0.2 L4.7 -0.3 L5.9 -0.4 L7.1 -0.6 L8.3 -0.7 L9.4 -0.9 L10.6 -1.1 L11.8 -1.3 L13.0 -1.5 L14.2 -1.7 L15.3 -1.9 L16.5 -2.1 L17.7 -2.3 L18.9 -2.6 L20.1 -2.8 L21.2 -3.1 L22.4 -3.3 L23.6 -3.6 L24.8 -3.8 L26.0 -4.1 L27.1 -4.4 L28.3 -4.7 L29.5 -5.0 L30.7 -5.3 L31.9 -5.6 L33.0 -5.9 L34.2 -6.2 L35.4 -6.6 L36.6 -6.9 L37.8 -7.2 L38.9 -7.6 L40.1 -7.9 L41.3 -8.3 L42.5 -8.6 L43.7 -9.0 L44.8 -9.4 L46.0 -9.7 L47.2 -10.1 L48.4 -10.5 L49.6 -10.9 L50.7 -19.2 L51.9 -30.8 L53.1 -36.8 L54.3 -39.3 L55.5 -32.6 L56.6 -33.3 L57.8 -30.5 L59.0 -20.5 L60.2 -18.0 L61.4 -25.4 L62.5 -17.4 L63.7 -15.7 L64.9 -20.7 L66.1 -15.0 L67.3 -16.4 L68.4 -12.8 L69.6 -12.8 L70.8 -9.1 L72.0 -11.0 L73.2 -11.3 L74.3 -9.0 L75.5 -9.3 L76.7 -8.4 L77.9 -5.6 L79.1 -7.6 L80.2 -6.3 L81.4 -5.9 L82.6 -5.5 L83.8 -5.1 L85.0 -4.8 L86.1 -4.4 L87.3 -4.1 L88.5 -3.8 L89.7 -3.5 L90.9 -3.2 L92.0 -2.9 L93.2 -2.6 L94.4 -2.3 L95.6 -2.0 L96.8 -1.8 L97.9 -1.5 L99.1 -1.2 L100.3 -1.0 L101.5 -0.8 L102.7 -0.5 L103.8 -0.3 L105.0 -0.1 L106.2 -0.0 L106.2 0.0 L105.0 0.0 L103.8 0.1 L102.7 0.2 L101.5 0.2 L100.3 0.3 L99.1 0.4 L97.9 0.4 L96.8 0.5 L95.6 0.6 L94.4 0.7 L93.2 0.8 L92.0 0.9 L90.9 0.9 L89.7 1.0 L88.5 1.1 L87.3 1.2 L86.1 1.3 L85.0 1.4 L83.8 1.5 L82.6 1.6 L81.4 1.8 L80.2 1.9 L79.1 2.3 L77.9 1.7 L76.7 2.5 L75.5 2.8 L74.3 2.7 L73.2 3.4 L72.0 3.3 L70.8 2.7 L69.6 3.8 L68.4 3.8 L67.3 4.9 L66.1 4.5 L64.9 5.0 L63.7 4.7 L62.5 5.0 L61.4 5.0 L60.2 5.0 L59.0 5.0 L57.8 5.0 L56.6 5.0 L55.5 5.0 L54.3 5.0 L53.1 5.0 L51.9 5.0 L50.7 5.0 L49.6 3.3 L48.4 3.1 L47.2 3.0 L46.0 2.9 L44.8 2.8 L43.7 2.7 L42.5 2.6 L41.3 2.5 L40.1 2.4 L38.9 2.3 L37.8 2.2 L36.6 2.1 L35.4 2.0 L34.2 1.9 L33.0 1.8 L31.9 1.7 L30.7 1.6 L29.5 1.5 L28.3 1.4 L27.1 1.3 L26.0 1.2 L24.8 1.2 L23.6 1.1 L22.4 1.0 L21.2 0.9 L20.1 0.8 L18.9 0.8 L17.7 0.7 L16.5 0.6 L15.3 0.6 L14.2 0.5 L13.0 0.4 L11.8 0.4 L10.6 0.3 L9.4 0.3 L8.3 0.2 L7.1 0.2 L5.9 0.1 L4.7 0.1 L3.5 0.1 L2.4 0.0 L1.2 0.0 L0.0 0.0Z" fill="#d4d8bc"/><path d="M0 0 H106" stroke="#d4d8bc" stroke-width="1.2"/></svg>
<div style="left:1888.7px;top:1584px;width:105.3px;height:45px;background:rgba(12,20,25,0.24)"></div>
<div class="cl" style="left:1888.7px;top:1554px;width:106.0px;height:30px;background:linear-gradient(#737257,#66654b);border:1px solid #464533;border-radius:4px 4px 2px 2px"><svg style="left:2px;top:7px" width="18" height="15" viewBox="0 0 18 15"><path d="M0 0 Q1.5 6.5 9 7.5 Q1.5 8.5 0 15 Z" fill="#f0f4f2"/><path d="M10.5 2.5 Q11 7 17.5 7.5 Q11 8 10.5 12.5 Q10 8 5.5 7.5 Q10 7 10.5 2.5Z" fill="#f0f4f2"/></svg><svg style="left:25px;top:0px;overflow:visible" width="75.3" height="30"><text x="0" y="21" font-family="Liberation Sans" font-size="24" fill="#e6eaec" textLength="75.3" lengthAdjust="spacingAndGlyphs">CAT..pm</text></svg></div>
<svg style="left:1888.7px;top:1592px" width="105" height="40" viewBox="0 -34 105 40"><path d="M0 0 L0.0 -0.0 L1.2 -0.0 L2.3 -0.1 L3.5 -0.2 L4.7 -0.3 L5.8 -0.4 L7.0 -0.6 L8.2 -0.7 L9.4 -0.9 L10.5 -1.1 L11.7 -1.3 L12.9 -1.5 L14.0 -1.7 L15.2 -1.9 L16.4 -2.1 L17.5 -2.3 L18.7 -2.6 L19.9 -2.8 L21.1 -3.1 L22.2 -3.3 L23.4 -3.6 L24.6 -3.8 L25.7 -4.1 L26.9 -4.4 L28.1 -4.7 L29.2 -5.0 L30.4 -5.3 L31.6 -5.6 L32.8 -5.9 L33.9 -6.2 L35.1 -6.6 L36.3 -6.9 L37.4 -7.2 L38.6 -7.6 L39.8 -7.9 L40.9 -8.3 L42.1 -8.6 L43.3 -9.0 L44.5 -9.4 L45.6 -9.7 L46.8 -10.1 L48.0 -10.5 L49.1 -10.9 L50.3 -19.2 L51.5 -30.8 L52.6 -36.8 L53.8 -39.3 L55.0 -32.6 L56.2 -33.3 L57.3 -30.5 L58.5 -20.5 L59.7 -18.0 L60.8 -25.4 L62.0 -17.4 L63.2 -15.7 L64.3 -20.7 L65.5 -15.0 L66.7 -16.4 L67.9 -12.8 L69.0 -12.8 L70.2 -9.1 L71.4 -11.0 L72.5 -11.3 L73.7 -9.0 L74.9 -9.3 L76.0 -8.4 L77.2 -5.6 L78.4 -7.6 L79.6 -6.3 L80.7 -5.9 L81.9 -5.5 L83.1 -5.1 L84.2 -4.8 L85.4 -4.4 L86.6 -4.1 L87.7 -3.8 L88.9 -3.5 L90.1 -3.2 L91.3 -2.9 L92.4 -2.6 L93.6 -2.3 L94.8 -2.0 L95.9 -1.8 L97.1 -1.5 L98.3 -1.2 L99.4 -1.0 L100.6 -0.8 L101.8 -0.5 L103.0 -0.3 L104.1 -0.1 L105.3 -0.0 L105.3 0.0 L104.1 0.0 L103.0 0.1 L101.8 0.2 L100.6 0.2 L99.4 0.3 L98.3 0.4 L97.1 0.4 L95.9 0.5 L94.8 0.6 L93.6 0.7 L92.4 0.8 L91.3 0.9 L90.1 0.9 L88.9 1.0 L87.7 1.1 L86.6 1.2 L85.4 1.3 L84.2 1.4 L83.1 1.5 L81.9 1.6 L80.7 1.8 L79.6 1.9 L78.4 2.3 L77.2 1.7 L76.0 2.5 L74.9 2.8 L73.7 2.7 L72.5 3.4 L71.4 3.3 L70.2 2.7 L69.0 3.8 L67.9 3.8 L66.7 4.9 L65.5 4.5 L64.3 5.0 L63.2 4.7 L62.0 5.0 L60.8 5.0 L59.7 5.0 L58.5 5.0 L57.3 5.0 L56.2 5.0 L55.0 5.0 L53.8 5.0 L52.6 5.0 L51.5 5.0 L50.3 5.0 L49.1 3.3 L48.0 3.1 L46.8 3.0 L45.6 2.9 L44.5 2.8 L43.3 2.7 L42.1 2.6 L40.9 2.5 L39.8 2.4 L38.6 2.3 L37.4 2.2 L36.3 2.1 L35.1 2.0 L33.9 1.9 L32.8 1.8 L31.6 1.7 L30.4 1.6 L29.2 1.5 L28.1 1.4 L26.9 1.3 L25.7 1.2 L24.6 1.2 L23.4 1.1 L22.2 1.0 L21.1 0.9 L19.9 0.8 L18.7 0.8 L17.5 0.7 L16.4 0.6 L15.2 0.6 L14.0 0.5 L12.9 0.4 L11.7 0.4 L10.5 0.3 L9.4 0.3 L8.2 0.2 L7.0 0.2 L5.8 0.1 L4.7 0.1 L3.5 0.1 L2.3 0.0 L1.2 0.0 L0.0 0.0Z" fill="#d4d8bc"/><path d="M0 0 H105" stroke="#d4d8bc" stroke-width="1.2"/></svg>
<div style="left:1995.0px;top:1584px;width:107.6px;height:45px;background:rgba(12,20,25,0.24)"></div>
<div class="cl" style="left:1995.0px;top:1554px;width:108.3px;height:30px;background:linear-gradient(#646280,#575573);border:1px solid #3b3a4f;border-radius:4px 4px 2px 2px"><svg style="left:2px;top:7px" width="18" height="15" viewBox="0 0 18 15"><path d="M0 0 Q1.5 6.5 9 7.5 Q1.5 8.5 0 15 Z" fill="#f0f4f2"/><path d="M10.5 2.5 Q11 7 17.5 7.5 Q11 8 10.5 12.5 Q10 8 5.5 7.5 Q10 7 10.5 2.5Z" fill="#f0f4f2"/></svg><svg style="left:25px;top:0px;overflow:visible" width="77.6" height="30"><text x="0" y="21" font-family="Liberation Sans" font-size="24" fill="#e6eaec" textLength="77.6" lengthAdjust="spacingAndGlyphs">SSE..BPM</text></svg></div>
<svg style="left:1995.0px;top:1592px" width="108" height="40" viewBox="0 -34 108 40"><path d="M0 0 L0.0 -0.0 L1.2 -0.0 L2.4 -0.0 L3.6 -0.0 L4.8 -0.1 L6.0 -0.1 L7.2 -0.1 L8.4 -0.1 L9.6 -0.1 L10.8 -0.2 L12.0 -0.2 L13.2 -0.2 L14.3 -0.3 L15.5 -0.3 L16.7 -0.3 L17.9 -0.4 L19.1 -0.4 L20.3 -0.5 L21.5 -0.5 L22.7 -0.5 L23.9 -0.6 L25.1 -0.6 L26.3 -0.7 L27.5 -0.7 L28.7 -0.8 L29.9 -0.8 L31.1 -0.9 L32.3 -0.9 L33.5 -1.0 L34.7 -1.0 L35.9 -1.1 L37.1 -1.1 L38.3 -1.2 L39.5 -1.3 L40.6 -1.3 L41.8 -1.4 L43.0 -1.4 L44.2 -1.5 L45.4 -1.6 L46.6 -1.6 L47.8 -1.7 L49.0 -1.7 L50.2 -1.8 L51.4 -1.9 L52.6 -1.9 L53.8 -2.0 L55.0 -8.7 L56.2 -14.1 L57.4 -14.7 L58.6 -11.8 L59.8 -11.8 L61.0 -10.5 L62.2 -6.8 L63.4 -5.8 L64.6 -7.9 L65.8 -5.3 L67.0 -4.6 L68.1 -5.8 L69.3 -4.1 L70.5 -4.3 L71.7 -3.2 L72.9 -3.1 L74.1 -2.1 L75.3 -2.5 L76.5 -2.5 L77.7 -1.9 L78.9 -1.9 L80.1 -1.7 L81.3 -1.1 L82.5 -1.3 L83.7 -1.2 L84.9 -1.1 L86.1 -1.0 L87.3 -0.9 L88.5 -0.8 L89.7 -0.8 L90.9 -0.7 L92.1 -0.6 L93.3 -0.6 L94.4 -0.5 L95.6 -0.5 L96.8 -0.4 L98.0 -0.3 L99.2 -0.3 L100.4 -0.2 L101.6 -0.2 L102.8 -0.1 L104.0 -0.1 L105.2 -0.1 L106.4 -0.0 L107.6 -0.0 L107.6 0.0 L106.4 0.0 L105.2 0.0 L104.0 0.0 L102.8 0.0 L101.6 0.1 L100.4 0.1 L99.2 0.1 L98.0 0.1 L96.8 0.1 L95.6 0.1 L94.4 0.2 L93.3 0.2 L92.1 0.2 L90.9 0.2 L89.7 0.2 L88.5 0.2 L87.3 0.3 L86.1 0.3 L84.9 0.3 L83.7 0.4 L82.5 0.4 L81.3 0.3 L80.1 0.5 L78.9 0.6 L77.7 0.6 L76.5 0.7 L75.3 0.7 L74.1 0.6 L72.9 0.9 L71.7 1.0 L70.5 1.3 L69.3 1.2 L68.1 1.7 L67.0 1.4 L65.8 1.6 L64.6 2.4 L63.4 1.7 L62.2 2.0 L61.0 3.1 L59.8 3.5 L58.6 3.6 L57.4 4.4 L56.2 4.2 L55.0 2.6 L53.8 0.6 L52.6 0.6 L51.4 0.6 L50.2 0.5 L49.0 0.5 L47.8 0.5 L46.6 0.5 L45.4 0.5 L44.2 0.4 L43.0 0.4 L41.8 0.4 L40.6 0.4 L39.5 0.4 L38.3 0.4 L37.1 0.3 L35.9 0.3 L34.7 0.3 L33.5 0.3 L32.3 0.3 L31.1 0.3 L29.9 0.2 L28.7 0.2 L27.5 0.2 L26.3 0.2 L25.1 0.2 L23.9 0.2 L22.7 0.2 L21.5 0.2 L20.3 0.1 L19.1 0.1 L17.9 0.1 L16.7 0.1 L15.5 0.1 L14.3 0.1 L13.2 0.1 L12.0 0.1 L10.8 0.1 L9.6 0.0 L8.4 0.0 L7.2 0.0 L6.0 0.0 L4.8 0.0 L3.6 0.0 L2.4 0.0 L1.2 0.0 L0.0 0.0Z" fill="#b9b8d8"/><path d="M0 0 H108" stroke="#b9b8d8" stroke-width="1.2"/></svg>
<div style="left:2252.4px;top:1584px;width:52.4px;height:45px;background:rgba(12,20,25,0.24)"></div>
<div class="cl" style="left:2252.4px;top:1554px;width:53.1px;height:30px;background:linear-gradient(#627177,#55646a);border:1px solid #3a4448;border-radius:4px 4px 2px 2px"><svg style="left:2px;top:7px" width="18" height="15" viewBox="0 0 18 15"><path d="M0 0 Q1.5 6.5 9 7.5 Q1.5 8.5 0 15 Z" fill="#f0f4f2"/><path d="M10.5 2.5 Q11 7 17.5 7.5 Q11 8 10.5 12.5 Q10 8 5.5 7.5 Q10 7 10.5 2.5Z" fill="#f0f4f2"/></svg><svg style="left:25px;top:0px;overflow:visible" width="22.4" height="30"><text x="0" y="21" font-family="Liberation Sans" font-size="24" fill="#e6eaec" textLength="22.4" lengthAdjust="spacingAndGlyphs">C..</text></svg></div>
<svg style="left:2252.4px;top:1592px" width="52" height="40" viewBox="0 -34 52 40"><path d="M0 0 L0.0 -0.0 L0.6 -0.1 L1.2 -0.2 L1.7 -0.4 L2.3 -0.6 L2.9 -0.9 L3.5 -1.2 L4.1 -1.5 L4.7 -1.8 L5.2 -2.1 L5.8 -2.5 L6.4 -2.9 L7.0 -3.3 L7.6 -3.7 L8.2 -4.1 L8.7 -4.6 L9.3 -5.0 L9.9 -5.5 L10.5 -6.0 L11.1 -20.4 L11.6 -34.1 L12.2 -37.3 L12.8 -31.7 L13.4 -33.2 L14.0 -31.2 L14.6 -21.4 L15.1 -19.2 L15.7 -27.5 L16.3 -19.3 L16.9 -17.7 L17.5 -23.6 L18.0 -17.3 L18.6 -19.1 L19.2 -15.1 L19.8 -15.2 L20.4 -10.9 L21.0 -13.2 L21.5 -13.6 L22.1 -10.9 L22.7 -11.2 L23.3 -10.2 L23.9 -6.9 L24.5 -9.3 L25.0 -8.1 L25.6 -6.5 L26.2 -5.2 L26.8 -7.6 L27.4 -5.9 L27.9 -6.3 L28.5 -6.4 L29.1 -5.6 L29.7 -5.8 L30.3 -4.3 L30.9 -5.0 L31.4 -4.0 L32.0 -3.9 L32.6 -3.7 L33.2 -3.5 L33.8 -3.3 L34.4 -3.2 L34.9 -3.0 L35.5 -2.9 L36.1 -2.7 L36.7 -2.6 L37.3 -2.5 L37.8 -2.3 L38.4 -2.2 L39.0 -2.1 L39.6 -2.0 L40.2 -1.9 L40.8 -1.7 L41.3 -1.6 L41.9 -1.5 L42.5 -1.4 L43.1 -1.3 L43.7 -1.2 L44.2 -1.1 L44.8 -1.0 L45.4 -0.9 L46.0 -0.8 L46.6 -0.8 L47.2 -0.7 L47.7 -0.6 L48.3 -0.5 L48.9 -0.4 L49.5 -0.3 L50.1 -0.3 L50.7 -0.2 L51.2 -0.1 L51.8 -0.0 L52.4 -0.0 L52.4 0.0 L51.8 0.0 L51.2 0.0 L50.7 0.1 L50.1 0.1 L49.5 0.1 L48.9 0.1 L48.3 0.1 L47.7 0.2 L47.2 0.2 L46.6 0.2 L46.0 0.3 L45.4 0.3 L44.8 0.3 L44.2 0.3 L43.7 0.4 L43.1 0.4 L42.5 0.4 L41.9 0.5 L41.3 0.5 L40.8 0.5 L40.2 0.6 L39.6 0.6 L39.0 0.6 L38.4 0.7 L37.8 0.7 L37.3 0.7 L36.7 0.8 L36.1 0.8 L35.5 0.9 L34.9 0.9 L34.4 0.9 L33.8 1.0 L33.2 1.0 L32.6 1.1 L32.0 1.2 L31.4 1.2 L30.9 1.5 L30.3 1.3 L29.7 1.7 L29.1 1.7 L28.5 1.9 L27.9 1.9 L27.4 1.8 L26.8 2.3 L26.2 1.6 L25.6 2.0 L25.0 2.4 L24.5 2.8 L23.9 2.1 L23.3 3.1 L22.7 3.4 L22.1 3.3 L21.5 4.1 L21.0 3.9 L20.4 3.3 L19.8 4.6 L19.2 4.5 L18.6 5.0 L18.0 5.0 L17.5 5.0 L16.9 5.0 L16.3 5.0 L15.7 5.0 L15.1 5.0 L14.6 5.0 L14.0 5.0 L13.4 5.0 L12.8 5.0 L12.2 5.0 L11.6 5.0 L11.1 5.0 L10.5 1.8 L9.9 1.7 L9.3 1.5 L8.7 1.4 L8.2 1.2 L7.6 1.1 L7.0 1.0 L6.4 0.9 L5.8 0.7 L5.2 0.6 L4.7 0.5 L4.1 0.4 L3.5 0.3 L2.9 0.3 L2.3 0.2 L1.7 0.1 L1.2 0.1 L0.6 0.0 L0.0 0.0Z" fill="#c5d3dc"/><path d="M0 0 H52" stroke="#c5d3dc" stroke-width="1.2"/></svg>
<div style="left:2427.3px;top:1584px;width:106.1px;height:45px;background:rgba(12,20,25,0.24)"></div>
<div class="cl" style="left:2427.3px;top:1554px;width:106.8px;height:30px;background:linear-gradient(#737257,#66654b);border:1px solid #464533;border-radius:4px 4px 2px 2px"><svg style="left:2px;top:7px" width="18" height="15" viewBox="0 0 18 15"><path d="M0 0 Q1.5 6.5 9 7.5 Q1.5 8.5 0 15 Z" fill="#f0f4f2"/><path d="M10.5 2.5 Q11 7 17.5 7.5 Q11 8 10.5 12.5 Q10 8 5.5 7.5 Q10 7 10.5 2.5Z" fill="#f0f4f2"/></svg><svg style="left:25px;top:0px;overflow:visible" width="76.1" height="30"><text x="0" y="21" font-family="Liberation Sans" font-size="24" fill="#e6eaec" textLength="76.1" lengthAdjust="spacingAndGlyphs">CAT..pm</text></svg></div>
<svg style="left:2427.3px;top:1592px" width="106" height="40" viewBox="0 -34 106 40"><path d="M0 0 L0.0 -0.0 L1.2 -0.0 L2.4 -0.1 L3.5 -0.2 L4.7 -0.3 L5.9 -0.4 L7.1 -0.6 L8.3 -0.7 L9.4 -0.9 L10.6 -1.1 L11.8 -1.3 L13.0 -1.5 L14.1 -1.7 L15.3 -1.9 L16.5 -2.1 L17.7 -2.3 L18.9 -2.6 L20.0 -2.8 L21.2 -3.1 L22.4 -3.3 L23.6 -3.6 L24.8 -3.8 L25.9 -4.1 L27.1 -4.4 L28.3 -4.7 L29.5 -5.0 L30.7 -5.3 L31.8 -5.6 L33.0 -5.9 L34.2 -6.2 L35.4 -6.6 L36.5 -6.9 L37.7 -7.2 L38.9 -7.6 L40.1 -7.9 L41.3 -8.3 L42.4 -8.6 L43.6 -9.0 L44.8 -9.4 L46.0 -9.7 L47.2 -10.1 L48.3 -10.5 L49.5 -10.9 L50.7 -19.2 L51.9 -30.8 L53.0 -36.8 L54.2 -39.3 L55.4 -32.6 L56.6 -33.3 L57.8 -30.5 L58.9 -20.5 L60.1 -18.0 L61.3 -25.4 L62.5 -17.4 L63.7 -15.7 L64.8 -20.7 L66.0 -15.0 L67.2 -16.4 L68.4 -12.8 L69.6 -12.8 L70.7 -9.1 L71.9 -11.0 L73.1 -11.3 L74.3 -9.0 L75.4 -9.3 L76.6 -8.4 L77.8 -5.6 L79.0 -7.6 L80.2 -6.3 L81.3 -5.9 L82.5 -5.5 L83.7 -5.1 L84.9 -4.8 L86.1 -4.4 L87.2 -4.1 L88.4 -3.8 L89.6 -3.5 L90.8 -3.2 L92.0 -2.9 L93.1 -2.6 L94.3 -2.3 L95.5 -2.0 L96.7 -1.8 L97.8 -1.5 L99.0 -1.2 L100.2 -1.0 L101.4 -0.8 L102.6 -0.5 L103.7 -0.3 L104.9 -0.1 L106.1 -0.0 L106.1 0.0 L104.9 0.0 L103.7 0.1 L102.6 0.2 L101.4 0.2 L100.2 0.3 L99.0 0.4 L97.8 0.4 L96.7 0.5 L95.5 0.6 L94.3 0.7 L93.1 0.8 L92.0 0.9 L90.8 0.9 L89.6 1.0 L88.4 1.1 L87.2 1.2 L86.1 1.3 L84.9 1.4 L83.7 1.5 L82.5 1.6 L81.3 1.8 L80.2 1.9 L79.0 2.3 L77.8 1.7 L76.6 2.5 L75.4 2.8 L74.3 2.7 L73.1 3.4 L71.9 3.3 L70.7 2.7 L69.6 3.8 L68.4 3.8 L67.2 4.9 L66.0 4.5 L64.8 5.0 L63.7 4.7 L62.5 5.0 L61.3 5.0 L60.1 5.0 L58.9 5.0 L57.8 5.0 L56.6 5.0 L55.4 5.0 L54.2 5.0 L53.0 5.0 L51.9 5.0 L50.7 5.0 L49.5 3.3 L48.3 3.1 L47.2 3.0 L46.0 2.9 L44.8 2.8 L43.6 2.7 L42.4 2.6 L41.3 2.5 L40.1 2.4 L38.9 2.3 L37.7 2.2 L36.5 2.1 L35.4 2.0 L34.2 1.9 L33.0 1.8 L31.8 1.7 L30.7 1.6 L29.5 1.5 L28.3 1.4 L27.1 1.3 L25.9 1.2 L24.8 1.2 L23.6 1.1 L22.4 1.0 L21.2 0.9 L20.0 0.8 L18.9 0.8 L17.7 0.7 L16.5 0.6 L15.3 0.6 L14.1 0.5 L13.0 0.4 L11.8 0.4 L10.6 0.3 L9.4 0.3 L8.3 0.2 L7.1 0.2 L5.9 0.1 L4.7 0.1 L3.5 0.1 L2.4 0.0 L1.2 0.0 L0.0 0.0Z" fill="#d4d8bc"/><path d="M0 0 H106" stroke="#d4d8bc" stroke-width="1.2"/></svg>
<div style="left:2643.0px;top:1584px;width:105.5px;height:45px;background:rgba(12,20,25,0.24)"></div>
<div class="cl" style="left:2643.0px;top:1554px;width:106.2px;height:30px;background:linear-gradient(#737257,#66654b);border:1px solid #464533;border-radius:4px 4px 2px 2px"><svg style="left:2px;top:7px" width="18" height="15" viewBox="0 0 18 15"><path d="M0 0 Q1.5 6.5 9 7.5 Q1.5 8.5 0 15 Z" fill="#f0f4f2"/><path d="M10.5 2.5 Q11 7 17.5 7.5 Q11 8 10.5 12.5 Q10 8 5.5 7.5 Q10 7 10.5 2.5Z" fill="#f0f4f2"/></svg><svg style="left:25px;top:0px;overflow:visible" width="75.5" height="30"><text x="0" y="21" font-family="Liberation Sans" font-size="24" fill="#e6eaec" textLength="75.5" lengthAdjust="spacingAndGlyphs">CAT..pm</text></svg></div>
<svg style="left:2643.0px;top:1592px" width="106" height="40" viewBox="0 -34 106 40"><path d="M0 0 L0.0 -0.0 L1.2 -0.0 L2.3 -0.1 L3.5 -0.2 L4.7 -0.3 L5.9 -0.4 L7.0 -0.6 L8.2 -0.7 L9.4 -0.9 L10.6 -1.1 L11.7 -1.3 L12.9 -1.5 L14.1 -1.7 L15.2 -1.9 L16.4 -2.1 L17.6 -2.3 L18.8 -2.6 L19.9 -2.8 L21.1 -3.1 L22.3 -3.3 L23.4 -3.6 L24.6 -3.8 L25.8 -4.1 L27.0 -4.4 L28.1 -4.7 L29.3 -5.0 L30.5 -5.3 L31.6 -5.6 L32.8 -5.9 L34.0 -6.2 L35.2 -6.6 L36.3 -6.9 L37.5 -7.2 L38.7 -7.6 L39.9 -7.9 L41.0 -8.3 L42.2 -8.6 L43.4 -9.0 L44.5 -9.4 L45.7 -9.7 L46.9 -10.1 L48.1 -10.5 L49.2 -10.9 L50.4 -19.2 L51.6 -30.8 L52.8 -36.8 L53.9 -39.3 L55.1 -32.6 L56.3 -33.3 L57.4 -30.5 L58.6 -20.5 L59.8 -18.0 L61.0 -25.4 L62.1 -17.4 L63.3 -15.7 L64.5 -20.7 L65.6 -15.0 L66.8 -16.4 L68.0 -12.8 L69.2 -12.8 L70.3 -9.1 L71.5 -11.0 L72.7 -11.3 L73.8 -9.0 L75.0 -9.3 L76.2 -8.4 L77.4 -5.6 L78.5 -7.6 L79.7 -6.3 L80.9 -5.9 L82.1 -5.5 L83.2 -5.1 L84.4 -4.8 L85.6 -4.4 L86.7 -4.1 L87.9 -3.8 L89.1 -3.5 L90.3 -3.2 L91.4 -2.9 L92.6 -2.6 L93.8 -2.3 L95.0 -2.0 L96.1 -1.8 L97.3 -1.5 L98.5 -1.2 L99.6 -1.0 L100.8 -0.8 L102.0 -0.5 L103.2 -0.3 L104.3 -0.1 L105.5 -0.0 L105.5 0.0 L104.3 0.0 L103.2 0.1 L102.0 0.2 L100.8 0.2 L99.6 0.3 L98.5 0.4 L97.3 0.4 L96.1 0.5 L95.0 0.6 L93.8 0.7 L92.6 0.8 L91.4 0.9 L90.3 0.9 L89.1 1.0 L87.9 1.1 L86.7 1.2 L85.6 1.3 L84.4 1.4 L83.2 1.5 L82.1 1.6 L80.9 1.8 L79.7 1.9 L78.5 2.3 L77.4 1.7 L76.2 2.5 L75.0 2.8 L73.8 2.7 L72.7 3.4 L71.5 3.3 L70.3 2.7 L69.2 3.8 L68.0 3.8 L66.8 4.9 L65.6 4.5 L64.5 5.0 L63.3 4.7 L62.1 5.0 L61.0 5.0 L59.8 5.0 L58.6 5.0 L57.4 5.0 L56.3 5.0 L55.1 5.0 L53.9 5.0 L52.8 5.0 L51.6 5.0 L50.4 5.0 L49.2 3.3 L48.1 3.1 L46.9 3.0 L45.7 2.9 L44.5 2.8 L43.4 2.7 L42.2 2.6 L41.0 2.5 L39.9 2.4 L38.7 2.3 L37.5 2.2 L36.3 2.1 L35.2 2.0 L34.0 1.9 L32.8 1.8 L31.6 1.7 L30.5 1.6 L29.3 1.5 L28.1 1.4 L27.0 1.3 L25.8 1.2 L24.6 1.2 L23.4 1.1 L22.3 1.0 L21.1 0.9 L19.9 0.8 L18.8 0.8 L17.6 0.7 L16.4 0.6 L15.2 0.6 L14.1 0.5 L12.9 0.4 L11.7 0.4 L10.6 0.3 L9.4 0.3 L8.2 0.2 L7.0 0.2 L5.9 0.1 L4.7 0.1 L3.5 0.1 L2.3 0.0 L1.2 0.0 L0.0 0.0Z" fill="#d4d8bc"/><path d="M0 0 H106" stroke="#d4d8bc" stroke-width="1.2"/></svg></body></html>
